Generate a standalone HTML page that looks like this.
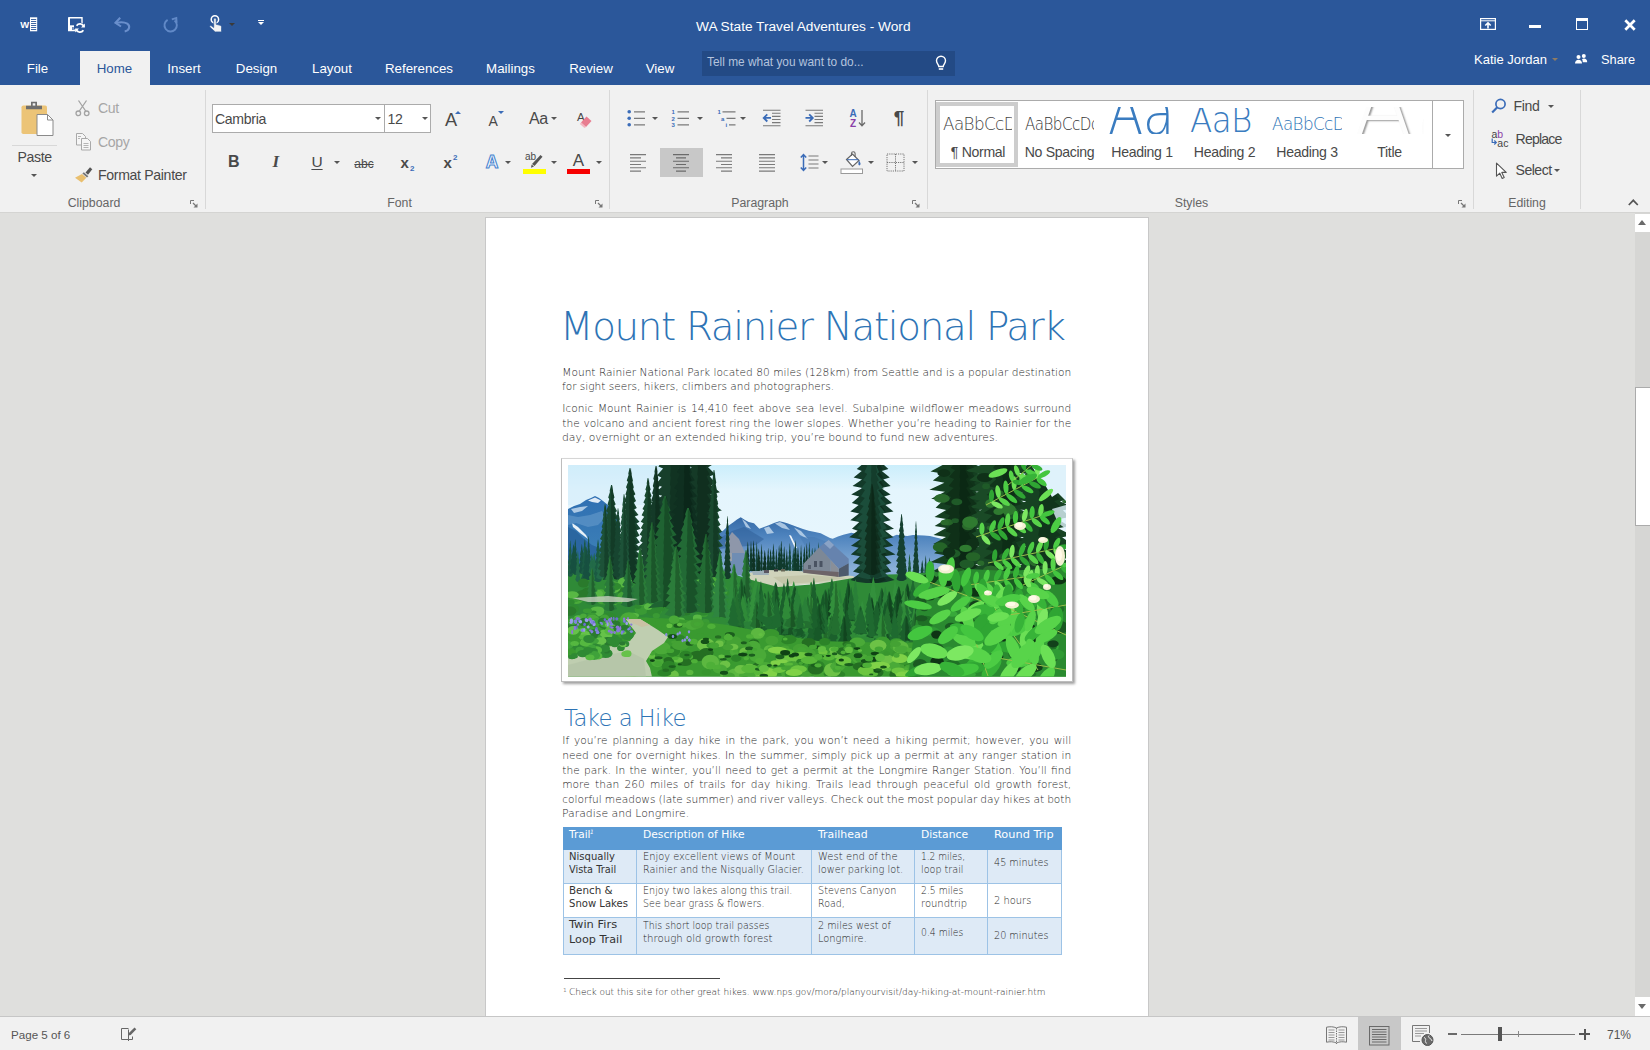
<!DOCTYPE html>
<html lang="en">
<head>
<meta charset="utf-8">
<title>WA State Travel Adventures - Word</title>
<style>
html,body{margin:0;padding:0;}
body{width:1650px;height:1050px;overflow:hidden;position:relative;background:#dfdfdd;font-family:"Liberation Sans",sans-serif;font-size:13px;color:#444;}
.a{position:absolute;white-space:nowrap;line-height:20px;}
.b{position:absolute;}
svg{position:absolute;overflow:visible;}
#titlebar{position:absolute;left:0;top:0;width:1650px;height:85px;background:#2b579a;}
#titlebar .a{color:#fff;}
.tab{font-size:13.300px;transform:translateX(-50%);}
#ribbon{position:absolute;left:0;top:85px;width:1650px;height:127px;background:#f1f1f1;border-bottom:1px solid #d4d4d2;}
#ribbon .a{color:#494949;font-size:13.5px;}
#ribbon .dis{color:#a6a6a6;}
#ribbon .gl{color:#666;font-size:12px;}
.vsep{position:absolute;top:5px;width:1px;height:119px;background:#d8d8d8;margin-left:-0.7px;}
.arr{position:absolute;width:0;height:0;border-left:3px solid transparent;border-right:3px solid transparent;border-top:3px solid #555;}
#page{position:absolute;left:485px;top:217px;width:662px;height:820px;background:#fff;border:1px solid #c8c8c8;}
#status{position:absolute;left:0;top:1016px;width:1650px;height:33px;background:#f1f1f1;border-top:1px solid #c6c6c6;}
#status .a{color:#555;font-size:12px;}
#vscroll{position:absolute;left:1635px;top:213px;width:15px;height:803px;background:#d6d6d4;}
.doc{font-family:"DejaVu Sans Light","DejaVu Sans","Liberation Sans",sans-serif;font-weight:200;}
</style>
</head>
<body>
<div id="titlebar">
  <!-- word icon -->
  <svg style="left:19px;top:15px" width="20" height="18" viewBox="0 0 20 18">
    <rect x="11" y="2.300" width="7.200" height="14" fill="#fff"/>
    <g stroke="#2b579a" stroke-width="0.900"><path d="M12 4.500h5.200M12 6.500h5.200M12 8.500h5.200M12 10.500h5.200M12 12.500h5.200M12 14.500h5.200"/></g>
    <text x="1.300" y="12.800" font-family="Liberation Sans, sans-serif" font-weight="bold" font-size="9.500" fill="#fff">W</text>
  </svg>
  <!-- save/sync icon -->
  <svg style="left:66px;top:15px" width="22" height="20" viewBox="0 0 22 20">
    <path d="M2.800 2.800H16V10" fill="none" stroke="#fff" stroke-width="1.400"/>
    <path d="M3 2.300V15.300H9.500" fill="none" stroke="#fff" stroke-width="2"/>
    <rect x="3" y="10.300" width="5" height="5.500" fill="#fff"/>
    <rect x="6.300" y="12" width="1.300" height="3" fill="#2b579a"/>
    <circle cx="14" cy="13" r="5.600" fill="#2b579a"/>
    <path d="M17.900 11.600a4.100 4.100 0 0 0-7.300-.9" fill="none" stroke="#fff" stroke-width="1.700"/>
    <path d="M10.100 14.400a4.100 4.100 0 0 0 7.300.9" fill="none" stroke="#fff" stroke-width="1.700"/>
    <path d="M18.900 8.600v3.900h-3.900z" fill="#fff"/><path d="M9.100 17.400v-3.900h3.900z" fill="#fff"/>
  </svg>
  <!-- undo -->
  <svg style="left:113px;top:16px" width="20" height="17" viewBox="0 0 20 17" fill="none" stroke="#6a8fcc" stroke-width="2.100" stroke-linejoin="miter">
    <path d="M7.200 1.800L2.500 6.800l5.500 3.700"/><path d="M3 6.800c4-.8 8.300-1 11.300.8 3.200 2.300 2.300 6.800-2.600 7.900" />
  </svg>
  <!-- redo -->
  <svg style="left:161px;top:15px" width="20" height="19" viewBox="0 0 20 19" fill="none" stroke="#6189c7" stroke-width="1.900">
    <path d="M6.600 4.900a6.200 6.200 0 1 0 7 .6"/><path d="M10.800 4.300l4.500-1.300.3 4.800" stroke-linejoin="miter"/>
  </svg>
  <!-- touch -->
  <svg style="left:206px;top:13px" width="18" height="21" viewBox="0 0 18 21">
    <circle cx="8.900" cy="6.400" r="3.700" fill="none" stroke="#fff" stroke-width="1.500"/>
    <path d="M7.700 6.300a1.250 1.250 0 0 1 2.500 0v5l3.900 1c1 .3 1.400 1 1.400 2v4.600H9.200L4 14.300c-.8-1 .2-2.200 1.300-1.500l2.400 1.700z" fill="#f4f4f4" stroke="#2b579a" stroke-width=".7"/>
  </svg>
  <div class="arr" style="left:228.500px;top:23px;border-top-color:#3a3a3a"></div>
  <!-- customize -->
  <div class="b" style="left:258px;top:19.500px;width:6px;height:1.300px;background:#fff"></div>
  <div class="arr" style="left:258px;top:22px;border-top-color:#fff;border-left-width:3px;border-right-width:3px;border-top-width:3.500px"></div>

  <div class="a" id="wtitle" style="left:696px;top:16.800px;font-size:13.700px">WA State Travel Adventures - Word</div>

  <!-- window controls -->
  <svg style="left:1480px;top:18px" width="16" height="12" viewBox="0 0 16 12" fill="none" stroke="#fff">
    <rect x="0.600" y="0.600" width="14.800" height="10.800" stroke-width="1.200"/>
    <path d="M0.600 2.800h14.800" stroke-width="1"/>
    <path d="M8 10.500V5.500M5.300 7.500L8 4.800l2.700 2.700" stroke-width="1.600"/>
  </svg>
  <div class="b" style="left:1529px;top:25.300px;width:12px;height:2.400px;background:#fff"></div>
  <div class="b" style="left:1576px;top:18px;width:10px;height:8px;border:1px solid #fff;border-top-width:3px"></div>
  <svg style="left:1624px;top:19px" width="12" height="12" viewBox="0 0 12 12" stroke="#fff" stroke-width="2.700"><path d="M1.300 1.300l9.400 9.400M10.700 1.300l-9.400 9.400"/></svg>

  <!-- tabs -->
  <div class="b" style="left:79.5px;top:51px;width:70.5px;height:34px;background:#f1f1f1"></div>
  <div class="a tab" style="left:37.5px;top:59px">File</div>
  <div class="a tab" style="left:114.5px;top:59px;color:#2b579a">Home</div>
  <div class="a tab" style="left:184px;top:59px">Insert</div>
  <div class="a tab" style="left:256.5px;top:59px">Design</div>
  <div class="a tab" style="left:332px;top:59px">Layout</div>
  <div class="a tab" style="left:419px;top:59px">References</div>
  <div class="a tab" style="left:510.5px;top:59px">Mailings</div>
  <div class="a tab" style="left:591px;top:59px">Review</div>
  <div class="a tab" style="left:660px;top:59px">View</div>

  <!-- tell me -->
  <div class="b" style="left:702px;top:51px;width:253px;height:24.500px;background:#234a85"></div>
  <div class="a" id="tellme" style="left:707px;top:52px;font-size:11.900px;color:#b4c3dd">Tell me what you want to do...</div>
  <svg style="left:934px;top:54px" width="14" height="18" viewBox="0 0 14 18" fill="none" stroke="#fff" stroke-width="1.400">
    <path d="M4.800 12.500c0-2-2.300-3-2.300-5.700a4.500 4.500 0 0 1 9 0c0 2.700-2.300 3.700-2.300 5.700z"/>
    <path d="M4.800 15h4.400" stroke-width="1.600"/>
  </svg>

  <!-- user -->
  <div class="a" id="user" style="left:1474px;top:49.800px;font-size:13px">Katie Jordan</div>
  <div class="arr" style="left:1552px;top:58px;border-top-color:#8f7c63"></div>
  <svg style="left:1574px;top:53px" width="14" height="12" viewBox="0 0 14 12" fill="#fff">
    <circle cx="4.500" cy="4" r="2"/><path d="M1 10.500c0-2.500 1.500-3.800 3.500-3.800s3.500 1.300 3.500 3.800z"/>
    <circle cx="9.800" cy="3" r="2"/><path d="M8 6.200c.6-.4 1.200-.6 1.900-.6 2 0 3.300 1.400 3.300 3.600H8.800c0-1.200-.3-2.200-.8-3z"/>
  </svg>
  <div class="a" id="share" style="left:1601px;top:49.800px;font-size:12.800px">Share</div>
</div>
<div id="ribbon">
<svg style="left:20.0px;top:15.0px" width="35" height="37" viewBox="0 0 35 37" >
<rect x="1.500" y="5.500" width="25.500" height="28.500" rx="1.800" fill="#ecc477"/>
<path d="M6 9.300V5.800h5V1.800h6v4h5v3.500z" fill="#6e6e6e"/>
<rect x="12.700" y="3.300" width="2.600" height="2.300" fill="#f1f1f1"/>
<path d="M17 14.500h10.500l5.500 5.500v15.500h-16z" fill="#fff" stroke="#8a8a8a" stroke-width="1"/>
<path d="M27.500 14.500v5.500h5.500" fill="none" stroke="#8a8a8a" stroke-width="1"/>
</svg>
<div class="b" style="left:12.0px;top:60.0px;width:45.0px;height:1.0px;background:#d8d8d8"></div>
<div class="a " id="paste" style="left:34.6px;top:62.1px;font-size:14.1px;transform:translateX(-50%);letter-spacing:-0.33px;">Paste</div>
<div class="arr" style="left:31.0px;top:88.5px;border-top-color:#555"></div>
<svg style="left:75.0px;top:15.0px" width="16" height="17" viewBox="0 0 16 17" ><g fill="none" stroke="#a3a3a3" stroke-width="1.300"><path d="M3.500 0.500l7.500 11M11.500 0.500L4 11.500"/><circle cx="3.300" cy="13.300" r="2.300"/><circle cx="11.700" cy="13.300" r="2.300"/></g></svg>
<div class="a dis" id="cut" style="left:98.0px;top:13.1px;font-size:14.1px;letter-spacing:-0.33px;">Cut</div>
<svg style="left:75.0px;top:47.0px" width="17" height="19" viewBox="0 0 17 19" ><g fill="#f6f6f6" stroke="#a9a9a9" stroke-width="1"><path d="M1.500 1.500h6l3 3v8.500h-9z"/><path d="M6.500 6.500h6l3 3v8.500h-9z"/></g><g stroke="#b5b5b5" stroke-width="1"><path d="M8.500 11.500h5M8.500 13.500h5M8.500 15.500h5"/><path d="M3 4.500h3M3 6.500h2"/></g></svg>
<div class="a dis" id="copy" style="left:98.0px;top:47.4px;font-size:14.1px;letter-spacing:-0.33px;">Copy</div>
<svg style="left:74.0px;top:81.0px" width="19" height="17" viewBox="0 0 19 17" ><path d="M11.500 6.500L16 1.200l2.300 2L14 8.700z" fill="#555"/><path d="M9.800 6.200l4.600 4-1.400 1.400-4.600-4z" fill="#777"/><path d="M8 8l4.300 3.800-4.600 4.700L1 11.800z" fill="#e9bf6f"/></svg>
<div class="a " id="fp" style="left:98.0px;top:79.8px;font-size:14.1px;letter-spacing:-0.33px;">Format Painter</div>
<div class="a gl" id="gclip" style="left:94.0px;top:107.7px;font-size:12.3px;transform:translateX(-50%);">Clipboard</div>
<svg style="left:190.0px;top:114.5px" width="8" height="8" viewBox="0 0 8 8" ><path d="M0.5 4V0.5H4" fill="none" stroke="#777" stroke-width="1"/><path d="M3 3l3.5 3.500" stroke="#777" stroke-width="1.200"/><path d="M7.500 3.500v4h-4z" fill="#777"/></svg>
<div class="vsep" style="left:206.0px"></div>
<div class="b" style="left:212.0px;top:19.0px;width:172.5px;height:28.5px;box-sizing:border-box;background:#fff;border:1px solid #ababab"></div>
<div class="b" style="left:383.5px;top:19.0px;width:47.5px;height:28.5px;box-sizing:border-box;background:#fff;border:1px solid #ababab"></div>
<div class="a " id="cambria" style="left:215.0px;top:23.8px;font-size:14.1px;letter-spacing:-0.33px;">Cambria</div>
<div class="arr" style="left:375.0px;top:31.5px;border-top-color:#555"></div>
<div class="a " id="fs12" style="left:387.5px;top:23.8px;font-size:14.1px;letter-spacing:-0.33px;">12</div>
<div class="arr" style="left:421.5px;top:31.5px;border-top-color:#555"></div>
<div class="a " id="growA" style="left:445.0px;top:24.7px;font-size:18.2px;">A</div>
<div class="b" style="left:455px;top:25.5px;width:0;height:0;border-left:3px solid transparent;border-right:3px solid transparent;border-bottom:3.500px solid #3b6cb8"></div>
<div class="a " id="shrinkA" style="left:488.5px;top:26.1px;font-size:14px;">A</div>
<div class="b" style="left:497.500px;top:25.5px;width:0;height:0;border-left:3px solid transparent;border-right:3px solid transparent;border-top:3.500px solid #3b6cb8"></div>
<div class="a " id="Aa" style="left:529.0px;top:23.5px;font-size:16px;letter-spacing:-0.5px;">Aa</div>
<div class="arr" style="left:551.0px;top:32.0px;border-top-color:#555"></div>
<div class="a " id="clrA" style="left:577.0px;top:22.0px;font-size:11.5px;">A</div>
<svg style="left:579.0px;top:30.0px" width="14" height="13" viewBox="0 0 14 13" ><path d="M7.500 1.500L12.500 6 7 12 2 7.500z" fill="#e87d90"/><path d="M2 7.500L7 12 5.500 13 0.800 9z" fill="#f3b5c0"/></svg>
<div class="a " id="bB" style="left:233.8px;top:67.2px;font-size:16px;transform:translateX(-50%);font-weight:bold;">B</div>
<div class="a " id="bI" style="left:275.8px;top:66.8px;font-size:17px;transform:translateX(-50%);font-style:italic;font-family:'Liberation Serif',serif;font-weight:bold;">I</div>
<div class="a " id="bU" style="left:317.0px;top:66.8px;font-size:15.5px;transform:translateX(-50%);text-decoration:underline;text-underline-offset:1.500px;">U</div>
<div class="arr" style="left:333.5px;top:75.5px;border-top-color:#555"></div>
<div class="a " id="babc" style="left:364.0px;top:68.8px;font-size:12px;transform:translateX(-50%);text-decoration:line-through;">abc</div>
<div class="a " id="xsub" style="left:400.5px;top:67.8px;font-size:15px;font-weight:bold;">x</div>
<div class="a " id="sub2" style="left:410.0px;top:73.7px;font-size:8px;color:#3b6cb8;font-weight:bold;">2</div>
<div class="a " id="xsup" style="left:443.5px;top:67.8px;font-size:15px;font-weight:bold;">x</div>
<div class="a " id="sup2" style="left:453.0px;top:62.7px;font-size:8px;color:#3b6cb8;font-weight:bold;">2</div>
<svg style="left:483px;top:68px" width="18" height="18" viewBox="0 0 18 18"><text x="9" y="15" text-anchor="middle" font-family="Liberation Sans, sans-serif" font-size="17.500" font-weight="bold" fill="#fff" stroke="#4a86d0" stroke-width="1.100">A</text></svg>
<div class="arr" style="left:505.0px;top:75.5px;border-top-color:#555"></div>
<div class="a " id="hlab" style="left:525.0px;top:62.0px;font-size:10px;">ab</div>
<svg style="left:526.5px;top:68.5px" width="16" height="16" viewBox="0 0 16 16" ><path d="M13.500 1l2 1.800L7.500 12 5 10z" fill="#555"/><path d="M4.600 10.600l2.400 2-3 1.200z" fill="#555"/></svg>
<div class="b" style="left:523.0px;top:84.0px;width:23.0px;height:5.0px;background:#ffff00"></div>
<div class="arr" style="left:550.5px;top:75.5px;border-top-color:#555"></div>
<div class="a " id="fcA" style="left:578.5px;top:66.1px;font-size:17px;transform:translateX(-50%);">A</div>
<div class="b" style="left:567.0px;top:84.0px;width:23.0px;height:5.0px;background:#f60000"></div>
<div class="arr" style="left:595.5px;top:75.5px;border-top-color:#555"></div>
<div class="a gl" id="gfont" style="left:399.5px;top:107.7px;font-size:12.3px;transform:translateX(-50%);">Font</div>
<svg style="left:595.0px;top:114.5px" width="8" height="8" viewBox="0 0 8 8" ><path d="M0.5 4V0.5H4" fill="none" stroke="#777" stroke-width="1"/><path d="M3 3l3.5 3.500" stroke="#777" stroke-width="1.200"/><path d="M7.500 3.500v4h-4z" fill="#777"/></svg>
<div class="vsep" style="left:610.0px"></div>
<svg style="left:627.0px;top:24.0px" width="19" height="18" viewBox="0 0 19 18" ><g fill="#3b6cb8"><circle cx="2.200" cy="2.800" r="1.800"/><circle cx="2.200" cy="9.300" r="1.800"/><circle cx="2.200" cy="15.800" r="1.800"/></g><g stroke="#7a7a7a" stroke-width="1.200"><path d="M7 2.800h11M7 9.300h11M7 15.800h11"/></g></svg>
<div class="arr" style="left:652.0px;top:32.0px;border-top-color:#555"></div>
<svg style="left:671.0px;top:23.0px" width="19" height="20" viewBox="0 0 19 20" ><g font-family="Liberation Sans, sans-serif" font-size="6" fill="#3b6cb8" font-weight="bold"><text x="0.500" y="6">1</text><text x="0.500" y="12.500">2</text><text x="0.500" y="19">3</text></g><g stroke="#7a7a7a" stroke-width="1.200"><path d="M6.500 3.800h11.500M6.500 10.300h11.500M6.500 16.800h11.500"/></g></svg>
<div class="arr" style="left:696.7px;top:32.0px;border-top-color:#555"></div>
<svg style="left:717.0px;top:23.0px" width="20" height="20" viewBox="0 0 20 20" ><g font-family="Liberation Sans, sans-serif" font-size="6" fill="#3b6cb8" font-weight="bold"><text x="0.500" y="6">1</text><text x="4" y="12.500">a</text><text x="8.500" y="19">i</text></g><g stroke="#7a7a7a" stroke-width="1.200"><path d="M5.500 3.800h13M9.500 10.300h9M12 16.800h6.500"/></g></svg>
<div class="arr" style="left:739.7px;top:32.0px;border-top-color:#555"></div>
<svg style="left:762.0px;top:24.0px" width="19" height="18" viewBox="0 0 19 18" ><g stroke="#7a7a7a" stroke-width="1.100"><path d="M1 1.200h17.500M10 4.300h8.500M10 7.400h8.500M10 10.500h8.500M10 13.600h8.500M1 16.700h17.500"/></g><path d="M9 8.900H2M5.300 5.300L1.700 8.900l3.600 3.600" fill="none" stroke="#3b6cb8" stroke-width="1.800"/></svg>
<svg style="left:805.0px;top:24.0px" width="19" height="18" viewBox="0 0 19 18" ><g stroke="#7a7a7a" stroke-width="1.100"><path d="M0.500 1.200h17.500M9.500 4.300h8.500M9.500 7.400h8.500M9.500 10.500h8.500M9.500 13.600h8.500M0.500 16.700h17.500"/></g><path d="M0.500 8.900h7M4.200 5.300l3.600 3.600-3.600 3.600" fill="none" stroke="#3b6cb8" stroke-width="1.800"/></svg>
<svg style="left:849.0px;top:24.0px" width="18" height="19" viewBox="0 0 18 19" ><g font-family="Liberation Sans, sans-serif" font-weight="bold" font-size="10"><text x="0.500" y="8" fill="#3b6cb8">A</text><text x="1" y="17.500" fill="#8a3fa8">Z</text></g><path d="M13 1v15.500M10 13.500l3 3.300 3-3.300" fill="none" stroke="#6a6a6a" stroke-width="1.300"/></svg>
<div class="a " id="pil" style="left:899.0px;top:22.9px;font-size:19px;transform:translateX(-50%);font-weight:bold;">¶</div>
<div class="b" style="left:659.5px;top:63.0px;width:43.5px;height:29.0px;background:#c8c8c8"></div>
<svg style="left:630.0px;top:69.2px" width="17" height="18" viewBox="0 0 17 18" ><path d="M0 0.6h16M0 3.9h11M0 7.2h16M0 10.5h11M0 13.8h16M0 17.1h11" stroke="#7a7a7a" stroke-width="1.100" fill="none"/></svg>
<svg style="left:672.5px;top:69.2px" width="17" height="18" viewBox="0 0 17 18" ><path d="M0 0.6h16M3 3.9h10M0 7.2h16M3 10.5h10M0 13.8h16M3 17.1h10" stroke="#6a6a6a" stroke-width="1.100" fill="none"/></svg>
<svg style="left:715.5px;top:69.2px" width="17" height="18" viewBox="0 0 17 18" ><path d="M0 0.6h16M5 3.9h11M0 7.2h16M5 10.5h11M0 13.8h16M5 17.1h11" stroke="#7a7a7a" stroke-width="1.100" fill="none"/></svg>
<svg style="left:758.5px;top:69.2px" width="17" height="18" viewBox="0 0 17 18" ><path d="M0 0.6h16M0 3.9h16M0 7.2h16M0 10.5h16M0 13.8h16M0 17.1h16" stroke="#7a7a7a" stroke-width="1.100" fill="none"/></svg>
<svg style="left:800.0px;top:68.0px" width="19" height="19" viewBox="0 0 19 19" ><path d="M3.500 1.500v16M0.800 4.500L3.500 1.500l2.700 3M0.800 14.500l2.700 3 2.700-3" fill="none" stroke="#3b6cb8" stroke-width="1.500"/><g stroke="#7a7a7a" stroke-width="1.200"><path d="M8.500 3h10M8.500 7h10M8.500 11h10M8.500 15h10"/></g></svg>
<div class="arr" style="left:822.3px;top:75.5px;border-top-color:#555"></div>
<svg style="left:840.0px;top:66.0px" width="24" height="23" viewBox="0 0 24 23" ><path d="M6.500 8.500l6-5.500 6.500 6.500-6.500 6z" fill="#fff" stroke="#666" stroke-width="1.200"/><path d="M11.500 5V2.500a1.800 1.800 0 0 1 3.600 0V6" fill="none" stroke="#666" stroke-width="1.100"/><path d="M19 9.500c1.800 2.500 2 4 .8 4.800-1.300.5-2-1-.8-4.800z" fill="#3b6cb8"/><path d="M7 8.700h11.500" stroke="#3b6cb8" stroke-width="1"/><rect x="1" y="18" width="21.500" height="4.500" fill="#fff" stroke="#9a9a9a" stroke-width="1"/></svg>
<div class="arr" style="left:868.0px;top:75.5px;border-top-color:#555"></div>
<svg style="left:886.0px;top:67.5px" width="19" height="19" viewBox="0 0 19 19" ><g stroke="#777" stroke-width="1" stroke-dasharray="1.200 1" fill="none"><rect x="1" y="1" width="17" height="17"/><path d="M9.500 1v17M1 9.500h17"/></g></svg>
<div class="arr" style="left:912.3px;top:75.5px;border-top-color:#555"></div>
<div class="a gl" id="gpara" style="left:760.0px;top:107.7px;font-size:12.3px;transform:translateX(-50%);">Paragraph</div>
<svg style="left:912.0px;top:114.5px" width="8" height="8" viewBox="0 0 8 8" ><path d="M0.5 4V0.5H4" fill="none" stroke="#777" stroke-width="1"/><path d="M3 3l3.5 3.500" stroke="#777" stroke-width="1.200"/><path d="M7.500 3.500v4h-4z" fill="#777"/></svg>
<div class="vsep" style="left:927.5px"></div>
<div class="b" style="left:935.0px;top:15.0px;width:528.5px;height:68.5px;box-sizing:border-box;background:#fff;border:1px solid #ababab"></div>
<div class="b" style="left:1432.0px;top:15.5px;width:1.0px;height:67.5px;background:#ababab"></div>
<div class="b" style="left:936.0px;top:17.0px;width:82.0px;height:64.5px;box-sizing:border-box;border:4px solid #cdcdcd"></div>
<div class="arr" style="left:1444.5px;top:49.0px;border-top-color:#555"></div>
<div class="a " id="st0" style="left:978.0px;top:57.4px;font-size:14.1px;transform:translateX(-50%);letter-spacing:-0.33px;">¶ Normal</div>
<div class="a " id="st1" style="left:1059.5px;top:57.4px;font-size:14.1px;transform:translateX(-50%);letter-spacing:-0.33px;">No Spacing</div>
<div class="a " id="st2" style="left:1142.0px;top:57.4px;font-size:14.1px;transform:translateX(-50%);letter-spacing:-0.33px;">Heading 1</div>
<div class="a " id="st3" style="left:1224.5px;top:57.4px;font-size:14.1px;transform:translateX(-50%);letter-spacing:-0.33px;">Heading 2</div>
<div class="a " id="st4" style="left:1307.0px;top:57.4px;font-size:14.1px;transform:translateX(-50%);letter-spacing:-0.33px;">Heading 3</div>
<div class="a " id="st5" style="left:1389.5px;top:57.4px;font-size:14.1px;transform:translateX(-50%);letter-spacing:-0.33px;">Title</div>
<div class="b" style="left:943.0px;top:19.0px;width:68.6px;height:32.0px;overflow:hidden"><div class="a" id="pv0" style="left:0px;top:10.1px;line-height:20px;font-size:16.8px;color:#444;transform-origin:0 50%;transform:scaleX(1);font-family:'DejaVu Sans Light','DejaVu Sans',sans-serif;font-weight:200;letter-spacing:-0.6px;">AaBbCcDd</div></div>
<div class="b" style="left:1025.0px;top:19.0px;width:69.0px;height:32.0px;overflow:hidden"><div class="a" id="pv1" style="left:0px;top:10.1px;line-height:20px;font-size:16.8px;color:#333;transform-origin:0 50%;transform:scaleX(0.9);font-family:'DejaVu Sans Light','DejaVu Sans',sans-serif;font-weight:200;letter-spacing:-0.6px;">AaBbCcDd</div></div>
<div class="b" style="left:1107.0px;top:22.0px;width:67.0px;height:26.5px;overflow:hidden"><div class="a" id="pv2" style="left:1px;top:-23.8px;line-height:60px;font-size:60px;color:#3a7cc0;transform-origin:0 50%;transform:scaleX(0.86);font-family:'DejaVu Sans Light','DejaVu Sans',sans-serif;font-weight:200;letter-spacing:-0.6px;">Aa</div></div>
<div class="b" style="left:1190.0px;top:22.5px;width:66.0px;height:26.0px;overflow:hidden"><div class="a" id="pv3" style="left:0px;top:-9.1px;line-height:44px;font-size:35px;color:#3a7cc0;transform-origin:0 50%;transform:scaleX(0.93);font-family:'DejaVu Sans Light','DejaVu Sans',sans-serif;font-weight:200;letter-spacing:-0.6px;">AaB</div></div>
<div class="b" style="left:1272.0px;top:19.0px;width:70.0px;height:32.0px;overflow:hidden"><div class="a" id="pv4" style="left:0px;top:9.7px;line-height:20px;font-size:16.8px;color:#2e74b5;transform-origin:0 50%;transform:scaleX(1);font-family:'DejaVu Sans Light','DejaVu Sans',sans-serif;font-weight:200;letter-spacing:-0.6px;">AaBbCcDd</div></div>
<div class="b" style="left:1355.0px;top:22.0px;width:69.0px;height:27.0px;overflow:hidden"><div class="a" id="pv5" style="left:-4px;top:-54.0px;line-height:110px;font-size:104px;color:#fdfdfd;transform-origin:0 50%;transform:scaleX(0.9);font-family:'DejaVu Sans Light','DejaVu Sans',sans-serif;font-weight:200;letter-spacing:-0.6px;text-shadow:2px 1px 2px #9a9a9a;">Aa</div></div>
<div class="a gl" id="gsty" style="left:1191.5px;top:107.7px;font-size:12.3px;transform:translateX(-50%);">Styles</div>
<svg style="left:1457.5px;top:114.5px" width="8" height="8" viewBox="0 0 8 8" ><path d="M0.5 4V0.5H4" fill="none" stroke="#777" stroke-width="1"/><path d="M3 3l3.5 3.500" stroke="#777" stroke-width="1.200"/><path d="M7.500 3.500v4h-4z" fill="#777"/></svg>
<div class="vsep" style="left:1473.5px"></div>
<svg style="left:1491.0px;top:13.0px" width="16" height="16" viewBox="0 0 16 16" ><circle cx="9.500" cy="6" r="4.600" fill="none" stroke="#3b6cb8" stroke-width="1.700"/><path d="M6.300 9.300L1.200 14.500" stroke="#3b6cb8" stroke-width="2.200"/></svg>
<div class="a " id="find" style="left:1513.5px;top:11.3px;font-size:14.1px;letter-spacing:-0.33px;">Find</div>
<div class="arr" style="left:1547.6px;top:19.5px;border-top-color:#555"></div>
<svg style="left:1491.0px;top:44.0px" width="19" height="20" viewBox="0 0 19 20" ><g font-family="Liberation Sans, sans-serif" font-size="10.500"><text x="0.500" y="8.500" fill="#444">a</text><text x="6.300" y="8.500" fill="#8a3fa8">b</text><text x="6.300" y="18" fill="#444">ac</text></g><path d="M1.200 9.500v4h3.800M3.300 11.500l2 2-2 2" fill="none" stroke="#3b6cb8" stroke-width="1.200"/></svg>
<div class="a " id="repl" style="left:1515.5px;top:43.6px;font-size:14.1px;letter-spacing:-0.33px;letter-spacing:-0.8px;">Replace</div>
<svg style="left:1495.0px;top:77.0px" width="13" height="18" viewBox="0 0 13 18" ><path d="M1.500 1.200v13l3.300-3 2.400 5.300 2-.9-2.400-5.200h4.400z" fill="#fff" stroke="#555" stroke-width="1.100" stroke-linejoin="round"/></svg>
<div class="a " id="sel" style="left:1515.5px;top:75.4px;font-size:14.1px;letter-spacing:-0.33px;letter-spacing:-0.5px;">Select</div>
<div class="arr" style="left:1554.0px;top:84.0px;border-top-color:#555"></div>
<div class="a gl" id="gedit" style="left:1527.0px;top:107.7px;font-size:12.3px;transform:translateX(-50%);">Editing</div>
<div class="vsep" style="left:1581.0px"></div>
<svg style="left:1628.0px;top:114.0px" width="11" height="7" viewBox="0 0 11 7" ><path d="M0.800 6L5.300 1.300 9.800 6" fill="none" stroke="#555" stroke-width="1.700"/></svg>
</div>
<div id="page">
<div class="a dl" id="d1" style="left:73.6px;top:78.2px;font-size:39.4px;line-height:60px;color:#2e74b5;font-family:'DejaVu Sans Light','DejaVu Sans',sans-serif;font-weight:200;transform-origin:0 50%;transform:scaleX(0.9834);letter-spacing:-1.3px;">Mount Rainier National Park</div>
<div class="a dl" id="d2" style="left:76.3px;top:143.6px;font-size:10.6px;line-height:20px;color:#262626;font-family:'DejaVu Sans Light','DejaVu Sans',sans-serif;font-weight:200;word-spacing:0.127px;">Mount Rainier National Park located 80 miles (128km) from Seattle and is a popular destination</div>
<div class="a dl" id="d3" style="left:76.3px;top:158.0px;font-size:10.6px;line-height:20px;color:#262626;font-family:'DejaVu Sans Light','DejaVu Sans',sans-serif;font-weight:200;transform-origin:0 50%;transform:scaleX(0.9946);">for sight seers, hikers, climbers and photographers.</div>
<div class="a dl" id="d4" style="left:76.3px;top:179.6px;font-size:10.6px;line-height:20px;color:#262626;font-family:'DejaVu Sans Light','DejaVu Sans',sans-serif;font-weight:200;word-spacing:1.394px;">Iconic Mount Rainier is 14,410 feet above sea level. Subalpine wildflower meadows surround</div>
<div class="a dl" id="d5" style="left:76.3px;top:195.1px;font-size:10.6px;line-height:20px;color:#262626;font-family:'DejaVu Sans Light','DejaVu Sans',sans-serif;font-weight:200;word-spacing:0.341px;">the volcano and ancient forest ring the lower slopes. Whether you’re heading to Rainier for the</div>
<div class="a dl" id="d6" style="left:76.3px;top:208.7px;font-size:10.6px;line-height:20px;color:#262626;font-family:'DejaVu Sans Light','DejaVu Sans',sans-serif;font-weight:200;transform-origin:0 50%;transform:scaleX(1.0204);">day, overnight or an extended hiking trip, you’re bound to fund new adventures.</div>
<div class="b" style="left:74.5px;top:239.5px;width:512px;height:224.5px;background:#fff;border:1px solid #bdbdbd;border-top-color:#d6d6d6;box-sizing:border-box;box-shadow:1.5px 1.5px 2.5px rgba(0,0,0,.38)"></div>
<svg style="left:82px;top:247px;overflow:hidden" width="498" height="211.5" viewBox="0 0 498 211.5">
<defs><linearGradient id="sky" x1="0" y1="0" x2="0" y2="1"><stop offset="0" stop-color="#cbeefb"/><stop offset="0.12" stop-color="#e4f5fd"/><stop offset="1" stop-color="#eef8fd"/></linearGradient><linearGradient id="mt" x1="0" y1="0" x2="0" y2="1"><stop offset="0" stop-color="#2f6fb2"/><stop offset="1" stop-color="#3f83b8"/></linearGradient><linearGradient id="mt2" gradientUnits="userSpaceOnUse" x1="0" y1="52" x2="0" y2="104"><stop offset="0" stop-color="#3569a6"/><stop offset="0.35" stop-color="#4c82bd"/><stop offset="1" stop-color="#8ab0d8"/></linearGradient><clipPath id="pc"><rect x="0" y="0" width="498" height="211.5"/></clipPath></defs>
<g clip-path="url(#pc)">
<rect x="0" y="0" width="498" height="211.5" fill="url(#sky)"/>
<rect x="0" y="0" width="90" height="40" fill="#d3ecfa" opacity=".6"/>
<polygon points="0.0,44.0 6.0,41.0 12.0,39.0 18.0,35.0 23.0,33.0 27.0,31.0 31.0,33.0 35.0,36.0 40.0,40.0 46.0,48.0 52.0,60.0 52.0,100.0 0.0,100.0" fill="url(#mt)"/>
<polygon points="20.0,35.5 27.0,32.5 33.0,35.5 30.0,38.0 24.0,37.0" fill="#dfeaf6"/>
<polygon points="3.0,44.0 12.0,42.0 20.0,41.0 14.0,46.0 6.0,48.0" fill="#b9d3ea" opacity="0.9"/>
<polygon points="4.0,58.0 10.0,62.0 18.0,70.0 20.0,74.0 12.0,68.0 5.0,62.0" fill="#eaf2f8"/>
<polygon points="0.0,50.0 10.0,52.0 22.0,50.0 34.0,46.0 38.0,52.0 30.0,60.0 20.0,62.0 8.0,58.0 0.0,60.0" fill="#5f96c8" opacity="0.7"/>
<polygon points="0.0,62.0 8.0,66.0 16.0,74.0 24.0,80.0 34.0,84.0 44.0,86.0 44.0,100.0 0.0,100.0" fill="#2a66a0"/>
<polygon points="150.0,68.0 155.0,65.7 160.0,61.0 164.7,57.7 169.0,54.5 172.7,52.3 177.0,55.0 180.7,57.0 186.0,58.3 191.3,63.7 196.0,62.0 200.7,60.3 206.0,58.0 211.3,56.3 215.0,57.0 219.3,58.3 224.0,60.0 228.7,61.7 235.0,64.0 240.7,65.7 247.0,67.0 252.7,68.3 258.0,71.0 262.0,73.0 264.7,73.7 270.0,71.5 275.3,69.7 283.3,67.7 290.0,69.0 300.0,71.0 310.0,73.0 320.7,73.0 328.7,69.7 334.0,70.5 339.3,71.0 345.0,70.0 350.0,70.3 356.0,70.5 362.0,71.0 370.0,73.0 378.0,75.0 378.0,118.0 150.0,118.0" fill="url(#mt2)"/>
<polygon points="174.0,54.0 178.0,57.0 183.0,64.0 178.0,62.0" fill="#c4d9ee" opacity="0.8"/>
<polygon points="207.0,58.5 212.0,57.0 217.0,59.5 222.0,65.0 214.0,63.0" fill="#c4d9ee" opacity="0.8"/>
<polygon points="226.0,62.5 233.0,66.0 240.0,74.0 232.0,70.0" fill="#c4d9ee" opacity="0.8"/>
<polygon points="196.0,63.0 201.0,61.5 206.0,68.0 199.0,69.0" fill="#c4d9ee" opacity="0.8"/>
<polygon points="221.0,70.0 223.0,70.5 229.0,83.0 227.0,83.0" fill="#f2f7fb"/>
<polygon points="150.0,74.0 164.0,66.0 176.0,62.0 186.0,68.0 196.0,74.0 188.0,80.0 170.0,82.0 150.0,84.0" fill="#2f5f98" opacity="0.55"/>
<polygon points="232.0,72.0 246.0,72.0 262.0,78.0 262.0,90.0 240.0,86.0" fill="#3f73ad" opacity="0.35"/>
<polygon points="179.8,76.5 179.9,76.9 180.3,80.8 180.3,82.1 180.7,86.0 180.6,87.2 181.3,91.2 180.7,92.4 181.6,96.4 181.1,97.6 181.6,101.6 181.0,102.8 181.8,106.8 180.4,106.0 179.2,106.0 177.8,106.8 178.5,102.8 177.8,101.6 178.4,97.6 178.2,96.4 178.9,92.4 178.4,91.2 179.1,87.2 178.9,86.0 179.3,82.1 179.3,80.8 179.7,76.9" fill="#103a2c"/>
<polygon points="183.0,76.0 183.1,76.4 183.4,80.4 183.4,81.7 183.9,85.7 183.7,86.9 184.4,90.9 184.0,92.2 184.7,96.2 184.1,97.5 185.1,101.5 184.2,102.7 184.8,106.8 183.6,106.0 182.5,106.0 181.0,106.8 181.7,102.7 181.2,101.5 182.0,97.5 181.3,96.2 182.1,92.2 181.8,90.9 182.3,86.9 182.1,85.7 182.5,81.7 182.6,80.4 182.9,76.4" fill="#103a2c"/>
<polygon points="185.6,75.4 185.7,75.8 186.1,79.8 186.0,81.2 186.6,85.2 186.3,86.5 186.8,90.6 186.5,91.9 187.5,96.0 186.8,97.3 187.3,101.4 186.9,102.7 187.4,106.8 186.2,106.0 185.0,106.0 183.8,106.8 184.3,102.7 183.5,101.4 184.3,97.3 183.6,96.0 184.7,91.9 184.2,90.6 184.9,86.5 184.6,85.2 185.1,81.2 185.1,79.8 185.5,75.8" fill="#0f3324"/>
<polygon points="188.7,76.3 188.8,76.7 189.1,80.7 189.1,81.9 189.5,85.9 189.2,87.1 189.8,91.1 189.6,92.3 190.2,96.3 189.6,97.5 190.3,101.5 189.7,102.8 190.3,106.8 189.2,106.0 188.2,106.0 187.0,106.8 187.6,102.8 187.2,101.5 187.6,97.5 187.4,96.3 187.9,92.3 187.5,91.1 188.2,87.1 187.9,85.9 188.3,81.9 188.4,80.7 188.7,76.7" fill="#15463a"/>
<polygon points="190.8,83.6 190.9,84.0 191.4,88.0 191.3,89.3 192.1,93.4 191.7,94.7 192.5,98.7 192.3,100.0 192.7,104.1 192.3,105.4 191.4,106.0 190.1,106.0 189.2,105.4 188.6,104.1 189.3,100.0 189.0,98.7 189.6,94.7 189.4,93.4 190.2,89.3 190.0,88.0 190.7,84.0" fill="#0f3324"/>
<polygon points="193.5,78.6 193.6,79.0 193.9,83.0 193.9,84.3 194.4,88.3 194.1,89.6 194.5,93.6 194.3,94.8 194.8,98.8 194.3,100.1 194.9,104.1 194.6,105.4 193.9,106.0 193.1,106.0 192.6,105.4 192.1,104.1 192.5,100.1 192.0,98.8 192.7,94.8 192.6,93.6 192.9,89.6 192.7,88.3 193.2,84.3 193.2,83.0 193.5,79.0" fill="#103a2c"/>
<polygon points="196.8,84.8 196.9,85.2 197.4,89.1 197.4,90.2 198.2,94.1 197.7,95.3 198.6,99.2 198.2,100.3 198.8,104.2 198.1,105.4 197.5,106.0 196.2,106.0 195.5,105.4 194.5,104.2 195.4,100.3 194.8,99.2 195.9,95.3 195.5,94.1 196.2,90.2 196.1,89.1 196.7,85.2" fill="#0f3324"/>
<polygon points="200.2,82.9 200.3,83.3 200.8,87.4 200.6,88.8 201.2,92.9 201.1,94.3 201.8,98.5 201.2,99.9 202.1,104.0 201.5,105.4 200.7,106.0 199.7,106.0 199.1,105.4 198.4,104.0 199.2,99.9 198.7,98.5 199.3,94.3 199.1,92.9 199.7,88.8 199.7,87.4 200.1,83.3" fill="#103a2c"/>
<polygon points="202.6,84.1 202.7,84.5 203.2,88.5 203.1,89.7 203.8,93.7 203.5,94.9 204.2,98.9 203.7,100.1 204.5,104.1 203.7,105.4 203.2,106.0 202.0,106.0 201.4,105.4 200.4,104.1 201.2,100.1 200.9,98.9 201.8,94.9 201.4,93.7 202.1,89.7 201.9,88.5 202.5,84.5" fill="#103a2c"/>
<polygon points="205.4,78.5 205.5,78.9 205.8,82.9 205.9,84.2 206.3,88.2 206.2,89.5 206.8,93.5 206.4,94.8 207.3,98.8 206.5,100.1 207.3,104.1 206.6,105.4 205.9,106.0 204.8,106.0 204.3,105.4 203.3,104.1 204.1,100.1 203.6,98.8 204.5,94.8 204.1,93.5 204.7,89.5 204.3,88.2 205.0,84.2 204.9,82.9 205.3,78.9" fill="#103a2c"/>
<polygon points="208.4,83.8 208.5,84.2 208.8,88.2 208.8,89.5 209.3,93.5 209.1,94.8 209.7,98.8 209.3,100.1 210.0,104.1 209.4,105.4 208.8,106.0 207.9,106.0 207.4,105.4 207.0,104.1 207.4,100.1 207.1,98.8 207.7,94.8 207.5,93.5 207.9,89.5 207.9,88.2 208.3,84.2" fill="#103a2c"/>
<polygon points="211.1,80.1 211.2,80.5 211.6,84.6 211.6,86.0 212.2,90.1 211.9,91.5 212.8,95.7 212.2,97.1 213.2,101.2 212.4,102.6 212.8,106.8 211.7,106.0 210.6,106.0 209.3,106.8 209.8,102.6 209.0,101.2 210.0,97.1 209.5,95.7 210.4,91.5 210.1,90.1 210.7,86.0 210.6,84.6 211.0,80.5" fill="#103a2c"/>
<polygon points="213.3,75.7 213.4,76.1 213.8,80.1 213.7,81.4 214.2,85.5 214.0,86.7 214.8,90.8 214.4,92.1 215.1,96.1 214.6,97.4 215.4,101.4 214.5,102.7 215.0,106.8 213.9,106.0 212.7,106.0 211.3,106.8 211.9,102.7 211.4,101.4 212.0,97.4 211.6,96.1 212.4,92.1 211.9,90.8 212.6,86.7 212.2,85.5 212.8,81.4 212.8,80.1 213.2,76.1" fill="#103a2c"/>
<polygon points="216.2,81.2 216.3,81.6 216.7,85.6 216.7,86.9 217.1,90.9 216.9,92.2 217.7,96.2 217.3,97.5 218.1,101.5 217.4,102.7 218.2,106.8 216.7,106.0 215.7,106.0 214.4,106.8 215.0,102.7 214.3,101.5 215.3,97.5 214.6,96.2 215.5,92.2 215.1,90.9 215.7,86.9 215.7,85.6 216.1,81.6" fill="#103a2c"/>
<polygon points="218.8,84.0 218.9,84.3 219.3,88.3 219.2,89.6 219.8,93.6 219.5,94.9 220.1,98.9 219.9,100.1 220.3,104.1 219.9,105.4 219.3,106.0 218.3,106.0 217.7,105.4 217.3,104.1 217.8,100.1 217.5,98.9 218.1,94.9 217.8,93.6 218.3,89.6 218.4,88.3 218.8,84.3" fill="#103a2c"/>
<polygon points="221.8,78.1 221.9,78.4 222.3,82.5 222.3,83.8 222.8,87.9 222.6,89.2 223.3,93.3 222.8,94.6 223.8,98.7 222.9,100.0 223.7,104.1 223.2,105.4 222.4,106.0 221.2,106.0 220.4,105.4 219.8,104.1 220.6,100.0 219.7,98.7 220.7,94.6 220.3,93.3 221.1,89.2 220.8,87.9 221.3,83.8 221.3,82.5 221.7,78.4" fill="#15463a"/>
<polygon points="225.3,82.3 225.3,82.7 225.7,86.6 225.7,87.7 226.2,91.6 225.9,92.8 226.5,96.7 226.3,97.8 226.7,101.7 226.3,102.9 227.0,106.8 225.7,106.0 224.8,106.0 223.8,106.8 224.2,102.9 223.8,101.7 224.4,97.8 223.9,96.7 224.6,92.8 224.5,91.6 224.9,87.7 224.9,86.6 225.2,82.7" fill="#15463a"/>
<polygon points="227.4,75.3 227.5,75.7 227.9,79.8 227.9,81.1 228.3,85.2 228.3,86.5 228.7,90.6 228.5,91.9 229.3,96.0 228.6,97.3 229.7,101.4 228.8,102.7 229.8,106.8 228.0,106.0 226.8,106.0 225.3,106.8 226.2,102.7 225.1,101.4 226.1,97.3 225.6,96.0 226.2,91.9 225.9,90.6 226.5,86.5 226.3,85.2 226.9,81.1 226.9,79.8 227.3,75.7" fill="#103a2c"/>
<polygon points="230.0,82.2 230.1,82.6 230.5,86.5 230.5,87.7 231.1,91.6 230.7,92.7 231.6,96.6 231.0,97.8 232.0,101.7 231.4,102.8 232.2,106.8 230.6,106.0 229.4,106.0 228.0,106.8 228.6,102.8 227.8,101.7 229.0,97.8 228.6,96.6 229.2,92.7 228.8,91.6 229.5,87.7 229.4,86.5 229.9,82.6" fill="#103a2c"/>
<polygon points="233.1,79.5 233.1,79.9 233.4,83.8 233.4,85.0 233.8,88.9 233.7,90.1 234.1,94.0 233.9,95.2 234.4,99.1 233.9,100.3 234.5,104.2 233.9,105.4 233.5,106.0 232.6,106.0 232.1,105.4 231.6,104.2 232.2,100.3 231.6,99.1 232.2,95.2 231.9,94.0 232.5,90.1 232.3,88.9 232.7,85.0 232.7,83.8 233.0,79.9" fill="#103a2c"/>
<polygon points="236.3,81.2 236.4,81.5 236.9,85.6 236.9,86.8 237.4,90.9 237.2,92.1 237.9,96.2 237.5,97.4 238.4,101.5 237.5,102.7 238.1,106.8 236.9,106.0 235.7,106.0 234.4,106.8 235.3,102.7 234.4,101.5 235.3,97.4 234.9,96.2 235.6,92.1 235.2,90.9 235.8,86.8 235.8,85.6 236.2,81.5" fill="#103a2c"/>
<polygon points="238.8,77.9 238.8,78.3 239.1,82.4 239.2,83.7 239.5,87.8 239.3,89.1 240.0,93.2 239.5,94.5 240.1,98.6 239.7,100.0 240.1,104.0 239.7,105.4 239.2,106.0 238.3,106.0 237.8,105.4 237.4,104.0 237.9,100.0 237.3,98.6 238.0,94.5 237.8,93.2 238.2,89.1 238.0,87.8 238.4,83.7 238.4,82.4 238.7,78.3" fill="#0f3324"/>
<polygon points="241.4,76.4 241.4,76.8 241.8,80.8 241.7,82.0 242.1,86.0 242.0,87.2 242.5,91.2 242.3,92.4 243.0,96.4 242.5,97.6 243.1,101.6 242.5,102.8 243.1,106.8 241.9,106.0 240.9,106.0 239.4,106.8 240.3,102.8 239.8,101.6 240.4,97.6 239.7,96.4 240.6,92.4 240.3,91.2 240.8,87.2 240.6,86.0 241.0,82.0 241.0,80.8 241.3,76.8" fill="#15463a"/>
<polygon points="244.2,82.7 244.3,83.1 244.8,87.3 244.8,88.7 245.3,92.8 245.2,94.2 246.1,98.4 245.6,99.8 246.1,104.0 245.5,105.4 244.8,106.0 243.6,106.0 242.9,105.4 241.9,104.0 242.8,99.8 242.3,98.4 243.3,94.2 242.9,92.8 243.7,88.7 243.6,87.3 244.1,83.1" fill="#15463a"/>
<polygon points="247.0,82.4 247.1,82.8 247.6,86.7 247.5,87.8 248.2,91.7 247.9,92.8 248.7,96.7 248.3,97.8 249.1,101.7 248.3,102.9 249.1,106.8 247.6,106.0 246.3,106.0 244.8,106.8 245.4,102.9 244.7,101.7 245.8,97.8 245.2,96.7 246.1,92.8 245.8,91.7 246.3,87.8 246.4,86.7 246.9,82.8" fill="#15463a"/>
<polygon points="250.4,77.0 250.4,77.4 250.7,81.3 250.7,82.5 251.0,86.4 250.9,87.6 251.5,91.5 251.0,92.7 251.7,96.6 251.3,97.7 252.0,101.7 251.3,102.8 251.9,106.8 250.8,106.0 249.9,106.0 248.8,106.8 249.4,102.8 248.8,101.7 249.5,97.7 249.1,96.6 249.6,92.7 249.3,91.5 249.9,87.6 249.7,86.4 250.1,82.5 250.0,81.3 250.3,77.4" fill="#15463a"/>
<polygon points="330.9,91.9 331.0,92.3 331.3,96.2 331.3,97.4 331.9,101.3 331.6,102.5 332.2,106.5 331.8,107.7 332.7,111.6 332.0,112.8 332.5,116.8 331.4,116.0 330.5,116.0 329.5,116.8 330.0,112.8 329.4,111.6 329.9,107.7 329.7,106.5 330.3,102.5 329.9,101.3 330.5,97.4 330.5,96.2 330.9,92.3" fill="#1c5a3c"/>
<polygon points="334.3,94.0 334.3,94.4 334.7,98.4 334.8,99.6 335.4,103.6 335.1,104.9 335.6,108.9 335.3,110.1 335.9,114.1 335.4,115.4 334.8,116.0 333.8,116.0 333.3,115.4 332.8,114.1 333.2,110.1 332.7,108.9 333.5,104.9 333.3,103.6 333.8,99.6 333.8,98.4 334.2,94.4" fill="#15463a"/>
<polygon points="337.4,95.8 337.5,96.2 338.0,100.3 338.1,101.7 338.9,105.8 338.4,107.2 339.5,111.3 338.6,112.6 339.8,116.8 338.0,116.0 336.7,116.0 335.3,116.8 335.9,112.6 335.1,111.3 336.2,107.2 336.0,105.8 336.6,101.7 336.6,100.3 337.3,96.2" fill="#15463a"/>
<polygon points="341.5,89.2 341.6,89.6 342.1,93.5 342.0,94.7 342.7,98.7 342.5,99.9 343.2,103.9 342.6,105.1 343.6,109.0 343.0,110.2 343.5,114.2 343.0,115.4 342.1,116.0 340.8,116.0 339.9,115.4 339.4,114.2 340.1,110.2 339.4,109.0 340.2,105.1 339.9,103.9 340.7,99.9 340.4,98.7 340.9,94.7 340.9,93.5 341.3,89.6" fill="#1c5a3c"/>
<polygon points="346.3,92.2 346.4,92.6 346.8,96.5 346.9,97.7 347.4,101.6 347.3,102.7 347.8,106.6 347.4,107.8 348.3,111.7 347.6,112.8 348.5,116.8 346.9,116.0 345.7,116.0 344.4,116.8 344.9,112.8 344.1,111.7 345.1,107.8 344.5,106.6 345.6,102.7 345.2,101.6 345.7,97.7 345.8,96.5 346.2,92.6" fill="#1c5a3c"/>
<polygon points="349.4,90.6 349.5,91.0 350.0,95.1 350.0,96.4 350.6,100.5 350.6,101.8 351.3,105.9 350.6,107.3 352.0,111.3 350.7,112.7 352.0,116.8 350.1,116.0 348.7,116.0 347.1,116.8 347.9,112.7 347.2,111.3 347.9,107.3 347.4,105.9 348.3,101.8 347.9,100.5 348.7,96.4 348.7,95.1 349.3,91.0" fill="#15463a"/>
<polygon points="354.2,95.1 354.3,95.4 355.1,99.7 355.0,101.1 355.8,105.4 355.3,106.8 356.8,111.1 355.6,112.5 356.8,116.8 354.9,116.0 353.5,116.0 351.5,116.8 352.7,112.5 352.0,111.1 352.9,106.8 352.6,105.4 353.5,101.1 353.4,99.7 354.1,95.4" fill="#15463a"/>
<polygon points="357.7,90.2 357.7,90.6 358.2,94.7 358.2,96.1 358.6,100.2 358.6,101.6 359.2,105.7 358.8,107.1 359.8,111.2 359.0,112.6 359.7,116.8 358.2,116.0 357.1,116.0 355.8,116.8 356.4,112.6 355.5,111.2 356.5,107.1 356.3,105.7 356.8,101.6 356.6,100.2 357.2,96.1 357.2,94.7 357.6,90.6" fill="#15463a"/>
<polygon points="361.5,92.4 361.6,92.8 362.1,96.6 362.1,97.8 362.7,101.7 362.5,102.8 363.2,106.7 362.9,107.8 363.8,111.7 363.1,112.9 363.5,116.8 362.2,116.0 360.8,116.0 359.2,116.8 360.1,112.9 359.3,111.7 360.0,107.8 359.4,106.7 360.4,102.8 360.2,101.7 360.8,97.8 360.9,96.6 361.4,92.8" fill="#15463a"/>
<polygon points="365.0,95.8 365.1,96.2 365.5,100.3 365.5,101.7 366.3,105.8 365.8,107.2 366.6,111.3 366.0,112.6 366.8,116.8 365.5,116.0 364.5,116.0 363.4,116.8 364.0,112.6 363.3,111.3 364.1,107.2 363.8,105.8 364.4,101.7 364.5,100.3 364.9,96.2" fill="#1c5a3c"/>
<polygon points="180.0,108.0 200.0,105.0 230.0,106.0 252.0,108.0 285.0,111.0 292.0,115.0 260.0,118.0 230.0,120.0 205.0,123.0 190.0,120.0 181.0,114.0" fill="#cfd3bb"/>
<polygon points="205.0,112.0 240.0,110.0 280.0,113.0 250.0,117.0 215.0,119.0" fill="#c4c6aa"/>
<polygon points="184.0,106.0 200.0,106.0 201.0,110.0 185.0,110.0" fill="#9fb0b8"/>
<rect x="196" y="105" width="5" height="3" fill="#5a5560"/><rect x="206" y="104" width="4" height="2.500" fill="#444"/><rect x="213" y="104" width="4" height="2.500" fill="#665"/>
<polygon points="157.0,78.0 164.0,67.0 171.0,74.0 177.0,88.0 160.0,88.0" fill="#8e97aa"/>
<polygon points="157.0,88.0 178.0,88.0 178.0,110.0 157.0,110.0" fill="#6f8db3"/>
<polygon points="157.0,88.0 164.0,88.0 164.0,96.0 157.0,96.0" fill="#9aa0a8"/>
<polygon points="235.3,99.0 243.0,91.0 251.3,82.3 257.0,88.0 262.7,95.0 262.7,109.7 235.3,107.7" fill="#7d8896"/>
<polygon points="251.3,82.3 256.0,78.5 260.7,75.0 270.0,84.0 280.7,93.7 280.7,98.3 270.7,103.7 262.7,95.0" fill="#6683ae"/>
<polygon points="256.0,78.5 260.7,75.0 266.0,80.0 262.0,84.0" fill="#8aa3c6"/>
<polygon points="270.7,103.7 280.7,98.3 280.7,110.5 270.7,112.0" fill="#4e5a6c"/>
<polygon points="262.7,95.0 270.7,103.7 270.7,112.0 262.7,109.7" fill="#8a8f98"/>
<polygon points="235.3,104.5 270.7,107.0 270.7,112.0 235.3,107.7" fill="#6d6468"/>
<rect x="246" y="96" width="3" height="6" fill="#4a5362"/><rect x="251.500" y="96" width="3" height="6" fill="#4a5362"/><rect x="240" y="100" width="3" height="4" fill="#56606e"/>
<polygon points="0.0,100.0 40.0,96.0 80.0,100.0 150.0,104.0 180.0,114.0 210.0,122.0 250.0,119.0 285.0,113.0 300.0,110.0 340.0,109.0 380.0,106.0 498.0,100.0 498.0,212.0 0.0,212.0" fill="#2f8a37"/>
<polygon points="2.2,75.4 2.4,75.7 2.9,80.1 2.8,81.5 3.5,86.0 3.3,87.4 4.0,91.9 3.6,93.3 4.6,97.8 3.8,99.2 5.0,103.7 3.7,105.1 5.0,109.6 3.9,111.0 3.1,111.7 1.4,111.7 0.3,111.0 -0.7,109.6 0.4,105.1 -0.6,103.7 0.5,99.2 -0.2,97.8 0.9,93.3 0.6,91.9 1.3,87.4 1.0,86.0 1.7,81.5 1.6,80.1 2.1,75.7" fill="#1b5a43"/>
<polygon points="5.6,79.3 5.7,79.6 6.7,84.2 6.6,85.8 7.4,90.4 7.2,92.0 8.3,96.6 7.9,98.2 9.2,102.8 7.6,104.4 9.0,109.0 6.7,108.2 4.5,108.2 1.6,109.0 3.3,104.4 1.5,102.8 3.2,98.2 2.4,96.6 4.0,92.0 3.7,90.4 4.6,85.8 4.6,84.2 5.4,79.6" fill="#175040"/>
<polygon points="7.3,74.2 7.4,74.5 7.9,78.9 7.8,80.3 8.5,84.7 8.1,86.0 9.2,90.4 8.4,91.8 9.7,96.2 8.9,97.5 10.2,101.9 9.1,103.3 10.0,107.7 9.1,109.0 8.1,109.7 6.5,109.7 5.6,109.0 4.7,107.7 5.5,103.3 4.4,101.9 5.7,97.5 5.3,96.2 6.1,91.8 5.6,90.4 6.3,86.0 5.9,84.7 6.7,80.3 6.6,78.9 7.2,74.5" fill="#175040"/>
<polygon points="9.9,85.5 10.0,85.8 10.5,90.4 10.5,91.9 11.3,96.5 11.0,98.0 11.8,102.6 11.3,104.1 12.1,108.7 11.5,110.2 12.6,114.8 11.4,116.3 10.7,117.0 9.1,117.0 8.4,116.3 7.3,114.8 8.5,110.2 7.6,108.7 8.5,104.1 8.1,102.6 8.9,98.0 8.4,96.5 9.2,91.9 9.2,90.4 9.8,85.8" fill="#226a48"/>
<polygon points="13.8,79.0 14.0,79.3 14.5,83.7 14.7,85.0 15.5,89.4 15.2,90.8 16.1,95.2 15.6,96.5 17.1,100.9 15.6,102.2 17.3,106.6 15.5,108.0 14.7,108.7 12.9,108.7 11.9,108.0 10.9,106.6 12.0,102.2 10.6,100.9 12.4,96.5 11.5,95.2 12.6,90.8 12.1,89.4 13.1,85.0 13.0,83.7 13.7,79.3" fill="#175040"/>
<polygon points="16.8,74.3 17.0,74.6 17.6,79.0 17.5,80.4 18.4,84.8 18.1,86.2 19.2,90.6 18.5,92.0 19.7,96.4 19.0,97.8 20.3,102.2 19.4,103.6 20.4,108.0 19.0,109.4 20.8,113.8 19.0,115.2 18.0,115.9 15.7,115.9 14.5,115.2 12.9,113.8 14.6,109.4 12.6,108.0 14.6,103.6 13.4,102.2 14.9,97.8 14.1,96.4 15.1,92.0 14.4,90.6 15.7,86.2 15.2,84.8 16.1,80.4 16.0,79.0 16.7,74.6" fill="#1b5a43"/>
<polygon points="18.3,81.7 18.4,82.0 19.1,86.4 19.1,87.7 20.1,92.0 19.5,93.3 20.8,97.7 20.0,98.9 21.2,103.3 20.7,104.6 22.1,108.9 20.6,110.2 21.7,114.6 20.5,115.9 19.4,116.6 17.2,116.6 15.8,115.9 14.3,114.6 16.0,110.2 14.9,108.9 15.9,104.6 15.1,103.3 16.8,98.9 16.0,97.7 16.9,93.3 16.8,92.0 17.6,87.7 17.4,86.4 18.1,82.0" fill="#175040"/>
<polygon points="20.6,71.1 20.8,71.4 21.2,75.7 21.1,77.0 21.6,81.4 21.4,82.6 22.1,87.0 21.7,88.3 22.8,92.6 22.2,93.9 23.3,98.3 22.2,99.6 23.4,103.9 22.5,105.2 23.1,109.6 22.5,110.8 21.4,111.5 19.8,111.5 18.7,110.8 18.3,109.6 18.9,105.2 17.9,103.9 19.0,99.6 18.0,98.3 19.4,93.9 18.7,92.6 19.4,88.3 19.1,87.0 19.9,82.6 19.6,81.4 20.1,77.0 20.1,75.7 20.5,71.4" fill="#175040"/>
<polygon points="23.7,89.2 23.9,89.5 25.0,94.2 24.9,95.8 26.1,100.5 25.8,102.1 27.6,106.8 25.8,108.3 24.7,109.0 22.7,109.0 21.7,108.3 20.6,106.8 21.6,102.1 20.9,100.5 22.5,95.8 22.6,94.2 23.6,89.5" fill="#226a48"/>
<polygon points="26.2,87.9 26.4,88.2 27.1,92.7 27.2,94.1 28.2,98.6 27.7,100.0 28.9,104.5 28.0,105.9 29.9,110.4 28.0,111.8 29.2,116.3 27.2,115.5 25.3,115.5 22.6,116.3 24.0,111.8 22.6,110.4 24.4,105.9 23.9,104.5 25.0,100.0 24.2,98.6 25.4,94.1 25.2,92.7 26.1,88.2" fill="#226a48"/>
<polygon points="30.0,74.4 30.2,74.7 30.9,79.2 30.8,80.6 31.7,85.2 31.2,86.6 32.2,91.1 31.5,92.5 32.8,97.1 31.9,98.5 33.2,103.0 32.6,104.4 33.5,109.0 32.7,110.4 33.7,114.9 32.7,116.3 31.1,117.0 28.9,117.0 27.4,116.3 25.8,114.9 27.3,110.4 25.8,109.0 27.8,104.4 26.7,103.0 28.2,98.5 26.9,97.1 28.6,92.5 27.5,91.1 28.9,86.6 28.3,85.2 29.2,80.6 29.2,79.2 29.9,74.7" fill="#1b5a43"/>
<polygon points="31.9,84.9 32.0,85.2 32.7,89.5 32.8,90.8 33.9,95.2 33.2,96.5 34.4,100.9 34.1,102.2 35.7,106.6 34.4,107.9 35.6,112.3 34.4,113.6 32.9,114.3 30.8,114.3 29.6,113.6 28.0,112.3 29.8,107.9 28.1,106.6 29.8,102.2 29.3,100.9 30.6,96.5 29.9,95.2 31.1,90.8 30.9,89.5 31.7,85.2" fill="#226a48"/>
<polygon points="36.2,83.9 36.3,84.2 37.1,88.7 37.0,90.0 37.9,94.4 37.5,95.8 38.6,100.2 37.8,101.6 39.4,106.0 38.3,107.4 39.0,111.8 37.1,110.9 35.3,110.9 32.8,111.8 34.3,107.4 33.2,106.0 34.4,101.6 34.0,100.2 35.0,95.8 34.3,94.4 35.3,90.0 35.4,88.7 36.0,84.2" fill="#175040"/>
<polygon points="39.0,74.4 39.2,74.7 39.8,79.2 39.7,80.6 40.5,85.1 40.0,86.6 40.9,91.1 40.5,92.5 41.7,97.0 40.7,98.4 42.1,102.9 40.9,104.3 41.8,108.9 39.9,108.0 38.2,108.0 36.2,108.9 37.3,104.3 36.0,102.9 37.1,98.4 36.7,97.0 37.7,92.5 37.2,91.1 37.9,86.6 37.7,85.1 38.3,80.6 38.3,79.2 38.9,74.7" fill="#1b5a43"/>
<polygon points="43.5,20.0 44.0,20.1 45.0,25.5 45.1,27.0 46.5,32.4 45.5,33.9 47.7,39.2 46.3,40.8 49.0,46.1 47.3,47.7 50.4,53.0 47.5,54.6 50.7,59.9 48.3,61.5 51.7,66.8 49.4,68.4 52.3,73.7 48.9,75.3 52.4,80.6 49.9,82.2 52.4,87.5 50.1,89.0 53.8,94.4 48.8,95.9 53.0,101.2 49.1,102.8 53.1,108.1 49.3,109.7 52.5,115.0 46.4,114.0 40.6,114.0 34.7,115.0 36.9,109.7 33.2,108.1 38.2,102.8 34.7,101.2 36.7,95.9 32.6,94.4 37.1,89.0 33.7,87.5 37.0,82.2 34.6,80.6 37.8,75.3 35.0,73.7 38.6,68.4 36.0,66.8 39.0,61.5 36.8,59.9 39.4,54.6 37.7,53.0 39.7,47.7 37.9,46.1 40.5,40.8 39.6,39.2 41.2,33.9 40.2,32.4 41.9,27.0 41.7,25.5 43.1,20.1" fill="#1a4a33"/>
<polygon points="43.5,23.0 44.5,20.1 45.1,25.5 45.1,27.0 45.9,32.4 45.4,33.9 46.6,39.2 45.8,40.8 47.3,46.1 46.4,47.7 48.0,53.0 46.4,54.6 48.2,59.9 46.9,61.5 48.8,66.8 47.5,68.4 49.1,73.7 47.3,75.3 49.2,80.6 47.8,82.2 49.2,87.5 47.9,89.0 49.9,94.4 47.2,95.9 49.5,101.2 47.3,102.8 49.5,108.1 47.5,109.7 49.2,115.0 45.4,114.0 43.0,114.0 42.4,115.0 42.7,109.7 42.3,108.1 42.9,102.8 42.4,101.2 42.7,95.9 42.2,94.4 42.7,89.0 42.3,87.5 42.7,82.2 42.4,80.6 42.8,75.3 42.5,73.7 42.9,68.4 42.6,66.8 43.0,61.5 42.7,59.9 43.0,54.6 42.8,53.0 43.0,47.7 42.8,46.1 43.1,40.8 43.0,39.2 43.2,33.9 43.1,32.4 43.3,27.0 43.3,25.5 43.5,20.1" fill="#04140c" opacity="0.28"/>
<polygon points="37.0,39.0 37.3,39.2 38.2,43.9 38.0,45.2 38.9,49.9 38.4,51.2 39.8,55.9 38.9,57.2 40.6,61.9 39.5,63.2 41.4,67.9 39.6,69.2 41.8,73.9 40.1,75.2 42.4,79.9 40.5,81.2 43.1,85.9 41.1,87.2 43.3,91.9 41.3,93.2 44.4,97.9 41.0,99.2 43.5,103.9 40.6,105.2 43.7,109.9 40.8,111.2 39.0,112.0 35.0,112.0 32.4,111.2 31.1,109.9 32.8,105.2 29.9,103.9 32.5,99.2 30.1,97.9 33.0,93.2 30.7,91.9 33.3,87.2 30.8,85.9 33.2,81.2 32.0,79.9 34.0,75.2 32.0,73.9 34.5,69.2 32.8,67.9 34.6,63.2 33.6,61.9 35.3,57.2 34.4,55.9 35.4,51.2 35.0,49.9 36.1,45.2 35.9,43.9 36.7,39.2" fill="#1d5238"/>
<polygon points="37.0,42.0 37.7,39.2 38.2,43.9 38.0,45.2 38.6,49.9 38.3,51.2 39.1,55.9 38.6,57.2 39.5,61.9 38.9,63.2 39.9,67.9 38.9,69.2 40.2,73.9 39.2,75.2 40.5,79.9 39.5,81.2 40.9,85.9 39.8,87.2 41.0,91.9 39.9,93.2 41.6,97.9 39.7,99.2 41.1,103.9 39.5,105.2 41.2,109.9 39.6,111.2 38.3,112.0 36.7,112.0 36.5,111.2 36.3,109.9 36.5,105.2 36.1,103.9 36.5,99.2 36.2,97.9 36.5,93.2 36.2,91.9 36.6,87.2 36.3,85.9 36.5,81.2 36.4,79.9 36.6,75.2 36.4,73.9 36.7,69.2 36.5,67.9 36.7,63.2 36.6,61.9 36.8,57.2 36.7,55.9 36.8,51.2 36.8,49.9 36.9,45.2 36.9,43.9 37.0,39.2" fill="#04140c" opacity="0.28"/>
<polygon points="50.0,43.0 50.2,43.2 51.0,48.0 50.8,49.4 51.8,54.2 51.3,55.6 52.7,60.4 51.6,61.8 53.2,66.5 51.8,68.0 53.2,72.7 52.5,74.2 54.1,78.9 52.6,80.3 54.5,85.1 52.9,86.5 55.3,91.3 53.1,92.7 55.2,97.4 53.2,98.9 55.8,103.6 53.5,105.1 56.3,109.8 53.4,111.2 51.6,112.0 48.4,112.0 46.3,111.2 44.7,109.8 46.4,105.1 43.9,103.6 46.1,98.9 44.5,97.4 46.3,92.7 44.2,91.3 46.6,86.5 45.4,85.1 47.2,80.3 46.3,78.9 47.4,74.2 46.5,72.7 47.7,68.0 47.0,66.5 48.2,61.8 47.6,60.4 48.8,55.6 48.3,54.2 49.2,49.4 49.1,48.0 49.8,43.2" fill="#174530"/>
<polygon points="62.0,3.0 62.4,3.1 63.6,8.5 63.6,10.1 64.9,15.4 64.4,17.0 65.8,22.3 65.1,23.9 67.4,29.2 65.7,30.8 68.0,36.1 65.9,37.7 68.8,43.0 66.2,44.6 70.5,49.9 66.8,51.5 71.5,56.8 68.5,58.4 72.7,63.7 68.7,65.3 71.5,70.7 68.2,72.2 71.9,77.6 68.2,79.2 73.8,84.5 68.2,86.1 73.8,91.4 68.1,93.0 73.3,98.3 68.3,99.9 73.8,105.2 69.2,106.8 71.8,112.1 69.6,113.7 71.8,119.0 65.2,118.0 58.9,118.0 51.3,119.0 55.3,113.7 51.9,112.1 55.4,106.8 51.4,105.2 55.3,99.9 52.0,98.3 55.8,93.0 50.8,91.4 55.5,86.1 52.1,84.5 56.0,79.2 51.6,77.6 54.8,72.2 52.6,70.7 56.0,65.3 53.5,63.7 56.5,58.4 54.0,56.8 57.4,51.5 55.0,49.9 57.9,44.6 54.7,43.0 57.8,37.7 56.2,36.1 58.3,30.8 57.5,29.2 59.1,23.9 58.0,22.3 60.0,17.0 58.8,15.4 60.6,10.1 60.3,8.5 61.6,3.1" fill="#17432e"/>
<polygon points="62.0,6.0 63.1,3.1 63.7,8.5 63.7,10.1 64.4,15.4 64.1,17.0 65.0,22.3 64.6,23.9 65.8,29.2 64.9,30.8 66.2,36.1 65.0,37.7 66.6,43.0 65.1,44.6 67.5,49.9 65.5,51.5 68.1,56.8 66.4,58.4 68.7,63.7 66.5,65.3 68.1,70.7 66.2,72.2 68.3,77.6 66.2,79.2 69.3,84.5 66.2,86.1 69.3,91.4 66.2,93.0 69.0,98.3 66.3,99.9 69.3,105.2 66.8,106.8 68.2,112.1 67.0,113.7 68.2,119.0 64.1,118.0 61.5,118.0 60.7,119.0 61.2,113.7 60.8,112.1 61.2,106.8 60.7,105.2 61.2,99.9 60.8,98.3 61.3,93.0 60.7,91.4 61.2,86.1 60.8,84.5 61.3,79.2 60.8,77.6 61.1,72.2 60.9,70.7 61.3,65.3 61.0,63.7 61.3,58.4 61.0,56.8 61.4,51.5 61.2,49.9 61.5,44.6 61.1,43.0 61.5,37.7 61.3,36.1 61.6,30.8 61.5,29.2 61.6,23.9 61.5,22.3 61.8,17.0 61.6,15.4 61.8,10.1 61.8,8.5 61.9,3.1" fill="#04140c" opacity="0.28"/>
<polygon points="56.0,29.0 56.3,29.2 57.0,34.0 56.7,35.4 57.7,40.1 57.1,41.5 58.2,46.3 57.8,47.7 58.9,52.4 57.9,53.8 59.7,58.5 57.9,60.0 59.8,64.7 58.9,66.1 60.5,70.8 58.6,72.2 60.8,77.0 58.9,78.4 61.2,83.1 59.4,84.5 61.4,89.3 59.8,90.7 61.8,95.4 59.3,96.8 62.6,101.5 60.0,103.0 62.3,107.7 59.5,109.1 62.5,113.8 59.8,115.2 57.8,116.0 54.2,116.0 52.6,115.2 50.5,113.8 52.3,109.1 50.2,107.7 52.0,103.0 49.6,101.5 52.2,96.8 49.8,95.4 52.6,90.7 49.8,89.3 52.5,84.5 51.1,83.1 52.9,78.4 51.4,77.0 53.0,72.2 51.4,70.8 53.7,66.1 52.2,64.7 53.7,60.0 52.5,58.5 53.8,53.8 53.1,52.4 54.6,47.7 53.8,46.3 54.8,41.5 54.4,40.1 55.1,35.4 55.1,34.0 55.7,29.2" fill="#1d5238"/>
<polygon points="56.0,32.0 56.6,29.2 57.0,34.0 56.9,35.4 57.4,40.1 57.1,41.5 57.7,46.3 57.5,47.7 58.1,52.4 57.5,53.8 58.5,58.5 57.5,60.0 58.6,64.7 58.1,66.1 58.9,70.8 57.9,72.2 59.1,77.0 58.1,78.4 59.3,83.1 58.3,84.5 59.5,89.3 58.6,90.7 59.7,95.4 58.3,96.8 60.1,101.5 58.7,103.0 59.9,107.7 58.4,109.1 60.0,113.8 58.6,115.2 57.2,116.0 55.7,116.0 55.6,115.2 55.3,113.8 55.6,109.1 55.3,107.7 55.5,103.0 55.2,101.5 55.5,96.8 55.3,95.4 55.6,90.7 55.3,89.3 55.6,84.5 55.4,83.1 55.6,78.4 55.4,77.0 55.6,72.2 55.5,70.8 55.7,66.1 55.5,64.7 55.7,60.0 55.6,58.5 55.7,53.8 55.7,52.4 55.8,47.7 55.7,46.3 55.9,41.5 55.8,40.1 55.9,35.4 55.9,34.0 56.0,29.2" fill="#04140c" opacity="0.28"/>
<polygon points="80.0,13.0 80.4,13.2 81.3,18.2 81.2,19.6 82.7,24.6 81.8,26.0 83.6,31.0 82.4,32.5 84.1,37.4 83.0,38.9 84.7,43.9 84.0,45.3 86.6,50.3 84.1,51.7 87.2,56.7 84.8,58.2 87.4,63.1 85.0,64.6 89.1,69.6 85.3,71.0 88.1,76.0 85.6,77.4 89.1,82.4 85.9,83.9 90.2,88.8 85.8,90.3 88.3,95.3 86.2,96.7 88.1,101.7 85.5,103.1 90.3,108.1 85.2,109.6 88.1,114.5 86.2,116.0 88.5,121.0 82.7,120.0 77.3,120.0 70.2,121.0 74.6,116.0 71.6,114.5 73.6,109.6 71.6,108.1 73.4,103.1 71.6,101.7 74.5,96.7 71.0,95.3 75.0,90.3 70.6,88.8 73.5,83.9 69.8,82.4 74.7,77.4 72.1,76.0 74.0,71.0 71.5,69.6 74.8,64.6 72.8,63.1 75.6,58.2 72.7,56.7 76.2,51.7 73.6,50.3 76.2,45.3 74.5,43.9 77.1,38.9 75.4,37.4 77.7,32.5 76.4,31.0 78.3,26.0 77.4,24.6 78.9,19.6 78.7,18.2 79.5,13.2" fill="#1b4a30"/>
<polygon points="80.0,16.0 81.0,13.2 81.4,18.2 81.4,19.6 82.2,24.6 81.7,26.0 82.7,31.0 82.0,32.5 83.0,37.4 82.4,38.9 83.3,43.9 82.9,45.3 84.4,50.3 83.0,51.7 84.7,56.7 83.3,58.2 84.8,63.1 83.5,64.6 85.7,69.6 83.6,71.0 85.2,76.0 83.8,77.4 85.7,82.4 84.0,83.9 86.3,88.8 83.9,90.3 85.3,95.3 84.1,96.7 85.2,101.7 83.7,103.1 86.4,108.1 83.6,109.6 85.2,114.5 84.1,116.0 85.4,121.0 81.8,120.0 79.5,120.0 78.8,121.0 79.4,116.0 79.0,114.5 79.2,109.6 79.0,108.1 79.2,103.1 79.0,101.7 79.3,96.7 78.9,95.3 79.4,90.3 78.9,88.8 79.2,83.9 78.8,82.4 79.4,77.4 79.0,76.0 79.3,71.0 79.0,69.6 79.4,64.6 79.1,63.1 79.5,58.2 79.1,56.7 79.5,51.7 79.2,50.3 79.5,45.3 79.3,43.9 79.7,38.9 79.5,37.4 79.7,32.5 79.6,31.0 79.8,26.0 79.7,24.6 79.9,19.6 79.8,18.2 79.9,13.2" fill="#04140c" opacity="0.28"/>
<polygon points="104.0,-51.0 104.8,-51.1 107.6,-44.1 107.1,-42.0 110.1,-35.0 107.5,-32.9 112.9,-25.9 110.1,-23.8 114.3,-16.8 111.3,-14.7 116.5,-7.7 110.6,-5.6 116.2,1.4 112.3,3.5 120.0,10.5 112.5,12.6 121.6,19.6 114.7,21.7 123.9,28.7 114.3,30.8 123.2,37.8 114.4,39.9 127.5,46.9 116.7,49.0 128.4,56.0 118.0,58.1 128.7,65.1 116.4,67.2 128.7,74.2 118.2,76.3 125.2,83.3 116.8,85.4 128.7,92.4 115.7,94.5 128.6,101.5 118.2,103.6 128.2,110.6 115.4,112.7 124.3,119.7 115.9,121.8 127.9,128.8 118.4,130.9 110.6,132.0 97.4,132.0 92.7,130.9 83.1,128.8 91.0,121.8 82.3,119.7 91.6,112.7 79.5,110.6 91.1,103.6 79.7,101.5 88.8,94.5 79.7,92.4 90.5,85.4 84.2,83.3 92.2,76.3 80.9,74.2 90.3,67.2 81.8,65.1 91.2,58.1 78.8,56.0 90.1,49.0 81.1,46.9 89.9,39.9 83.4,37.8 94.3,30.8 85.9,28.7 94.0,21.7 87.6,19.6 93.4,12.6 88.9,10.5 95.1,3.5 90.4,1.4 95.7,-5.6 92.7,-7.7 98.3,-14.7 95.2,-16.8 99.1,-23.8 96.5,-25.9 99.9,-32.9 98.0,-35.0 101.5,-42.0 100.5,-44.1 102.9,-51.1" fill="#173f2b"/>
<polygon points="104.0,-48.0 106.2,-51.1 107.8,-44.1 107.5,-42.0 109.1,-35.0 107.7,-32.9 110.7,-25.9 109.1,-23.8 111.4,-16.8 109.8,-14.7 112.6,-7.7 109.4,-5.6 112.4,1.4 110.3,3.5 114.6,10.5 110.5,12.6 115.4,19.6 111.7,21.7 116.7,28.7 111.4,30.8 116.3,37.8 111.5,39.9 118.7,46.9 112.8,49.0 119.2,56.0 113.5,58.1 119.3,65.1 112.6,67.2 119.4,74.2 113.5,76.3 117.4,83.3 112.8,85.4 119.3,92.4 112.2,94.5 119.3,101.5 113.6,103.6 119.1,110.6 112.0,112.7 116.9,119.7 112.3,121.8 118.9,128.8 113.7,130.9 108.4,132.0 102.9,132.0 102.6,130.9 101.5,128.8 102.4,121.8 101.4,119.7 102.5,112.7 101.1,110.6 102.5,103.6 101.1,101.5 102.2,94.5 101.1,92.4 102.4,85.4 101.6,83.3 102.6,76.3 101.2,74.2 102.4,67.2 101.3,65.1 102.5,58.1 101.0,56.0 102.3,49.0 101.3,46.9 102.3,39.9 101.5,37.8 102.8,30.8 101.8,28.7 102.8,21.7 102.0,19.6 102.7,12.6 102.2,10.5 102.9,3.5 102.4,1.4 103.0,-5.6 102.6,-7.7 103.3,-14.7 102.9,-16.8 103.4,-23.8 103.1,-25.9 103.5,-32.9 103.3,-35.0 103.7,-42.0 103.6,-44.1 103.9,-51.1" fill="#04140c" opacity="0.28"/>
<polygon points="131.0,-61.0 131.8,-61.1 133.9,-54.1 133.3,-52.1 136.4,-45.1 134.4,-43.0 137.9,-36.0 135.2,-34.0 140.3,-27.0 136.7,-24.9 141.1,-17.9 137.4,-15.9 143.8,-8.9 138.8,-6.8 143.6,0.2 140.1,2.2 147.2,9.2 141.7,11.3 147.5,18.3 143.2,20.3 151.9,27.3 142.4,29.4 149.9,36.4 143.5,38.4 153.9,45.4 141.7,47.4 150.1,54.4 144.9,56.5 150.2,63.5 142.0,65.5 154.9,72.5 145.4,74.6 152.0,81.6 141.7,83.6 152.9,90.6 141.7,92.7 152.0,99.7 145.0,101.7 155.1,108.7 145.5,110.8 151.7,117.8 141.9,119.8 150.1,126.8 142.7,128.9 137.3,130.0 124.7,130.0 119.6,128.9 107.7,126.8 120.1,119.8 110.8,117.8 117.2,110.8 107.0,108.7 118.2,101.7 108.6,99.7 119.0,92.7 110.7,90.6 116.8,83.6 109.0,81.6 120.1,74.6 109.7,72.5 118.6,65.5 111.7,63.5 117.1,56.5 110.8,54.4 119.7,47.4 107.2,45.4 120.0,38.4 110.6,36.4 121.1,29.4 114.5,27.3 120.6,20.3 113.4,18.3 122.3,11.3 116.8,9.2 123.7,2.2 118.1,0.2 122.9,-6.8 118.9,-8.9 123.4,-15.9 120.9,-17.9 125.1,-24.9 120.9,-27.0 126.3,-34.0 123.1,-36.0 126.7,-43.0 125.2,-45.1 128.3,-52.1 127.9,-54.1 130.1,-61.1" fill="#153a27"/>
<polygon points="131.0,-58.0 133.1,-61.1 134.3,-54.1 134.0,-52.1 135.6,-45.1 134.5,-43.0 136.5,-36.0 135.0,-34.0 137.8,-27.0 135.8,-24.9 138.2,-17.9 136.2,-15.9 139.7,-8.9 137.0,-6.8 139.6,0.2 137.7,2.2 141.6,9.2 138.6,11.3 141.8,18.3 139.4,20.3 144.2,27.3 138.9,29.4 143.1,36.4 139.5,38.4 145.2,45.4 138.5,47.4 143.2,54.4 140.3,56.5 143.2,63.5 138.8,65.5 145.8,72.5 140.6,74.6 144.2,81.6 138.5,83.6 144.7,90.6 138.6,92.7 144.2,99.7 140.4,101.7 145.9,108.7 140.7,110.8 144.1,117.8 138.7,119.8 143.2,126.8 139.1,128.9 135.2,130.0 129.9,130.0 129.6,128.9 128.2,126.8 129.7,119.8 128.6,117.8 129.3,110.8 128.1,108.7 129.5,101.7 128.3,99.7 129.6,92.7 128.6,90.6 129.3,83.6 128.4,81.6 129.7,74.6 128.4,72.5 129.5,65.5 128.7,63.5 129.3,56.5 128.6,54.4 129.6,47.4 128.1,45.4 129.7,38.4 128.6,36.4 129.8,29.4 129.0,27.3 129.8,20.3 128.9,18.3 130.0,11.3 129.3,9.2 130.1,2.2 129.4,0.2 130.0,-6.8 129.5,-8.9 130.1,-15.9 129.8,-17.9 130.3,-24.9 129.8,-27.0 130.4,-34.0 130.1,-36.0 130.5,-43.0 130.3,-45.1 130.7,-52.1 130.6,-54.1 130.9,-61.1" fill="#04140c" opacity="0.28"/>
<polygon points="117.0,-31.0 117.6,-31.0 119.0,-24.8 118.7,-23.0 120.7,-16.8 119.6,-15.0 122.0,-8.8 121.1,-7.0 123.0,-0.8 121.9,1.0 123.8,7.2 122.6,9.0 126.8,15.2 122.2,17.0 128.0,23.2 123.7,25.0 129.3,31.2 124.0,33.0 128.7,39.2 125.0,41.0 129.0,47.2 126.6,49.0 131.4,55.2 125.2,57.0 131.9,63.2 127.2,65.0 131.8,71.2 126.6,73.0 133.9,79.2 125.3,81.0 133.9,87.2 127.4,89.0 131.6,95.2 127.4,97.0 134.2,103.2 125.5,105.0 131.6,111.2 127.8,113.0 131.6,119.2 127.9,121.0 131.8,127.2 121.5,126.0 112.5,126.0 100.5,127.2 108.7,121.0 100.8,119.2 108.5,113.0 103.1,111.2 108.7,105.0 102.1,103.2 106.7,97.0 101.7,95.2 107.9,89.0 103.3,87.2 106.4,81.0 102.3,79.2 106.5,73.0 100.4,71.2 106.5,65.0 102.7,63.2 106.9,57.0 102.1,55.2 107.8,49.0 103.4,47.2 109.8,41.0 105.0,39.2 110.4,33.0 107.0,31.2 109.7,25.0 106.1,23.2 110.6,17.0 109.1,15.2 112.1,9.0 108.9,7.2 112.2,1.0 110.5,-0.8 113.1,-7.0 112.3,-8.8 114.2,-15.0 113.0,-16.8 115.2,-23.0 115.0,-24.8 116.4,-31.0" fill="#0f2f20"/>
<polygon points="117.0,-28.0 118.5,-31.0 119.3,-24.8 119.1,-23.0 120.2,-16.8 119.7,-15.0 121.0,-8.8 120.4,-7.0 121.5,-0.8 120.9,1.0 121.9,7.2 121.3,9.0 123.6,15.2 121.1,17.0 124.2,23.2 121.9,25.0 124.9,31.2 122.0,33.0 124.6,39.2 122.6,41.0 124.8,47.2 123.5,49.0 126.1,55.2 122.7,57.0 126.4,63.2 123.8,65.0 126.3,71.2 123.5,73.0 127.5,79.2 122.8,81.0 127.5,87.2 123.9,89.0 126.2,95.2 123.9,97.0 127.7,103.2 122.8,105.0 126.2,111.2 124.1,113.0 126.2,119.2 124.2,121.0 126.3,127.2 120.0,126.0 116.2,126.0 115.0,127.2 116.0,121.0 115.1,119.2 116.0,113.0 115.3,111.2 116.0,105.0 115.2,103.2 115.8,97.0 115.2,95.2 115.9,89.0 115.4,87.2 115.7,81.0 115.2,79.2 115.7,73.0 115.0,71.2 115.7,65.0 115.3,63.2 115.8,57.0 115.2,55.2 115.9,49.0 115.4,47.2 116.1,41.0 115.6,39.2 116.2,33.0 115.8,31.2 116.1,25.0 115.7,23.2 116.2,17.0 116.1,15.2 116.4,9.0 116.0,7.2 116.4,1.0 116.2,-0.8 116.5,-7.0 116.4,-8.8 116.7,-15.0 116.5,-16.8 116.8,-23.0 116.8,-24.8 116.9,-31.0" fill="#04140c" opacity="0.28"/>
<polygon points="88.0,1.0 88.5,1.1 89.4,6.6 89.3,8.3 90.3,13.8 90.0,15.5 91.7,21.0 90.6,22.7 91.9,28.2 90.9,29.8 92.7,35.3 91.2,37.0 94.0,42.5 92.4,44.2 94.5,49.7 92.9,51.4 95.1,56.9 92.3,58.5 95.1,64.0 93.3,65.7 96.3,71.2 93.1,72.9 96.5,78.4 93.6,80.1 97.3,85.6 93.7,87.2 97.7,92.8 93.2,94.4 97.7,99.9 93.4,101.6 98.1,107.1 93.8,108.8 97.3,114.3 94.5,115.9 96.6,121.5 94.4,123.1 90.7,124.0 85.3,124.0 81.7,123.1 77.7,121.5 82.3,115.9 78.7,114.3 83.0,108.8 79.8,107.1 82.0,101.6 79.2,99.9 82.8,94.4 79.6,92.8 82.2,87.2 79.9,85.6 82.0,80.1 79.1,78.4 81.8,72.9 78.5,71.2 83.4,65.7 80.0,64.0 83.6,58.5 80.1,56.9 83.9,51.4 81.0,49.7 83.8,44.2 81.7,42.5 84.7,37.0 83.2,35.3 85.2,29.8 84.1,28.2 85.7,22.7 84.8,21.0 86.2,15.5 85.3,13.8 86.7,8.3 86.5,6.6 87.6,1.1" fill="#143a28"/>
<polygon points="88.0,4.0 89.0,1.1 89.5,6.6 89.4,8.3 90.0,13.8 89.8,15.5 90.7,21.0 90.2,22.7 90.8,28.2 90.3,29.8 91.3,35.3 90.5,37.0 92.0,42.5 91.1,44.2 92.3,49.7 91.4,51.4 92.6,56.9 91.1,58.5 92.6,64.0 91.6,65.7 93.3,71.2 91.6,72.9 93.4,78.4 91.8,80.1 93.8,85.6 91.9,87.2 94.1,92.8 91.6,94.4 94.1,99.9 91.7,101.6 94.3,107.1 91.9,108.8 93.8,114.3 92.3,115.9 93.5,121.5 92.2,123.1 89.8,124.0 87.5,124.0 87.2,123.1 86.8,121.5 87.3,115.9 86.9,114.3 87.4,108.8 87.0,107.1 87.3,101.6 86.9,99.9 87.4,94.4 87.0,92.8 87.3,87.2 87.0,85.6 87.3,80.1 86.9,78.4 87.3,72.9 86.9,71.2 87.4,65.7 87.0,64.0 87.5,58.5 87.1,56.9 87.5,51.4 87.2,49.7 87.5,44.2 87.2,42.5 87.6,37.0 87.4,35.3 87.7,29.8 87.5,28.2 87.7,22.7 87.6,21.0 87.8,15.5 87.7,13.8 87.8,8.3 87.8,6.6 87.9,1.1" fill="#04140c" opacity="0.28"/>
<polygon points="146.0,5.0 146.3,5.1 147.1,10.6 147.2,12.2 148.3,17.6 147.7,19.2 148.8,24.6 148.1,26.2 149.5,31.7 148.7,33.2 150.2,38.7 149.4,40.3 151.8,45.7 149.5,47.3 151.5,52.7 149.5,54.3 152.6,59.8 150.3,61.4 154.1,66.8 151.0,68.4 153.6,73.8 150.4,75.4 155.0,80.9 150.6,82.5 154.2,87.9 150.5,89.5 154.0,94.9 151.3,96.5 153.3,102.0 151.1,103.5 153.5,109.0 150.7,110.6 154.5,116.0 150.6,117.6 153.3,123.0 148.4,122.0 143.6,122.0 137.0,123.0 141.3,117.6 136.9,116.0 141.6,110.6 138.8,109.0 140.8,103.5 137.7,102.0 141.1,96.5 138.3,94.9 141.5,89.5 138.7,87.9 141.3,82.5 137.2,80.9 140.8,75.4 138.6,73.8 141.6,68.4 138.9,66.8 142.0,61.4 139.5,59.8 142.4,54.3 139.6,52.7 142.1,47.3 140.5,45.7 142.8,40.3 141.6,38.7 143.3,33.2 142.5,31.7 144.0,26.2 142.7,24.6 144.4,19.2 144.0,17.6 144.9,12.2 144.9,10.6 145.6,5.1" fill="#1a4a30"/>
<polygon points="146.0,8.0 146.8,5.1 147.3,10.6 147.3,12.2 147.9,17.6 147.6,19.2 148.2,24.6 147.8,26.2 148.6,31.7 148.1,33.2 149.0,38.7 148.5,40.3 149.8,45.7 148.6,47.3 149.7,52.7 148.6,54.3 150.2,59.8 149.0,61.4 151.1,66.8 149.4,68.4 150.8,73.8 149.1,75.4 151.6,80.9 149.2,82.5 151.2,87.9 149.1,89.5 151.1,94.9 149.6,96.5 150.7,102.0 149.5,103.5 150.8,109.0 149.2,110.6 151.3,116.0 149.2,117.6 150.6,123.0 147.6,122.0 145.6,122.0 144.9,123.0 145.4,117.6 144.9,116.0 145.5,110.6 145.1,109.0 145.4,103.5 145.0,102.0 145.4,96.5 145.1,94.9 145.5,89.5 145.1,87.9 145.4,82.5 144.9,80.9 145.4,75.4 145.1,73.8 145.5,68.4 145.1,66.8 145.5,61.4 145.2,59.8 145.6,54.3 145.2,52.7 145.5,47.3 145.3,45.7 145.6,40.3 145.5,38.7 145.7,33.2 145.6,31.7 145.8,26.2 145.6,24.6 145.8,19.2 145.8,17.6 145.9,12.2 145.9,10.6 146.0,5.1" fill="#04140c" opacity="0.28"/>
<polygon points="159.5,51.0 159.7,51.2 160.1,56.0 160.0,57.5 160.6,62.2 160.4,63.7 161.0,68.4 160.6,69.8 161.6,74.6 160.9,76.0 161.9,80.8 161.3,82.2 162.0,87.0 161.4,88.4 162.4,93.2 161.5,94.7 163.1,99.4 161.6,100.8 163.2,105.6 161.6,107.1 163.0,111.8 161.8,113.2 160.5,114.0 158.5,114.0 157.2,113.2 155.9,111.8 157.3,107.1 156.3,105.6 157.4,100.8 155.7,99.4 157.2,94.7 156.5,93.2 157.5,88.4 157.0,87.0 157.9,82.2 157.2,80.8 158.3,76.0 157.7,74.6 158.3,69.8 157.7,68.4 158.6,63.7 158.3,62.2 159.0,57.5 158.9,56.0 159.4,51.2" fill="#143d2a"/>
<polygon points="178.0,85.0 178.4,85.2 179.5,90.4 179.4,91.9 180.6,97.1 180.1,98.6 182.3,103.8 180.5,105.4 182.4,110.6 181.4,112.1 183.7,117.3 181.7,118.9 184.3,124.0 182.2,125.6 185.4,130.8 182.8,132.3 186.9,137.5 183.1,139.1 186.7,144.3 183.2,145.8 186.6,151.0 180.4,150.0 175.6,150.0 169.2,151.0 173.3,145.8 169.3,144.3 173.3,139.1 169.6,137.5 172.7,132.3 171.0,130.8 174.1,125.6 171.9,124.0 174.0,118.9 172.8,117.3 175.0,112.1 173.5,110.6 175.1,105.4 174.3,103.8 176.0,98.6 175.0,97.1 176.5,91.9 176.6,90.4 177.6,85.2" fill="#2a7a3a"/>
<polygon points="178.0,88.0 178.8,85.2 179.5,90.4 179.4,91.9 180.1,97.1 179.8,98.6 181.0,103.8 180.0,105.4 181.0,110.6 180.5,112.1 181.8,117.3 180.7,118.9 182.1,124.0 181.0,125.6 182.7,130.8 181.3,132.3 183.5,137.5 181.4,139.1 183.4,144.3 181.5,145.8 183.4,151.0 179.6,150.0 177.6,150.0 176.9,151.0 177.4,145.8 177.0,144.3 177.4,139.1 177.0,137.5 177.4,132.3 177.2,130.8 177.5,125.6 177.3,124.0 177.5,118.9 177.4,117.3 177.6,112.1 177.5,110.6 177.7,105.4 177.6,103.8 177.8,98.6 177.6,97.1 177.8,91.9 177.8,90.4 178.0,85.2" fill="#04140c" opacity="0.28"/>
<polygon points="166.0,99.0 166.4,99.1 167.6,104.6 167.6,106.2 169.7,111.6 168.6,113.2 171.1,118.7 169.4,120.3 171.9,125.8 170.3,127.4 173.2,132.8 171.1,134.4 175.0,139.9 171.6,141.5 174.8,146.9 171.6,148.5 174.3,154.0 172.0,155.6 176.0,161.1 168.7,160.0 163.3,160.0 156.0,161.1 160.9,155.6 156.6,154.0 159.7,148.5 157.5,146.9 160.5,141.5 157.2,139.9 161.0,134.4 159.1,132.8 162.2,127.4 160.1,125.8 162.8,120.3 161.0,118.7 163.5,113.2 162.7,111.6 164.5,106.2 164.1,104.6 165.6,99.1" fill="#2f8a3c"/>
<polygon points="166.0,102.0 167.0,99.1 167.6,104.6 167.6,106.2 168.8,111.6 168.1,113.2 169.5,118.7 168.6,120.3 170.0,125.8 169.1,127.4 170.7,132.8 169.5,134.4 171.7,139.9 169.8,141.5 171.6,146.9 169.8,148.5 171.3,154.0 170.0,155.6 172.2,161.1 167.8,160.0 165.6,160.0 164.8,161.1 165.4,155.6 164.9,154.0 165.2,148.5 165.0,146.9 165.3,141.5 164.9,139.9 165.4,134.4 165.2,132.8 165.5,127.4 165.3,125.8 165.6,120.3 165.4,118.7 165.7,113.2 165.6,111.6 165.8,106.2 165.8,104.6 166.0,99.1" fill="#04140c" opacity="0.28"/>
<polygon points="304.0,-71.0 304.9,-71.0 307.2,-64.5 306.7,-62.5 308.9,-55.9 307.1,-54.0 311.4,-47.4 308.3,-45.4 312.0,-38.8 309.1,-36.9 314.8,-30.3 310.1,-28.3 314.8,-21.7 310.8,-19.8 317.7,-13.2 311.8,-11.2 318.3,-4.6 313.0,-2.7 320.4,3.9 313.8,5.9 321.8,12.4 315.3,14.4 322.6,21.0 313.0,22.9 322.6,29.5 316.3,31.5 324.2,38.1 317.4,40.0 325.5,46.6 314.3,48.6 322.7,55.2 315.1,57.1 326.0,63.7 317.1,65.7 325.5,72.3 317.5,74.2 325.3,80.8 315.7,82.8 327.6,89.4 316.7,91.3 323.3,97.9 317.9,99.9 323.3,106.4 315.0,108.4 326.6,115.0 318.3,117.0 310.1,118.0 297.9,118.0 289.9,117.0 282.4,115.0 291.8,108.4 285.0,106.4 292.8,99.9 284.9,97.9 292.0,91.3 282.8,89.4 290.7,82.8 283.0,80.8 292.4,74.2 281.2,72.3 289.7,65.7 284.0,63.7 291.3,57.1 282.3,55.2 291.1,48.6 282.3,46.6 290.6,40.0 283.8,38.1 291.2,31.5 283.2,29.5 294.4,22.9 284.5,21.0 294.0,14.4 285.6,12.4 293.7,5.9 288.7,3.9 296.9,-2.7 290.3,-4.6 297.5,-11.2 291.2,-13.2 296.8,-19.8 293.9,-21.7 298.2,-28.3 294.6,-30.3 298.5,-36.9 295.4,-38.8 299.7,-45.4 297.3,-47.4 301.1,-54.0 299.0,-55.9 301.3,-62.5 301.2,-64.5 303.3,-71.0" fill="#133a29"/>
<polygon points="304.0,-68.0 306.2,-71.0 307.4,-64.5 307.1,-62.5 308.3,-55.9 307.3,-54.0 309.7,-47.4 308.0,-45.4 310.0,-38.8 308.4,-36.9 311.6,-30.3 309.0,-28.3 311.6,-21.7 309.4,-19.8 313.2,-13.2 309.9,-11.2 313.5,-4.6 310.6,-2.7 314.7,3.9 311.1,5.9 315.4,12.4 311.9,14.4 315.9,21.0 310.6,22.9 315.9,29.5 312.4,31.5 316.8,38.1 313.0,40.0 317.5,46.6 311.3,48.6 315.9,55.2 311.8,57.1 317.7,63.7 312.8,65.7 317.4,72.3 313.1,74.2 317.3,80.8 312.1,82.8 318.6,89.4 312.6,91.3 316.2,97.9 313.3,99.9 316.3,106.4 311.7,108.4 318.1,115.0 313.5,117.0 308.1,118.0 303.0,118.0 302.3,117.0 301.4,115.0 302.5,108.4 301.7,106.4 302.7,99.9 301.7,97.9 302.6,91.3 301.5,89.4 302.4,82.8 301.5,80.8 302.6,74.2 301.3,72.3 302.3,65.7 301.6,63.7 302.5,57.1 301.4,55.2 302.5,48.6 301.4,46.6 302.4,40.0 301.6,38.1 302.5,31.5 301.5,29.5 302.8,22.9 301.7,21.0 302.8,14.4 301.8,12.4 302.8,5.9 302.2,3.9 303.1,-2.7 302.4,-4.6 303.2,-11.2 302.5,-13.2 303.1,-19.8 302.8,-21.7 303.3,-28.3 302.9,-30.3 303.3,-36.9 303.0,-38.8 303.5,-45.4 303.2,-47.4 303.7,-54.0 303.4,-55.9 303.7,-62.5 303.7,-64.5 303.9,-71.0" fill="#04140c" opacity="0.28"/>
<polygon points="304.0,-31.0 304.7,-31.0 306.2,-24.8 306.1,-23.0 308.4,-16.8 307.1,-15.0 309.4,-8.8 307.5,-7.0 311.7,-0.8 308.5,1.0 311.3,7.2 308.9,9.0 314.3,15.2 310.6,17.0 315.8,23.2 310.1,25.0 315.4,31.2 312.3,33.0 318.1,39.2 311.7,41.0 316.9,47.2 313.9,49.0 318.3,55.2 314.6,57.0 318.9,63.2 314.8,65.0 320.6,71.2 314.3,73.0 318.6,79.2 314.9,81.0 318.8,87.2 313.0,89.0 318.5,95.2 314.6,97.0 320.6,103.2 314.5,105.0 320.2,111.2 312.4,113.0 308.5,114.0 299.5,114.0 294.1,113.0 289.2,111.2 295.2,105.0 288.8,103.2 295.3,97.0 290.2,95.2 293.5,89.0 288.0,87.2 293.7,81.0 289.8,79.2 294.0,73.0 290.0,71.2 294.1,65.0 288.5,63.2 294.6,57.0 287.2,55.2 294.6,49.0 290.9,47.2 295.6,41.0 291.7,39.2 296.8,33.0 293.0,31.2 297.0,25.0 293.1,23.2 298.3,17.0 295.0,15.2 299.2,9.0 296.3,7.2 299.2,1.0 297.0,-0.8 299.6,-7.0 298.6,-8.8 301.1,-15.0 300.4,-16.8 301.8,-23.0 301.6,-24.8 303.4,-31.0" fill="#1b4d3a"/>
<polygon points="304.0,-28.0 305.6,-31.0 306.4,-24.8 306.4,-23.0 307.6,-16.8 306.9,-15.0 308.1,-8.8 307.1,-7.0 309.4,-0.8 307.7,1.0 309.2,7.2 307.9,9.0 310.9,15.2 308.8,17.0 311.7,23.2 308.6,25.0 311.5,31.2 309.8,33.0 312.9,39.2 309.4,41.0 312.3,47.2 310.6,49.0 313.1,55.2 311.1,57.0 313.4,63.2 311.1,65.0 314.3,71.2 310.9,73.0 313.2,79.2 311.2,81.0 313.3,87.2 310.2,89.0 313.2,95.2 311.0,97.0 314.3,103.2 311.0,105.0 314.1,111.2 309.8,113.0 307.0,114.0 303.2,114.0 302.8,113.0 302.2,111.2 302.9,105.0 302.2,103.2 303.0,97.0 302.3,95.2 302.7,89.0 302.1,87.2 302.8,81.0 302.3,79.2 302.8,73.0 302.3,71.2 302.8,65.0 302.1,63.2 302.9,57.0 302.0,55.2 302.9,49.0 302.4,47.2 303.0,41.0 302.5,39.2 303.1,33.0 302.7,31.2 303.2,25.0 302.7,23.2 303.3,17.0 302.9,15.2 303.4,9.0 303.1,7.2 303.4,1.0 303.2,-0.8 303.5,-7.0 303.3,-8.8 303.6,-15.0 303.6,-16.8 303.7,-23.0 303.7,-24.8 303.9,-31.0" fill="#04140c" opacity="0.28"/>
<polygon points="304.0,19.0 304.3,19.0 305.4,25.3 305.6,27.2 306.7,33.5 306.1,35.4 307.8,41.7 307.1,43.5 308.7,49.8 307.5,51.7 310.6,58.0 308.0,59.9 310.8,66.2 309.3,68.1 312.8,74.4 308.9,76.3 312.3,82.6 309.1,84.5 311.3,90.7 309.5,92.6 312.6,98.9 309.3,100.8 312.7,107.1 308.6,109.0 306.4,110.0 301.6,110.0 299.4,109.0 295.0,107.1 298.6,100.8 296.5,98.9 298.6,92.6 296.2,90.7 298.7,84.5 296.6,82.6 298.6,76.3 296.5,74.4 299.1,68.1 296.7,66.2 299.7,59.9 298.2,58.0 300.5,51.7 298.4,49.8 301.2,43.5 300.0,41.7 302.1,35.4 300.9,33.5 302.6,27.2 302.5,25.3 303.6,19.0" fill="#10301f"/>
<polygon points="304.0,22.0 304.8,19.0 305.4,25.3 305.5,27.2 306.1,33.5 305.8,35.4 306.7,41.7 306.4,43.5 307.2,49.8 306.6,51.7 308.3,58.0 306.8,59.9 308.4,66.2 307.6,68.1 309.5,74.4 307.3,76.3 309.2,82.6 307.5,84.5 308.7,90.7 307.7,92.6 309.4,98.9 307.5,100.8 309.5,107.1 307.2,109.0 305.6,110.0 303.6,110.0 303.5,109.0 302.9,107.1 303.3,100.8 303.1,98.9 303.4,92.6 303.1,90.7 303.4,84.5 303.1,82.6 303.4,76.3 303.1,74.4 303.4,68.1 303.1,66.2 303.5,59.9 303.3,58.0 303.6,51.7 303.3,49.8 303.7,43.5 303.5,41.7 303.8,35.4 303.6,33.5 303.8,27.2 303.8,25.3 304.0,19.0" fill="#04140c" opacity="0.28"/>
<polygon points="333.5,49.0 333.8,49.2 334.5,53.9 334.4,55.2 335.3,59.9 334.9,61.2 335.8,65.9 335.4,67.2 336.8,71.9 335.5,73.2 336.7,77.9 336.1,79.2 337.6,83.9 336.4,85.2 337.9,89.9 336.6,91.2 338.4,95.9 336.8,97.2 338.5,101.9 336.7,103.2 338.5,107.9 336.9,109.2 338.8,113.9 336.7,115.2 335.1,116.0 331.9,116.0 329.6,115.2 328.5,113.9 330.3,109.2 328.2,107.9 330.3,103.2 328.1,101.9 330.0,97.2 328.0,95.9 330.7,91.2 328.6,89.9 330.4,85.2 329.5,83.9 330.8,79.2 330.3,77.9 331.6,73.2 330.7,71.9 331.9,67.2 330.9,65.9 332.3,61.2 331.8,59.9 332.7,55.2 332.7,53.9 333.2,49.2" fill="#154030"/>
<polygon points="348.0,56.0 348.1,56.2 348.5,60.9 348.5,62.2 349.0,66.9 348.8,68.2 349.3,72.9 348.9,74.2 349.9,78.9 349.2,80.2 350.1,84.9 349.4,86.2 350.2,90.9 349.8,92.2 350.9,96.9 349.7,98.2 351.0,102.9 349.9,104.2 350.8,108.9 349.9,110.2 350.6,114.9 348.8,114.0 347.2,114.0 345.3,114.9 346.2,110.2 345.4,108.9 346.2,104.2 344.8,102.9 346.1,98.2 345.2,96.9 346.5,92.2 345.4,90.9 346.6,86.2 346.2,84.9 346.9,80.2 346.2,78.9 347.2,74.2 346.5,72.9 347.2,68.2 347.0,66.9 347.6,62.2 347.4,60.9 347.9,56.2" fill="#154030"/>
<polygon points="393.0,-91.0 394.1,-91.1 397.0,-84.1 396.5,-82.1 400.1,-75.1 397.4,-73.0 403.2,-66.0 398.9,-63.9 406.3,-56.9 400.6,-54.9 407.7,-47.8 401.3,-45.8 409.2,-38.8 404.7,-36.7 411.2,-29.7 404.1,-27.7 412.3,-20.6 406.2,-18.6 414.4,-11.6 409.6,-9.5 419.9,-2.5 407.3,-0.5 420.7,6.6 409.6,8.6 419.5,15.6 412.6,17.7 422.7,24.7 407.4,26.7 420.0,33.7 411.8,35.8 423.6,42.8 410.9,44.9 422.7,51.9 407.4,53.9 423.7,60.9 408.4,63.0 419.5,70.0 410.8,72.1 422.1,79.1 407.9,81.1 418.5,88.2 409.1,90.2 423.1,97.2 407.3,99.3 421.7,106.3 410.9,108.3 418.8,115.3 401.4,114.0 384.6,114.0 363.7,115.3 374.3,108.3 364.3,106.3 378.5,99.3 362.1,97.2 376.6,90.2 366.1,88.2 375.5,81.1 365.2,79.1 378.0,72.1 365.5,70.0 378.1,63.0 366.6,60.9 378.1,53.9 366.5,51.9 378.1,44.9 367.6,42.8 374.8,35.8 363.2,33.7 376.9,26.7 361.4,24.7 376.4,17.7 364.8,15.6 374.3,8.6 362.5,6.6 375.5,-0.5 364.6,-2.5 376.7,-9.5 370.4,-11.6 379.2,-18.6 372.0,-20.6 379.9,-27.7 375.8,-29.7 381.9,-36.7 377.5,-38.8 384.5,-45.8 377.8,-47.8 384.1,-54.9 380.4,-56.9 386.0,-63.9 383.9,-66.0 387.6,-73.0 384.9,-75.1 389.6,-82.1 389.0,-84.1 391.9,-91.1" fill="#153f21"/>
<polygon points="393.0,-88.0 395.9,-91.1 397.4,-84.1 397.2,-82.1 399.1,-75.1 397.7,-73.0 400.8,-66.0 398.5,-63.9 402.6,-56.9 399.4,-54.9 403.3,-47.8 399.8,-45.8 404.1,-38.8 401.7,-36.7 405.2,-29.7 401.3,-27.7 405.9,-20.6 402.5,-18.6 407.0,-11.6 404.4,-9.5 410.0,-2.5 403.1,-0.5 410.5,6.6 404.4,8.6 409.8,15.6 406.0,17.7 411.6,24.7 403.1,26.7 410.1,33.7 405.6,35.8 412.1,42.8 405.1,44.9 411.6,51.9 403.2,53.9 412.1,60.9 403.7,63.0 409.8,70.0 405.0,72.1 411.2,79.1 403.5,81.1 409.3,88.2 404.1,90.2 411.8,97.2 403.1,99.3 411.0,106.3 405.1,108.3 409.4,115.3 398.6,114.0 391.6,114.0 389.5,115.3 390.8,108.3 389.6,106.3 391.3,99.3 389.3,97.2 391.0,90.2 389.8,88.2 390.9,81.1 389.7,79.1 391.2,72.1 389.7,70.0 391.2,63.0 389.8,60.9 391.2,53.9 389.8,51.9 391.2,44.9 390.0,42.8 390.8,35.8 389.4,33.7 391.1,26.7 389.2,24.7 391.0,17.7 389.6,15.6 390.8,8.6 389.3,6.6 390.9,-0.5 389.6,-2.5 391.0,-9.5 390.3,-11.6 391.3,-18.6 390.5,-20.6 391.4,-27.7 390.9,-29.7 391.7,-36.7 391.1,-38.8 392.0,-45.8 391.2,-47.8 391.9,-54.9 391.5,-56.9 392.2,-63.9 391.9,-66.0 392.3,-73.0 392.0,-75.1 392.6,-82.1 392.5,-84.1 392.9,-91.1" fill="#04140c" opacity="0.28"/>
<polygon points="432.0,-101.0 433.6,-101.1 437.6,-94.1 436.7,-92.0 440.0,-85.0 439.0,-82.9 444.9,-75.9 440.0,-73.8 447.3,-66.8 441.7,-64.7 449.2,-57.7 441.8,-55.6 450.5,-48.6 444.7,-46.5 453.8,-39.5 447.9,-37.4 456.8,-30.4 445.3,-28.3 462.6,-21.2 448.1,-19.2 458.6,-12.1 449.4,-10.1 464.6,-3.0 451.5,-1.0 464.6,6.1 449.8,8.2 464.2,15.2 452.8,17.3 468.2,24.3 451.9,26.4 467.1,33.4 453.1,35.5 464.1,42.5 452.1,44.6 469.9,51.6 455.2,53.7 464.7,60.7 452.0,62.8 467.5,69.8 452.3,71.9 463.3,78.9 455.3,81.0 469.9,88.0 450.9,90.1 463.6,97.1 450.9,99.2 469.7,106.2 454.6,108.3 467.4,115.3 442.2,114.0 421.8,114.0 393.2,115.3 410.9,108.3 400.5,106.2 414.9,99.2 395.0,97.1 411.9,90.1 397.7,88.0 411.0,81.0 396.4,78.9 409.0,71.9 399.5,69.8 411.5,62.8 396.9,60.7 409.9,53.7 400.4,51.6 414.3,44.6 400.4,42.5 412.0,35.5 397.9,33.4 410.7,26.4 400.7,24.3 412.8,17.3 401.2,15.2 410.5,8.2 396.5,6.1 415.5,-1.0 401.5,-3.0 415.0,-10.1 400.0,-12.1 417.8,-19.2 402.1,-21.2 419.0,-28.3 408.0,-30.4 416.6,-37.4 409.0,-39.5 418.6,-46.5 409.9,-48.6 421.6,-55.6 415.2,-57.7 422.6,-64.7 418.0,-66.8 425.0,-73.8 419.2,-75.9 426.4,-82.9 423.4,-85.0 427.4,-92.0 427.0,-94.1 430.7,-101.1" fill="#1a4a26"/>
<polygon points="432.0,-98.0 435.6,-101.1 437.8,-94.1 437.3,-92.0 439.1,-85.0 438.6,-82.9 441.8,-75.9 439.1,-73.8 443.1,-66.8 440.0,-64.7 444.2,-57.7 440.1,-55.6 444.9,-48.6 441.7,-46.5 446.7,-39.5 443.5,-37.4 448.4,-30.4 442.0,-28.3 451.6,-21.2 443.6,-19.2 449.3,-12.1 444.3,-10.1 452.7,-3.0 445.5,-1.0 452.7,6.1 444.5,8.2 452.4,15.2 446.1,17.3 454.6,24.3 445.6,26.4 454.0,33.4 446.3,35.5 452.4,42.5 445.8,44.6 455.6,51.6 447.5,53.7 452.7,60.7 445.7,62.8 454.2,69.8 445.9,71.9 451.9,78.9 447.5,81.0 455.6,88.0 445.1,90.1 452.1,97.1 445.1,99.2 455.4,106.2 447.2,108.3 454.2,115.3 438.8,114.0 430.3,114.0 427.3,115.3 429.5,108.3 428.2,106.2 430.0,99.2 427.6,97.1 429.6,90.1 427.9,88.0 429.5,81.0 427.7,78.9 429.2,71.9 428.1,69.8 429.5,62.8 427.8,60.7 429.4,53.7 428.2,51.6 429.9,44.6 428.2,42.5 429.6,35.5 427.9,33.4 429.4,26.4 428.2,24.3 429.7,17.3 428.3,15.2 429.4,8.2 427.7,6.1 430.0,-1.0 428.3,-3.0 430.0,-10.1 428.2,-12.1 430.3,-19.2 428.4,-21.2 430.4,-28.3 429.1,-30.4 430.2,-37.4 429.2,-39.5 430.4,-46.5 429.4,-48.6 430.8,-55.6 430.0,-57.7 430.9,-64.7 430.3,-66.8 431.2,-73.8 430.5,-75.9 431.3,-82.9 431.0,-85.0 431.4,-92.0 431.4,-94.1 431.8,-101.1" fill="#04140c" opacity="0.28"/>
<polygon points="474.0,-81.0 475.4,-81.1 478.1,-74.1 477.9,-72.1 482.3,-65.1 480.0,-63.1 484.9,-56.1 481.0,-54.1 488.0,-47.1 481.8,-45.0 491.4,-38.0 483.4,-36.0 494.4,-29.0 486.3,-27.0 497.6,-20.0 489.1,-18.0 495.3,-11.0 487.0,-8.9 502.5,-2.0 491.1,0.1 501.7,7.1 490.6,9.1 500.7,16.1 490.2,18.1 505.2,25.1 490.9,27.2 502.1,34.1 491.8,36.2 507.1,43.2 494.9,45.2 502.1,52.2 489.8,54.2 501.3,61.2 490.1,63.2 503.9,70.2 494.1,72.3 504.0,79.3 491.3,81.3 503.5,88.3 489.6,90.3 501.3,97.3 492.8,99.3 505.3,106.3 492.9,108.4 505.3,115.3 483.0,114.0 465.0,114.0 447.0,115.3 455.3,108.4 443.5,106.3 454.0,99.3 442.6,97.3 454.3,90.3 446.4,88.3 458.2,81.3 440.7,79.3 455.9,72.3 441.9,70.2 454.1,63.2 441.0,61.2 456.0,54.2 444.4,52.2 458.7,45.2 441.8,43.2 458.3,36.2 444.1,34.1 454.7,27.2 445.6,25.1 453.7,18.1 446.6,16.1 458.9,9.1 448.0,7.1 459.1,0.1 450.6,-2.0 459.8,-8.9 449.8,-11.0 461.8,-18.0 451.5,-20.0 460.8,-27.0 454.3,-29.0 463.1,-36.0 458.9,-38.0 466.4,-45.0 458.9,-47.1 467.7,-54.1 462.4,-56.1 467.8,-63.1 466.9,-65.1 469.9,-72.1 469.1,-74.1 472.9,-81.1" fill="#164222"/>
<polygon points="474.0,-78.0 477.2,-81.1 478.7,-74.1 478.6,-72.1 480.9,-65.1 479.7,-63.1 482.4,-56.1 480.2,-54.1 484.1,-47.1 480.7,-45.0 486.0,-38.0 481.6,-36.0 487.6,-29.0 483.1,-27.0 489.4,-20.0 484.7,-18.0 488.1,-11.0 483.6,-8.9 492.1,-2.0 485.8,0.1 491.6,7.1 485.5,9.1 491.1,16.1 485.3,18.1 493.5,25.1 485.7,27.2 491.8,34.1 486.2,36.2 494.6,43.2 487.9,45.2 491.9,52.2 485.1,54.2 491.4,61.2 485.2,63.2 492.9,70.2 487.4,72.3 492.9,79.3 485.9,81.3 492.6,88.3 485.0,90.3 491.4,97.3 486.8,99.3 493.6,106.3 486.8,108.4 493.6,115.3 480.0,114.0 472.5,114.0 470.8,115.3 471.8,108.4 470.3,106.3 471.6,99.3 470.2,97.3 471.6,90.3 470.7,88.3 472.1,81.3 470.0,79.3 471.8,72.3 470.1,70.2 471.6,63.2 470.0,61.2 471.8,54.2 470.5,52.2 472.2,45.2 470.1,43.2 472.1,36.2 470.4,34.1 471.7,27.2 470.6,25.1 471.6,18.1 470.7,16.1 472.2,9.1 470.9,7.1 472.2,0.1 471.2,-2.0 472.3,-8.9 471.1,-11.0 472.5,-18.0 471.3,-20.0 472.4,-27.0 471.6,-29.0 472.7,-36.0 472.2,-38.0 473.1,-45.0 472.2,-47.1 473.2,-54.1 472.6,-56.1 473.3,-63.1 473.1,-65.1 473.5,-72.1 473.4,-74.1 473.9,-81.1" fill="#04140c" opacity="0.28"/>
<polygon points="393.0,-31.0 393.8,-31.1 396.2,-24.1 395.7,-22.1 398.0,-15.1 396.7,-13.1 400.4,-6.1 397.1,-4.0 401.2,3.0 398.4,5.0 404.8,12.0 399.6,14.0 405.1,21.0 400.0,23.1 408.0,30.1 401.1,32.1 409.0,39.1 403.1,41.1 409.0,48.1 403.1,50.2 411.4,57.2 403.0,59.2 408.3,66.2 403.8,68.2 410.9,75.2 402.8,77.3 408.6,84.3 404.0,86.3 408.6,93.3 402.4,95.3 408.8,102.3 402.3,104.4 408.1,111.3 397.8,110.0 388.2,110.0 378.3,111.3 384.7,104.4 374.9,102.3 384.1,95.3 377.4,93.3 382.3,86.3 376.3,84.3 383.3,77.3 378.6,75.2 382.9,68.2 377.6,66.2 383.3,59.2 377.3,57.2 382.0,50.2 376.4,48.1 383.8,41.1 376.1,39.1 383.5,32.1 377.1,30.1 385.8,23.1 380.7,21.0 386.3,14.0 381.0,12.0 387.2,5.0 382.7,3.0 388.2,-4.0 386.1,-6.1 389.0,-13.1 387.5,-15.1 390.2,-22.1 390.2,-24.1 392.3,-31.1" fill="#0f3018"/>
<polygon points="393.0,-28.0 394.7,-31.1 396.0,-24.1 395.8,-22.1 397.0,-15.1 396.3,-13.1 398.4,-6.1 396.5,-4.0 398.8,3.0 397.2,5.0 400.7,12.0 397.9,14.0 400.9,21.0 398.1,23.1 402.5,30.1 398.7,32.1 403.1,39.1 399.8,41.1 403.1,48.1 399.8,50.2 404.4,57.2 399.8,59.2 402.7,66.2 400.2,68.2 404.1,75.2 399.7,77.3 402.9,84.3 400.3,86.3 402.9,93.3 399.5,95.3 402.9,102.3 399.4,104.4 402.6,111.3 396.2,110.0 392.2,110.0 391.2,111.3 392.0,104.4 390.8,102.3 391.9,95.3 391.1,93.3 391.7,86.3 391.0,84.3 391.8,77.3 391.3,75.2 391.8,68.2 391.2,66.2 391.8,59.2 391.1,57.2 391.7,50.2 391.0,48.1 391.9,41.1 391.0,39.1 391.9,32.1 391.1,30.1 392.1,23.1 391.5,21.0 392.2,14.0 391.6,12.0 392.3,5.0 391.8,3.0 392.4,-4.0 392.2,-6.1 392.5,-13.1 392.3,-15.1 392.7,-22.1 392.7,-24.1 392.9,-31.1" fill="#04140c" opacity="0.28"/>
<polygon points="436.0,-31.0 436.6,-31.1 439.4,-24.1 438.4,-22.1 441.9,-15.1 440.5,-13.1 443.3,-6.1 441.9,-4.0 445.7,3.0 443.3,5.0 449.5,12.0 444.6,14.0 452.0,21.0 446.2,23.1 453.7,30.1 447.2,32.1 454.2,39.1 446.3,41.1 453.2,48.1 445.9,50.2 454.0,57.2 447.4,59.2 454.1,66.2 446.3,68.2 454.4,75.2 447.7,77.3 452.3,84.3 446.6,86.3 452.5,93.3 446.0,95.3 452.6,102.3 448.1,104.4 452.6,111.3 441.4,110.0 430.6,110.0 416.3,111.3 424.0,104.4 418.3,102.3 425.6,95.3 415.4,93.3 426.7,86.3 417.7,84.3 425.6,77.3 418.3,75.2 423.6,68.2 419.5,66.2 425.8,59.2 416.9,57.2 424.6,50.2 415.6,48.1 426.6,41.1 419.4,39.1 425.5,32.1 418.6,30.1 427.4,23.1 420.8,21.0 428.6,14.0 423.3,12.0 429.1,5.0 425.1,3.0 429.9,-4.0 428.3,-6.1 432.4,-13.1 430.7,-15.1 433.2,-22.1 432.9,-24.1 435.3,-31.1" fill="#11361b"/>
<polygon points="436.0,-28.0 437.8,-31.1 439.3,-24.1 438.7,-22.1 440.7,-15.1 439.9,-13.1 441.4,-6.1 440.7,-4.0 442.8,3.0 441.5,5.0 444.9,12.0 442.2,14.0 446.2,21.0 443.0,23.1 447.2,30.1 443.6,32.1 447.4,39.1 443.1,41.1 446.9,48.1 442.9,50.2 447.4,57.2 443.7,59.2 447.4,66.2 443.1,68.2 447.6,75.2 443.9,77.3 446.4,84.3 443.3,86.3 446.5,93.3 442.9,95.3 446.6,102.3 444.1,104.4 446.6,111.3 439.6,110.0 435.1,110.0 433.6,111.3 434.6,104.4 433.9,102.3 434.8,95.3 433.5,93.3 434.9,86.3 433.8,84.3 434.7,77.3 433.9,75.2 434.5,68.2 434.0,66.2 434.8,59.2 433.7,57.2 434.6,50.2 433.6,48.1 434.9,41.1 434.0,39.1 434.7,32.1 433.9,30.1 435.0,23.1 434.2,21.0 435.1,14.0 434.5,12.0 435.2,5.0 434.7,3.0 435.3,-4.0 435.1,-6.1 435.6,-13.1 435.4,-15.1 435.7,-22.1 435.6,-24.1 435.9,-31.1" fill="#04140c" opacity="0.28"/>
<ellipse cx="474.6" cy="49.2" rx="5.7" ry="4.0" fill="#256428"/>
<ellipse cx="391.3" cy="106.1" rx="5.9" ry="3.4" fill="#256428"/>
<ellipse cx="404.5" cy="78.6" rx="6.8" ry="5.2" fill="#0f3018"/>
<ellipse cx="454.1" cy="62.0" rx="6.5" ry="4.5" fill="#0f3018"/>
<ellipse cx="437.9" cy="102.0" rx="3.7" ry="1.8" fill="#2f7a30"/>
<ellipse cx="384.6" cy="88.5" rx="7.9" ry="4.3" fill="#1f5a28"/>
<ellipse cx="422.5" cy="105.9" rx="7.7" ry="5.4" fill="#2a6a2c"/>
<ellipse cx="379.6" cy="57.2" rx="5.8" ry="3.2" fill="#256428"/>
<ellipse cx="418.1" cy="21.2" rx="3.9" ry="2.9" fill="#1f5a28"/>
<ellipse cx="438.6" cy="41.8" rx="6.5" ry="4.2" fill="#2f7a30"/>
<ellipse cx="398.9" cy="99.1" rx="7.5" ry="4.7" fill="#1f5a28"/>
<ellipse cx="412.8" cy="98.2" rx="3.5" ry="2.6" fill="#2a6a2c"/>
<ellipse cx="473.7" cy="99.2" rx="6.4" ry="3.9" fill="#1f5a28"/>
<ellipse cx="443.1" cy="47.8" rx="7.6" ry="6.2" fill="#1f5a28"/>
<ellipse cx="375.9" cy="8.1" rx="6.5" ry="3.8" fill="#0f3018"/>
<ellipse cx="397.6" cy="83.4" rx="6.2" ry="3.7" fill="#2f7a30"/>
<ellipse cx="399.3" cy="64.1" rx="3.8" ry="3.0" fill="#0f3018"/>
<ellipse cx="492.2" cy="19.9" rx="4.5" ry="2.3" fill="#2a6a2c"/>
<ellipse cx="433.2" cy="96.9" rx="3.8" ry="2.8" fill="#256428"/>
<ellipse cx="492.6" cy="27.6" rx="3.3" ry="2.5" fill="#0f3018"/>
<ellipse cx="377.8" cy="84.9" rx="5.2" ry="3.3" fill="#1f5a28"/>
<ellipse cx="497.3" cy="36.4" rx="3.1" ry="1.7" fill="#2a6a2c"/>
<ellipse cx="388.8" cy="36.9" rx="5.5" ry="3.4" fill="#1f5a28"/>
<ellipse cx="430.5" cy="46.5" rx="5.1" ry="3.6" fill="#2f7a30"/>
<ellipse cx="483.1" cy="105.9" rx="3.2" ry="1.8" fill="#2a6a2c"/>
<ellipse cx="376.8" cy="57.5" rx="4.2" ry="2.7" fill="#2a6a2c"/>
<ellipse cx="463.8" cy="10.9" rx="7.5" ry="3.8" fill="#2a6a2c"/>
<ellipse cx="387.2" cy="55.7" rx="3.7" ry="2.4" fill="#1f5a28"/>
<ellipse cx="400.2" cy="61.1" rx="6.2" ry="4.2" fill="#2a6a2c"/>
<ellipse cx="438.8" cy="91.6" rx="7.8" ry="4.0" fill="#1f5a28"/>
<ellipse cx="479.5" cy="105.2" rx="4.1" ry="2.1" fill="#1f5a28"/>
<ellipse cx="373.9" cy="33.4" rx="7.8" ry="4.4" fill="#2a6a2c"/>
<ellipse cx="423.4" cy="62.8" rx="4.8" ry="2.4" fill="#2a6a2c"/>
<ellipse cx="454.3" cy="61.5" rx="5.7" ry="4.2" fill="#0f3018"/>
<ellipse cx="422.3" cy="38.5" rx="5.1" ry="4.2" fill="#2f7a30"/>
<ellipse cx="467.9" cy="95.9" rx="7.0" ry="5.6" fill="#2a6a2c"/>
<ellipse cx="402.1" cy="57.1" rx="7.9" ry="5.8" fill="#2f7a30"/>
<ellipse cx="496.9" cy="90.2" rx="6.3" ry="3.3" fill="#256428"/>
<ellipse cx="470.8" cy="98.7" rx="3.2" ry="2.4" fill="#0f3018"/>
<ellipse cx="458.3" cy="51.1" rx="6.3" ry="4.1" fill="#256428"/>
<ellipse cx="372.1" cy="82.1" rx="7.3" ry="4.9" fill="#256428"/>
<ellipse cx="440.8" cy="44.7" rx="7.1" ry="5.5" fill="#2f7a30"/>
<ellipse cx="416.8" cy="12.5" rx="7.9" ry="4.6" fill="#0f3018"/>
<ellipse cx="381.1" cy="87.3" rx="6.3" ry="5.1" fill="#0f3018"/>
<ellipse cx="405.0" cy="91.8" rx="7.3" ry="4.5" fill="#256428"/>
<ellipse cx="432.1" cy="28.6" rx="3.7" ry="3.0" fill="#256428"/>
<polygon points="462.0,-2.0 498.0,-2.0 498.0,36.0 490.0,28.0 484.0,32.0 476.0,18.0 468.0,8.0" fill="#dff2fb"/>
<polygon points="484.0,44.0 498.0,40.0 498.0,64.0 490.0,58.0" fill="#dff2fb" opacity="0.8"/>
<polygon points="243.3,116.7 243.5,116.9 244.9,122.1 244.6,123.8 246.2,129.0 245.3,130.7 247.5,135.9 246.5,137.6 248.9,142.8 246.8,144.5 248.4,149.7 244.9,148.8 241.7,148.8 237.7,149.7 239.9,144.5 238.0,142.8 240.4,137.6 239.0,135.9 240.9,130.7 240.0,129.0 242.0,123.8 241.9,122.1 243.0,116.9" fill="#2a8038"/>
<polygon points="227.5,123.5 227.8,123.7 229.1,128.8 229.3,130.4 230.9,135.5 230.5,137.0 232.7,142.1 231.4,143.7 233.5,148.8 231.7,150.4 233.2,155.5 229.3,154.5 225.6,154.5 220.6,155.5 223.3,150.4 220.7,148.8 223.4,143.7 222.7,142.1 224.7,137.0 224.0,135.5 225.8,130.4 225.6,128.8 227.2,123.7" fill="#2a8038"/>
<polygon points="227.5,126.5 228.1,123.7 228.9,128.8 228.9,130.4 229.8,135.5 229.7,137.0 230.8,142.1 230.1,143.7 231.3,148.8 230.3,150.4 231.1,155.5 228.7,154.5 227.1,154.5 226.6,155.5 227.0,150.4 226.7,148.8 227.0,143.7 226.9,142.1 227.1,137.0 227.0,135.5 227.3,130.4 227.2,128.8 227.4,123.7" fill="#04140c" opacity="0.28"/>
<polygon points="301.8,135.0 302.0,135.2 303.3,140.5 303.2,142.3 304.8,147.6 304.0,149.3 306.1,154.6 304.6,156.3 308.0,161.6 305.4,163.4 307.2,168.6 303.4,167.7 300.1,167.7 295.9,168.6 298.5,163.4 296.6,161.6 298.6,156.3 297.4,154.6 299.5,149.3 298.8,147.6 300.2,142.3 300.4,140.5 301.5,135.2" fill="#175828"/>
<polygon points="180.2,132.2 180.5,132.4 181.6,137.6 181.5,139.3 183.3,144.6 182.8,146.3 184.6,151.5 183.2,153.3 185.5,158.5 183.9,160.2 185.9,165.5 184.1,167.2 182.0,168.0 178.5,168.0 176.3,167.2 173.6,165.5 176.2,160.2 175.2,158.5 176.7,153.3 176.2,151.5 178.2,146.3 177.0,144.6 178.8,139.3 178.6,137.6 180.0,132.4" fill="#33903c"/>
<polygon points="263.9,113.5 264.2,113.7 265.3,118.8 265.1,120.4 266.5,125.5 265.8,127.0 267.7,132.1 266.3,133.7 268.3,138.8 267.2,140.3 270.4,145.4 268.0,147.0 269.7,152.1 267.7,153.7 269.9,158.7 265.7,157.8 262.1,157.8 257.7,158.7 260.4,153.7 258.0,152.1 259.8,147.0 258.8,145.4 260.4,140.3 258.6,138.8 261.6,133.7 260.2,132.1 261.6,127.0 261.1,125.5 262.4,120.4 262.4,118.8 263.6,113.7" fill="#1f6a30"/>
<polygon points="176.0,119.5 176.3,119.7 177.5,124.8 177.5,126.4 179.1,131.5 178.1,133.1 180.7,138.3 179.4,139.8 181.5,145.0 179.7,146.6 182.2,151.7 180.6,153.3 183.5,158.4 180.4,160.0 182.9,165.1 178.0,164.1 174.0,164.1 168.3,165.1 171.8,160.0 168.7,158.4 172.0,153.3 169.7,151.7 172.1,146.6 170.8,145.0 173.0,139.8 172.0,138.3 173.6,133.1 173.0,131.5 174.5,126.4 174.6,124.8 175.7,119.7" fill="#1b602c"/>
<polygon points="176.0,122.5 176.7,119.7 177.4,124.8 177.3,126.4 178.2,131.5 177.7,133.1 179.1,138.3 178.4,139.8 179.6,145.0 178.6,146.6 180.0,151.7 179.1,153.3 180.7,158.4 179.0,160.0 180.3,165.1 177.4,164.1 175.7,164.1 175.1,165.1 175.5,160.0 175.1,158.4 175.5,153.3 175.2,151.7 175.5,146.6 175.4,145.0 175.6,139.8 175.5,138.3 175.7,133.1 175.6,131.5 175.8,126.4 175.8,124.8 176.0,119.7" fill="#04140c" opacity="0.28"/>
<polygon points="353.8,112.6 354.0,112.8 355.3,117.8 355.2,119.3 356.6,124.3 356.0,125.8 358.5,130.9 357.2,132.3 359.7,137.4 357.7,138.9 359.5,143.9 358.1,145.4 360.5,150.4 355.7,149.4 351.9,149.4 346.9,150.4 349.3,145.4 347.9,143.9 349.9,138.9 347.7,137.4 350.7,132.3 349.1,130.9 351.2,125.8 350.5,124.3 352.1,119.3 352.1,117.8 353.5,112.8" fill="#1f6a30"/>
<polygon points="353.8,115.6 354.4,112.8 355.1,117.8 355.0,119.3 355.8,124.3 355.5,125.8 356.9,130.9 356.2,132.3 357.6,137.4 356.4,138.9 357.4,143.9 356.6,145.4 358.0,150.4 355.0,149.4 353.5,149.4 353.0,150.4 353.2,145.4 353.1,143.9 353.3,138.9 353.1,137.4 353.4,132.3 353.2,130.9 353.5,125.8 353.4,124.3 353.6,119.3 353.6,117.8 353.7,112.8" fill="#04140c" opacity="0.28"/>
<polygon points="260.1,122.9 260.4,123.1 261.6,128.2 261.7,129.8 263.1,134.9 262.7,136.5 264.3,141.6 262.9,143.2 265.3,148.3 264.0,149.9 267.2,155.1 264.8,156.6 267.4,161.8 265.2,163.4 266.8,168.5 262.3,167.5 257.9,167.5 252.1,168.5 255.7,163.4 252.3,161.8 255.0,156.6 253.6,155.1 256.0,149.9 254.5,148.3 257.1,143.2 255.2,141.6 258.0,136.5 256.9,134.9 258.6,129.8 258.6,128.2 259.8,123.1" fill="#2a8038"/>
<polygon points="260.1,125.9 260.9,123.1 261.5,128.2 261.6,129.8 262.3,134.9 262.1,136.5 263.0,141.6 262.2,143.2 263.5,148.3 262.8,149.9 264.6,155.1 263.3,156.6 264.7,161.8 263.5,163.4 264.4,168.5 261.6,167.5 259.8,167.5 259.2,168.5 259.6,163.4 259.2,161.8 259.5,156.6 259.3,155.1 259.6,149.9 259.4,148.3 259.8,143.2 259.5,141.6 259.9,136.5 259.7,134.9 259.9,129.8 259.9,128.2 260.1,123.1" fill="#04140c" opacity="0.28"/>
<polygon points="363.5,138.9 363.8,139.1 364.9,144.1 364.8,145.5 365.9,150.5 365.2,151.9 367.0,156.9 365.8,158.3 368.0,163.3 366.5,164.8 368.2,169.7 367.5,171.2 369.0,176.1 367.3,177.6 369.3,182.6 366.9,184.0 365.3,184.8 361.8,184.8 359.4,184.0 357.8,182.6 359.6,177.6 357.8,176.1 359.6,171.2 358.7,169.7 360.3,164.8 358.6,163.3 361.2,158.3 360.3,156.9 361.7,151.9 361.2,150.5 362.5,145.5 362.2,144.1 363.3,139.1" fill="#175828"/>
<polygon points="338.9,131.3 339.2,131.5 340.4,136.5 340.7,138.0 341.9,143.1 341.5,144.6 343.8,149.7 342.6,151.2 344.7,156.3 342.6,157.8 345.1,162.8 342.7,164.4 345.7,169.4 340.9,168.5 337.0,168.5 332.8,169.4 334.2,164.4 332.2,162.8 335.2,157.8 332.3,156.3 335.3,151.2 334.4,149.7 336.5,144.6 335.5,143.1 337.4,138.0 337.3,136.5 338.7,131.5" fill="#1f6a30"/>
<polygon points="338.9,134.3 339.6,131.5 340.3,136.5 340.4,138.0 341.1,143.1 340.9,144.6 342.2,149.7 341.5,151.2 342.6,156.3 341.5,157.8 342.9,162.8 341.5,164.4 343.2,169.4 340.3,168.5 338.6,168.5 338.2,169.4 338.4,164.4 338.1,162.8 338.5,157.8 338.1,156.3 338.5,151.2 338.4,149.7 338.6,144.6 338.5,143.1 338.8,138.0 338.7,136.5 338.9,131.5" fill="#04140c" opacity="0.28"/>
<polygon points="280.2,114.3 280.5,114.5 281.3,119.6 281.2,121.1 282.6,126.2 282.1,127.7 283.2,132.8 282.4,134.4 284.1,139.4 283.4,141.0 285.3,146.1 283.2,147.6 284.5,152.7 281.6,151.7 278.9,151.7 275.4,152.7 277.7,147.6 275.9,146.1 277.6,141.0 275.9,139.4 277.6,134.4 277.3,132.8 278.5,127.7 277.7,126.2 279.2,121.1 279.0,119.6 280.0,114.5" fill="#1b602c"/>
<polygon points="287.5,114.4 287.7,114.6 288.5,119.7 288.5,121.2 289.5,126.3 289.1,127.9 290.6,133.0 289.8,134.6 291.1,139.6 290.4,141.2 291.9,146.3 290.4,147.9 292.0,153.0 290.9,154.5 288.9,155.3 286.1,155.3 284.3,154.5 282.4,153.0 284.2,147.9 282.7,146.3 285.1,141.2 283.0,139.6 285.4,134.6 284.1,133.0 285.9,127.9 285.0,126.3 286.4,121.2 286.3,119.7 287.3,114.6" fill="#2a8038"/>
<polygon points="207.6,117.2 207.9,117.4 209.7,122.5 209.3,124.1 211.3,129.3 210.3,130.9 212.7,136.1 211.8,137.7 215.7,142.9 212.0,144.5 215.8,149.7 211.8,151.3 209.8,152.1 205.4,152.1 203.5,151.3 200.7,149.7 203.1,144.5 201.0,142.9 203.8,137.7 201.6,136.1 204.7,130.9 203.6,129.3 206.0,124.1 205.7,122.5 207.3,117.4" fill="#1f6a30"/>
<polygon points="207.6,120.2 208.4,117.4 209.3,122.5 209.2,124.1 210.2,129.3 209.7,130.9 211.0,136.1 210.5,137.7 212.6,142.9 210.6,144.5 212.7,149.7 210.5,151.3 209.1,152.1 207.2,152.1 207.1,151.3 206.8,149.7 207.1,144.5 206.8,142.9 207.2,137.7 206.9,136.1 207.3,130.9 207.1,129.3 207.4,124.1 207.4,122.5 207.6,117.4" fill="#04140c" opacity="0.28"/>
<polygon points="325.2,134.3 325.4,134.5 326.5,139.5 326.4,141.0 327.9,146.1 327.0,147.6 329.2,152.6 328.1,154.1 330.1,159.1 328.5,160.6 331.6,165.6 328.9,167.2 331.6,172.2 329.2,173.7 332.1,178.7 327.0,177.7 323.3,177.7 319.1,178.7 321.6,173.7 319.1,172.2 320.8,167.2 318.7,165.6 322.2,160.6 320.2,159.1 322.7,154.1 321.1,152.6 322.9,147.6 322.4,146.1 324.0,141.0 323.7,139.5 324.9,134.5" fill="#33903c"/>
<polygon points="325.2,137.3 325.8,134.5 326.4,139.5 326.3,141.0 327.2,146.1 326.7,147.6 327.9,152.6 327.3,154.1 328.4,159.1 327.5,160.6 329.2,165.6 327.7,167.2 329.2,172.2 327.9,173.7 329.4,178.7 326.4,177.7 324.9,177.7 324.4,178.7 324.7,173.7 324.4,172.2 324.6,167.2 324.4,165.6 324.8,160.6 324.6,159.1 324.9,154.1 324.7,152.6 324.9,147.6 324.8,146.1 325.0,141.0 325.0,139.5 325.1,134.5" fill="#04140c" opacity="0.28"/>
<polygon points="214.1,129.8 214.4,130.0 215.4,135.0 215.3,136.5 217.0,141.5 216.3,143.0 217.9,148.0 216.8,149.5 218.7,154.5 217.4,156.0 220.4,161.0 218.6,162.5 219.8,167.5 218.5,169.0 221.3,174.0 216.0,173.1 212.2,173.1 208.0,174.0 210.4,169.0 207.3,167.5 210.4,162.5 208.1,161.0 210.4,156.0 209.3,154.5 211.5,149.5 210.4,148.0 211.9,143.0 211.3,141.5 212.6,136.5 212.7,135.0 213.8,130.0" fill="#33903c"/>
<polygon points="214.1,132.8 214.8,130.0 215.3,135.0 215.3,136.5 216.2,141.5 215.8,143.0 216.7,148.0 216.1,149.5 217.1,154.5 216.4,156.0 218.1,161.0 217.1,162.5 217.8,167.5 217.0,169.0 218.6,174.0 215.4,173.1 213.8,173.1 213.4,174.0 213.7,169.0 213.3,167.5 213.7,162.5 213.4,161.0 213.6,156.0 213.5,154.5 213.8,149.5 213.6,148.0 213.8,143.0 213.8,141.5 213.9,136.5 213.9,135.0 214.1,130.0" fill="#04140c" opacity="0.28"/>
<polygon points="242.9,117.3 243.2,117.5 244.4,122.6 244.1,124.2 245.6,129.4 244.8,131.0 246.5,136.2 245.5,137.8 248.0,142.9 246.1,144.6 249.1,149.7 246.6,151.3 249.1,156.5 247.0,158.1 248.9,163.3 244.8,162.3 241.1,162.3 237.0,163.3 239.0,158.1 237.0,156.5 238.6,151.3 236.6,149.7 240.0,144.6 237.7,142.9 240.2,137.8 239.4,136.2 240.6,131.0 239.9,129.4 241.6,124.2 241.4,122.6 242.6,117.5" fill="#33903c"/>
<polygon points="242.9,120.3 243.6,117.5 244.2,122.6 244.0,124.2 244.9,129.4 244.4,131.0 245.4,136.2 244.8,137.8 246.2,142.9 245.1,144.6 246.8,149.7 245.4,151.3 246.8,156.5 245.7,158.1 246.7,163.3 244.1,162.3 242.6,162.3 242.2,163.3 242.4,158.1 242.2,156.5 242.4,151.3 242.2,149.7 242.6,144.6 242.3,142.9 242.6,137.8 242.5,136.2 242.6,131.0 242.5,129.4 242.8,124.2 242.7,122.6 242.9,117.5" fill="#04140c" opacity="0.28"/>
<polygon points="230.6,130.9 231.0,131.1 232.6,136.2 232.1,137.8 234.1,142.9 233.1,144.5 235.8,149.6 234.6,151.2 236.3,156.4 234.4,158.0 238.3,163.1 235.9,164.7 238.6,169.8 235.6,171.4 232.8,172.2 228.5,172.2 226.2,171.4 223.4,169.8 226.1,164.7 223.8,163.1 226.9,158.0 224.7,156.4 227.4,151.2 225.3,149.6 228.0,144.5 227.1,142.9 228.8,137.8 229.0,136.2 230.4,131.1" fill="#1f6a30"/>
<polygon points="230.6,133.9 231.4,131.1 232.3,136.2 232.0,137.8 233.1,142.9 232.6,144.5 234.1,149.6 233.4,151.2 234.3,156.4 233.3,158.0 235.4,163.1 234.1,164.7 235.6,169.8 234.0,171.4 232.1,172.2 230.3,172.2 230.1,171.4 229.8,169.8 230.1,164.7 229.8,163.1 230.2,158.0 229.9,156.4 230.3,151.2 230.0,149.6 230.3,144.5 230.2,142.9 230.4,137.8 230.4,136.2 230.6,131.1" fill="#04140c" opacity="0.28"/>
<polygon points="328.9,119.2 329.2,119.4 330.2,124.5 330.1,126.2 331.5,131.4 331.0,133.1 333.1,138.3 332.0,140.0 334.4,145.2 332.1,146.8 334.3,152.0 332.6,153.7 335.2,158.9 330.6,157.9 327.3,157.9 323.5,158.9 325.0,153.7 323.8,152.0 325.2,146.8 323.9,145.2 326.0,140.0 324.7,138.3 326.7,133.1 326.1,131.4 327.8,126.2 327.5,124.5 328.7,119.4" fill="#33903c"/>
<polygon points="371.9,116.2 372.1,116.4 373.9,121.6 373.8,123.2 375.7,128.3 374.5,129.9 377.4,135.0 376.2,136.6 378.2,141.7 376.5,143.3 380.0,148.4 377.1,150.0 374.0,150.8 369.7,150.8 367.1,150.0 364.1,148.4 366.9,143.3 364.1,141.7 367.8,136.6 366.1,135.0 368.6,129.9 367.7,128.3 369.9,123.2 370.0,121.6 371.5,116.4" fill="#2a8038"/>
<polygon points="371.9,119.2 372.6,116.4 373.5,121.6 373.5,123.2 374.6,128.3 373.9,129.9 375.5,135.0 374.8,136.6 375.9,141.7 375.0,143.3 376.9,148.4 375.3,150.0 373.3,150.8 371.5,150.8 371.3,150.0 370.9,148.4 371.3,143.3 370.9,141.7 371.4,136.6 371.2,135.0 371.5,129.9 371.4,128.3 371.6,123.2 371.6,121.6 371.8,116.4" fill="#04140c" opacity="0.28"/>
<polygon points="249.2,131.1 249.5,131.3 251.1,136.6 251.0,138.3 252.6,143.6 252.3,145.3 254.7,150.6 253.0,152.4 255.2,157.6 253.4,159.4 256.4,164.7 253.2,166.4 251.3,167.2 247.2,167.2 245.1,166.4 241.4,164.7 244.6,159.4 242.0,157.6 245.7,152.4 243.9,150.6 246.2,145.3 245.2,143.6 247.5,138.3 247.6,136.6 248.9,131.3" fill="#1f6a30"/>
<polygon points="249.2,134.1 249.9,131.3 250.8,136.6 250.7,138.3 251.6,143.6 251.5,145.3 252.8,150.6 251.8,152.4 253.1,157.6 252.1,159.4 253.7,164.7 252.0,166.4 250.6,167.2 248.9,167.2 248.7,166.4 248.3,164.7 248.6,159.4 248.3,157.6 248.8,152.4 248.6,150.6 248.8,145.3 248.7,143.6 249.0,138.3 249.0,136.6 249.2,131.3" fill="#04140c" opacity="0.28"/>
<polygon points="249.8,137.3 250.1,137.5 251.1,142.7 250.9,144.4 252.5,149.6 251.8,151.3 253.6,156.5 252.6,158.2 254.0,163.4 253.1,165.1 255.5,170.3 252.8,172.0 254.8,177.2 253.4,178.9 251.4,179.7 248.3,179.7 246.8,178.9 245.0,177.2 246.7,172.0 244.2,170.3 246.7,165.1 245.3,163.4 247.0,158.2 246.2,156.5 247.9,151.3 247.4,149.6 248.5,144.4 248.5,142.7 249.6,137.5" fill="#33903c"/>
<polygon points="191.9,118.9 192.2,119.1 194.2,124.4 194.2,126.3 196.6,131.6 195.6,133.4 198.0,138.7 196.4,140.6 200.0,145.9 196.3,147.7 194.1,148.5 189.6,148.5 186.9,147.7 183.4,145.9 186.6,140.6 185.7,138.7 188.7,133.4 187.8,131.6 189.8,126.3 189.5,124.4 191.6,119.1" fill="#33903c"/>
<polygon points="191.9,121.9 192.7,119.1 193.7,124.4 193.7,126.3 195.0,131.6 194.5,133.4 195.9,138.7 194.9,140.6 196.9,145.9 194.9,147.7 193.3,148.5 191.5,148.5 191.3,147.7 190.8,145.9 191.2,140.6 191.1,138.7 191.5,133.4 191.4,131.6 191.6,126.3 191.6,124.4 191.8,119.1" fill="#04140c" opacity="0.28"/>
<polygon points="180.5,134.5 180.7,134.7 181.6,139.8 181.7,141.5 182.6,146.6 182.2,148.2 183.9,153.4 182.9,155.0 184.7,160.1 182.7,161.8 184.8,166.9 183.3,168.5 181.7,169.3 179.3,169.3 177.8,168.5 176.3,166.9 177.8,161.8 176.6,160.1 178.4,155.0 177.1,153.4 178.9,148.2 178.4,146.6 179.5,141.5 179.3,139.8 180.3,134.7" fill="#2a8038"/>
<polygon points="339.3,118.5 339.6,118.7 341.2,123.9 341.3,125.7 343.7,130.9 341.9,132.6 345.6,137.8 343.3,139.5 346.4,144.8 343.7,146.5 346.6,151.7 344.1,153.4 341.5,154.2 337.1,154.2 334.2,153.4 331.9,151.7 334.9,146.5 332.8,144.8 334.9,139.5 334.0,137.8 336.6,132.6 335.1,130.9 337.5,125.7 337.4,123.9 339.0,118.7" fill="#175828"/>
<polygon points="339.3,121.5 340.1,118.7 341.0,123.9 341.0,125.7 342.3,130.9 341.3,132.6 343.3,137.8 342.1,139.5 343.8,144.8 342.3,146.5 343.9,151.7 342.6,153.4 340.8,154.2 338.9,154.2 338.7,153.4 338.4,151.7 338.8,146.5 338.5,144.8 338.8,139.5 338.7,137.8 339.0,132.6 338.8,130.9 339.1,125.7 339.1,123.9 339.3,118.7" fill="#04140c" opacity="0.28"/>
<polygon points="225.8,116.4 226.0,116.6 227.2,121.8 227.0,123.5 228.3,128.7 228.1,130.4 229.7,135.6 228.6,137.3 231.1,142.5 228.9,144.1 231.8,149.3 229.4,151.0 231.5,156.2 229.2,157.9 227.5,158.7 224.0,158.7 221.6,157.9 220.1,156.2 222.2,151.0 219.7,149.3 222.5,144.1 220.9,142.5 222.6,137.3 221.7,135.6 223.9,130.4 222.8,128.7 224.3,123.5 224.3,121.8 225.5,116.6" fill="#33903c"/>
<polygon points="313.6,122.8 313.9,123.0 315.8,128.3 315.8,130.1 317.5,135.4 316.3,137.3 319.5,142.6 317.9,144.4 320.5,149.7 318.2,151.5 315.6,152.3 311.7,152.3 310.0,151.5 307.2,149.7 309.2,144.4 307.3,142.6 310.9,137.3 309.8,135.4 311.7,130.1 311.8,128.3 313.3,123.0" fill="#1f6a30"/>
<polygon points="313.6,125.8 314.3,123.0 315.3,128.3 315.3,130.1 316.3,135.4 315.6,137.3 317.4,142.6 316.5,144.4 318.0,149.7 316.6,151.5 314.9,152.3 313.3,152.3 313.2,151.5 312.9,149.7 313.1,144.4 312.9,142.6 313.3,137.3 313.2,135.4 313.4,130.1 313.4,128.3 313.6,123.0" fill="#04140c" opacity="0.28"/>
<polygon points="224.8,133.8 225.1,134.0 226.4,139.2 226.3,140.8 227.8,146.0 227.0,147.6 229.9,152.8 228.2,154.4 231.5,159.5 229.0,161.2 232.2,166.3 229.7,168.0 231.5,173.1 226.9,172.2 222.8,172.2 218.5,173.1 221.0,168.0 218.0,166.3 220.4,161.2 218.1,159.5 221.2,154.4 220.6,152.8 222.5,147.6 221.5,146.0 223.1,140.8 223.2,139.2 224.5,134.0" fill="#33903c"/>
<polygon points="224.8,136.8 225.5,134.0 226.2,139.2 226.2,140.8 227.0,146.0 226.6,147.6 228.2,152.8 227.2,154.4 229.0,159.5 227.6,161.2 229.4,166.3 228.1,168.0 229.0,173.1 226.2,172.2 224.5,172.2 224.1,173.1 224.4,168.0 224.0,166.3 224.3,161.2 224.0,159.5 224.4,154.4 224.3,152.8 224.6,147.6 224.4,146.0 224.6,140.8 224.6,139.2 224.8,134.0" fill="#04140c" opacity="0.28"/>
<polygon points="354.3,113.7 354.6,113.9 356.1,119.1 356.1,120.7 357.2,125.8 356.9,127.4 359.2,132.6 357.5,134.2 360.2,139.3 357.9,140.9 360.6,146.0 358.4,147.6 361.6,152.8 358.6,154.4 362.3,159.5 356.5,158.5 352.1,158.5 346.6,159.5 350.0,154.4 347.3,152.8 349.3,147.6 347.1,146.0 349.9,140.9 348.2,139.3 350.8,134.2 349.5,132.6 351.8,127.4 350.9,125.8 352.7,120.7 352.6,119.1 354.0,113.9" fill="#33903c"/>
<polygon points="354.3,116.7 355.1,113.9 355.9,119.1 355.9,120.7 356.5,125.8 356.3,127.4 357.6,132.6 356.6,134.2 358.1,139.3 356.9,140.9 358.4,146.0 357.1,147.6 358.9,152.8 357.3,154.4 359.3,159.5 355.8,158.5 354.0,158.5 353.4,159.5 353.8,154.4 353.5,152.8 353.7,147.6 353.5,146.0 353.8,140.9 353.6,139.3 353.9,134.2 353.8,132.6 354.0,127.4 353.9,125.8 354.1,120.7 354.1,119.1 354.3,113.9" fill="#04140c" opacity="0.28"/>
<polygon points="173.2,113.6 173.5,113.8 174.9,118.8 174.8,120.3 176.2,125.4 175.7,126.8 177.3,131.9 175.9,133.4 177.9,138.4 176.8,139.9 179.2,144.9 176.9,146.4 180.9,151.4 178.2,152.9 179.5,157.9 177.5,159.4 175.3,160.2 171.2,160.2 168.9,159.4 166.0,157.9 168.3,152.9 166.5,151.4 169.0,146.4 166.8,144.9 169.3,139.9 167.6,138.4 170.7,133.4 169.2,131.9 171.0,126.8 170.3,125.4 172.0,120.3 171.6,118.8 172.9,113.8" fill="#1f6a30"/>
<polygon points="173.2,116.6 173.9,113.8 174.7,118.8 174.6,120.3 175.4,125.4 175.1,126.8 176.0,131.9 175.3,133.4 176.3,138.4 175.7,139.9 177.1,144.9 175.8,146.4 178.0,151.4 176.5,152.9 177.2,157.9 176.1,159.4 174.6,160.2 172.9,160.2 172.7,159.4 172.4,157.9 172.6,152.9 172.4,151.4 172.7,146.4 172.5,144.9 172.8,139.9 172.6,138.4 172.9,133.4 172.7,131.9 173.0,126.8 172.9,125.4 173.1,120.3 173.0,118.8 173.2,113.8" fill="#04140c" opacity="0.28"/>
<polygon points="335.2,126.0 335.5,126.2 336.8,131.4 336.5,133.0 338.2,138.2 337.4,139.8 339.4,145.0 337.8,146.6 340.4,151.8 338.7,153.4 342.3,158.5 339.4,160.2 342.1,165.3 339.2,167.0 337.1,167.8 333.3,167.8 330.8,167.0 329.1,165.3 330.7,160.2 328.2,158.5 331.1,153.4 329.8,151.8 331.9,146.6 331.3,145.0 332.8,139.8 332.1,138.2 333.6,133.0 333.9,131.4 334.9,126.2" fill="#1b602c"/>
<polygon points="335.2,129.0 335.9,126.2 336.6,131.4 336.5,133.0 337.4,138.2 336.9,139.8 338.0,145.0 337.2,146.6 338.6,151.8 337.7,153.4 339.6,158.5 338.1,160.2 339.5,165.3 337.9,167.0 336.5,167.8 334.9,167.8 334.7,167.0 334.5,165.3 334.7,160.2 334.4,158.5 334.7,153.4 334.6,151.8 334.8,146.6 334.8,145.0 334.9,139.8 334.9,138.2 335.0,133.0 335.1,131.4 335.2,126.2" fill="#04140c" opacity="0.28"/>
<polygon points="375.4,132.5 375.6,132.7 376.6,138.0 376.5,139.8 377.8,145.0 377.3,146.8 378.8,152.1 377.9,153.8 379.4,159.1 377.9,160.9 376.7,161.7 374.1,161.7 373.0,160.9 370.8,159.1 372.3,153.8 372.0,152.1 373.5,146.8 372.7,145.0 374.3,139.8 374.2,138.0 375.2,132.7" fill="#1f6a30"/>
<polygon points="176.8,128.3 177.0,128.5 178.0,133.6 178.0,135.2 179.5,140.3 178.6,141.8 181.0,146.9 179.6,148.5 181.4,153.6 180.2,155.1 182.3,160.2 179.7,161.8 178.3,162.6 175.3,162.6 173.5,161.8 171.3,160.2 173.2,155.1 172.3,153.6 174.3,148.5 172.8,146.9 175.0,141.8 173.9,140.3 175.4,135.2 175.6,133.6 176.6,128.5" fill="#2a8038"/>
<polygon points="331.6,135.9 331.9,136.1 332.9,141.1 333.0,142.6 334.0,147.6 333.5,149.1 335.7,154.1 334.2,155.6 336.5,160.7 335.1,162.1 337.8,167.2 335.4,168.7 338.3,173.7 335.2,175.2 338.3,180.2 333.4,179.2 329.9,179.2 326.1,180.2 328.0,175.2 326.2,173.7 328.1,168.7 325.6,167.2 328.5,162.1 326.6,160.7 329.3,155.6 328.2,154.1 329.4,149.1 329.0,147.6 330.2,142.6 330.3,141.1 331.3,136.1" fill="#1f6a30"/>
<polygon points="226.1,121.9 226.5,122.1 228.3,127.3 227.9,129.0 230.1,134.2 229.3,135.8 231.1,141.0 230.3,142.6 232.6,147.8 230.2,149.5 233.3,154.6 231.3,156.3 228.3,157.1 223.9,157.1 221.8,156.3 218.2,154.6 221.4,149.5 219.6,147.8 221.6,142.6 221.1,141.0 223.3,135.8 222.1,134.2 224.3,129.0 224.3,127.3 225.8,122.1" fill="#1f6a30"/>
<polygon points="226.1,124.9 226.9,122.1 227.9,127.3 227.7,129.0 228.9,134.2 228.4,135.8 229.5,141.0 229.0,142.6 230.3,147.8 229.0,149.5 230.6,154.6 229.5,156.3 227.6,157.1 225.8,157.1 225.6,156.3 225.2,154.6 225.6,149.5 225.3,147.8 225.6,142.6 225.5,141.0 225.8,135.8 225.6,134.2 225.9,129.0 225.9,127.3 226.1,122.1" fill="#04140c" opacity="0.28"/>
<polygon points="186.5,119.5 186.8,119.7 188.1,124.7 188.2,126.1 189.9,131.1 189.1,132.5 190.9,137.5 189.4,139.0 191.8,144.0 190.3,145.4 192.7,150.4 190.6,151.8 192.4,156.8 188.4,155.8 184.6,155.8 179.4,156.8 181.9,151.8 180.2,150.4 182.8,145.4 181.3,144.0 183.4,139.0 182.1,137.5 183.8,132.5 183.4,131.1 184.9,126.1 184.8,124.7 186.3,119.7" fill="#33903c"/>
<polygon points="186.5,122.5 187.2,119.7 187.9,124.7 187.9,126.1 188.9,131.1 188.5,132.5 189.4,137.5 188.6,139.0 189.9,144.0 189.1,145.4 190.4,150.4 189.3,151.8 190.3,156.8 187.8,155.8 186.2,155.8 185.7,156.8 186.0,151.8 185.8,150.4 186.1,145.4 185.9,144.0 186.1,139.0 186.0,137.5 186.2,132.5 186.1,131.1 186.3,126.1 186.3,124.7 186.5,119.7" fill="#04140c" opacity="0.28"/>
<polygon points="219.6,113.5 219.8,113.7 220.7,118.7 220.5,120.1 221.7,125.1 221.2,126.5 222.1,131.5 221.4,132.9 223.1,137.9 222.3,139.4 223.6,144.3 222.4,145.8 223.9,150.7 222.6,152.2 220.9,153.0 218.3,153.0 217.2,152.2 215.1,150.7 216.8,145.8 215.6,144.3 217.3,139.4 216.2,137.9 217.5,132.9 216.8,131.5 218.0,126.5 217.8,125.1 218.6,120.1 218.7,118.7 219.4,113.7" fill="#175828"/>
<polygon points="307.7,134.4 307.9,134.6 308.8,139.6 308.7,141.1 310.1,146.0 309.5,147.5 310.6,152.5 310.1,154.0 311.2,158.9 310.3,160.4 312.0,165.4 310.0,166.8 308.9,167.6 306.5,167.6 305.4,166.8 303.8,165.4 305.1,160.4 303.8,158.9 305.4,154.0 304.8,152.5 306.0,147.5 305.3,146.0 306.6,141.1 306.6,139.6 307.5,134.6" fill="#33903c"/>
<polygon points="245.9,112.7 246.1,112.9 246.8,117.9 246.8,119.4 248.1,124.4 247.5,125.9 248.7,130.9 248.1,132.4 250.1,137.4 248.7,138.9 250.3,143.9 248.9,145.4 250.4,150.4 247.1,149.5 244.6,149.5 241.6,150.4 243.2,145.4 242.1,143.9 243.2,138.9 242.4,137.4 243.9,132.4 243.0,130.9 244.1,125.9 243.8,124.4 244.8,119.4 244.9,117.9 245.7,112.9" fill="#1b602c"/>
<polygon points="280.5,117.6 280.7,117.8 282.1,122.9 282.0,124.5 283.3,129.6 282.7,131.2 284.4,136.3 284.0,137.9 285.5,143.0 284.0,144.7 287.4,149.8 284.2,151.4 287.4,156.5 282.3,155.5 278.6,155.5 275.0,156.5 276.5,151.4 274.1,149.8 276.3,144.7 275.0,143.0 277.1,137.9 275.7,136.3 278.0,131.2 277.1,129.6 279.2,124.5 278.8,122.9 280.2,117.8" fill="#175828"/>
<polygon points="280.5,120.6 281.1,117.8 281.9,122.9 281.8,124.5 282.5,129.6 282.2,131.2 283.1,136.3 282.9,137.9 283.8,143.0 282.9,144.7 284.8,149.8 283.0,151.4 284.8,156.5 281.7,155.5 280.2,155.5 279.8,156.5 280.0,151.4 279.7,149.8 280.0,144.7 279.8,143.0 280.1,137.9 279.9,136.3 280.2,131.2 280.1,129.6 280.3,124.5 280.3,122.9 280.4,117.8" fill="#04140c" opacity="0.28"/>
<polygon points="215.1,124.4 215.5,124.6 216.8,129.7 216.9,131.3 218.5,136.5 217.7,138.1 219.9,143.2 218.6,144.9 222.2,150.0 219.3,151.6 223.2,156.8 219.8,158.4 222.4,163.5 217.3,162.6 212.9,162.6 207.5,163.5 210.6,158.4 208.2,156.8 210.2,151.6 208.4,150.0 211.3,144.9 210.5,143.2 212.7,138.1 211.2,136.5 213.4,131.3 213.1,129.7 214.8,124.6" fill="#33903c"/>
<polygon points="215.1,127.4 215.9,124.6 216.6,129.7 216.7,131.3 217.6,136.5 217.1,138.1 218.3,143.2 217.6,144.9 219.6,150.0 218.0,151.6 220.1,156.8 218.3,158.4 219.7,163.5 216.6,162.6 214.8,162.6 214.2,163.5 214.6,158.4 214.3,156.8 214.5,151.6 214.3,150.0 214.7,144.9 214.6,143.2 214.8,138.1 214.7,136.5 214.9,131.3 214.9,129.7 215.1,124.6" fill="#04140c" opacity="0.28"/>
<polygon points="221.1,126.7 221.4,126.9 222.6,132.0 222.5,133.5 224.2,138.6 223.5,140.1 225.0,145.2 223.9,146.7 226.7,151.7 224.7,153.3 227.4,158.3 225.0,159.9 222.8,160.7 219.5,160.7 218.0,159.9 215.1,158.3 217.2,153.3 215.2,151.7 217.9,146.7 216.9,145.2 219.1,140.1 218.5,138.6 219.6,133.5 219.8,132.0 220.9,126.9" fill="#2a8038"/>
<polygon points="327.0,115.9 327.2,116.1 328.2,121.3 328.2,122.9 329.5,128.0 328.6,129.7 330.2,134.8 329.2,136.4 331.0,141.6 329.9,143.2 331.2,148.4 328.3,147.4 325.7,147.4 322.9,148.4 324.4,143.2 322.6,141.6 324.2,136.4 323.1,134.8 325.3,129.7 324.5,128.0 325.7,122.9 325.8,121.3 326.8,116.1" fill="#33903c"/>
<polygon points="277.6,130.0 278.0,130.2 279.7,135.2 279.5,136.7 281.8,141.7 280.5,143.2 283.7,148.2 281.9,149.7 284.5,154.7 282.3,156.2 284.2,161.2 279.6,160.3 275.7,160.3 270.5,161.2 273.3,156.2 270.1,154.7 274.3,149.7 272.4,148.2 275.1,143.2 273.6,141.7 275.8,136.7 275.9,135.2 277.4,130.2" fill="#1b602c"/>
<polygon points="277.6,133.0 278.3,130.2 279.3,135.2 279.2,136.7 280.5,141.7 279.8,143.2 281.5,148.2 280.5,149.7 281.9,154.7 280.7,156.2 281.8,161.2 278.9,160.3 277.3,160.3 276.8,161.2 277.1,156.2 276.7,154.7 277.2,149.7 277.0,148.2 277.3,143.2 277.2,141.7 277.4,136.7 277.4,135.2 277.6,130.2" fill="#04140c" opacity="0.28"/>
<polygon points="317.3,121.6 317.5,121.8 318.6,127.0 318.5,128.6 319.9,133.7 319.4,135.3 320.9,140.4 320.1,142.0 322.3,147.1 320.3,148.7 322.2,153.8 320.8,155.4 322.3,160.5 318.9,159.5 315.7,159.5 311.8,160.5 314.0,155.4 312.0,153.8 314.1,148.7 312.1,147.1 314.8,142.0 313.5,140.4 315.2,135.3 314.6,133.7 316.2,128.6 316.1,127.0 317.0,121.8" fill="#2a8038"/>
<polygon points="218.4,127.6 218.7,127.8 219.6,132.8 219.5,134.2 221.0,139.2 220.3,140.7 221.4,145.6 220.6,147.1 222.4,152.1 221.6,153.5 223.9,158.5 222.3,160.0 223.3,164.9 221.9,166.4 223.7,171.4 220.0,170.4 216.9,170.4 213.6,171.4 214.8,166.4 213.6,164.9 214.8,160.0 212.8,158.5 215.2,153.5 214.6,152.1 216.3,147.1 215.1,145.6 216.7,140.7 216.4,139.2 217.4,134.2 217.4,132.8 218.2,127.8" fill="#175828"/>
<polygon points="227.7,131.9 228.0,132.1 228.8,137.3 228.9,138.9 229.9,144.0 229.6,145.6 231.4,150.7 229.9,152.3 231.8,157.4 231.0,159.1 232.2,164.2 231.4,165.8 233.4,170.9 231.1,172.5 233.2,177.6 229.3,176.7 226.2,176.7 222.0,177.6 224.4,172.5 222.9,170.9 224.4,165.8 223.0,164.2 224.7,159.1 223.2,157.4 225.6,152.3 224.4,150.7 226.0,145.6 225.2,144.0 226.8,138.9 226.7,137.3 227.5,132.1" fill="#1f6a30"/>
<polygon points="342.3,124.2 342.5,124.4 343.4,129.4 343.3,130.9 344.1,135.9 344.1,137.4 345.0,142.5 344.4,144.0 345.7,149.0 344.5,150.5 346.1,155.5 345.0,157.0 346.7,162.0 343.6,161.1 341.1,161.1 338.4,162.0 339.4,157.0 337.8,155.5 340.2,150.5 338.9,149.0 340.4,144.0 339.5,142.5 340.7,137.4 340.4,135.9 341.4,130.9 341.4,129.4 342.1,124.4" fill="#1b602c"/>
<polygon points="311.5,130.7 311.7,130.9 312.6,135.9 312.6,137.4 314.1,142.4 313.3,143.9 314.5,149.0 313.9,150.5 316.0,155.5 314.2,157.0 316.1,162.0 314.9,163.5 317.2,168.6 315.1,170.1 317.3,175.1 313.1,174.1 309.8,174.1 306.0,175.1 307.7,170.1 306.3,168.6 307.9,163.5 306.8,162.0 308.5,157.0 307.3,155.5 309.0,150.5 308.3,149.0 309.8,143.9 309.3,142.4 310.2,137.4 310.2,135.9 311.2,130.9" fill="#1b602c"/>
<polygon points="330.6,121.4 331.0,121.6 332.5,126.6 332.6,128.2 334.6,133.2 333.4,134.7 335.5,139.8 334.0,141.3 337.1,146.3 335.3,147.8 338.9,152.9 335.5,154.4 337.4,159.4 332.8,158.4 328.4,158.4 322.7,159.4 325.4,154.4 323.9,152.9 325.6,147.8 323.6,146.3 326.5,141.3 325.3,139.8 327.6,134.7 326.6,133.2 328.8,128.2 328.8,126.6 330.3,121.6" fill="#175828"/>
<polygon points="330.6,124.4 331.4,121.6 332.2,126.6 332.3,128.2 333.4,133.2 332.7,134.7 333.9,139.8 333.1,141.3 334.8,146.3 333.8,147.8 335.7,152.9 333.9,154.4 334.9,159.4 332.1,158.4 330.3,158.4 329.7,159.4 330.0,154.4 329.8,152.9 330.0,147.8 329.8,146.3 330.1,141.3 330.0,139.8 330.3,134.7 330.1,133.2 330.4,128.2 330.4,126.6 330.6,121.6" fill="#04140c" opacity="0.28"/>
<polygon points="187.9,113.0 188.2,113.2 189.5,118.4 189.7,120.1 191.6,125.3 190.6,126.9 193.2,132.1 191.4,133.8 194.1,139.0 191.7,140.7 194.3,145.9 189.7,144.9 186.1,144.9 181.6,145.9 183.9,140.7 181.2,139.0 184.9,133.8 182.8,132.1 185.1,126.9 184.8,125.3 186.3,120.1 186.2,118.4 187.6,113.2" fill="#33903c"/>
<polygon points="192.9,116.4 193.1,116.6 193.8,121.6 193.8,123.1 194.6,128.1 194.2,129.6 195.3,134.5 194.6,136.0 196.3,141.0 195.0,142.5 197.3,147.5 195.7,148.9 197.7,153.9 195.8,155.4 197.2,160.4 196.0,161.9 194.2,162.7 191.6,162.7 190.0,161.9 188.5,160.4 189.9,155.4 188.0,153.9 190.5,148.9 188.8,147.5 190.3,142.5 189.2,141.0 191.0,136.0 190.4,134.5 191.3,129.6 190.9,128.1 192.1,123.1 192.0,121.6 192.7,116.6" fill="#1b602c"/>
<polygon points="213.8,136.5 214.1,136.7 215.5,141.6 215.2,143.1 217.2,148.1 216.1,149.5 218.6,154.5 217.0,156.0 219.9,160.9 217.4,162.4 220.8,167.4 217.3,168.8 220.5,173.8 215.7,172.9 212.0,172.9 207.1,173.8 209.4,168.8 206.9,167.4 209.8,162.4 208.4,160.9 210.4,156.0 209.5,154.5 211.3,149.5 210.6,148.1 212.6,143.1 212.1,141.6 213.6,136.7" fill="#1b602c"/>
<polygon points="213.8,139.5 214.5,136.7 215.2,141.6 215.1,143.1 216.2,148.1 215.6,149.5 217.0,154.5 216.0,156.0 217.7,160.9 216.3,162.4 218.2,167.4 216.3,168.8 218.0,173.8 215.1,172.9 213.5,172.9 213.0,173.8 213.3,168.8 213.0,167.4 213.3,162.4 213.2,160.9 213.4,156.0 213.3,154.5 213.5,149.5 213.4,148.1 213.7,143.1 213.6,141.6 213.8,136.7" fill="#04140c" opacity="0.28"/>
<polygon points="305.3,112.3 305.5,112.5 306.7,117.7 306.5,119.3 307.6,124.4 307.1,126.0 308.6,131.1 307.8,132.7 309.5,137.8 308.4,139.4 311.0,144.5 308.9,146.1 311.5,151.2 309.2,152.8 311.7,158.0 307.1,157.0 303.5,157.0 298.7,158.0 301.3,152.8 298.6,151.2 301.4,146.1 299.8,144.5 302.3,139.4 300.5,137.8 302.5,132.7 301.2,131.1 303.1,126.0 302.7,124.4 304.1,119.3 304.0,117.7 305.0,112.5" fill="#33903c"/>
<polygon points="240.7,136.6 241.1,136.8 242.7,141.8 242.6,143.3 244.6,148.3 243.1,149.7 245.8,154.7 244.2,156.2 246.5,161.2 245.5,162.7 248.4,167.7 246.1,169.1 248.6,174.1 245.7,175.6 243.0,176.4 238.5,176.4 235.3,175.6 232.5,174.1 236.3,169.1 233.5,167.7 237.0,162.7 235.1,161.2 237.1,156.2 235.5,154.7 238.2,149.7 237.2,148.3 238.9,143.3 239.2,141.8 240.4,136.8" fill="#1b602c"/>
<polygon points="240.7,139.6 241.5,136.8 242.4,141.8 242.3,143.3 243.5,148.3 242.7,149.7 244.1,154.7 243.3,156.2 244.5,161.2 244.0,162.7 245.6,167.7 244.3,169.1 245.7,174.1 244.1,175.6 242.2,176.4 240.4,176.4 240.1,175.6 239.8,174.1 240.2,169.1 239.9,167.7 240.3,162.7 240.1,161.2 240.3,156.2 240.1,154.7 240.4,149.7 240.3,148.3 240.5,143.3 240.6,141.8 240.7,136.8" fill="#04140c" opacity="0.28"/>
<polygon points="367.6,131.7 367.9,131.9 369.2,137.0 369.4,138.7 371.1,143.9 370.6,145.6 373.3,150.7 370.9,152.4 374.6,157.6 371.3,159.3 373.7,164.5 369.4,163.5 365.7,163.5 360.6,164.5 363.6,159.3 361.7,157.6 364.0,152.4 361.9,150.7 365.0,145.6 364.0,143.9 366.0,138.7 365.9,137.0 367.3,131.9" fill="#1f6a30"/>
<polygon points="367.6,134.7 368.2,131.9 369.0,137.0 369.1,138.7 370.0,143.9 369.7,145.6 371.2,150.7 369.9,152.4 371.9,157.6 370.1,159.3 371.5,164.5 368.8,163.5 367.2,163.5 366.7,164.5 367.1,159.3 366.9,157.6 367.1,152.4 366.9,150.7 367.2,145.6 367.1,143.9 367.4,138.7 367.4,137.0 367.5,131.9" fill="#04140c" opacity="0.28"/>
<polygon points="363.7,116.8 363.9,117.0 365.2,122.3 365.2,124.1 367.3,129.4 366.6,131.2 368.8,136.5 367.8,138.3 369.3,143.6 367.1,145.4 365.4,146.2 361.9,146.2 360.2,145.4 358.5,143.6 359.9,138.3 358.6,136.5 360.7,131.2 360.2,129.4 362.0,124.1 361.9,122.3 363.4,117.0" fill="#2a8038"/>
<polygon points="216.0,118.2 216.2,118.4 217.2,123.5 217.1,125.1 218.1,130.3 217.7,131.9 219.2,137.1 218.1,138.7 220.6,143.9 218.9,145.5 220.3,150.6 218.9,152.3 221.0,157.4 217.4,156.5 214.6,156.5 211.3,157.4 212.8,152.3 211.4,150.6 213.1,145.5 211.4,143.9 213.3,138.7 212.7,137.1 214.4,131.9 213.6,130.3 214.8,125.1 214.7,123.5 215.7,118.4" fill="#1b602c"/>
<polygon points="379.3,117.4 379.5,117.6 380.3,122.7 380.4,124.3 381.4,129.4 381.0,131.0 382.5,136.1 381.6,137.7 383.6,142.8 382.4,144.4 384.6,149.6 382.7,151.1 384.5,156.3 382.4,157.9 384.2,163.0 380.8,162.0 377.7,162.0 374.0,163.0 375.8,157.9 374.1,156.3 376.3,151.1 374.7,149.6 376.1,144.4 375.3,142.8 377.2,137.7 375.6,136.1 377.5,131.0 376.9,129.4 378.0,124.3 378.1,122.7 379.0,117.6" fill="#33903c"/>
<polygon points="350.8,127.0 351.1,127.2 352.9,132.5 353.0,134.3 355.3,139.5 353.7,141.3 356.9,146.6 354.9,148.3 358.3,153.6 354.7,155.3 352.9,156.1 348.7,156.1 346.2,155.3 343.5,153.6 346.8,148.3 345.1,146.6 347.7,141.3 346.5,139.5 348.8,134.3 348.5,132.5 350.5,127.2" fill="#33903c"/>
<polygon points="350.8,130.0 351.6,127.2 352.5,132.5 352.6,134.3 353.9,139.5 353.0,141.3 354.7,146.6 353.6,148.3 355.5,153.6 353.5,155.3 352.2,156.1 350.5,156.1 350.3,155.3 350.0,153.6 350.4,148.3 350.1,146.6 350.5,141.3 350.3,139.5 350.6,134.3 350.6,132.5 350.8,127.2" fill="#04140c" opacity="0.28"/>
<polygon points="283.1,122.3 283.3,122.5 284.3,127.7 284.5,129.4 285.8,134.7 284.8,136.4 286.5,141.6 285.7,143.3 287.1,148.6 286.3,150.3 287.8,155.5 284.4,154.6 281.8,154.6 278.3,155.5 280.5,150.3 278.2,148.6 280.6,143.3 279.8,141.6 281.1,136.4 280.6,134.7 281.9,129.4 281.9,127.7 282.9,122.5" fill="#1f6a30"/>
<polygon points="167.6,136.0 167.9,136.2 169.2,141.2 169.1,142.8 170.4,147.9 169.8,149.4 172.4,154.5 170.3,156.1 173.7,161.1 171.6,162.7 174.0,167.8 171.7,169.3 169.3,170.1 165.9,170.1 163.8,169.3 161.3,167.8 163.8,162.7 162.6,161.1 164.5,156.1 162.8,154.5 165.4,149.4 164.9,147.9 166.0,142.8 166.2,141.2 167.3,136.2" fill="#33903c"/>
<polygon points="352.7,132.1 353.0,132.3 354.4,137.3 354.5,138.8 355.8,143.7 355.4,145.2 357.3,150.2 355.9,151.7 358.9,156.7 357.1,158.1 360.6,163.1 357.9,164.6 360.8,169.6 357.2,171.0 354.9,171.8 350.5,171.8 348.1,171.0 344.3,169.6 348.5,164.6 346.0,163.1 348.3,158.1 346.6,156.7 348.8,151.7 347.2,150.2 349.8,145.2 349.2,143.7 351.1,138.8 351.1,137.3 352.3,132.3" fill="#1f6a30"/>
<polygon points="352.7,135.1 353.5,132.3 354.2,137.3 354.3,138.8 355.0,143.7 354.8,145.2 355.8,150.2 355.0,151.7 356.7,156.7 355.7,158.1 357.6,163.1 356.1,164.6 357.8,169.6 355.8,171.0 354.2,171.8 352.3,171.8 352.1,171.0 351.7,169.6 352.2,164.6 351.9,163.1 352.1,158.1 352.0,156.7 352.2,151.7 352.0,150.2 352.3,145.2 352.3,143.7 352.5,138.8 352.5,137.3 352.6,132.3" fill="#04140c" opacity="0.28"/>
<polygon points="260.8,128.4 261.1,128.6 262.5,133.8 262.3,135.4 264.1,140.6 262.8,142.3 264.7,147.4 263.9,149.1 265.5,154.2 264.2,155.9 266.5,161.0 265.2,162.7 267.8,167.9 265.2,169.5 268.5,174.7 262.8,173.7 258.8,173.7 253.1,174.7 256.8,169.5 253.6,167.9 256.8,162.7 254.3,161.0 257.4,155.9 255.1,154.2 257.5,149.1 256.5,147.4 258.7,142.3 257.9,140.6 259.4,135.4 259.3,133.8 260.5,128.6" fill="#1b602c"/>
<polygon points="260.8,131.4 261.5,128.6 262.2,133.8 262.2,135.4 263.1,140.6 262.4,142.3 263.5,147.4 263.0,149.1 263.9,154.2 263.2,155.9 264.5,161.0 263.8,162.7 265.2,167.9 263.8,169.5 265.6,174.7 262.1,173.7 260.5,173.7 259.9,174.7 260.3,169.5 259.9,167.9 260.3,162.7 260.0,161.0 260.4,155.9 260.1,154.2 260.4,149.1 260.3,147.4 260.5,142.3 260.4,140.6 260.6,135.4 260.6,133.8 260.8,128.6" fill="#04140c" opacity="0.28"/>
<polygon points="364.7,128.2 365.0,128.4 366.2,133.6 366.0,135.2 367.6,140.3 366.7,141.9 368.8,147.0 367.2,148.6 370.5,153.8 367.8,155.4 370.1,160.5 368.2,162.1 366.3,162.9 363.1,162.9 360.9,162.1 359.9,160.5 361.3,155.4 359.1,153.8 361.9,148.6 360.8,147.0 362.6,141.9 362.0,140.3 363.2,135.2 363.3,133.6 364.5,128.4" fill="#175828"/>
<polygon points="228.2,125.2 228.4,125.4 229.1,130.6 229.1,132.2 230.0,137.3 229.6,139.0 230.9,144.1 230.3,145.8 231.5,150.9 230.3,152.5 232.8,157.7 230.7,159.3 232.6,164.5 230.5,166.1 229.4,166.9 227.0,166.9 225.6,166.1 223.8,164.5 225.6,159.3 223.7,157.7 225.8,152.5 224.7,150.9 226.4,145.8 225.8,144.1 226.9,139.0 226.2,137.3 227.4,132.2 227.3,130.6 228.1,125.4" fill="#1b602c"/>
<polygon points="251.3,137.6 251.5,137.8 252.5,142.9 252.2,144.4 253.6,149.5 253.1,151.1 254.4,156.2 253.8,157.7 255.7,162.8 254.0,164.4 255.3,169.4 253.8,171.0 256.3,176.1 252.6,175.1 249.9,175.1 246.6,176.1 248.3,171.0 246.3,169.4 248.3,164.4 247.0,162.8 248.7,157.7 248.1,156.2 249.8,151.1 249.2,149.5 250.3,144.4 250.1,142.9 251.1,137.8" fill="#2a8038"/>
<polygon points="303.7,132.2 304.1,132.4 305.3,137.5 305.4,139.0 306.7,144.1 306.1,145.6 308.7,150.7 307.0,152.2 309.5,157.3 307.3,158.8 311.1,163.9 308.5,165.4 311.4,170.5 307.6,172.0 305.8,172.8 301.6,172.8 299.9,172.0 296.7,170.5 299.6,165.4 296.1,163.9 299.2,158.8 297.3,157.3 300.5,152.2 298.6,150.7 301.5,145.6 300.2,144.1 302.3,139.0 301.9,137.5 303.4,132.4" fill="#175828"/>
<polygon points="303.7,135.2 304.5,132.4 305.2,137.5 305.2,139.0 305.9,144.1 305.6,145.6 307.0,150.7 306.1,152.2 307.5,157.3 306.3,158.8 308.4,163.9 306.9,165.4 308.5,170.5 306.4,172.0 305.1,172.8 303.4,172.8 303.3,172.0 302.9,170.5 303.2,165.4 302.8,163.9 303.2,158.8 303.0,157.3 303.3,152.2 303.1,150.7 303.5,145.6 303.3,144.1 303.5,139.0 303.5,137.5 303.7,132.4" fill="#04140c" opacity="0.28"/>
<polygon points="199.5,130.1 199.7,130.3 201.0,135.6 200.9,137.3 202.5,142.5 201.6,144.2 203.2,149.4 201.9,151.1 204.2,156.3 202.8,158.0 205.4,163.2 203.0,164.9 205.0,170.1 201.1,169.1 197.9,169.1 193.3,170.1 195.9,164.9 194.4,163.2 196.0,158.0 194.6,156.3 196.5,151.1 196.0,149.4 197.4,144.2 196.8,142.5 198.2,137.3 198.2,135.6 199.3,130.3" fill="#2a8038"/>
<polygon points="244.4,132.8 244.7,133.0 246.0,137.9 245.8,139.4 247.0,144.4 246.6,145.8 247.9,150.8 247.1,152.2 249.3,157.2 247.5,158.6 250.6,163.6 247.9,165.0 251.4,170.0 249.1,171.5 251.8,176.4 248.5,177.9 246.4,178.7 242.5,178.7 240.1,177.9 238.0,176.4 239.7,171.5 237.6,170.0 240.9,165.0 238.3,163.6 240.7,158.6 239.9,157.2 241.3,152.2 240.1,150.8 242.7,145.8 241.7,144.4 243.2,139.4 243.0,137.9 244.2,133.0" fill="#33903c"/>
<polygon points="244.4,135.8 245.1,133.0 245.8,137.9 245.7,139.4 246.4,144.4 246.2,145.8 246.8,150.8 246.4,152.2 247.6,157.2 246.6,158.6 248.3,163.6 246.8,165.0 248.8,170.0 247.5,171.5 249.0,176.4 247.2,177.9 245.7,178.7 244.1,178.7 243.9,177.9 243.7,176.4 243.9,171.5 243.6,170.0 244.0,165.0 243.7,163.6 244.0,158.6 243.9,157.2 244.1,152.2 243.9,150.8 244.2,145.8 244.1,144.4 244.3,139.4 244.3,137.9 244.4,133.0" fill="#04140c" opacity="0.28"/>
<polygon points="166.9,122.6 167.2,122.8 168.4,128.0 168.0,129.6 169.8,134.8 169.0,136.5 170.6,141.6 170.0,143.3 172.3,148.4 170.0,150.1 172.3,155.2 170.6,156.9 173.9,162.0 170.6,163.7 172.6,168.8 168.7,167.9 165.1,167.9 160.5,168.8 163.6,163.7 160.0,162.0 162.9,156.9 161.4,155.2 163.2,150.1 161.6,148.4 164.3,143.3 162.6,141.6 164.9,136.5 164.4,134.8 165.5,129.6 165.6,128.0 166.6,122.8" fill="#2a8038"/>
<polygon points="166.9,125.6 167.5,122.8 168.2,128.0 168.0,129.6 169.0,134.8 168.6,136.5 169.4,141.6 169.1,143.3 170.4,148.4 169.1,150.1 170.3,155.2 169.4,156.9 171.2,162.0 169.4,163.7 170.5,168.8 168.1,167.9 166.6,167.9 166.1,168.8 166.5,163.7 166.1,162.0 166.4,156.9 166.2,155.2 166.5,150.1 166.3,148.4 166.6,143.3 166.4,141.6 166.7,136.5 166.6,134.8 166.7,129.6 166.7,128.0 166.9,122.8" fill="#04140c" opacity="0.28"/>
<polygon points="321.1,126.4 321.5,126.6 322.8,131.8 323.1,133.5 325.0,138.7 324.0,140.4 326.9,145.6 325.3,147.3 328.8,152.5 325.2,154.2 328.9,159.4 325.6,161.1 323.2,161.9 319.0,161.9 317.0,161.1 314.0,159.4 315.9,154.2 314.8,152.5 317.5,147.3 315.7,145.6 317.9,140.4 317.5,138.7 319.5,133.5 319.4,131.8 320.8,126.6" fill="#175828"/>
<polygon points="321.1,129.4 321.9,126.6 322.6,131.8 322.8,133.5 323.8,138.7 323.3,140.4 324.9,145.6 324.0,147.3 325.9,152.5 323.9,154.2 326.0,159.4 324.1,161.1 322.5,161.9 320.7,161.9 320.6,161.1 320.3,159.4 320.5,154.2 320.3,152.5 320.7,147.3 320.5,145.6 320.7,140.4 320.7,138.7 320.9,133.5 320.9,131.8 321.1,126.6" fill="#04140c" opacity="0.28"/>
<polygon points="257.3,124.3 257.6,124.5 259.6,129.9 259.7,131.7 261.7,137.1 260.7,138.9 263.6,144.3 261.5,146.1 264.3,151.5 262.3,153.3 259.5,154.1 255.1,154.1 252.3,153.3 250.2,151.5 252.6,146.1 250.8,144.3 253.4,138.9 253.2,137.1 255.0,131.7 254.9,129.9 257.0,124.5" fill="#1f6a30"/>
<polygon points="257.3,127.3 258.1,124.5 259.2,129.9 259.2,131.7 260.3,137.1 259.8,138.9 261.4,144.3 260.2,146.1 261.7,151.5 260.6,153.3 258.8,154.1 256.9,154.1 256.7,153.3 256.5,151.5 256.7,146.1 256.5,144.3 256.8,138.9 256.8,137.1 257.0,131.7 257.0,129.9 257.3,124.5" fill="#04140c" opacity="0.28"/>
<polygon points="360.6,130.8 360.8,131.0 361.8,136.0 361.6,137.5 362.6,142.5 362.4,144.0 363.6,149.0 363.1,150.5 364.5,155.5 363.7,157.0 365.6,162.0 363.9,163.4 365.4,168.5 362.0,167.5 359.3,167.5 356.0,168.5 357.8,163.4 356.0,162.0 357.7,157.0 356.8,155.5 358.2,150.5 357.2,149.0 358.7,144.0 358.5,142.5 359.6,137.5 359.4,136.0 360.4,131.0" fill="#1f6a30"/>
<polygon points="226.9,121.2 227.1,121.4 228.5,126.4 228.6,127.9 230.6,132.9 229.7,134.4 231.6,139.4 230.1,140.9 233.5,145.9 230.4,147.4 233.3,152.4 230.9,153.9 228.7,154.7 225.0,154.7 222.4,153.9 219.9,152.4 222.6,147.4 220.7,145.9 223.1,140.9 222.0,139.4 224.6,134.4 223.5,132.9 225.1,127.9 225.1,126.4 226.5,121.4" fill="#175828"/>
<polygon points="226.9,124.2 227.5,121.4 228.3,126.4 228.3,127.9 229.4,132.9 228.9,134.4 230.0,139.4 229.2,140.9 231.0,145.9 229.3,147.4 230.9,152.4 229.6,153.9 228.1,154.7 226.5,154.7 226.3,153.9 226.0,152.4 226.3,147.4 226.1,145.9 226.4,140.9 226.3,139.4 226.6,134.4 226.4,132.9 226.6,127.9 226.6,126.4 226.8,121.4" fill="#04140c" opacity="0.28"/>
<polygon points="192.3,130.2 192.6,130.4 193.8,135.5 193.8,137.2 195.0,142.3 194.3,143.9 196.7,149.1 195.2,150.7 197.0,155.8 195.9,157.4 199.1,162.6 196.4,164.2 199.0,169.3 196.5,171.0 194.1,171.8 190.5,171.8 188.0,171.0 186.7,169.3 188.6,164.2 186.5,162.6 188.8,157.4 187.6,155.8 189.2,150.7 188.4,149.1 190.0,143.9 189.2,142.3 190.9,137.2 191.0,135.5 192.1,130.4" fill="#1f6a30"/>
<polygon points="192.3,133.2 192.9,130.4 193.6,135.5 193.6,137.2 194.3,142.3 193.9,143.9 195.2,149.1 194.4,150.7 195.4,155.8 194.8,157.4 196.5,162.6 195.1,164.2 196.4,169.3 195.1,171.0 193.5,171.8 192.0,171.8 191.8,171.0 191.6,169.3 191.9,164.2 191.6,162.6 191.9,157.4 191.7,155.8 191.9,150.7 191.8,149.1 192.0,143.9 191.9,142.3 192.1,137.2 192.2,135.5 192.3,130.4" fill="#04140c" opacity="0.28"/>
<polygon points="197.9,135.5 198.1,135.7 199.4,140.7 199.1,142.2 201.1,147.3 200.3,148.8 202.0,153.8 201.0,155.4 203.2,160.4 201.3,161.9 203.1,167.0 199.4,166.0 196.4,166.0 192.7,167.0 194.4,161.9 192.7,160.4 194.8,155.4 193.7,153.8 195.7,148.8 194.9,147.3 196.6,142.2 196.4,140.7 197.7,135.7" fill="#1b602c"/>
<polygon points="255.0,129.6 255.3,129.8 256.6,135.0 256.5,136.8 258.4,142.0 257.7,143.7 259.3,149.0 258.6,150.7 261.4,155.9 258.6,157.7 260.4,162.9 256.8,161.9 253.3,161.9 249.1,162.9 251.7,157.7 248.8,155.9 251.4,150.7 249.8,149.0 252.5,143.7 251.4,142.0 253.4,136.8 253.4,135.0 254.7,129.8" fill="#175828"/>
<polygon points="242.5,129.3 242.8,129.5 244.2,134.6 244.3,136.1 245.4,141.2 245.0,142.7 247.7,147.8 246.1,149.3 247.9,154.4 246.3,155.9 249.4,161.0 247.3,162.5 250.8,167.5 246.8,169.1 250.0,174.1 244.7,173.2 240.2,173.2 235.0,174.1 238.2,169.1 234.5,167.5 237.4,162.5 235.3,161.0 238.7,155.9 236.7,154.4 239.4,149.3 237.6,147.8 240.3,142.7 239.3,141.2 240.8,136.1 240.7,134.6 242.2,129.5" fill="#33903c"/>
<polygon points="242.5,132.3 243.3,129.5 244.0,134.6 244.1,136.1 244.7,141.2 244.4,142.7 246.0,147.8 245.1,149.3 246.0,154.4 245.2,155.9 246.9,161.0 245.7,162.5 247.7,167.5 245.4,169.1 247.2,174.1 244.0,173.2 242.1,173.2 241.6,174.1 242.0,169.1 241.5,167.5 241.9,162.5 241.6,161.0 242.0,155.9 241.8,154.4 242.1,149.3 241.9,147.8 242.2,142.7 242.1,141.2 242.3,136.1 242.3,134.6 242.4,129.5" fill="#04140c" opacity="0.28"/>
<polygon points="232.5,138.3 232.7,138.5 233.6,143.7 233.9,145.4 234.9,150.7 234.5,152.4 236.1,157.6 234.8,159.3 237.7,164.6 235.7,166.3 237.5,171.5 233.9,170.6 231.2,170.6 227.5,171.5 229.5,166.3 227.3,164.6 229.9,159.3 229.1,157.6 230.7,152.4 230.0,150.7 231.2,145.4 231.3,143.7 232.3,138.5" fill="#175828"/>
<polygon points="189.5,120.0 189.7,120.2 190.6,125.3 190.6,126.9 191.7,132.0 191.2,133.6 192.6,138.8 191.9,140.4 193.3,145.5 192.4,147.1 194.3,152.2 190.8,151.3 188.3,151.3 185.4,152.2 186.9,147.1 184.9,145.5 187.2,140.4 185.8,138.8 187.7,133.6 187.0,132.0 188.3,126.9 188.4,125.3 189.3,120.2" fill="#2a8038"/>
<polygon points="361.8,111.4 362.0,111.6 363.1,116.6 363.2,118.1 364.7,123.0 363.7,124.5 366.2,129.4 364.7,130.9 366.9,135.9 364.7,137.3 366.9,142.3 365.4,143.7 363.3,144.5 360.2,144.5 358.7,143.7 356.4,142.3 358.7,137.3 357.1,135.9 358.6,130.9 357.8,129.4 359.5,124.5 358.8,123.0 360.4,118.1 360.5,116.6 361.5,111.6" fill="#33903c"/>
<polygon points="220.9,132.1 221.2,132.3 222.6,137.3 222.8,138.8 224.5,143.8 223.4,145.3 226.0,150.4 225.1,151.9 227.0,156.9 225.5,158.4 228.3,163.4 225.5,164.9 228.1,170.0 223.1,169.0 218.7,169.0 213.1,170.0 216.6,164.9 213.8,163.4 215.9,158.4 214.1,156.9 217.3,151.9 215.8,150.4 218.0,145.3 217.6,143.8 219.3,138.8 219.0,137.3 220.5,132.3" fill="#1f6a30"/>
<polygon points="220.9,135.1 221.7,132.3 222.4,137.3 222.6,138.8 223.5,143.8 222.9,145.3 224.3,150.4 223.8,151.9 224.9,156.9 224.0,158.4 225.6,163.4 224.1,164.9 225.5,170.0 222.4,169.0 220.5,169.0 220.0,170.0 220.4,164.9 220.0,163.4 220.3,158.4 220.1,156.9 220.5,151.9 220.3,150.4 220.6,145.3 220.5,143.8 220.7,138.8 220.7,137.3 220.9,132.3" fill="#04140c" opacity="0.28"/>
<polygon points="328.7,128.3 329.0,128.5 330.3,133.7 330.3,135.3 332.3,140.5 331.3,142.1 333.5,147.3 332.1,149.0 334.2,154.1 332.8,155.8 335.6,160.9 333.8,162.6 336.6,167.8 332.9,169.4 330.8,170.2 326.6,170.2 324.5,169.4 322.1,167.8 324.6,162.6 321.0,160.9 325.0,155.8 322.9,154.1 325.6,149.0 324.5,147.3 326.1,142.1 325.5,140.5 327.3,135.3 327.1,133.7 328.4,128.5" fill="#175828"/>
<polygon points="328.7,131.3 329.4,128.5 330.1,133.7 330.2,135.3 331.3,140.5 330.7,142.1 331.9,147.3 331.1,149.0 332.3,154.1 331.5,155.8 333.1,160.9 332.0,162.6 333.6,167.8 331.6,169.4 330.1,170.2 328.4,170.2 328.2,169.4 327.9,167.8 328.2,162.6 327.8,160.9 328.3,155.8 328.0,154.1 328.3,149.0 328.2,147.3 328.4,142.1 328.3,140.5 328.5,135.3 328.5,133.7 328.7,128.5" fill="#04140c" opacity="0.28"/>
<polygon points="271.9,124.2 272.1,124.4 273.0,129.7 273.2,131.4 274.4,136.7 274.1,138.5 275.8,143.7 274.7,145.5 276.6,150.7 274.6,152.5 276.3,157.7 273.2,156.8 270.5,156.8 267.1,157.7 269.0,152.5 266.9,150.7 268.9,145.5 268.1,143.7 269.9,138.5 269.2,136.7 270.7,131.4 270.5,129.7 271.7,124.4" fill="#2a8038"/>
<polygon points="260.1,134.2 260.4,134.4 261.6,139.7 261.9,141.4 263.5,146.6 262.6,148.3 265.2,153.6 263.1,155.3 265.5,160.5 264.6,162.2 267.5,167.5 264.7,169.2 266.6,174.4 262.1,173.4 258.2,173.4 253.9,174.4 255.8,169.2 254.0,167.5 256.1,162.2 253.5,160.5 256.4,155.3 255.8,153.6 257.8,148.3 256.8,146.6 258.8,141.4 258.6,139.7 259.8,134.4" fill="#175828"/>
<polygon points="260.1,137.2 260.8,134.4 261.5,139.7 261.6,141.4 262.5,146.6 262.0,148.3 263.5,153.6 262.3,155.3 263.6,160.5 263.1,162.2 264.7,167.5 263.2,169.2 264.2,174.4 261.5,173.4 259.8,173.4 259.4,174.4 259.6,169.2 259.4,167.5 259.7,162.2 259.3,160.5 259.7,155.3 259.6,153.6 259.9,148.3 259.7,146.6 260.0,141.4 260.0,139.7 260.1,134.4" fill="#04140c" opacity="0.28"/>
<polygon points="301.4,127.9 301.6,128.1 302.9,133.2 302.9,134.8 304.1,140.0 303.4,141.6 306.2,146.7 304.9,148.3 306.5,153.5 304.3,155.1 306.8,160.2 303.0,159.3 299.8,159.3 295.7,160.2 297.8,155.1 296.5,153.5 298.3,148.3 296.9,146.7 298.9,141.6 298.2,140.0 300.0,134.8 300.1,133.2 301.1,128.1" fill="#1f6a30"/>
<polygon points="294.1,135.7 294.4,135.9 295.9,141.2 295.5,142.9 297.1,148.2 296.6,149.9 298.3,155.1 297.5,156.9 299.9,162.1 297.7,163.8 300.7,169.1 298.2,170.8 295.9,171.6 292.4,171.6 290.2,170.8 287.7,169.1 289.9,163.8 288.4,162.1 291.4,156.9 290.0,155.1 291.9,149.9 290.8,148.2 292.6,142.9 292.7,141.2 293.9,135.9" fill="#33903c"/>
<polygon points="239.7,131.5 239.9,131.7 241.1,136.8 240.8,138.3 242.1,143.4 241.4,145.0 243.2,150.1 242.4,151.6 244.7,156.7 242.6,158.3 245.0,163.3 243.5,164.9 245.3,170.0 243.0,171.5 241.3,172.3 238.1,172.3 236.6,171.5 234.1,170.0 236.5,164.9 233.6,163.3 236.4,158.3 235.0,156.7 236.8,151.6 236.3,150.1 237.8,145.0 237.1,143.4 238.4,138.3 238.5,136.8 239.5,131.7" fill="#1b602c"/>
<polygon points="201.5,129.8 201.9,130.0 203.8,135.1 203.8,136.6 205.8,141.7 205.0,143.2 207.4,148.3 206.3,149.8 208.5,154.9 206.2,156.4 209.1,161.5 203.8,160.5 199.3,160.5 194.1,161.5 196.8,156.4 193.8,154.9 196.8,149.8 194.9,148.3 198.0,143.2 197.4,141.7 199.4,136.6 199.4,135.1 201.2,130.0" fill="#33903c"/>
<polygon points="201.5,132.8 202.3,130.0 203.4,135.1 203.3,136.6 204.5,141.7 204.0,143.2 205.4,148.3 204.7,149.8 206.0,154.9 204.7,156.4 206.3,161.5 203.0,160.5 201.2,160.5 200.6,161.5 201.0,156.4 200.6,154.9 201.0,149.8 200.7,148.3 201.1,143.2 201.0,141.7 201.3,136.6 201.3,135.1 201.5,130.0" fill="#04140c" opacity="0.28"/>
<polygon points="344.9,111.5 345.1,111.7 346.0,116.9 345.8,118.6 347.0,123.8 346.6,125.4 347.6,130.6 346.7,132.3 348.5,137.5 347.3,139.2 349.0,144.4 347.6,146.1 349.4,151.3 347.6,153.0 349.4,158.2 346.3,157.2 343.5,157.2 340.4,158.2 341.7,153.0 340.5,151.3 342.0,146.1 340.0,144.4 342.1,139.2 341.5,137.5 343.0,132.3 342.1,130.6 343.5,125.4 342.8,123.8 344.0,118.6 344.0,116.9 344.7,111.7" fill="#1f6a30"/>
<polygon points="165.0,136.7 165.3,136.9 166.3,141.9 166.2,143.3 167.9,148.3 167.3,149.7 168.6,154.7 167.8,156.1 169.3,161.1 168.1,162.5 169.9,167.5 167.9,168.9 166.5,169.7 163.6,169.7 162.2,168.9 160.1,167.5 162.3,162.5 160.5,161.1 162.7,156.1 161.1,154.7 162.9,149.7 162.3,148.3 163.7,143.3 163.9,141.9 164.8,136.9" fill="#33903c"/>
<polygon points="267.3,116.0 267.7,116.2 269.3,121.2 268.8,122.6 270.5,127.6 269.7,129.0 271.8,134.0 271.0,135.5 273.3,140.4 271.3,141.9 274.9,146.8 272.4,148.3 273.7,153.3 269.5,152.3 265.2,152.3 260.2,153.3 263.3,148.3 260.2,146.8 263.3,141.9 261.4,140.4 263.5,135.5 262.4,134.0 264.8,129.0 263.8,127.6 265.8,122.6 265.7,121.2 267.0,116.2" fill="#33903c"/>
<polygon points="267.3,119.0 268.1,116.2 269.0,121.2 268.7,122.6 269.7,127.6 269.2,129.0 270.4,134.0 269.9,135.5 271.2,140.4 270.1,141.9 272.1,146.8 270.7,148.3 271.4,153.3 268.8,152.3 267.0,152.3 266.5,153.3 266.9,148.3 266.5,146.8 266.9,141.9 266.6,140.4 266.9,135.5 266.7,134.0 267.0,129.0 266.9,127.6 267.2,122.6 267.1,121.2 267.3,116.2" fill="#04140c" opacity="0.28"/>
<polygon points="228.7,121.7 229.0,121.9 230.0,127.1 230.1,128.7 231.6,133.9 230.6,135.5 233.0,140.7 231.3,142.4 233.3,147.5 232.1,149.2 234.1,154.4 232.6,156.0 234.5,161.2 232.7,162.9 230.4,163.7 227.0,163.7 224.9,162.9 222.1,161.2 225.0,156.0 222.9,154.4 225.2,149.2 223.9,147.5 225.6,142.4 225.2,140.7 226.4,135.5 225.9,133.9 227.5,128.7 227.3,127.1 228.4,121.9" fill="#2a8038"/>
<polygon points="373.3,120.0 373.6,120.2 375.0,125.3 374.9,126.8 376.3,131.9 375.7,133.4 378.0,138.5 376.9,140.0 379.7,145.1 377.9,146.6 380.6,151.7 377.4,153.2 380.3,158.3 378.2,159.8 375.4,160.6 371.2,160.6 369.2,159.8 365.5,158.3 369.1,153.2 366.9,151.7 368.8,146.6 367.7,145.1 369.7,140.0 368.8,138.5 370.8,133.4 369.7,131.9 371.8,126.8 371.5,125.3 373.0,120.2" fill="#33903c"/>
<polygon points="373.3,123.0 374.0,120.2 374.8,125.3 374.8,126.8 375.5,131.9 375.2,133.4 376.4,138.5 375.8,140.0 377.3,145.1 376.4,146.6 377.9,151.7 376.1,153.2 377.7,158.3 376.6,159.8 374.7,160.6 372.9,160.6 372.8,159.8 372.4,158.3 372.8,153.2 372.5,151.7 372.8,146.6 372.6,145.1 372.9,140.0 372.8,138.5 373.0,133.4 372.9,131.9 373.1,126.8 373.1,125.3 373.3,120.2" fill="#04140c" opacity="0.28"/>
<polygon points="337.1,122.3 337.3,122.5 338.6,127.7 338.6,129.3 340.5,134.4 340.0,136.0 342.5,141.2 340.4,142.8 344.0,147.9 340.8,149.5 344.4,154.7 342.0,156.3 344.0,161.4 339.1,160.5 335.0,160.5 330.7,161.4 332.4,156.3 329.9,154.7 332.8,149.5 331.1,147.9 333.5,142.8 332.4,141.2 334.5,136.0 333.4,134.4 335.4,129.3 335.5,127.7 336.7,122.5" fill="#33903c"/>
<polygon points="337.1,125.3 337.8,122.5 338.4,127.7 338.5,129.3 339.5,134.4 339.2,136.0 340.6,141.2 339.5,142.8 341.4,147.9 339.6,149.5 341.6,154.7 340.3,156.3 341.4,161.4 338.4,160.5 336.7,160.5 336.3,161.4 336.5,156.3 336.2,154.7 336.5,149.5 336.3,147.9 336.6,142.8 336.5,141.2 336.7,136.0 336.6,134.4 336.9,129.3 336.9,127.7 337.0,122.5" fill="#04140c" opacity="0.28"/>
<polygon points="318.4,136.9 318.7,137.1 320.0,142.1 320.1,143.5 322.0,148.5 320.8,150.0 323.1,155.0 322.0,156.5 325.1,161.5 322.7,163.0 324.8,168.0 322.1,169.5 320.4,170.3 316.4,170.3 314.7,169.5 311.0,168.0 314.0,163.0 312.0,161.5 314.4,156.5 313.4,155.0 315.4,150.0 315.1,148.5 316.8,143.5 316.7,142.1 318.1,137.1" fill="#236f30"/>
<polygon points="318.4,139.9 319.1,137.1 319.8,142.1 319.9,143.5 320.9,148.5 320.3,150.0 321.5,155.0 320.9,156.5 322.6,161.5 321.3,163.0 322.4,168.0 321.0,169.5 319.7,170.3 318.1,170.3 318.0,169.5 317.5,168.0 317.9,163.0 317.6,161.5 317.9,156.5 317.8,155.0 318.0,150.0 318.0,148.5 318.2,143.5 318.2,142.1 318.4,137.1" fill="#04140c" opacity="0.28"/>
<polygon points="378.6,150.0 378.9,150.2 380.3,155.3 380.7,156.8 382.8,161.9 381.5,163.5 384.2,168.5 382.5,170.1 385.7,175.2 382.6,176.8 380.5,177.6 376.7,177.6 374.1,176.8 372.3,175.2 374.1,170.1 372.2,168.5 375.4,163.5 374.8,161.9 376.9,156.8 376.6,155.3 378.3,150.2" fill="#1b602c"/>
<polygon points="378.6,153.0 379.3,150.2 380.1,155.3 380.3,156.8 381.4,161.9 380.7,163.5 382.2,168.5 381.3,170.1 383.0,175.2 381.3,176.8 379.9,177.6 378.3,177.6 378.1,176.8 377.8,175.2 378.1,170.1 377.8,168.5 378.2,163.5 378.1,161.9 378.4,156.8 378.4,155.3 378.6,150.2" fill="#04140c" opacity="0.28"/>
<polygon points="312.1,140.6 312.4,140.8 314.0,145.8 313.8,147.3 315.8,152.4 315.2,153.9 318.0,159.0 315.3,160.5 319.4,165.6 316.2,167.1 319.9,172.2 316.1,173.7 314.2,174.5 310.1,174.5 308.1,173.7 304.7,172.2 307.4,167.1 305.5,165.6 308.7,160.5 306.3,159.0 309.4,153.9 308.6,152.4 310.5,147.3 310.4,145.8 311.8,140.8" fill="#2f8a38"/>
<polygon points="312.1,143.6 312.9,140.8 313.7,145.8 313.6,147.3 314.7,152.4 314.3,153.9 315.9,159.0 314.4,160.5 316.7,165.6 314.9,167.1 317.0,172.2 314.8,173.7 313.5,174.5 311.8,174.5 311.7,173.7 311.2,172.2 311.6,167.1 311.3,165.6 311.7,160.5 311.4,159.0 311.8,153.9 311.7,152.4 311.9,147.3 311.9,145.8 312.1,140.8" fill="#04140c" opacity="0.28"/>
<polygon points="274.5,147.2 274.7,147.4 276.0,152.7 276.2,154.6 277.6,159.9 276.6,161.8 278.6,167.1 277.3,168.9 280.2,174.3 278.1,176.1 276.0,176.9 273.1,176.9 271.2,176.1 269.1,174.3 271.4,168.9 270.1,167.1 272.2,161.8 271.2,159.9 273.0,154.6 273.2,152.7 274.4,147.4" fill="#175828"/>
<polygon points="265.7,149.5 265.8,149.7 266.7,154.9 266.9,156.4 267.8,161.5 267.4,163.1 269.2,168.2 268.3,169.8 270.1,174.9 268.3,176.5 270.8,181.6 268.5,183.2 267.1,184.0 264.3,184.0 262.3,183.2 261.3,181.6 263.1,176.5 260.6,174.9 262.9,169.8 262.0,168.2 263.6,163.1 263.3,161.5 264.6,156.4 264.5,154.9 265.4,149.7" fill="#2f8a38"/>
<polygon points="352.6,145.5 352.9,145.7 354.2,150.8 354.1,152.3 356.4,157.3 355.4,158.8 357.6,163.9 356.8,165.4 359.2,170.4 357.0,171.9 359.9,177.0 354.5,176.0 350.6,176.0 345.6,177.0 347.9,171.9 346.0,170.4 349.0,165.4 347.7,163.9 349.6,158.8 348.7,157.3 350.6,152.3 350.9,150.8 352.3,145.7" fill="#2a8038"/>
<polygon points="352.6,148.5 353.3,145.7 354.0,150.8 353.9,152.3 355.2,157.3 354.7,158.8 355.9,163.9 355.4,165.4 356.7,170.4 355.5,171.9 357.1,177.0 353.9,176.0 352.3,176.0 351.7,177.0 352.0,171.9 351.8,170.4 352.2,165.4 352.0,163.9 352.2,158.8 352.1,157.3 352.3,152.3 352.4,150.8 352.6,145.7" fill="#04140c" opacity="0.28"/>
<polygon points="273.5,137.9 273.7,138.1 275.0,143.4 275.0,145.2 277.1,150.5 276.4,152.3 278.5,157.6 276.6,159.4 279.1,164.7 276.9,166.4 275.1,167.2 271.8,167.2 270.2,166.4 267.1,164.7 269.7,159.4 268.9,157.6 271.1,152.3 270.2,150.5 271.9,145.2 271.9,143.4 273.2,138.1" fill="#2f8a38"/>
<polygon points="261.0,150.5 261.1,150.7 262.2,155.7 262.3,157.1 263.3,162.1 263.1,163.6 264.7,168.5 263.4,170.0 264.8,175.0 263.7,176.4 262.2,177.2 259.7,177.2 258.5,176.4 257.2,175.0 257.9,170.0 257.1,168.5 258.9,163.6 258.6,162.1 259.6,157.1 259.6,155.7 260.8,150.7" fill="#2f8a38"/>
<polygon points="267.9,150.8 268.2,151.0 270.0,156.2 270.1,157.9 272.8,163.1 271.4,164.8 274.3,170.1 272.5,171.8 274.8,177.0 269.9,176.0 265.9,176.0 261.9,177.0 263.8,171.8 260.7,170.1 264.6,164.8 263.7,163.1 265.6,157.9 265.8,156.2 267.6,151.0" fill="#2f8a38"/>
<polygon points="267.9,153.8 268.6,151.0 269.5,156.2 269.6,157.9 271.1,163.1 270.3,164.8 272.0,170.1 271.0,171.8 272.2,177.0 269.2,176.0 267.6,176.0 267.2,177.0 267.4,171.8 267.0,170.1 267.5,164.8 267.4,163.1 267.6,157.9 267.6,156.2 267.9,151.0" fill="#04140c" opacity="0.28"/>
<polygon points="307.7,140.8 307.9,141.0 308.9,146.0 308.7,147.4 309.9,152.4 309.3,153.9 310.9,158.9 310.2,160.3 312.2,165.3 310.4,166.8 312.3,171.8 308.9,170.8 306.5,170.8 303.5,171.8 305.2,166.8 303.7,165.3 305.4,160.3 304.0,158.9 306.1,153.9 305.3,152.4 306.5,147.4 306.4,146.0 307.5,141.0" fill="#236f30"/>
<polygon points="317.6,149.4 317.9,149.6 319.6,154.7 319.4,156.2 322.0,161.3 320.8,162.8 322.8,167.9 321.5,169.4 324.3,174.5 322.5,176.0 325.2,181.1 319.7,180.1 315.5,180.1 310.9,181.1 313.7,176.0 310.0,174.5 313.8,169.4 311.6,167.9 314.2,162.8 313.8,161.3 315.5,156.2 315.6,154.7 317.3,149.6" fill="#1f6a30"/>
<polygon points="317.6,152.4 318.3,149.6 319.3,154.7 319.1,156.2 320.6,161.3 319.9,162.8 321.0,167.9 320.3,169.4 321.9,174.5 320.9,176.0 322.3,181.1 319.0,180.1 317.3,180.1 316.8,181.1 317.1,176.0 316.7,174.5 317.1,169.4 316.9,167.9 317.2,162.8 317.2,161.3 317.4,156.2 317.4,154.7 317.6,149.6" fill="#04140c" opacity="0.28"/>
<polygon points="356.6,146.4 356.9,146.6 358.6,151.8 358.5,153.6 361.0,158.8 359.6,160.5 362.9,165.7 360.8,167.4 364.2,172.6 361.5,174.3 362.8,179.6 358.6,178.6 354.5,178.6 348.9,179.6 351.6,174.3 349.4,172.6 352.3,167.4 350.4,165.7 353.2,160.5 352.2,158.8 354.5,153.6 354.5,151.8 356.3,146.6" fill="#175828"/>
<polygon points="356.6,149.4 357.3,146.6 358.3,151.8 358.2,153.6 359.5,158.8 358.8,160.5 360.6,165.7 359.4,167.4 361.3,172.6 359.8,174.3 360.6,179.6 358.0,178.6 356.2,178.6 355.6,179.6 356.0,174.3 355.7,172.6 356.0,167.4 355.8,165.7 356.2,160.5 356.0,158.8 356.3,153.6 356.3,151.8 356.5,146.6" fill="#04140c" opacity="0.28"/>
<polygon points="356.3,145.3 356.5,145.5 357.8,150.7 357.8,152.5 359.1,157.7 358.3,159.5 360.1,164.7 359.0,166.4 360.8,171.7 359.2,173.4 361.7,178.7 357.8,177.7 354.8,177.7 351.7,178.7 353.4,173.4 351.5,171.7 353.7,166.4 351.9,164.7 353.9,159.5 353.3,157.7 355.0,152.5 355.0,150.7 356.1,145.5" fill="#1f6a30"/>
<polygon points="347.3,144.4 347.7,144.6 349.2,149.6 349.3,151.1 351.0,156.1 350.1,157.5 352.8,162.5 351.5,164.0 353.3,169.0 352.2,170.5 353.6,175.5 351.5,176.9 349.4,177.7 345.2,177.7 342.7,176.9 340.5,175.5 343.4,170.5 340.2,169.0 343.4,164.0 342.5,162.5 344.8,157.5 343.5,156.1 345.5,151.1 345.7,149.6 347.1,144.6" fill="#175828"/>
<polygon points="347.3,147.4 348.1,144.6 348.9,149.6 348.9,151.1 349.9,156.1 349.4,157.5 350.9,162.5 350.2,164.0 351.2,169.0 350.5,170.5 351.3,175.5 350.2,176.9 348.7,177.7 347.0,177.7 346.8,176.9 346.5,175.5 346.9,170.5 346.5,169.0 346.9,164.0 346.7,162.5 347.0,157.5 346.9,156.1 347.1,151.1 347.1,149.6 347.3,144.6" fill="#04140c" opacity="0.28"/>
<polygon points="368.5,145.2 368.7,145.4 369.8,150.4 369.8,151.8 371.6,156.8 370.9,158.2 373.2,163.2 371.6,164.6 373.7,169.6 371.8,171.1 374.6,176.0 371.9,177.5 370.2,178.3 366.8,178.3 364.9,177.5 362.4,176.0 364.6,171.1 363.6,169.6 365.4,164.6 364.0,163.2 365.9,158.2 365.8,156.8 366.9,151.8 366.9,150.4 368.2,145.4" fill="#2f8a38"/>
<polygon points="254.3,139.9 254.5,140.1 255.7,145.3 255.6,146.9 257.4,152.0 256.9,153.6 258.6,158.7 257.4,160.3 259.0,165.5 257.3,167.1 255.8,167.9 252.9,167.9 251.4,167.1 249.5,165.5 251.2,160.3 250.4,158.7 251.8,153.6 251.5,152.0 253.1,146.9 252.9,145.3 254.1,140.1" fill="#236f30"/>
<polygon points="309.6,136.4 309.9,136.6 311.9,141.8 311.6,143.5 314.1,148.7 313.1,150.4 316.8,155.6 313.3,157.3 317.2,162.5 311.6,161.5 307.6,161.5 302.8,162.5 305.8,157.3 303.1,155.6 305.9,150.4 305.3,148.7 307.7,143.5 307.4,141.8 309.3,136.6" fill="#175828"/>
<polygon points="309.6,139.4 310.3,136.6 311.4,141.8 311.3,143.5 312.6,148.7 312.1,150.4 314.1,155.6 312.2,157.3 314.3,162.5 310.9,161.5 309.3,161.5 308.8,162.5 309.2,157.3 308.8,155.6 309.2,150.4 309.1,148.7 309.4,143.5 309.3,141.8 309.6,136.6" fill="#04140c" opacity="0.28"/>
<polygon points="256.0,149.6 256.3,149.8 257.9,154.9 257.6,156.5 259.7,161.7 258.5,163.3 261.7,168.4 260.3,170.0 263.6,175.2 260.6,176.8 263.1,181.9 258.0,181.0 254.0,181.0 249.4,181.9 251.5,176.8 249.0,175.2 252.3,170.0 250.3,168.4 252.7,163.3 251.9,161.7 254.2,156.5 254.3,154.9 255.7,149.8" fill="#2f8a38"/>
<polygon points="256.0,152.6 256.7,149.8 257.6,154.9 257.4,156.5 258.6,161.7 257.9,163.3 259.7,168.4 258.9,170.0 260.7,175.2 259.1,176.8 260.4,181.9 257.3,181.0 255.7,181.0 255.2,181.9 255.5,176.8 255.2,175.2 255.6,170.0 255.3,168.4 255.6,163.3 255.5,161.7 255.8,156.5 255.8,154.9 256.0,149.8" fill="#04140c" opacity="0.28"/>
<polygon points="334.8,141.2 335.0,141.4 336.3,146.7 336.3,148.5 337.9,153.8 336.9,155.5 339.5,160.8 338.3,162.6 340.1,167.9 337.6,169.7 336.3,170.5 333.2,170.5 331.4,169.7 329.7,167.9 331.4,162.6 330.0,160.8 332.1,155.5 331.7,153.8 333.5,148.5 333.2,146.7 334.5,141.4" fill="#2a8038"/>
<polygon points="317.1,136.7 317.3,136.9 318.5,142.2 318.4,143.9 319.8,149.2 319.6,150.9 321.1,156.2 319.9,158.0 321.5,163.2 318.4,162.3 315.7,162.3 312.2,163.2 313.9,158.0 313.0,156.2 314.9,150.9 314.1,149.2 315.6,143.9 315.7,142.2 316.9,136.9" fill="#175828"/>
<polygon points="256.4,138.8 256.6,139.0 257.7,144.3 257.7,146.1 258.9,151.4 258.3,153.2 260.5,158.5 259.0,160.3 261.0,165.6 259.1,167.3 257.7,168.1 255.1,168.1 253.5,167.3 251.8,165.6 253.5,160.3 252.5,158.5 254.1,153.2 253.9,151.4 255.0,146.1 255.0,144.3 256.2,139.0" fill="#1f6a30"/>
<polygon points="263.5,150.5 263.7,150.7 265.1,155.9 265.2,157.6 266.6,162.7 266.0,164.4 268.1,169.6 267.0,171.2 269.3,176.4 267.2,178.0 269.8,183.2 265.1,182.2 261.8,182.2 257.4,183.2 259.8,178.0 257.5,176.4 259.9,171.2 258.9,169.6 261.1,164.4 260.1,162.7 261.9,157.6 261.9,155.9 263.2,150.7" fill="#236f30"/>
<polygon points="247.9,148.6 248.2,148.8 249.6,153.8 249.5,155.4 251.7,160.5 251.0,162.0 252.7,167.1 252.1,168.6 254.6,173.7 251.8,175.2 254.7,180.3 249.8,179.3 246.1,179.3 241.6,180.3 244.2,175.2 241.9,173.7 244.2,168.6 242.5,167.1 245.2,162.0 244.3,160.5 246.1,155.4 246.1,153.8 247.7,148.8" fill="#1b602c"/>
<polygon points="247.9,151.6 248.6,148.8 249.4,153.8 249.3,155.4 250.5,160.5 250.1,162.0 251.1,167.1 250.8,168.6 252.1,173.7 250.6,175.2 252.2,180.3 249.2,179.3 247.6,179.3 247.2,180.3 247.5,175.2 247.2,173.7 247.5,168.6 247.3,167.1 247.6,162.0 247.5,160.5 247.7,155.4 247.7,153.8 247.9,148.8" fill="#04140c" opacity="0.28"/>
<polygon points="332.3,136.7 332.5,136.9 333.7,141.9 333.7,143.4 335.3,148.5 335.0,150.0 337.2,155.0 335.9,156.5 338.1,161.5 336.1,163.0 338.6,168.0 334.1,167.1 330.6,167.1 325.8,168.0 328.8,163.0 326.0,161.5 329.4,156.5 327.7,155.0 329.7,150.0 329.3,148.5 330.7,143.4 330.7,141.9 332.1,136.9" fill="#236f30"/>
<polygon points="333.7,149.6 334.0,149.8 335.4,155.0 335.3,156.6 337.7,161.8 337.0,163.5 338.8,168.7 338.0,170.3 339.3,175.5 337.8,177.2 335.5,178.0 331.9,178.0 329.6,177.2 327.8,175.5 329.6,170.3 327.9,168.7 330.7,163.5 330.5,161.8 331.9,156.6 332.0,155.0 333.4,149.8" fill="#236f30"/>
<polygon points="319.3,141.0 319.5,141.2 320.9,146.4 320.9,148.0 322.5,153.1 321.8,154.8 324.0,159.9 323.2,161.5 324.5,166.7 322.9,168.3 321.0,169.1 317.6,169.1 315.9,168.3 313.5,166.7 315.5,161.5 314.6,159.9 316.4,154.8 315.5,153.1 317.5,148.0 317.6,146.4 319.0,141.2" fill="#236f30"/>
<polygon points="360.0,139.7 360.2,139.9 362.0,145.2 362.0,146.9 363.7,152.2 363.4,154.0 365.3,159.2 363.4,161.0 365.7,166.3 361.8,165.3 358.2,165.3 354.4,166.3 356.3,161.0 353.6,159.2 356.9,154.0 356.3,152.2 357.8,146.9 358.2,145.2 359.7,139.9" fill="#2a8038"/>
<polygon points="346.1,141.5 346.4,141.7 347.5,146.8 347.5,148.3 349.1,153.4 348.2,155.0 349.7,160.1 349.0,161.7 350.7,166.7 349.2,168.3 350.8,173.4 349.3,175.0 347.7,175.8 344.6,175.8 342.6,175.0 341.2,173.4 343.0,168.3 341.7,166.7 343.6,161.7 341.9,160.1 344.2,155.0 343.5,153.4 344.9,148.3 345.0,146.8 345.9,141.7" fill="#2f8a38"/>
<polygon points="278.8,144.3 279.0,144.5 280.0,149.4 280.3,150.9 281.8,155.8 280.7,157.3 283.3,162.2 281.5,163.7 284.2,168.7 281.8,170.1 284.4,175.1 282.4,176.5 280.4,177.3 277.2,177.3 275.6,176.5 273.3,175.1 274.9,170.1 273.2,168.7 275.5,163.7 274.2,162.2 276.6,157.3 275.7,155.8 277.4,150.9 277.4,149.4 278.6,144.5" fill="#175828"/>
<polygon points="240.2,149.6 240.4,149.8 241.4,154.9 241.4,156.5 242.6,161.6 242.2,163.2 243.8,168.3 242.8,169.8 244.4,174.9 242.6,176.5 241.4,177.3 239.0,177.3 237.6,176.5 235.5,174.9 237.7,169.8 236.2,168.3 238.2,163.2 237.5,161.6 238.8,156.5 238.9,154.9 240.0,149.8" fill="#2a8038"/>
<polygon points="361.7,140.3 362.0,140.5 363.6,145.9 363.8,147.7 365.7,153.1 364.9,155.0 368.5,160.4 365.7,162.2 367.7,167.6 363.6,166.7 359.8,166.7 354.5,167.6 357.7,162.2 355.3,160.4 358.4,155.0 357.6,153.1 359.9,147.7 359.5,145.9 361.4,140.5" fill="#2a8038"/>
<polygon points="361.7,143.3 362.4,140.5 363.2,145.9 363.3,147.7 364.4,153.1 363.9,155.0 366.0,160.4 364.4,162.2 365.5,167.6 363.0,166.7 361.4,166.7 360.8,167.6 361.2,162.2 360.9,160.4 361.3,155.0 361.2,153.1 361.5,147.7 361.4,145.9 361.7,140.5" fill="#04140c" opacity="0.28"/>
<polygon points="238.4,138.9 238.6,139.1 239.8,144.3 239.5,145.9 241.0,151.0 240.4,152.7 242.5,157.8 241.2,159.5 242.9,164.6 241.3,166.2 239.7,167.0 237.1,167.0 235.4,166.2 234.4,164.6 235.6,159.5 234.8,157.8 236.5,152.7 235.9,151.0 237.2,145.9 237.1,144.3 238.2,139.1" fill="#2f8a38"/>
<polygon points="366.3,146.2 366.5,146.4 367.6,151.7 367.4,153.5 369.1,158.8 368.3,160.6 370.2,165.9 369.1,167.7 370.7,173.0 369.2,174.8 367.6,175.6 365.0,175.6 363.5,174.8 361.9,173.0 363.2,167.7 362.1,165.9 364.3,160.6 363.5,158.8 365.0,153.5 364.9,151.7 366.1,146.4" fill="#236f30"/>
<polygon points="292.3,140.7 292.6,140.9 294.4,146.1 294.6,147.8 296.7,153.0 296.0,154.7 299.1,160.0 296.2,161.7 299.0,166.9 296.8,168.6 294.4,169.4 290.2,169.4 288.1,168.6 284.5,166.9 288.1,161.7 285.8,160.0 288.7,154.7 288.5,153.0 290.1,147.8 290.4,146.1 292.0,140.9" fill="#1f6a30"/>
<polygon points="292.3,143.7 293.1,140.9 294.0,146.1 294.1,147.8 295.3,153.0 294.9,154.7 296.6,160.0 295.0,161.7 296.5,166.9 295.3,168.6 293.7,169.4 292.0,169.4 291.8,168.6 291.4,166.9 291.8,161.7 291.5,160.0 291.9,154.7 291.9,153.0 292.1,147.8 292.1,146.1 292.3,140.9" fill="#04140c" opacity="0.28"/>
<polygon points="354.9,148.7 355.1,148.9 356.4,154.0 356.2,155.6 357.9,160.6 357.3,162.2 359.2,167.2 357.5,168.8 360.0,173.8 357.9,175.4 359.8,180.4 358.4,182.0 356.5,182.8 353.3,182.8 351.6,182.0 349.3,180.4 351.8,175.4 349.5,173.8 351.6,168.8 351.3,167.2 352.7,162.2 351.7,160.6 353.4,155.6 353.4,154.0 354.6,148.9" fill="#1f6a30"/>
<polygon points="271.9,149.7 272.2,149.9 273.0,155.2 273.0,156.9 274.4,162.1 273.7,163.8 275.9,169.1 274.7,170.8 276.1,176.0 274.5,177.7 276.2,183.0 273.2,182.0 270.6,182.0 267.5,183.0 269.1,177.7 267.0,176.0 269.0,170.8 268.7,169.1 270.3,163.8 269.3,162.1 270.8,156.9 270.6,155.2 271.7,149.9" fill="#2a8038"/>
<polygon points="265.6,148.5 265.7,148.7 266.8,153.8 266.8,155.3 267.9,160.3 267.5,161.8 269.5,166.8 268.4,168.3 269.9,173.3 268.0,174.8 270.0,179.9 266.9,178.9 264.2,178.9 261.4,179.9 263.0,174.8 260.6,173.3 263.1,168.3 262.0,166.8 263.7,161.8 262.9,160.3 264.4,155.3 264.3,153.8 265.3,148.7" fill="#1b602c"/>
<polygon points="243.0,147.9 243.2,148.1 244.3,153.2 244.1,154.8 245.8,160.0 244.9,161.6 246.8,166.7 245.4,168.4 247.8,173.5 246.1,175.1 247.2,180.3 244.3,179.3 241.6,179.3 237.8,180.3 240.3,175.1 238.6,173.5 240.7,168.4 239.6,166.7 241.0,161.6 240.1,160.0 241.6,154.8 241.6,153.2 242.8,148.1" fill="#1b602c"/>
<polygon points="251.7,138.3 251.9,138.5 253.4,143.5 253.2,145.0 255.1,150.0 254.6,151.4 256.9,156.4 255.0,157.9 257.2,162.9 255.4,164.3 257.6,169.3 253.4,168.3 250.0,168.3 245.3,169.3 248.0,164.3 245.2,162.9 247.9,157.9 246.9,156.4 249.2,151.4 248.4,150.0 249.9,145.0 250.0,143.5 251.5,138.5" fill="#175828"/>
<polygon points="358.2,138.5 358.5,138.7 359.8,143.8 359.9,145.5 361.9,150.6 360.6,152.3 362.7,157.4 361.1,159.0 364.5,164.2 362.6,165.8 365.3,171.0 362.6,172.6 360.1,173.4 356.3,173.4 353.9,172.6 351.8,171.0 354.0,165.8 352.7,164.2 354.4,159.0 353.7,157.4 355.7,152.3 354.6,150.6 356.4,145.5 356.4,143.8 357.9,138.7" fill="#2f8a38"/>
<polygon points="358.2,141.5 358.9,138.7 359.6,143.8 359.6,145.5 360.7,150.6 360.0,152.3 361.2,157.4 360.3,159.0 362.2,164.2 361.1,165.8 362.6,171.0 361.1,172.6 359.5,173.4 357.9,173.4 357.7,172.6 357.4,171.0 357.7,165.8 357.5,164.2 357.7,159.0 357.7,157.4 357.9,152.3 357.8,150.6 358.0,145.5 358.0,143.8 358.2,138.7" fill="#04140c" opacity="0.28"/>
<polygon points="326.6,144.8 326.9,145.0 327.9,150.0 327.7,151.5 329.3,156.5 328.7,158.0 330.5,163.0 329.7,164.4 330.9,169.4 329.3,170.9 331.8,175.9 328.0,174.9 325.3,174.9 321.6,175.9 323.6,170.9 322.5,169.4 324.2,164.4 323.3,163.0 324.5,158.0 324.1,156.5 325.3,151.5 325.4,150.0 326.4,145.0" fill="#1f6a30"/>
<polygon points="308.9,135.8 309.2,136.0 310.4,141.1 310.6,142.6 312.1,147.7 311.4,149.2 313.0,154.3 311.8,155.8 315.3,160.8 312.7,162.4 315.1,167.4 313.0,169.0 310.7,169.8 307.2,169.8 304.7,169.0 302.4,167.4 305.4,162.4 302.6,160.8 305.6,155.8 304.1,154.3 306.6,149.2 305.9,147.7 307.4,142.6 307.5,141.1 308.7,136.0" fill="#1b602c"/>
<polygon points="250.0,148.8 250.3,149.0 251.6,154.1 251.7,155.8 253.5,160.9 252.8,162.6 254.9,167.7 253.4,169.4 254.8,174.5 253.2,176.2 251.6,177.0 248.5,177.0 246.5,176.2 244.5,174.5 247.1,169.4 245.5,167.7 247.4,162.6 247.1,160.9 248.7,155.8 248.3,154.1 249.8,149.0" fill="#1b602c"/>
<polygon points="250.6,138.7 250.8,138.9 252.6,144.1 252.7,145.9 255.1,151.1 254.2,152.9 257.3,158.2 254.2,159.9 257.0,165.2 252.4,164.2 248.7,164.2 244.3,165.2 246.1,159.9 245.0,158.2 247.2,152.9 246.0,151.1 248.5,145.9 248.5,144.1 250.3,138.9" fill="#1b602c"/>
<polygon points="250.6,141.7 251.2,138.9 252.2,144.1 252.2,145.9 253.5,151.1 253.0,152.9 254.8,158.2 253.0,159.9 254.6,165.2 251.8,164.2 250.3,164.2 249.8,165.2 250.1,159.9 249.9,158.2 250.2,152.9 250.0,151.1 250.3,145.9 250.3,144.1 250.6,138.9" fill="#04140c" opacity="0.28"/>
<polygon points="313.7,140.4 313.9,140.6 314.9,145.6 314.8,147.2 315.9,152.2 315.7,153.7 316.9,158.8 316.0,160.3 318.1,165.3 316.2,166.9 318.0,171.9 315.0,171.0 312.4,171.0 309.4,171.9 311.3,166.9 309.7,165.3 311.2,160.3 309.9,158.8 311.6,153.7 311.0,152.2 312.6,147.2 312.5,145.6 313.5,140.6" fill="#2a8038"/>
<polygon points="276.0,150.3 276.3,150.5 277.5,155.8 277.8,157.6 279.1,162.9 278.5,164.6 281.2,169.9 279.1,171.7 282.3,177.0 280.4,178.8 282.7,184.1 277.8,183.1 274.2,183.1 269.9,184.1 272.2,178.8 269.5,177.0 272.7,171.7 271.3,169.9 273.4,164.6 272.5,162.9 274.4,157.6 274.2,155.8 275.7,150.5" fill="#175828"/>
<polygon points="276.0,153.3 276.6,150.5 277.3,155.8 277.5,157.6 278.2,162.9 277.9,164.6 279.3,169.9 278.2,171.7 279.9,177.0 278.9,178.8 280.2,184.1 277.2,183.1 275.7,183.1 275.3,184.1 275.6,178.8 275.2,177.0 275.6,171.7 275.4,169.9 275.7,164.6 275.6,162.9 275.8,157.6 275.8,155.8 276.0,150.5" fill="#04140c" opacity="0.28"/>
<polygon points="293.3,143.2 293.6,143.4 295.0,148.6 295.0,150.3 297.1,155.6 295.8,157.3 298.7,162.5 296.8,164.2 299.6,169.4 294.9,168.5 291.6,168.5 287.2,169.4 289.8,164.2 287.8,162.5 290.7,157.3 289.6,155.6 291.6,150.3 291.6,148.6 293.0,143.4" fill="#1f6a30"/>
<polygon points="267.3,140.8 267.6,141.0 269.1,146.2 269.0,148.0 270.3,153.3 270.3,155.0 272.0,160.3 270.8,162.1 272.7,167.3 270.6,169.1 269.0,169.9 265.6,169.9 264.0,169.1 261.5,167.3 263.9,162.1 262.3,160.3 264.5,155.0 264.1,153.3 265.9,148.0 265.4,146.2 267.0,141.0" fill="#236f30"/>
<polygon points="338.9,141.5 339.0,141.7 340.4,147.0 340.5,148.8 342.2,154.2 341.3,156.0 343.3,161.3 342.1,163.2 344.3,168.5 341.7,170.3 340.3,171.1 337.4,171.1 335.6,170.3 333.8,168.5 335.8,163.2 334.6,161.3 336.8,156.0 335.7,154.2 337.4,148.8 337.5,147.0 338.6,141.7" fill="#1f6a30"/>
<polygon points="372.2,148.9 372.5,149.1 374.2,154.3 374.0,155.9 375.8,161.1 375.1,162.8 377.3,167.9 376.4,169.6 378.6,174.8 376.1,176.4 374.0,177.2 370.4,177.2 367.8,176.4 366.2,174.8 368.2,169.6 367.4,167.9 369.0,162.8 367.9,161.1 370.6,155.9 370.6,154.3 371.9,149.1" fill="#175828"/>
<polygon points="372.2,151.9 372.8,149.1 373.8,154.3 373.7,155.9 374.7,161.1 374.3,162.8 375.5,167.9 375.0,169.6 376.2,174.8 374.8,176.4 373.4,177.2 371.9,177.2 371.7,176.4 371.5,174.8 371.7,169.6 371.6,167.9 371.8,162.8 371.7,161.1 372.0,155.9 372.0,154.3 372.2,149.1" fill="#04140c" opacity="0.28"/>
<polygon points="336.3,144.5 336.5,144.7 338.2,150.0 338.1,151.8 339.9,157.1 339.2,158.9 342.1,164.2 340.3,165.9 341.5,171.2 338.0,170.3 334.6,170.3 329.9,171.2 332.8,165.9 331.0,164.2 333.2,158.9 332.0,157.1 334.2,151.8 334.5,150.0 336.0,144.7" fill="#236f30"/>
<polygon points="336.3,139.3 336.5,139.5 337.7,144.9 337.5,146.7 339.4,152.1 338.3,154.0 340.6,159.4 338.8,161.3 341.1,166.7 337.6,165.7 335.0,165.7 332.4,166.7 333.6,161.3 332.4,159.4 334.1,154.0 333.5,152.1 335.1,146.7 335.0,144.9 336.1,139.5" fill="#2f8a38"/>
<polygon points="314.1,148.4 314.4,148.6 316.1,153.9 316.1,155.6 318.5,160.9 317.5,162.7 320.7,167.9 318.0,169.7 319.9,175.0 316.0,174.0 312.2,174.0 306.8,175.0 310.3,169.7 307.7,167.9 310.4,162.7 309.4,160.9 311.9,155.6 311.9,153.9 313.8,148.6" fill="#2f8a38"/>
<polygon points="314.1,151.4 314.8,148.6 315.7,153.9 315.7,155.6 317.1,160.9 316.5,162.7 318.3,167.9 316.8,169.7 317.8,175.0 315.4,174.0 313.8,174.0 313.3,175.0 313.7,169.7 313.4,167.9 313.7,162.7 313.6,160.9 313.9,155.6 313.9,153.9 314.1,148.6" fill="#04140c" opacity="0.28"/>
<polygon points="357.9,138.8 358.0,139.0 359.3,144.2 359.6,146.0 361.1,151.3 360.5,153.0 362.6,158.3 361.0,160.0 362.6,165.3 359.3,164.4 356.4,164.4 352.7,165.3 354.5,160.0 353.3,158.3 355.7,153.0 354.8,151.3 356.4,146.0 356.4,144.2 357.6,139.0" fill="#2a8038"/>
<polygon points="350.7,136.3 350.9,136.5 352.5,141.9 352.4,143.7 354.9,149.0 353.3,150.8 356.0,156.1 354.4,158.0 356.4,163.3 352.4,162.3 348.9,162.3 344.0,163.3 347.3,158.0 345.0,156.1 347.5,150.8 347.1,149.0 349.0,143.7 349.0,141.9 350.4,136.5" fill="#2f8a38"/>
<polygon points="249.7,143.8 249.9,144.0 250.8,149.1 250.7,150.6 252.3,155.7 251.4,157.2 252.9,162.2 251.8,163.8 253.9,168.8 252.4,170.4 254.8,175.4 253.0,177.0 251.1,177.8 248.4,177.8 247.0,177.0 245.0,175.4 246.8,170.4 245.8,168.8 247.2,163.8 246.0,162.2 247.9,157.2 247.4,155.7 248.6,150.6 248.5,149.1 249.5,144.0" fill="#175828"/>
<polygon points="246.3,133.7 246.5,133.9 247.4,139.2 247.6,140.9 248.6,146.2 248.4,148.0 250.3,153.3 248.7,155.1 250.0,160.4 249.2,162.2 247.5,163.0 245.0,163.0 243.8,162.2 241.7,160.4 244.0,155.1 242.3,153.3 244.6,148.0 243.7,146.2 245.0,140.9 245.0,139.2 246.1,133.9" fill="#1b602c"/>
<polygon points="337.8,150.1 338.1,150.3 340.3,155.5 340.0,157.2 342.5,162.5 341.8,164.2 345.0,169.4 342.2,171.1 345.5,176.3 339.9,175.4 335.8,175.4 330.3,176.3 333.4,171.1 330.5,169.4 334.3,164.2 333.0,162.5 335.3,157.2 335.7,155.5 337.6,150.3" fill="#1b602c"/>
<polygon points="337.8,153.1 338.6,150.3 339.7,155.5 339.6,157.2 340.9,162.5 340.6,164.2 342.3,169.4 340.8,171.1 342.6,176.3 339.2,175.4 337.5,175.4 336.9,176.3 337.3,171.1 337.0,169.4 337.4,164.2 337.3,162.5 337.5,157.2 337.6,155.5 337.8,150.3" fill="#04140c" opacity="0.28"/>
<polygon points="303.4,138.2 303.6,138.4 304.5,143.4 304.4,145.0 305.7,150.0 305.2,151.5 306.2,156.6 305.4,158.1 307.1,163.2 306.3,164.7 307.1,169.8 306.1,171.3 304.6,172.1 302.2,172.1 301.2,171.3 299.5,169.8 301.1,164.7 299.5,163.2 301.4,158.1 300.7,156.6 301.9,151.5 301.1,150.0 302.3,145.0 302.5,143.4 303.3,138.4" fill="#1f6a30"/>
<polygon points="347.0,147.4 347.3,147.6 349.1,152.7 349.0,154.3 351.5,159.3 350.1,160.9 353.5,165.9 350.9,167.5 354.6,172.6 351.6,174.1 354.5,179.2 349.1,178.2 345.0,178.2 339.5,179.2 342.4,174.1 339.9,172.6 343.0,167.5 341.8,165.9 343.6,160.9 343.2,159.3 345.0,154.3 345.3,152.7 346.8,147.6" fill="#236f30"/>
<polygon points="347.0,150.4 347.7,147.6 348.7,152.7 348.7,154.3 350.0,159.3 349.3,160.9 351.1,165.9 349.7,167.5 351.8,172.6 350.1,174.1 351.7,179.2 348.4,178.2 346.7,178.2 346.1,179.2 346.5,174.1 346.2,172.6 346.6,167.5 346.4,165.9 346.6,160.9 346.6,159.3 346.8,154.3 346.8,152.7 347.0,147.6" fill="#04140c" opacity="0.28"/>
<polygon points="231.0,129.3 231.3,129.5 232.6,134.9 232.9,136.7 234.8,142.1 233.7,143.9 236.5,149.3 234.6,151.1 237.1,156.5 235.0,158.3 232.8,159.1 229.3,159.1 227.2,158.3 225.4,156.5 227.6,151.1 226.2,149.3 228.4,143.9 227.8,142.1 229.2,136.7 229.4,134.9 230.7,129.5" fill="#2a8038"/>
<polygon points="171.9,137.1 172.1,137.3 173.9,142.4 173.9,144.1 176.2,149.2 174.8,150.8 177.6,156.0 175.7,157.6 178.7,162.7 175.4,164.4 173.8,165.2 170.0,165.2 167.3,164.4 165.3,162.7 168.0,157.6 165.8,156.0 169.0,150.8 168.2,149.2 169.9,144.1 170.0,142.4 171.6,137.3" fill="#2a8038"/>
<polygon points="171.9,140.1 172.5,137.3 173.5,142.4 173.5,144.1 174.8,149.2 174.0,150.8 175.6,156.0 174.5,157.6 176.2,162.7 174.3,164.4 173.2,165.2 171.6,165.2 171.3,164.4 171.1,162.7 171.4,157.6 171.2,156.0 171.5,150.8 171.4,149.2 171.6,144.1 171.7,142.4 171.9,137.3" fill="#04140c" opacity="0.28"/>
<polygon points="218.8,134.0 219.0,134.2 220.0,139.5 220.1,141.4 221.4,146.7 220.9,148.5 222.2,153.9 221.4,155.7 222.7,161.1 221.3,162.9 220.1,163.7 217.4,163.7 215.7,162.9 214.3,161.1 216.2,155.7 215.0,153.9 216.6,148.5 216.2,146.7 217.3,141.4 217.5,139.5 218.5,134.2" fill="#2a8038"/>
<polygon points="196.6,127.9 196.9,128.1 198.2,133.4 198.4,135.2 200.5,140.5 199.5,142.4 201.7,147.7 200.2,149.5 203.6,154.8 200.6,156.6 198.4,157.4 194.7,157.4 192.2,156.6 190.5,154.8 192.7,149.5 190.8,147.7 193.9,142.4 193.0,140.5 194.6,135.2 194.5,133.4 196.3,128.1" fill="#1f6a30"/>
<polygon points="196.6,130.9 197.2,128.1 198.0,133.4 198.1,135.2 199.3,140.5 198.7,142.4 199.9,147.7 199.1,149.5 200.9,154.8 199.3,156.6 197.8,157.4 196.3,157.4 196.0,156.6 195.8,154.8 196.1,149.5 195.9,147.7 196.3,142.4 196.2,140.5 196.3,135.2 196.3,133.4 196.5,128.1" fill="#04140c" opacity="0.28"/>
<polygon points="169.3,132.9 169.6,133.1 170.9,138.2 171.1,139.7 172.8,144.8 172.3,146.3 174.0,151.4 173.4,152.9 176.1,158.0 173.3,159.5 175.3,164.6 171.2,163.6 167.4,163.6 162.1,164.6 165.8,159.5 162.4,158.0 165.7,152.9 163.6,151.4 166.5,146.3 165.8,144.8 167.5,139.7 167.6,138.2 169.0,133.1" fill="#236f30"/>
<polygon points="169.3,135.9 170.0,133.1 170.7,138.2 170.8,139.7 171.7,144.8 171.5,146.3 172.4,151.4 172.0,152.9 173.5,158.0 172.0,159.5 173.1,164.6 170.6,163.6 169.0,163.6 168.4,164.6 168.9,159.5 168.5,158.0 168.9,152.9 168.6,151.4 169.0,146.3 168.9,144.8 169.1,139.7 169.1,138.2 169.3,133.1" fill="#04140c" opacity="0.28"/>
<polygon points="174.8,130.5 175.1,130.7 176.5,135.6 176.7,137.1 178.4,142.1 177.8,143.5 179.6,148.5 178.4,150.0 181.3,155.0 178.5,156.4 176.5,157.2 173.1,157.2 171.0,156.4 169.1,155.0 171.2,150.0 169.3,148.5 172.1,143.5 171.6,142.1 173.1,137.1 173.2,135.6 174.5,130.7" fill="#2f8a38"/>
<polygon points="203.2,136.8 203.5,137.0 204.9,142.0 204.9,143.6 206.4,148.7 205.8,150.2 208.3,155.3 206.2,156.9 209.7,162.0 206.8,163.5 209.9,168.6 205.0,167.7 201.4,167.7 197.2,168.6 199.2,163.5 196.4,162.0 200.0,156.9 198.4,155.3 200.8,150.2 199.6,148.7 201.6,143.6 201.7,142.0 203.0,137.0" fill="#1f6a30"/>
<polygon points="195.8,130.0 196.0,130.2 197.8,135.7 197.4,137.6 199.5,143.1 198.7,145.0 201.2,150.5 199.2,152.4 197.3,153.2 194.2,153.2 192.1,152.4 190.5,150.5 192.6,145.0 191.8,143.1 193.9,137.6 194.1,135.7 195.5,130.2" fill="#2f8a38"/>
<polygon points="172.0,135.9 172.2,136.1 173.5,141.4 173.8,143.1 175.5,148.4 175.0,150.1 177.4,155.4 175.1,157.2 176.7,162.4 173.5,161.5 170.5,161.5 166.6,162.4 168.6,157.2 166.9,155.4 169.4,150.1 168.5,148.4 170.3,143.1 170.2,141.4 171.8,136.1" fill="#1f6a30"/>
<polygon points="240.0,132.9 240.2,133.1 241.3,138.1 241.1,139.6 242.6,144.6 241.8,146.1 243.6,151.1 243.1,152.6 245.2,157.6 242.8,159.1 245.3,164.1 241.4,163.1 238.6,163.1 235.6,164.1 237.1,159.1 235.2,157.6 237.4,152.6 236.4,151.1 237.9,146.1 237.5,144.6 238.6,139.6 238.5,138.1 239.8,133.1" fill="#236f30"/>
<polygon points="188.6,136.4 188.8,136.6 190.3,141.6 190.3,143.0 192.4,148.0 191.7,149.5 193.5,154.5 192.3,155.9 194.5,160.9 192.8,162.4 190.4,163.2 186.7,163.2 185.0,162.4 181.8,160.9 184.5,155.9 183.3,154.5 185.7,149.5 185.0,148.0 186.9,143.0 186.5,141.6 188.3,136.6" fill="#236f30"/>
<polygon points="188.6,139.4 189.2,136.6 190.0,141.6 190.0,143.0 191.2,148.0 190.8,149.5 191.8,154.5 191.1,155.9 192.3,160.9 191.4,162.4 189.8,163.2 188.2,163.2 188.1,162.4 187.8,160.9 188.1,155.9 187.9,154.5 188.2,149.5 188.1,148.0 188.4,143.0 188.3,141.6 188.5,136.6" fill="#04140c" opacity="0.28"/>
<polygon points="168.5,129.1 168.7,129.3 169.9,134.2 169.9,135.7 171.0,140.6 170.6,142.1 172.7,147.1 171.4,148.5 172.9,153.5 171.7,154.9 173.7,159.9 169.9,158.9 167.1,158.9 163.4,159.9 165.3,154.9 163.8,153.5 165.4,148.5 164.9,147.1 166.6,142.1 166.2,140.6 167.4,135.7 167.2,134.2 168.3,129.3" fill="#2a8038"/>
<polygon points="169.1,128.5 169.3,128.7 170.3,133.7 170.4,135.3 171.6,140.3 171.1,141.9 172.4,147.0 172.0,148.5 173.3,153.6 172.1,155.1 174.0,160.2 170.4,159.2 167.7,159.2 164.2,160.2 166.0,155.1 164.1,153.6 166.8,148.5 165.7,147.0 167.2,141.9 166.2,140.3 167.7,135.3 167.9,133.7 168.9,128.7" fill="#236f30"/>
<polygon points="237.2,132.3 237.5,132.5 239.0,137.5 238.9,139.0 240.7,144.0 240.6,145.5 243.1,150.5 240.4,152.0 242.5,157.0 238.9,156.1 235.5,156.1 230.8,157.0 234.0,152.0 231.8,150.5 233.8,145.5 233.1,144.0 235.3,139.0 235.3,137.5 236.9,132.5" fill="#2a8038"/>
<polygon points="223.4,135.7 223.7,135.9 225.3,140.9 225.1,142.3 226.9,147.3 226.6,148.8 229.7,153.7 227.2,155.2 230.1,160.2 228.1,161.7 225.3,162.5 221.4,162.5 219.3,161.7 216.1,160.2 218.7,155.2 217.9,153.7 220.7,148.8 219.8,147.3 221.5,142.3 221.6,140.9 223.0,135.9" fill="#236f30"/>
<polygon points="223.4,138.7 224.0,135.9 225.0,140.9 224.8,142.3 225.8,147.3 225.7,148.8 227.4,153.7 226.0,155.2 227.6,160.2 226.5,161.7 224.7,162.5 223.0,162.5 222.9,161.7 222.5,160.2 222.8,155.2 222.7,153.7 223.0,148.8 222.9,147.3 223.1,142.3 223.1,140.9 223.3,135.9" fill="#04140c" opacity="0.28"/>
<polygon points="208.5,133.6 208.8,133.8 210.2,139.1 210.0,140.8 211.7,146.1 211.4,147.9 212.8,153.2 212.3,154.9 213.9,160.2 211.8,162.0 210.1,162.8 206.9,162.8 205.0,162.0 202.9,160.2 205.1,154.9 203.3,153.2 206.0,147.9 205.3,146.1 206.9,140.8 207.1,139.1 208.3,133.8" fill="#1f6a30"/>
<polygon points="193.8,125.7 194.1,125.9 195.4,131.3 195.3,133.1 197.3,138.5 196.6,140.3 198.8,145.6 197.1,147.5 199.2,152.8 197.0,154.7 195.5,155.5 192.2,155.5 190.1,154.7 188.2,152.8 190.1,147.5 188.9,145.6 191.1,140.3 190.5,138.5 192.3,133.1 192.2,131.3 193.6,125.9" fill="#1f6a30"/>
<polygon points="232.2,138.1 232.3,138.3 233.6,143.5 233.6,145.2 234.8,150.4 234.4,152.0 235.9,157.2 234.6,158.9 236.6,164.1 233.4,163.1 230.9,163.1 228.1,164.1 229.5,158.9 227.7,157.2 229.7,152.0 229.4,150.4 230.7,145.2 230.9,143.5 232.0,138.3" fill="#1f6a30"/>
<polygon points="199.1,131.8 199.4,132.0 200.8,137.2 200.8,138.9 202.0,144.1 201.5,145.8 204.1,151.0 202.7,152.7 204.6,157.9 202.2,159.6 200.6,160.4 197.6,160.4 196.0,159.6 194.5,157.9 196.1,152.7 194.6,151.0 196.8,145.8 196.1,144.1 197.6,138.9 197.6,137.2 198.9,132.0" fill="#1f6a30"/>
<polygon points="200.0,125.5 200.3,125.7 201.9,130.7 201.7,132.1 204.1,137.1 202.7,138.5 205.4,143.5 204.1,144.9 206.8,149.9 204.5,151.3 201.9,152.1 198.2,152.1 196.4,151.3 194.3,149.9 196.5,144.9 195.1,143.5 197.3,138.5 195.9,137.1 198.1,132.1 198.0,130.7 199.7,125.7" fill="#2a8038"/>
<polygon points="200.0,128.5 200.7,125.7 201.5,130.7 201.4,132.1 202.8,137.1 202.0,138.5 203.5,143.5 202.8,144.9 204.3,149.9 203.0,151.3 201.3,152.1 199.7,152.1 199.6,151.3 199.3,149.9 199.6,144.9 199.4,143.5 199.7,138.5 199.5,137.1 199.8,132.1 199.8,130.7 200.0,125.7" fill="#04140c" opacity="0.28"/>
<polygon points="165.1,132.8 165.3,133.0 166.8,138.1 166.5,139.6 168.5,144.6 167.8,146.2 170.0,151.2 168.5,152.8 171.4,157.8 168.2,159.3 171.2,164.4 166.8,163.4 163.4,163.4 159.0,164.4 161.4,159.3 159.6,157.8 161.9,152.8 161.0,151.2 162.5,146.2 161.6,144.6 163.8,139.6 163.4,138.1 164.8,133.0" fill="#1f6a30"/>
<polygon points="218.4,127.0 218.6,127.2 219.8,132.3 219.9,133.8 221.3,138.8 220.9,140.4 223.1,145.4 221.2,146.9 222.7,152.0 221.1,153.5 219.8,154.3 217.0,154.3 215.5,153.5 213.9,152.0 215.3,146.9 214.5,145.4 216.3,140.4 215.8,138.8 217.2,133.8 217.1,132.3 218.2,127.2" fill="#2f8a38"/>
<ellipse cx="122.8" cy="116.1" rx="6.5" ry="4.6" fill="#58b844"/>
<ellipse cx="126.6" cy="123.2" rx="5.9" ry="3.1" fill="#58b844"/>
<ellipse cx="20.4" cy="127.6" rx="7.3" ry="5.0" fill="#2a7a2c"/>
<ellipse cx="131.9" cy="134.5" rx="3.6" ry="3.0" fill="#43a238"/>
<ellipse cx="3.5" cy="129.5" rx="3.2" ry="2.7" fill="#3a9a34"/>
<ellipse cx="103.3" cy="121.0" rx="7.3" ry="4.3" fill="#3a9a34"/>
<ellipse cx="102.9" cy="140.6" rx="6.7" ry="3.9" fill="#2a7a2c"/>
<ellipse cx="131.8" cy="151.2" rx="4.1" ry="2.0" fill="#2f8a30"/>
<ellipse cx="57.1" cy="117.4" rx="7.4" ry="5.4" fill="#58b844"/>
<ellipse cx="68.8" cy="136.5" rx="5.2" ry="2.7" fill="#3a9a34"/>
<ellipse cx="108.4" cy="137.5" rx="5.5" ry="3.2" fill="#4aaa3a"/>
<ellipse cx="126.8" cy="116.7" rx="3.1" ry="2.2" fill="#43a238"/>
<ellipse cx="153.3" cy="126.2" rx="5.6" ry="2.9" fill="#2f8a30"/>
<ellipse cx="45.9" cy="137.8" rx="3.6" ry="2.4" fill="#4aaa3a"/>
<ellipse cx="57.5" cy="126.2" rx="7.7" ry="3.9" fill="#2a7a2c"/>
<ellipse cx="135.2" cy="117.0" rx="7.8" ry="5.6" fill="#58b844"/>
<ellipse cx="155.9" cy="127.7" rx="4.8" ry="3.7" fill="#2f8a30"/>
<ellipse cx="141.4" cy="128.4" rx="3.0" ry="2.3" fill="#43a238"/>
<ellipse cx="115.1" cy="139.6" rx="5.5" ry="3.0" fill="#43a238"/>
<ellipse cx="57.5" cy="134.8" rx="7.9" ry="4.4" fill="#43a238"/>
<ellipse cx="32.8" cy="128.0" rx="5.6" ry="3.7" fill="#4aaa3a"/>
<ellipse cx="120.0" cy="156.6" rx="7.1" ry="5.5" fill="#2f8a30"/>
<ellipse cx="113.2" cy="138.1" rx="7.1" ry="5.5" fill="#43a238"/>
<ellipse cx="124.9" cy="138.5" rx="7.3" ry="3.8" fill="#58b844"/>
<ellipse cx="135.7" cy="148.4" rx="4.5" ry="3.7" fill="#3a9a34"/>
<ellipse cx="8.3" cy="134.4" rx="6.6" ry="4.6" fill="#4aaa3a"/>
<ellipse cx="56.7" cy="131.1" rx="7.3" ry="4.9" fill="#43a238"/>
<ellipse cx="140.3" cy="138.1" rx="7.1" ry="4.8" fill="#43a238"/>
<ellipse cx="83.0" cy="135.1" rx="3.7" ry="2.0" fill="#2a7a2c"/>
<ellipse cx="13.5" cy="131.9" rx="3.2" ry="2.0" fill="#4aaa3a"/>
<ellipse cx="135.4" cy="145.0" rx="7.9" ry="5.4" fill="#2f8a30"/>
<ellipse cx="79.4" cy="118.8" rx="5.3" ry="3.9" fill="#2f8a30"/>
<ellipse cx="63.6" cy="136.9" rx="4.4" ry="3.6" fill="#4aaa3a"/>
<ellipse cx="111.2" cy="148.4" rx="7.6" ry="4.2" fill="#2f8a30"/>
<ellipse cx="6.2" cy="143.8" rx="4.8" ry="3.9" fill="#2f8a30"/>
<ellipse cx="145.1" cy="123.5" rx="5.7" ry="3.0" fill="#43a238"/>
<ellipse cx="77.7" cy="142.0" rx="4.7" ry="2.6" fill="#2a7a2c"/>
<ellipse cx="88.0" cy="145.6" rx="6.3" ry="4.0" fill="#3a9a34"/>
<ellipse cx="46.7" cy="135.2" rx="4.7" ry="3.3" fill="#43a238"/>
<ellipse cx="119.1" cy="124.3" rx="7.2" ry="5.5" fill="#4aaa3a"/>
<ellipse cx="73.2" cy="144.8" rx="6.7" ry="5.1" fill="#3a9a34"/>
<ellipse cx="128.0" cy="143.7" rx="5.1" ry="3.6" fill="#43a238"/>
<ellipse cx="85.9" cy="146.6" rx="7.2" ry="4.8" fill="#2f8a30"/>
<ellipse cx="18.5" cy="117.3" rx="5.0" ry="2.6" fill="#2f8a30"/>
<ellipse cx="49.1" cy="157.7" rx="8.0" ry="4.0" fill="#4aaa3a"/>
<ellipse cx="10.2" cy="152.9" rx="4.2" ry="2.6" fill="#58b844"/>
<ellipse cx="149.2" cy="150.9" rx="3.1" ry="1.7" fill="#2f8a30"/>
<ellipse cx="138.1" cy="141.1" rx="6.1" ry="3.9" fill="#58b844"/>
<ellipse cx="91.8" cy="143.4" rx="5.5" ry="3.1" fill="#2f8a30"/>
<ellipse cx="137.5" cy="139.3" rx="7.4" ry="4.4" fill="#2a7a2c"/>
<ellipse cx="103.0" cy="115.8" rx="3.4" ry="2.6" fill="#4aaa3a"/>
<ellipse cx="87.7" cy="128.3" rx="3.4" ry="2.2" fill="#2a7a2c"/>
<ellipse cx="119.8" cy="142.7" rx="4.9" ry="3.3" fill="#4aaa3a"/>
<ellipse cx="126.8" cy="124.2" rx="6.2" ry="3.1" fill="#3a9a34"/>
<ellipse cx="154.9" cy="137.9" rx="4.8" ry="3.2" fill="#2f8a30"/>
<ellipse cx="148.6" cy="131.2" rx="5.8" ry="3.7" fill="#2a7a2c"/>
<ellipse cx="87.1" cy="131.0" rx="6.5" ry="5.2" fill="#3a9a34"/>
<ellipse cx="44.9" cy="122.2" rx="7.7" ry="6.0" fill="#58b844"/>
<ellipse cx="147.0" cy="116.4" rx="6.3" ry="4.3" fill="#4aaa3a"/>
<ellipse cx="116.2" cy="121.2" rx="5.8" ry="2.9" fill="#3a9a34"/>
<ellipse cx="131.6" cy="123.8" rx="7.8" ry="4.1" fill="#2a7a2c"/>
<ellipse cx="104.3" cy="137.0" rx="3.1" ry="2.5" fill="#58b844"/>
<ellipse cx="137.4" cy="157.2" rx="4.1" ry="3.3" fill="#3a9a34"/>
<ellipse cx="34.3" cy="131.9" rx="3.4" ry="2.3" fill="#4aaa3a"/>
<ellipse cx="6.7" cy="134.0" rx="5.0" ry="3.3" fill="#3a9a34"/>
<ellipse cx="112.5" cy="155.8" rx="4.5" ry="3.3" fill="#58b844"/>
<ellipse cx="58.3" cy="136.0" rx="5.9" ry="4.1" fill="#4aaa3a"/>
<ellipse cx="41.3" cy="153.9" rx="7.8" ry="6.5" fill="#2f8a30"/>
<ellipse cx="83.9" cy="114.7" rx="5.4" ry="3.8" fill="#2a7a2c"/>
<ellipse cx="71.8" cy="131.4" rx="7.0" ry="5.0" fill="#2a7a2c"/>
<ellipse cx="98.1" cy="123.5" rx="7.9" ry="4.5" fill="#2a7a2c"/>
<ellipse cx="15.4" cy="151.1" rx="3.4" ry="2.7" fill="#4aaa3a"/>
<ellipse cx="14.6" cy="130.5" rx="6.8" ry="5.5" fill="#2a7a2c"/>
<ellipse cx="4.1" cy="129.8" rx="6.7" ry="3.5" fill="#58b844"/>
<ellipse cx="73.0" cy="132.1" rx="6.5" ry="3.4" fill="#43a238"/>
<ellipse cx="70.0" cy="141.6" rx="3.5" ry="2.3" fill="#2f8a30"/>
<ellipse cx="15.4" cy="118.1" rx="5.7" ry="4.5" fill="#2a7a2c"/>
<ellipse cx="29.0" cy="147.0" rx="7.0" ry="4.6" fill="#58b844"/>
<ellipse cx="29.5" cy="128.8" rx="5.6" ry="4.1" fill="#58b844"/>
<ellipse cx="65.6" cy="150.5" rx="5.5" ry="2.7" fill="#58b844"/>
<ellipse cx="35.3" cy="135.3" rx="6.5" ry="4.0" fill="#43a238"/>
<ellipse cx="118.4" cy="147.9" rx="4.1" ry="2.5" fill="#2a7a2c"/>
<ellipse cx="45.6" cy="121.3" rx="7.7" ry="4.0" fill="#2f8a30"/>
<ellipse cx="24.2" cy="151.5" rx="5.6" ry="2.8" fill="#2f8a30"/>
<ellipse cx="145.0" cy="128.3" rx="6.3" ry="3.5" fill="#58b844"/>
<ellipse cx="88.3" cy="150.7" rx="3.6" ry="2.6" fill="#3a9a34"/>
<ellipse cx="102.4" cy="117.9" rx="5.7" ry="3.4" fill="#43a238"/>
<ellipse cx="140.9" cy="122.0" rx="6.9" ry="4.6" fill="#58b844"/>
<ellipse cx="29.3" cy="145.0" rx="7.1" ry="3.6" fill="#58b844"/>
<ellipse cx="6.0" cy="157.1" rx="6.8" ry="4.6" fill="#43a238"/>
<ellipse cx="3.3" cy="137.2" rx="3.3" ry="2.6" fill="#2f8a30"/>
<ellipse cx="74.9" cy="137.3" rx="6.3" ry="3.5" fill="#4aaa3a"/>
<ellipse cx="1.8" cy="146.1" rx="6.6" ry="4.7" fill="#2a7a2c"/>
<ellipse cx="5.9" cy="156.0" rx="4.0" ry="2.0" fill="#3a9a34"/>
<ellipse cx="25.5" cy="147.1" rx="3.0" ry="1.6" fill="#2f8a30"/>
<ellipse cx="49.6" cy="136.2" rx="3.6" ry="2.4" fill="#3a9a34"/>
<ellipse cx="77.9" cy="156.5" rx="7.2" ry="4.0" fill="#3a9a34"/>
<ellipse cx="141.4" cy="138.9" rx="5.6" ry="3.1" fill="#2f8a30"/>
<ellipse cx="19.5" cy="145.7" rx="4.7" ry="2.3" fill="#3a9a34"/>
<ellipse cx="121.3" cy="139.2" rx="7.1" ry="3.7" fill="#2f8a30"/>
<ellipse cx="80.2" cy="141.8" rx="4.2" ry="3.1" fill="#58b844"/>
<ellipse cx="93.6" cy="156.1" rx="4.3" ry="2.5" fill="#3a9a34"/>
<ellipse cx="23.6" cy="149.9" rx="4.3" ry="2.2" fill="#3a9a34"/>
<ellipse cx="75.4" cy="135.0" rx="6.7" ry="3.5" fill="#2a7a2c"/>
<ellipse cx="24.6" cy="154.1" rx="6.5" ry="4.3" fill="#4aaa3a"/>
<ellipse cx="36.6" cy="153.4" rx="4.8" ry="3.8" fill="#43a238"/>
<ellipse cx="152.8" cy="125.7" rx="6.8" ry="5.6" fill="#43a238"/>
<ellipse cx="99.7" cy="119.0" rx="5.6" ry="3.7" fill="#43a238"/>
<ellipse cx="120.3" cy="136.4" rx="5.8" ry="3.7" fill="#4aaa3a"/>
<ellipse cx="129.4" cy="152.9" rx="4.5" ry="3.3" fill="#58b844"/>
<polygon points="97.0,31.0 97.8,31.0 99.6,37.3 99.4,39.1 102.6,45.4 100.3,47.3 104.2,53.6 101.8,55.4 105.9,61.7 103.6,63.6 108.6,69.9 103.8,71.7 109.4,78.0 104.8,79.9 110.7,86.2 107.0,88.0 110.9,94.3 106.2,96.2 114.6,102.5 106.2,104.3 115.1,110.6 107.4,112.5 113.6,118.8 108.4,120.6 112.5,126.9 106.3,128.8 115.2,135.1 108.1,136.9 112.7,143.2 101.8,142.0 92.2,142.0 79.8,143.2 87.3,136.9 81.6,135.1 85.6,128.8 82.6,126.9 87.3,120.6 78.8,118.8 86.4,112.5 81.6,110.6 87.6,104.3 82.5,102.5 86.2,96.2 81.6,94.3 89.0,88.0 84.7,86.2 89.0,79.9 84.1,78.0 90.5,71.7 86.9,69.9 90.9,63.6 88.3,61.7 92.3,55.4 89.1,53.6 93.5,47.3 91.9,45.4 94.7,39.1 94.0,37.3 96.4,31.0" fill="#1f6332"/>
<polygon points="97.0,34.0 98.7,31.0 99.7,37.3 99.6,39.1 101.4,45.4 100.1,47.3 102.3,53.6 100.9,55.4 103.2,61.7 101.9,63.6 104.6,69.9 102.0,71.7 105.1,78.0 102.6,79.9 105.8,86.2 103.8,88.0 105.9,94.3 103.4,96.2 108.0,102.5 103.3,104.3 108.2,110.6 104.0,112.5 107.4,118.8 104.5,120.6 106.8,126.9 103.4,128.8 108.3,135.1 104.4,136.9 106.9,143.2 100.2,142.0 96.2,142.0 94.9,143.2 95.8,136.9 95.2,135.1 95.6,128.8 95.3,126.9 95.8,120.6 94.8,118.8 95.7,112.5 95.1,110.6 95.9,104.3 95.3,102.5 95.7,96.2 95.2,94.3 96.0,88.0 95.5,86.2 96.0,79.9 95.5,78.0 96.2,71.7 95.8,69.9 96.3,63.6 96.0,61.7 96.4,55.4 96.1,53.6 96.6,47.3 96.4,45.4 96.7,39.1 96.6,37.3 96.9,31.0" fill="#04140c" opacity="0.28"/>
<polygon points="120.0,43.0 120.8,43.0 122.9,49.2 122.3,51.0 124.5,57.2 123.4,59.0 126.2,65.2 124.9,67.0 127.7,73.2 126.5,75.0 129.4,81.2 126.4,83.0 132.0,89.2 127.6,91.0 135.0,97.2 127.7,99.0 134.6,105.2 129.2,107.0 136.1,113.2 128.3,115.0 135.4,121.2 130.7,123.0 136.4,129.2 129.1,131.0 135.3,137.2 129.3,139.0 135.2,145.2 129.4,147.0 124.5,148.0 115.5,148.0 110.5,147.0 105.0,145.2 109.8,139.0 106.3,137.2 111.1,131.0 104.3,129.2 111.3,123.0 103.8,121.2 109.5,115.0 103.2,113.2 109.9,107.0 105.8,105.2 110.5,99.0 106.9,97.2 113.2,91.0 108.6,89.2 113.6,83.0 108.7,81.2 114.0,75.0 112.4,73.2 114.8,67.0 113.1,65.2 116.1,59.0 115.3,57.2 117.7,51.0 117.1,49.2 119.3,43.0" fill="#226a35"/>
<polygon points="120.0,46.0 121.6,43.0 122.8,49.2 122.4,51.0 123.7,57.2 123.1,59.0 124.6,65.2 123.9,67.0 125.4,73.2 124.8,75.0 126.3,81.2 124.7,83.0 127.8,89.2 125.4,91.0 129.4,97.2 125.4,99.0 129.3,105.2 126.3,107.0 130.0,113.2 125.8,115.0 129.7,121.2 127.1,123.0 130.2,129.2 126.2,131.0 129.6,137.2 126.3,139.0 129.6,145.2 126.3,147.0 123.0,148.0 119.2,148.0 118.9,147.0 118.2,145.2 118.8,139.0 118.4,137.2 118.9,131.0 118.1,129.2 119.0,123.0 118.1,121.2 118.7,115.0 118.0,113.2 118.8,107.0 118.3,105.2 118.9,99.0 118.4,97.2 119.2,91.0 118.6,89.2 119.2,83.0 118.6,81.2 119.3,75.0 119.1,73.2 119.4,67.0 119.2,65.2 119.5,59.0 119.4,57.2 119.7,51.0 119.7,49.2 119.9,43.0" fill="#04140c" opacity="0.28"/>
<polygon points="138.0,69.0 138.5,69.1 139.6,74.6 139.4,76.2 140.9,81.7 140.1,83.3 142.9,88.8 141.3,90.4 143.2,95.9 142.3,97.5 144.5,103.0 142.9,104.6 145.3,110.0 143.6,111.7 147.2,117.1 144.4,118.8 148.4,124.2 144.6,125.9 147.2,131.3 143.6,132.9 149.3,138.4 145.2,140.0 148.6,145.5 144.1,147.1 141.0,148.0 135.0,148.0 131.0,147.1 128.8,145.5 132.1,140.0 128.4,138.4 130.8,132.9 126.9,131.3 132.0,125.9 127.7,124.2 132.9,118.8 130.2,117.1 132.4,111.7 131.1,110.0 133.8,104.6 131.8,103.0 134.2,97.5 133.1,95.9 135.3,90.4 133.2,88.8 135.5,83.3 134.5,81.7 136.3,76.2 136.4,74.6 137.6,69.1" fill="#236c34"/>
<polygon points="138.0,72.0 139.1,69.1 139.7,74.6 139.6,76.2 140.4,81.7 140.0,83.3 141.5,88.8 140.6,90.4 141.6,95.9 141.2,97.5 142.4,103.0 141.5,104.6 142.8,110.0 141.9,111.7 143.9,117.1 142.3,118.8 144.5,124.2 142.4,125.9 143.9,131.3 141.9,132.9 145.0,138.4 142.8,140.0 144.6,145.5 142.2,147.1 140.0,148.0 137.5,148.0 137.2,147.1 136.9,145.5 137.3,140.0 136.9,138.4 137.1,132.9 136.7,131.3 137.3,125.9 136.8,124.2 137.4,118.8 137.1,117.1 137.3,111.7 137.2,110.0 137.5,104.6 137.3,103.0 137.5,97.5 137.4,95.9 137.7,90.4 137.4,88.8 137.7,83.3 137.6,81.7 137.8,76.2 137.8,74.6 138.0,69.1" fill="#04140c" opacity="0.28"/>
<polygon points="84.0,57.0 84.4,57.2 85.4,62.3 85.3,63.8 86.8,69.0 85.8,70.5 87.7,75.7 86.6,77.2 88.7,82.3 87.2,83.8 88.9,89.0 87.4,90.5 90.0,95.7 88.2,97.2 91.2,102.3 88.5,103.8 92.1,109.0 89.0,110.5 92.3,115.7 90.0,117.2 92.8,122.3 89.4,123.8 93.7,129.0 90.3,130.5 94.3,135.7 89.1,137.2 86.7,138.0 81.3,138.0 78.0,137.2 74.5,135.7 78.9,130.5 75.1,129.0 79.0,123.8 74.8,122.3 77.9,117.2 76.0,115.7 79.1,110.5 75.2,109.0 79.2,103.8 76.6,102.3 79.7,97.2 77.2,95.7 80.3,90.5 78.8,89.0 80.6,83.8 79.0,82.3 81.4,77.2 80.0,75.7 81.7,70.5 81.2,69.0 82.8,63.8 82.5,62.3 83.6,57.2" fill="#256f36"/>
<polygon points="84.0,60.0 85.0,57.2 85.5,62.3 85.4,63.8 86.2,69.0 85.7,70.5 86.8,75.7 86.2,77.2 87.3,82.3 86.5,83.8 87.4,89.0 86.6,90.5 88.0,95.7 87.0,97.2 88.7,102.3 87.2,103.8 89.2,109.0 87.5,110.5 89.3,115.7 88.0,117.2 89.5,122.3 87.7,123.8 90.0,129.0 88.2,130.5 90.4,135.7 87.6,137.2 85.8,138.0 83.5,138.0 83.3,137.2 82.9,135.7 83.4,130.5 82.9,129.0 83.4,123.8 82.9,122.3 83.3,117.2 83.0,115.7 83.4,110.5 82.9,109.0 83.4,103.8 83.1,102.3 83.5,97.2 83.2,95.7 83.6,90.5 83.4,89.0 83.6,83.8 83.4,82.3 83.7,77.2 83.5,75.7 83.7,70.5 83.7,69.0 83.9,63.8 83.8,62.3 84.0,57.2" fill="#04140c" opacity="0.28"/>
<polygon points="108.0,81.0 108.5,81.2 109.9,86.5 109.7,88.2 111.5,93.5 110.2,95.2 112.3,100.5 111.8,102.2 113.7,107.5 112.1,109.2 115.3,114.5 113.1,116.2 115.8,121.5 112.9,123.2 118.1,128.5 114.5,130.2 117.4,135.5 114.1,137.2 117.1,142.5 114.5,144.2 117.4,149.5 115.2,151.2 111.0,152.0 105.0,152.0 101.8,151.2 96.5,149.5 101.2,144.2 97.6,142.5 102.4,137.2 97.3,135.5 101.6,130.2 98.2,128.5 101.8,123.2 99.5,121.5 103.1,116.2 101.6,114.5 103.6,109.2 102.5,107.5 104.6,102.2 103.0,100.5 105.8,95.2 104.7,93.5 106.3,88.2 106.3,86.5 107.6,81.2" fill="#2b7c3a"/>
<polygon points="108.0,84.0 109.1,81.2 109.9,86.5 109.7,88.2 110.7,93.5 110.0,95.2 111.2,100.5 110.9,102.2 111.9,107.5 111.0,109.2 112.8,114.5 111.6,116.2 113.1,121.5 111.5,123.2 114.3,128.5 112.4,130.2 114.0,135.5 112.2,137.2 113.8,142.5 112.4,144.2 113.9,149.5 112.7,151.2 110.0,152.0 107.5,152.0 107.3,151.2 106.6,149.5 107.2,144.2 106.8,142.5 107.3,137.2 106.7,135.5 107.2,130.2 106.8,128.5 107.3,123.2 107.0,121.5 107.4,116.2 107.2,114.5 107.5,109.2 107.3,107.5 107.6,102.2 107.4,100.5 107.7,95.2 107.6,93.5 107.8,88.2 107.8,86.5 108.0,81.2" fill="#04140c" opacity="0.28"/>
<polygon points="72.0,83.0 72.3,83.2 73.7,88.5 73.6,90.2 75.1,95.5 74.5,97.2 76.8,102.5 75.3,104.2 77.1,109.5 75.9,111.2 78.0,116.5 76.4,118.2 79.4,123.5 77.7,125.2 80.2,130.5 77.6,132.2 79.6,137.5 76.8,139.2 74.4,140.0 69.6,140.0 67.4,139.2 64.2,137.5 67.3,132.2 63.4,130.5 66.2,125.2 63.8,123.5 67.9,118.2 64.9,116.5 67.8,111.2 65.8,109.5 69.2,104.2 68.0,102.5 69.4,97.2 69.3,95.5 70.4,90.2 70.3,88.5 71.7,83.2" fill="#2a7a3a"/>
<polygon points="72.0,86.0 72.8,83.2 73.6,88.5 73.5,90.2 74.4,95.5 74.0,97.2 75.3,102.5 74.4,104.2 75.4,109.5 74.8,111.2 75.9,116.5 75.1,118.2 76.7,123.5 75.8,125.2 77.2,130.5 75.7,132.2 76.8,137.5 75.3,139.2 73.6,140.0 71.6,140.0 71.4,139.2 71.1,137.5 71.4,132.2 71.0,130.5 71.3,125.2 71.0,123.5 71.5,118.2 71.1,116.5 71.5,111.2 71.3,109.5 71.7,104.2 71.5,102.5 71.7,97.2 71.7,95.5 71.8,90.2 71.8,88.5 72.0,83.2" fill="#04140c" opacity="0.28"/>
<polygon points="42.0,91.0 42.3,91.2 43.3,95.9 43.1,97.2 44.6,101.9 44.1,103.2 45.7,107.9 44.3,109.2 46.3,113.9 44.9,115.2 47.5,119.9 45.3,121.2 47.5,125.9 46.2,127.2 48.8,131.9 46.7,133.2 49.8,137.9 46.0,139.2 49.2,143.9 46.1,145.2 44.1,146.0 39.9,146.0 37.8,145.2 35.5,143.9 37.5,139.2 34.4,137.9 37.2,133.2 35.3,131.9 37.9,127.2 35.8,125.9 38.4,121.2 36.1,119.9 39.0,115.2 37.1,113.9 39.2,109.2 38.4,107.9 40.0,103.2 39.4,101.9 40.7,97.2 40.8,95.9 41.7,91.2" fill="#2a7a3a"/>
<polygon points="42.0,94.0 42.7,91.2 43.3,95.9 43.2,97.2 44.0,101.9 43.7,103.2 44.6,107.9 43.8,109.2 44.9,113.9 44.2,115.2 45.6,119.9 44.4,121.2 45.6,125.9 44.9,127.2 46.3,131.9 45.2,133.2 46.9,137.9 44.8,139.2 46.5,143.9 44.8,145.2 43.4,146.0 41.6,146.0 41.5,145.2 41.2,143.9 41.5,139.2 41.1,137.9 41.4,133.2 41.2,131.9 41.5,127.2 41.3,125.9 41.6,121.2 41.3,119.9 41.6,115.2 41.4,113.9 41.7,109.2 41.6,107.9 41.8,103.2 41.7,101.9 41.8,97.2 41.9,95.9 42.0,91.2" fill="#04140c" opacity="0.28"/>
<polygon points="24.0,103.0 24.3,103.2 25.5,107.9 25.4,109.2 26.9,113.9 25.9,115.2 28.3,119.9 26.6,121.2 29.7,125.9 27.4,127.2 29.5,131.9 27.6,133.2 29.8,137.9 27.6,139.2 25.8,140.0 22.2,140.0 20.1,139.2 17.6,137.9 20.4,133.2 18.3,131.9 20.6,127.2 19.3,125.9 21.2,121.2 19.8,119.9 21.8,115.2 21.5,113.9 22.7,109.2 22.4,107.9 23.7,103.2" fill="#2d7f3c"/>
<polygon points="24.0,106.0 24.6,103.2 25.3,107.9 25.2,109.2 26.0,113.9 25.5,115.2 26.8,119.9 25.9,121.2 27.6,125.9 26.4,127.2 27.5,131.9 26.5,133.2 27.7,137.9 26.4,139.2 25.2,140.0 23.7,140.0 23.5,139.2 23.2,137.9 23.6,133.2 23.3,131.9 23.6,127.2 23.4,125.9 23.7,121.2 23.5,119.9 23.7,115.2 23.7,113.9 23.8,109.2 23.8,107.9 24.0,103.2" fill="#04140c" opacity="0.28"/>
<polygon points="152.0,87.0 152.4,87.2 153.8,92.4 153.5,93.9 154.8,99.1 154.2,100.6 155.9,105.8 154.8,107.4 158.0,112.6 155.9,114.1 158.0,119.3 156.5,120.9 160.4,126.0 156.4,127.6 160.9,132.8 157.8,134.3 160.4,139.5 158.4,141.1 161.3,146.3 158.5,147.8 161.6,153.0 154.7,152.0 149.3,152.0 143.7,153.0 146.3,147.8 143.2,146.3 146.7,141.1 143.8,139.5 145.5,134.3 143.5,132.8 147.0,127.6 144.0,126.0 147.2,120.9 145.9,119.3 148.7,114.1 147.0,112.6 148.9,107.4 147.3,105.8 149.6,100.6 148.9,99.1 150.3,93.9 150.5,92.4 151.6,87.2" fill="#2f8540"/>
<polygon points="152.0,90.0 152.9,87.2 153.7,92.4 153.5,93.9 154.3,99.1 153.9,100.6 154.9,105.8 154.3,107.4 156.0,112.6 154.9,114.1 156.0,119.3 155.2,120.9 157.4,126.0 155.2,127.6 157.6,132.8 155.9,134.3 157.3,139.5 156.2,141.1 157.8,146.3 156.3,147.8 158.0,153.0 153.8,152.0 151.6,152.0 151.0,153.0 151.3,147.8 150.9,146.3 151.4,141.1 151.0,139.5 151.2,134.3 151.0,132.8 151.4,127.6 151.0,126.0 151.4,120.9 151.3,119.3 151.6,114.1 151.4,112.6 151.6,107.4 151.4,105.8 151.7,100.6 151.6,99.1 151.8,93.9 151.8,92.4 152.0,87.2" fill="#04140c" opacity="0.28"/>
<polygon points="60.0,95.0 60.3,95.2 61.5,100.2 61.6,101.8 62.6,106.8 61.9,108.3 63.8,113.4 63.1,114.9 65.6,120.0 63.9,121.5 66.4,126.5 64.2,128.1 67.0,133.1 64.6,134.6 67.6,139.7 64.2,141.2 62.1,142.0 57.9,142.0 55.9,141.2 52.8,139.7 56.1,134.6 53.5,133.1 55.5,128.1 53.7,126.5 56.4,121.5 54.1,120.0 57.1,114.9 55.5,113.4 57.8,108.3 57.3,106.8 58.8,101.8 58.5,100.2 59.7,95.2" fill="#26733a"/>
<polygon points="60.0,98.0 60.8,95.2 61.4,100.2 61.4,101.8 62.0,106.8 61.6,108.3 62.6,113.4 62.3,114.9 63.6,120.0 62.7,121.5 64.1,126.5 62.9,128.1 64.4,133.1 63.1,134.6 64.8,139.7 62.9,141.2 61.4,142.0 59.6,142.0 59.5,141.2 59.1,139.7 59.5,134.6 59.2,133.1 59.5,128.1 59.2,126.5 59.6,121.5 59.3,120.0 59.6,114.9 59.5,113.4 59.7,108.3 59.7,106.8 59.9,101.8 59.8,100.2 60.0,95.2" fill="#04140c" opacity="0.28"/>
<polygon points="4.0,133.0 40.0,131.0 70.0,134.0 60.0,137.0 20.0,137.0" fill="#c9d1c0" opacity="0.8"/>
<polygon points="0.0,158.0 10.0,157.0 20.0,156.0 30.0,155.0 40.0,154.0 50.0,153.0 60.0,152.0 70.0,152.4 80.0,152.8 90.0,153.2 100.0,153.6 110.0,154.0 120.0,155.2 130.0,156.4 140.0,157.6 150.0,158.8 160.0,160.0 170.0,162.0 180.0,164.0 190.0,166.0 200.0,168.0 210.0,169.6 220.0,171.2 230.0,172.8 240.0,174.4 250.0,176.0 260.0,176.2 270.0,176.5 280.0,176.8 290.0,177.0 300.0,177.2 310.0,177.5 320.0,177.8 330.0,178.0 340.0,177.6 350.0,177.2 360.0,176.8 370.0,176.4 380.0,176.0 390.0,176.0 400.0,176.0 410.0,176.0 420.0,176.0 430.0,176.0 440.0,176.0 450.0,176.0 460.0,176.0 470.0,176.0 480.0,176.0 490.0,176.0 498.0,212.0 0.0,212.0" fill="#3a9a30"/>
<ellipse cx="170.6" cy="196.9" rx="4.2" ry="3.0" fill="#38962e"/>
<ellipse cx="224.5" cy="209.5" rx="4.9" ry="4.0" fill="#4aaa38"/>
<ellipse cx="66.0" cy="203.7" rx="3.6" ry="2.9" fill="#4aaa38"/>
<ellipse cx="332.9" cy="192.7" rx="8.1" ry="4.1" fill="#44a234"/>
<ellipse cx="285.2" cy="182.0" rx="3.5" ry="2.4" fill="#6cc246"/>
<ellipse cx="111.9" cy="186.5" rx="8.8" ry="5.1" fill="#44a234"/>
<ellipse cx="338.6" cy="200.1" rx="5.6" ry="3.6" fill="#3a9a30"/>
<ellipse cx="240.7" cy="183.1" rx="6.4" ry="4.9" fill="#3a9a30"/>
<ellipse cx="165.0" cy="204.8" rx="6.4" ry="5.1" fill="#3a9a30"/>
<ellipse cx="202.9" cy="168.7" rx="8.4" ry="4.7" fill="#38962e"/>
<ellipse cx="176.3" cy="208.7" rx="4.6" ry="3.4" fill="#2c8428"/>
<ellipse cx="344.9" cy="210.8" rx="5.1" ry="4.2" fill="#2c8428"/>
<ellipse cx="212.6" cy="193.1" rx="4.2" ry="3.2" fill="#3a9a30"/>
<ellipse cx="157.0" cy="198.4" rx="5.5" ry="3.3" fill="#38962e"/>
<ellipse cx="219.2" cy="176.3" rx="5.8" ry="2.9" fill="#2c8428"/>
<ellipse cx="328.8" cy="208.7" rx="7.3" ry="5.7" fill="#44a234"/>
<ellipse cx="77.4" cy="188.1" rx="4.4" ry="2.5" fill="#44a234"/>
<ellipse cx="328.4" cy="178.4" rx="7.3" ry="5.1" fill="#3a9a30"/>
<ellipse cx="280.1" cy="188.2" rx="7.2" ry="4.5" fill="#3a9a30"/>
<ellipse cx="157.3" cy="210.7" rx="5.0" ry="4.0" fill="#5cb840"/>
<ellipse cx="290.4" cy="193.7" rx="6.0" ry="4.7" fill="#4aaa38"/>
<ellipse cx="181.4" cy="202.6" rx="7.1" ry="3.8" fill="#6cc246"/>
<ellipse cx="221.3" cy="174.3" rx="7.2" ry="4.4" fill="#2c8428"/>
<ellipse cx="238.4" cy="208.6" rx="5.6" ry="3.3" fill="#44a234"/>
<ellipse cx="349.1" cy="181.9" rx="4.6" ry="3.5" fill="#44a234"/>
<ellipse cx="233.7" cy="185.8" rx="8.9" ry="4.6" fill="#44a234"/>
<ellipse cx="89.6" cy="192.1" rx="8.3" ry="6.9" fill="#38962e"/>
<ellipse cx="280.7" cy="191.2" rx="4.1" ry="2.6" fill="#6cc246"/>
<ellipse cx="273.2" cy="196.4" rx="3.8" ry="2.2" fill="#4aaa38"/>
<ellipse cx="269.4" cy="209.4" rx="7.8" ry="3.9" fill="#2c8428"/>
<ellipse cx="343.6" cy="184.4" rx="4.5" ry="2.5" fill="#3a9a30"/>
<ellipse cx="232.5" cy="192.8" rx="7.6" ry="5.2" fill="#44a234"/>
<ellipse cx="331.6" cy="209.2" rx="3.0" ry="2.4" fill="#4aaa38"/>
<ellipse cx="100.5" cy="196.5" rx="5.6" ry="4.4" fill="#246e22"/>
<ellipse cx="338.2" cy="197.0" rx="6.6" ry="5.5" fill="#44a234"/>
<ellipse cx="160.2" cy="174.0" rx="5.0" ry="3.4" fill="#38962e"/>
<ellipse cx="251.9" cy="209.2" rx="6.6" ry="5.0" fill="#44a234"/>
<ellipse cx="124.5" cy="160.1" rx="7.5" ry="4.8" fill="#4aaa38"/>
<ellipse cx="62.7" cy="158.7" rx="5.7" ry="3.5" fill="#44a234"/>
<ellipse cx="239.3" cy="201.8" rx="7.9" ry="5.1" fill="#3a9a30"/>
<ellipse cx="266.0" cy="184.4" rx="5.0" ry="2.6" fill="#6cc246"/>
<ellipse cx="146.4" cy="195.8" rx="4.3" ry="2.1" fill="#246e22"/>
<ellipse cx="285.1" cy="188.1" rx="9.0" ry="6.7" fill="#44a234"/>
<ellipse cx="248.2" cy="201.2" rx="8.7" ry="5.8" fill="#2c8428"/>
<ellipse cx="186.0" cy="177.8" rx="5.3" ry="3.6" fill="#246e22"/>
<ellipse cx="89.5" cy="197.1" rx="6.4" ry="5.1" fill="#4aaa38"/>
<ellipse cx="175.0" cy="204.2" rx="3.1" ry="1.7" fill="#38962e"/>
<ellipse cx="132.5" cy="171.4" rx="4.0" ry="3.3" fill="#3a9a30"/>
<ellipse cx="61.0" cy="154.2" rx="8.8" ry="7.0" fill="#4aaa38"/>
<ellipse cx="176.0" cy="189.7" rx="5.0" ry="2.9" fill="#2c8428"/>
<ellipse cx="257.7" cy="208.0" rx="3.7" ry="2.9" fill="#44a234"/>
<ellipse cx="137.7" cy="179.6" rx="8.9" ry="6.5" fill="#6cc246"/>
<ellipse cx="76.0" cy="165.6" rx="6.8" ry="4.1" fill="#38962e"/>
<ellipse cx="268.2" cy="188.3" rx="6.6" ry="5.0" fill="#6cc246"/>
<ellipse cx="147.0" cy="194.6" rx="3.1" ry="1.7" fill="#3a9a30"/>
<ellipse cx="170.7" cy="199.8" rx="7.5" ry="4.7" fill="#3a9a30"/>
<ellipse cx="104.8" cy="209.8" rx="6.0" ry="4.5" fill="#6cc246"/>
<ellipse cx="332.7" cy="186.7" rx="6.8" ry="5.3" fill="#246e22"/>
<ellipse cx="344.2" cy="197.1" rx="5.8" ry="2.9" fill="#5cb840"/>
<ellipse cx="259.5" cy="209.0" rx="3.9" ry="2.2" fill="#2c8428"/>
<ellipse cx="138.5" cy="187.7" rx="7.1" ry="4.8" fill="#246e22"/>
<ellipse cx="240.6" cy="177.5" rx="6.9" ry="4.6" fill="#246e22"/>
<ellipse cx="331.8" cy="189.6" rx="8.1" ry="4.6" fill="#38962e"/>
<ellipse cx="203.9" cy="175.6" rx="6.5" ry="4.8" fill="#44a234"/>
<ellipse cx="92.1" cy="180.0" rx="4.3" ry="2.6" fill="#246e22"/>
<ellipse cx="138.4" cy="207.3" rx="4.7" ry="2.8" fill="#38962e"/>
<ellipse cx="168.1" cy="208.4" rx="8.9" ry="4.8" fill="#5cb840"/>
<ellipse cx="169.7" cy="186.6" rx="8.0" ry="5.6" fill="#4aaa38"/>
<ellipse cx="256.6" cy="176.8" rx="5.6" ry="3.7" fill="#2c8428"/>
<ellipse cx="185.2" cy="181.8" rx="7.4" ry="6.1" fill="#4aaa38"/>
<ellipse cx="182.0" cy="194.4" rx="3.8" ry="2.7" fill="#38962e"/>
<ellipse cx="316.7" cy="182.3" rx="4.0" ry="3.2" fill="#38962e"/>
<ellipse cx="281.1" cy="179.1" rx="6.7" ry="3.3" fill="#246e22"/>
<ellipse cx="290.4" cy="188.0" rx="3.0" ry="2.3" fill="#246e22"/>
<ellipse cx="166.1" cy="177.6" rx="7.9" ry="6.5" fill="#44a234"/>
<ellipse cx="289.5" cy="183.8" rx="7.3" ry="5.1" fill="#3a9a30"/>
<ellipse cx="150.1" cy="196.6" rx="8.9" ry="5.8" fill="#4aaa38"/>
<ellipse cx="176.1" cy="183.4" rx="7.8" ry="6.5" fill="#44a234"/>
<ellipse cx="264.4" cy="205.0" rx="8.5" ry="7.0" fill="#6cc246"/>
<ellipse cx="112.3" cy="173.7" rx="4.9" ry="3.7" fill="#2c8428"/>
<ellipse cx="348.0" cy="187.6" rx="8.6" ry="4.3" fill="#44a234"/>
<ellipse cx="289.3" cy="177.3" rx="7.8" ry="4.7" fill="#4aaa38"/>
<ellipse cx="105.1" cy="186.3" rx="7.1" ry="5.4" fill="#2c8428"/>
<ellipse cx="293.1" cy="193.8" rx="5.9" ry="3.9" fill="#3a9a30"/>
<ellipse cx="157.1" cy="199.5" rx="5.3" ry="3.8" fill="#6cc246"/>
<ellipse cx="61.7" cy="193.0" rx="7.5" ry="3.9" fill="#44a234"/>
<ellipse cx="309.1" cy="207.4" rx="6.4" ry="4.8" fill="#246e22"/>
<ellipse cx="329.2" cy="180.1" rx="8.3" ry="5.8" fill="#44a234"/>
<ellipse cx="269.7" cy="201.3" rx="7.5" ry="4.8" fill="#4aaa38"/>
<ellipse cx="116.5" cy="185.4" rx="3.9" ry="3.1" fill="#3a9a30"/>
<ellipse cx="194.1" cy="209.9" rx="7.7" ry="6.0" fill="#6cc246"/>
<ellipse cx="344.4" cy="198.5" rx="8.9" ry="7.2" fill="#2c8428"/>
<ellipse cx="129.1" cy="158.6" rx="6.7" ry="5.1" fill="#44a234"/>
<ellipse cx="147.2" cy="194.1" rx="5.2" ry="4.0" fill="#3a9a30"/>
<ellipse cx="229.8" cy="201.2" rx="3.6" ry="2.1" fill="#246e22"/>
<ellipse cx="319.7" cy="195.2" rx="6.9" ry="5.4" fill="#6cc246"/>
<ellipse cx="201.4" cy="184.9" rx="5.7" ry="4.7" fill="#5cb840"/>
<ellipse cx="165.2" cy="182.0" rx="5.2" ry="3.2" fill="#6cc246"/>
<ellipse cx="119.3" cy="192.4" rx="4.1" ry="2.1" fill="#246e22"/>
<ellipse cx="332.7" cy="182.4" rx="7.9" ry="6.3" fill="#5cb840"/>
<ellipse cx="281.6" cy="181.0" rx="6.2" ry="4.1" fill="#2c8428"/>
<ellipse cx="343.6" cy="202.9" rx="7.2" ry="4.2" fill="#38962e"/>
<ellipse cx="217.1" cy="183.8" rx="4.6" ry="3.4" fill="#44a234"/>
<ellipse cx="333.4" cy="184.2" rx="6.9" ry="3.8" fill="#4aaa38"/>
<ellipse cx="219.9" cy="194.3" rx="7.1" ry="4.9" fill="#6cc246"/>
<ellipse cx="62.5" cy="209.1" rx="6.7" ry="4.2" fill="#5cb840"/>
<ellipse cx="319.7" cy="197.6" rx="3.1" ry="2.2" fill="#6cc246"/>
<ellipse cx="348.6" cy="203.9" rx="8.1" ry="5.3" fill="#5cb840"/>
<ellipse cx="150.1" cy="171.9" rx="3.2" ry="1.7" fill="#246e22"/>
<ellipse cx="151.9" cy="204.0" rx="7.1" ry="4.6" fill="#4aaa38"/>
<ellipse cx="168.2" cy="193.2" rx="5.1" ry="3.7" fill="#2c8428"/>
<ellipse cx="144.5" cy="180.6" rx="6.0" ry="3.2" fill="#38962e"/>
<ellipse cx="152.8" cy="176.5" rx="4.6" ry="2.5" fill="#4aaa38"/>
<ellipse cx="106.5" cy="177.3" rx="3.3" ry="1.7" fill="#44a234"/>
<ellipse cx="314.5" cy="178.8" rx="8.6" ry="7.2" fill="#3a9a30"/>
<ellipse cx="229.4" cy="192.3" rx="6.9" ry="4.6" fill="#6cc246"/>
<ellipse cx="329.3" cy="204.2" rx="8.4" ry="5.7" fill="#44a234"/>
<ellipse cx="159.9" cy="182.1" rx="5.4" ry="3.0" fill="#44a234"/>
<ellipse cx="325.5" cy="201.9" rx="6.9" ry="3.9" fill="#4aaa38"/>
<ellipse cx="227.7" cy="202.3" rx="3.7" ry="2.4" fill="#5cb840"/>
<ellipse cx="129.4" cy="191.0" rx="8.1" ry="5.3" fill="#246e22"/>
<ellipse cx="329.5" cy="209.6" rx="8.1" ry="6.6" fill="#246e22"/>
<ellipse cx="174.2" cy="184.9" rx="4.2" ry="2.7" fill="#3a9a30"/>
<ellipse cx="86.5" cy="175.9" rx="4.2" ry="3.3" fill="#246e22"/>
<ellipse cx="212.0" cy="193.7" rx="4.1" ry="2.9" fill="#6cc246"/>
<ellipse cx="292.3" cy="201.5" rx="7.5" ry="4.3" fill="#246e22"/>
<ellipse cx="142.4" cy="197.0" rx="8.8" ry="7.3" fill="#5cb840"/>
<ellipse cx="203.1" cy="183.9" rx="3.5" ry="2.4" fill="#4aaa38"/>
<ellipse cx="94.1" cy="159.1" rx="7.1" ry="4.7" fill="#3a9a30"/>
<ellipse cx="179.3" cy="210.2" rx="8.2" ry="5.0" fill="#4aaa38"/>
<ellipse cx="190.6" cy="202.8" rx="7.2" ry="5.6" fill="#246e22"/>
<ellipse cx="189.9" cy="168.3" rx="7.0" ry="5.5" fill="#5cb840"/>
<ellipse cx="295.5" cy="192.3" rx="4.0" ry="3.1" fill="#4aaa38"/>
<ellipse cx="274.6" cy="198.0" rx="8.5" ry="4.3" fill="#44a234"/>
<ellipse cx="326.6" cy="200.6" rx="5.3" ry="4.0" fill="#4aaa38"/>
<ellipse cx="99.5" cy="163.6" rx="6.2" ry="4.1" fill="#3a9a30"/>
<ellipse cx="206.8" cy="205.1" rx="7.5" ry="4.7" fill="#38962e"/>
<ellipse cx="61.4" cy="202.0" rx="8.7" ry="7.3" fill="#2c8428"/>
<ellipse cx="93.4" cy="183.0" rx="9.0" ry="6.3" fill="#4aaa38"/>
<ellipse cx="100.7" cy="201.6" rx="7.1" ry="5.8" fill="#2c8428"/>
<ellipse cx="234.0" cy="194.2" rx="3.7" ry="2.2" fill="#6cc246"/>
<ellipse cx="69.6" cy="181.1" rx="3.8" ry="1.9" fill="#4aaa38"/>
<ellipse cx="69.1" cy="164.3" rx="3.8" ry="3.1" fill="#246e22"/>
<ellipse cx="120.8" cy="191.9" rx="4.4" ry="2.3" fill="#4aaa38"/>
<ellipse cx="275.7" cy="186.4" rx="7.5" ry="4.1" fill="#246e22"/>
<ellipse cx="232.9" cy="197.0" rx="4.8" ry="3.5" fill="#2c8428"/>
<ellipse cx="232.7" cy="183.9" rx="8.0" ry="5.1" fill="#44a234"/>
<ellipse cx="221.8" cy="208.8" rx="8.6" ry="5.3" fill="#4aaa38"/>
<ellipse cx="271.1" cy="199.1" rx="3.1" ry="2.3" fill="#2c8428"/>
<ellipse cx="116.2" cy="160.1" rx="3.4" ry="2.3" fill="#4aaa38"/>
<ellipse cx="151.3" cy="178.8" rx="4.3" ry="3.2" fill="#6cc246"/>
<ellipse cx="66.0" cy="205.9" rx="8.5" ry="5.9" fill="#44a234"/>
<ellipse cx="318.7" cy="188.5" rx="3.1" ry="2.3" fill="#38962e"/>
<ellipse cx="247.7" cy="204.0" rx="7.9" ry="5.6" fill="#246e22"/>
<ellipse cx="96.3" cy="207.9" rx="7.0" ry="3.7" fill="#2c8428"/>
<ellipse cx="310.1" cy="180.6" rx="8.4" ry="5.9" fill="#6cc246"/>
<ellipse cx="200.9" cy="189.7" rx="8.6" ry="5.2" fill="#3a9a30"/>
<ellipse cx="225.0" cy="208.9" rx="8.3" ry="6.2" fill="#38962e"/>
<ellipse cx="327.4" cy="179.0" rx="5.6" ry="3.0" fill="#44a234"/>
<ellipse cx="106.1" cy="154.6" rx="5.4" ry="4.2" fill="#4aaa38"/>
<ellipse cx="189.5" cy="190.1" rx="8.9" ry="7.3" fill="#4aaa38"/>
<ellipse cx="223.8" cy="201.6" rx="7.4" ry="5.5" fill="#44a234"/>
<ellipse cx="116.9" cy="197.2" rx="7.1" ry="3.9" fill="#246e22"/>
<ellipse cx="197.2" cy="203.4" rx="8.6" ry="6.3" fill="#4aaa38"/>
<ellipse cx="206.9" cy="186.2" rx="3.8" ry="2.0" fill="#3a9a30"/>
<ellipse cx="336.3" cy="196.0" rx="6.3" ry="3.8" fill="#38962e"/>
<ellipse cx="121.8" cy="207.4" rx="3.6" ry="2.6" fill="#5cb840"/>
<ellipse cx="117.7" cy="190.1" rx="6.3" ry="4.4" fill="#2c8428"/>
<ellipse cx="239.7" cy="188.9" rx="8.2" ry="6.0" fill="#44a234"/>
<ellipse cx="172.9" cy="204.3" rx="6.5" ry="4.4" fill="#6cc246"/>
<ellipse cx="346.8" cy="208.6" rx="6.7" ry="5.1" fill="#246e22"/>
<ellipse cx="176.8" cy="186.8" rx="5.5" ry="4.4" fill="#6cc246"/>
<ellipse cx="280.3" cy="183.5" rx="4.9" ry="2.5" fill="#44a234"/>
<ellipse cx="160.8" cy="211.0" rx="6.1" ry="3.4" fill="#44a234"/>
<ellipse cx="349.5" cy="196.4" rx="3.3" ry="1.8" fill="#3a9a30"/>
<ellipse cx="97.8" cy="205.2" rx="3.3" ry="1.7" fill="#246e22"/>
<ellipse cx="177.9" cy="189.9" rx="6.6" ry="3.5" fill="#44a234"/>
<ellipse cx="81.2" cy="177.1" rx="5.0" ry="3.1" fill="#4aaa38"/>
<ellipse cx="112.4" cy="180.5" rx="8.5" ry="4.7" fill="#44a234"/>
<ellipse cx="341.5" cy="208.3" rx="7.2" ry="4.5" fill="#3a9a30"/>
<ellipse cx="199.4" cy="208.4" rx="9.9" ry="5.6" fill="#80d248"/>
<ellipse cx="230.7" cy="204.1" rx="8.3" ry="3.8" fill="#6cc640"/>
<ellipse cx="302.0" cy="208.9" rx="8.1" ry="3.2" fill="#58b83a"/>
<ellipse cx="331.8" cy="193.6" rx="8.1" ry="4.5" fill="#80d248"/>
<ellipse cx="297.7" cy="205.5" rx="8.0" ry="4.5" fill="#6cc640"/>
<ellipse cx="335.6" cy="208.3" rx="8.7" ry="3.8" fill="#80d248"/>
<ellipse cx="232.8" cy="190.5" rx="9.5" ry="3.6" fill="#6cc640"/>
<ellipse cx="214.7" cy="196.3" rx="4.9" ry="1.9" fill="#80d248"/>
<ellipse cx="182.2" cy="203.8" rx="9.0" ry="4.3" fill="#58b83a"/>
<ellipse cx="307.6" cy="200.3" rx="8.1" ry="3.0" fill="#80d248"/>
<ellipse cx="330.6" cy="205.8" rx="7.3" ry="3.2" fill="#6cc640"/>
<ellipse cx="275.4" cy="195.8" rx="8.0" ry="4.6" fill="#6cc640"/>
<ellipse cx="334.4" cy="210.2" rx="6.4" ry="3.8" fill="#80d248"/>
<ellipse cx="224.5" cy="191.5" rx="7.1" ry="4.0" fill="#6cc640"/>
<ellipse cx="220.4" cy="199.0" rx="4.7" ry="1.6" fill="#58b83a"/>
<ellipse cx="241.1" cy="195.3" rx="8.3" ry="3.8" fill="#58b83a"/>
<ellipse cx="312.4" cy="201.0" rx="9.7" ry="4.2" fill="#80d248"/>
<ellipse cx="210.9" cy="205.2" rx="6.4" ry="2.6" fill="#6cc640"/>
<ellipse cx="216.5" cy="187.2" rx="9.9" ry="3.8" fill="#58b83a"/>
<ellipse cx="226.0" cy="207.6" rx="8.5" ry="3.5" fill="#80d248"/>
<ellipse cx="207.6" cy="197.9" rx="5.1" ry="2.6" fill="#80d248"/>
<ellipse cx="260.6" cy="192.1" rx="6.6" ry="3.5" fill="#58b83a"/>
<ellipse cx="209.3" cy="185.1" rx="9.5" ry="3.4" fill="#80d248"/>
<ellipse cx="255.0" cy="187.0" rx="4.7" ry="2.5" fill="#6cc640"/>
<ellipse cx="190.5" cy="207.7" rx="4.6" ry="2.2" fill="#58b83a"/>
<ellipse cx="211.1" cy="205.1" rx="5.2" ry="2.8" fill="#6cc640"/>
<ellipse cx="161.9" cy="169.7" rx="5.0" ry="2.6" fill="#1b5e1e"/>
<ellipse cx="181.3" cy="183.4" rx="4.1" ry="2.0" fill="#1b5e1e"/>
<ellipse cx="121.8" cy="178.4" rx="4.1" ry="2.3" fill="#1b5e1e"/>
<ellipse cx="211.9" cy="191.8" rx="4.5" ry="2.4" fill="#1b5e1e"/>
<ellipse cx="260.3" cy="190.8" rx="2.6" ry="1.1" fill="#0f4214"/>
<ellipse cx="183.9" cy="190.1" rx="3.3" ry="1.7" fill="#1b5e1e"/>
<ellipse cx="290.3" cy="190.2" rx="4.2" ry="2.0" fill="#1b5e1e"/>
<ellipse cx="303.2" cy="209.4" rx="2.1" ry="0.9" fill="#1b5e1e"/>
<ellipse cx="309.2" cy="205.7" rx="3.6" ry="2.1" fill="#145018"/>
<ellipse cx="159.7" cy="191.5" rx="3.3" ry="1.2" fill="#145018"/>
<ellipse cx="118.9" cy="190.0" rx="2.8" ry="1.3" fill="#1b5e1e"/>
<ellipse cx="300.3" cy="195.5" rx="3.3" ry="1.9" fill="#145018"/>
<ellipse cx="83.3" cy="181.0" rx="4.8" ry="1.7" fill="#145018"/>
<ellipse cx="174.8" cy="189.6" rx="4.7" ry="1.8" fill="#0f4214"/>
<ellipse cx="104.2" cy="201.6" rx="3.6" ry="1.3" fill="#1b5e1e"/>
<ellipse cx="310.6" cy="204.9" rx="3.4" ry="1.3" fill="#1b5e1e"/>
<ellipse cx="137.0" cy="176.8" rx="4.3" ry="2.3" fill="#145018"/>
<ellipse cx="90.5" cy="192.8" rx="4.1" ry="1.5" fill="#1b5e1e"/>
<ellipse cx="253.8" cy="191.5" rx="2.1" ry="0.9" fill="#0f4214"/>
<ellipse cx="223.7" cy="190.8" rx="3.0" ry="1.8" fill="#0f4214"/>
<ellipse cx="306.0" cy="195.6" rx="2.5" ry="1.2" fill="#0f4214"/>
<ellipse cx="305.4" cy="193.5" rx="4.0" ry="1.6" fill="#0f4214"/>
<ellipse cx="195.8" cy="210.8" rx="4.3" ry="2.1" fill="#145018"/>
<ellipse cx="227.3" cy="189.5" rx="3.7" ry="2.1" fill="#0f4214"/>
<ellipse cx="137.9" cy="174.0" rx="3.2" ry="1.2" fill="#145018"/>
<ellipse cx="296.3" cy="201.0" rx="3.9" ry="1.7" fill="#145018"/>
<ellipse cx="217.1" cy="187.7" rx="5.0" ry="2.7" fill="#0f4214"/>
<ellipse cx="111.7" cy="199.5" rx="2.1" ry="0.9" fill="#145018"/>
<ellipse cx="315.5" cy="202.0" rx="3.3" ry="1.6" fill="#145018"/>
<ellipse cx="175.8" cy="177.8" rx="3.0" ry="1.5" fill="#1b5e1e"/>
<ellipse cx="289.0" cy="183.6" rx="3.2" ry="1.3" fill="#0f4214"/>
<ellipse cx="240.5" cy="189.5" rx="4.0" ry="1.8" fill="#145018"/>
<ellipse cx="109.9" cy="160.7" rx="4.5" ry="2.1" fill="#1b5e1e"/>
<ellipse cx="156.0" cy="207.7" rx="4.1" ry="2.0" fill="#145018"/>
<ellipse cx="207.4" cy="200.4" rx="2.2" ry="1.0" fill="#0f4214"/>
<ellipse cx="247.9" cy="200.4" rx="5.0" ry="1.8" fill="#1b5e1e"/>
<ellipse cx="273.3" cy="195.0" rx="2.7" ry="1.5" fill="#0f4214"/>
<ellipse cx="289.9" cy="190.7" rx="4.2" ry="2.3" fill="#145018"/>
<ellipse cx="253.4" cy="183.6" rx="3.4" ry="2.0" fill="#0f4214"/>
<ellipse cx="190.6" cy="204.1" rx="3.6" ry="1.6" fill="#1b5e1e"/>
<ellipse cx="281.0" cy="199.6" rx="4.7" ry="1.7" fill="#1b5e1e"/>
<ellipse cx="250.0" cy="182.3" rx="3.2" ry="1.7" fill="#145018"/>
<ellipse cx="297.3" cy="196.0" rx="4.5" ry="2.0" fill="#145018"/>
<ellipse cx="84.4" cy="195.6" rx="2.5" ry="1.3" fill="#0f4214"/>
<ellipse cx="155.3" cy="194.2" rx="3.5" ry="1.3" fill="#1b5e1e"/>
<ellipse cx="306.9" cy="188.5" rx="4.2" ry="1.8" fill="#0f4214"/>
<ellipse cx="104.5" cy="171.5" rx="4.5" ry="2.5" fill="#145018"/>
<ellipse cx="201.4" cy="200.5" rx="2.5" ry="1.4" fill="#1b5e1e"/>
<ellipse cx="266.6" cy="188.7" rx="2.8" ry="1.5" fill="#1b5e1e"/>
<ellipse cx="142.6" cy="184.6" rx="2.6" ry="1.4" fill="#0f4214"/>
<ellipse cx="280.7" cy="180.5" rx="2.7" ry="1.4" fill="#44a634"/>
<ellipse cx="83.6" cy="190.8" rx="3.6" ry="3.0" fill="#62c042"/>
<ellipse cx="250.0" cy="200.3" rx="3.5" ry="2.1" fill="#4eb038"/>
<ellipse cx="191.5" cy="196.1" rx="4.3" ry="3.1" fill="#4eb038"/>
<ellipse cx="192.0" cy="202.0" rx="3.1" ry="1.7" fill="#44a634"/>
<ellipse cx="319.9" cy="204.6" rx="3.3" ry="1.8" fill="#62c042"/>
<ellipse cx="110.4" cy="195.0" rx="4.8" ry="2.8" fill="#62c042"/>
<ellipse cx="341.4" cy="184.9" rx="2.9" ry="2.2" fill="#4eb038"/>
<ellipse cx="149.5" cy="201.9" rx="3.5" ry="2.2" fill="#4eb038"/>
<ellipse cx="153.5" cy="191.4" rx="3.1" ry="1.8" fill="#62c042"/>
<ellipse cx="67.5" cy="176.6" rx="4.2" ry="2.9" fill="#44a634"/>
<ellipse cx="346.4" cy="196.9" rx="2.8" ry="1.8" fill="#4eb038"/>
<ellipse cx="328.5" cy="190.3" rx="3.0" ry="2.5" fill="#44a634"/>
<ellipse cx="195.8" cy="203.5" rx="5.0" ry="3.5" fill="#62c042"/>
<ellipse cx="126.4" cy="196.2" rx="3.3" ry="2.1" fill="#4eb038"/>
<ellipse cx="146.1" cy="180.4" rx="4.9" ry="3.0" fill="#44a634"/>
<ellipse cx="70.0" cy="192.3" rx="2.4" ry="1.5" fill="#62c042"/>
<ellipse cx="301.0" cy="193.6" rx="4.2" ry="2.9" fill="#44a634"/>
<ellipse cx="311.5" cy="184.4" rx="2.9" ry="1.9" fill="#44a634"/>
<ellipse cx="64.2" cy="193.3" rx="3.6" ry="2.4" fill="#44a634"/>
<ellipse cx="66.0" cy="182.4" rx="3.7" ry="2.5" fill="#44a634"/>
<ellipse cx="312.0" cy="192.5" rx="4.9" ry="3.9" fill="#62c042"/>
<ellipse cx="182.0" cy="186.8" rx="3.1" ry="1.8" fill="#44a634"/>
<ellipse cx="268.8" cy="204.8" rx="4.2" ry="2.8" fill="#44a634"/>
<ellipse cx="215.8" cy="203.3" rx="2.7" ry="1.7" fill="#44a634"/>
<ellipse cx="250.4" cy="192.1" rx="4.2" ry="3.0" fill="#4eb038"/>
<ellipse cx="280.9" cy="184.9" rx="4.0" ry="3.2" fill="#62c042"/>
<ellipse cx="232.7" cy="198.3" rx="2.1" ry="1.6" fill="#44a634"/>
<ellipse cx="233.7" cy="184.6" rx="4.5" ry="2.5" fill="#44a634"/>
<ellipse cx="111.6" cy="159.6" rx="2.7" ry="1.9" fill="#62c042"/>
<ellipse cx="85.6" cy="169.8" rx="4.3" ry="3.1" fill="#4eb038"/>
<ellipse cx="102.3" cy="185.7" rx="3.9" ry="2.3" fill="#44a634"/>
<ellipse cx="129.4" cy="159.0" rx="3.7" ry="2.0" fill="#44a634"/>
<ellipse cx="253.9" cy="183.9" rx="4.2" ry="3.0" fill="#62c042"/>
<ellipse cx="90.1" cy="198.5" rx="3.7" ry="2.6" fill="#44a634"/>
<ellipse cx="340.0" cy="202.7" rx="3.3" ry="2.7" fill="#44a634"/>
<ellipse cx="159.9" cy="170.2" rx="2.7" ry="1.8" fill="#4eb038"/>
<ellipse cx="143.4" cy="161.3" rx="4.1" ry="2.6" fill="#4eb038"/>
<ellipse cx="178.3" cy="193.6" rx="2.8" ry="1.8" fill="#4eb038"/>
<ellipse cx="101.4" cy="160.7" rx="3.0" ry="2.3" fill="#62c042"/>
<ellipse cx="167.3" cy="185.9" rx="2.4" ry="1.5" fill="#44a634"/>
<ellipse cx="299.1" cy="200.3" rx="4.7" ry="2.7" fill="#4eb038"/>
<ellipse cx="125.5" cy="176.7" rx="4.2" ry="2.9" fill="#4eb038"/>
<ellipse cx="266.5" cy="184.3" rx="3.8" ry="2.4" fill="#4eb038"/>
<ellipse cx="245.0" cy="181.9" rx="4.0" ry="2.2" fill="#44a634"/>
<ellipse cx="186.7" cy="184.4" rx="2.6" ry="1.4" fill="#44a634"/>
<ellipse cx="192.6" cy="169.6" rx="2.1" ry="1.7" fill="#62c042"/>
<ellipse cx="107.3" cy="193.3" rx="3.3" ry="1.8" fill="#4eb038"/>
<ellipse cx="160.3" cy="172.6" rx="4.5" ry="3.0" fill="#4eb038"/>
<ellipse cx="69.0" cy="201.2" rx="4.1" ry="3.2" fill="#62c042"/>
<ellipse cx="275.1" cy="187.4" rx="2.5" ry="1.8" fill="#4eb038"/>
<ellipse cx="142.7" cy="200.5" rx="4.5" ry="3.7" fill="#4eb038"/>
<ellipse cx="310.9" cy="184.1" rx="4.3" ry="2.5" fill="#44a634"/>
<ellipse cx="66.0" cy="181.3" rx="3.7" ry="2.1" fill="#62c042"/>
<ellipse cx="291.9" cy="185.6" rx="2.2" ry="1.4" fill="#62c042"/>
<ellipse cx="181.8" cy="171.4" rx="3.7" ry="2.2" fill="#4eb038"/>
<ellipse cx="84.2" cy="188.3" rx="3.2" ry="2.1" fill="#44a634"/>
<ellipse cx="269.9" cy="202.8" rx="3.1" ry="2.1" fill="#4eb038"/>
<ellipse cx="338.0" cy="203.8" rx="2.1" ry="1.5" fill="#4eb038"/>
<ellipse cx="217.2" cy="174.1" rx="2.4" ry="1.5" fill="#4eb038"/>
<polygon points="0.0,192.0 14.0,188.0 36.0,183.0 62.0,176.0 68.0,168.0 62.0,160.0 58.0,154.0 72.0,154.0 82.0,160.0 90.0,165.0 100.0,172.0 96.0,178.0 84.0,186.0 78.0,196.0 82.0,203.0 84.0,212.0 0.0,212.0" fill="#bfceb0"/>
<polygon points="58.0,154.0 72.0,154.0 82.0,160.0 74.0,162.0 64.0,158.0" fill="#c9c2a4"/>
<polygon points="0.0,200.0 30.0,192.0 60.0,186.0 76.0,194.0 78.0,212.0 0.0,212.0" fill="#b4c4a8" opacity="0.8"/>
<ellipse cx="44.5" cy="172.9" rx="6.6" ry="3.9" fill="#2f8a34"/>
<ellipse cx="37.7" cy="182.2" rx="3.5" ry="2.8" fill="#2a7a30"/>
<ellipse cx="36.7" cy="184.1" rx="5.2" ry="3.3" fill="#55b840"/>
<ellipse cx="37.4" cy="159.7" rx="6.7" ry="4.3" fill="#2a7a30"/>
<ellipse cx="32.1" cy="188.1" rx="4.5" ry="2.2" fill="#66c24a"/>
<ellipse cx="38.3" cy="170.1" rx="6.2" ry="4.2" fill="#66c24a"/>
<ellipse cx="44.8" cy="162.5" rx="6.4" ry="4.4" fill="#55b840"/>
<ellipse cx="19.7" cy="174.3" rx="7.0" ry="5.6" fill="#66c24a"/>
<ellipse cx="3.5" cy="161.0" rx="5.4" ry="3.9" fill="#2a7a30"/>
<ellipse cx="11.1" cy="182.8" rx="5.9" ry="3.6" fill="#2f8a34"/>
<ellipse cx="40.0" cy="176.1" rx="6.8" ry="4.2" fill="#2a7a30"/>
<ellipse cx="42.9" cy="175.3" rx="4.1" ry="3.3" fill="#2f8a34"/>
<ellipse cx="29.2" cy="157.0" rx="4.8" ry="3.9" fill="#3fa23a"/>
<ellipse cx="22.6" cy="160.0" rx="5.4" ry="3.3" fill="#2a7a30"/>
<ellipse cx="3.3" cy="181.2" rx="3.5" ry="2.1" fill="#2f8a34"/>
<ellipse cx="53.8" cy="159.0" rx="3.9" ry="2.5" fill="#3fa23a"/>
<ellipse cx="19.2" cy="188.5" rx="3.4" ry="2.7" fill="#3fa23a"/>
<ellipse cx="56.5" cy="179.0" rx="4.8" ry="3.2" fill="#2f8a34"/>
<ellipse cx="21.8" cy="188.5" rx="6.6" ry="3.9" fill="#2a7a30"/>
<ellipse cx="56.9" cy="163.3" rx="4.6" ry="3.5" fill="#2a7a30"/>
<ellipse cx="21.2" cy="189.8" rx="4.4" ry="2.6" fill="#2f8a34"/>
<ellipse cx="17.0" cy="185.7" rx="4.0" ry="3.3" fill="#3fa23a"/>
<ellipse cx="35.4" cy="166.3" rx="3.0" ry="1.6" fill="#66c24a"/>
<ellipse cx="59.4" cy="188.7" rx="4.1" ry="3.4" fill="#66c24a"/>
<ellipse cx="32.3" cy="179.0" rx="4.2" ry="3.1" fill="#2f8a34"/>
<ellipse cx="17.7" cy="159.6" rx="3.7" ry="2.2" fill="#55b840"/>
<ellipse cx="59.2" cy="169.7" rx="6.7" ry="5.4" fill="#2f8a34"/>
<ellipse cx="33.7" cy="183.4" rx="5.5" ry="4.4" fill="#55b840"/>
<ellipse cx="34.6" cy="156.9" rx="4.9" ry="3.4" fill="#2a7a30"/>
<ellipse cx="29.3" cy="172.7" rx="4.8" ry="2.6" fill="#3fa23a"/>
<ellipse cx="57.8" cy="189.0" rx="4.5" ry="3.0" fill="#66c24a"/>
<ellipse cx="46.9" cy="158.9" rx="5.7" ry="3.4" fill="#2a7a30"/>
<ellipse cx="11.8" cy="185.4" rx="4.3" ry="3.6" fill="#3fa23a"/>
<ellipse cx="47.9" cy="163.2" rx="6.7" ry="3.9" fill="#2a7a30"/>
<ellipse cx="37.7" cy="188.4" rx="6.9" ry="4.7" fill="#2f8a34"/>
<ellipse cx="49.7" cy="166.8" rx="4.4" ry="2.8" fill="#55b840"/>
<ellipse cx="23.9" cy="180.3" rx="4.4" ry="2.5" fill="#3fa23a"/>
<ellipse cx="4.4" cy="157.4" rx="4.3" ry="2.5" fill="#3fa23a"/>
<ellipse cx="23.1" cy="170.2" rx="6.9" ry="4.7" fill="#2a7a30"/>
<ellipse cx="34.9" cy="156.4" rx="4.9" ry="3.6" fill="#2a7a30"/>
<ellipse cx="37.6" cy="159.3" rx="5.8" ry="3.1" fill="#3fa23a"/>
<ellipse cx="17.6" cy="157.4" rx="4.7" ry="3.2" fill="#3fa23a"/>
<ellipse cx="15.0" cy="173.1" rx="4.2" ry="2.1" fill="#2f8a34"/>
<ellipse cx="42.1" cy="160.1" rx="5.2" ry="3.0" fill="#66c24a"/>
<ellipse cx="23.0" cy="163.6" rx="3.1" ry="2.6" fill="#3fa23a"/>
<ellipse cx="46.8" cy="178.6" rx="4.5" ry="3.6" fill="#2f8a34"/>
<ellipse cx="26.8" cy="179.1" rx="6.1" ry="5.1" fill="#2f8a34"/>
<ellipse cx="46.6" cy="163.7" rx="4.3" ry="2.9" fill="#2a7a30"/>
<ellipse cx="38.5" cy="186.4" rx="3.4" ry="2.0" fill="#2a7a30"/>
<ellipse cx="25.6" cy="174.9" rx="3.7" ry="2.7" fill="#2a7a30"/>
<ellipse cx="36.5" cy="183.5" rx="5.4" ry="3.8" fill="#2f8a34"/>
<ellipse cx="17.8" cy="170.1" rx="5.4" ry="4.1" fill="#66c24a"/>
<ellipse cx="26.9" cy="167.5" rx="5.5" ry="3.6" fill="#2a7a30"/>
<ellipse cx="32.8" cy="175.9" rx="5.7" ry="3.7" fill="#66c24a"/>
<ellipse cx="52.9" cy="183.0" rx="3.9" ry="3.1" fill="#2f8a34"/>
<ellipse cx="30.7" cy="189.1" rx="6.3" ry="4.3" fill="#2f8a34"/>
<ellipse cx="18.4" cy="177.9" rx="6.7" ry="3.7" fill="#55b840"/>
<ellipse cx="15.9" cy="172.3" rx="5.3" ry="2.8" fill="#55b840"/>
<ellipse cx="47.4" cy="157.9" rx="3.7" ry="1.9" fill="#2a7a30"/>
<ellipse cx="25.5" cy="176.0" rx="5.4" ry="2.7" fill="#3fa23a"/>
<ellipse cx="50.0" cy="175.2" rx="4.4" ry="3.0" fill="#2f8a34"/>
<ellipse cx="21.0" cy="173.9" rx="5.8" ry="4.0" fill="#2f8a34"/>
<ellipse cx="5.3" cy="165.4" rx="5.8" ry="4.4" fill="#66c24a"/>
<ellipse cx="14.8" cy="164.9" rx="3.7" ry="1.9" fill="#66c24a"/>
<ellipse cx="55.2" cy="180.0" rx="3.3" ry="2.0" fill="#66c24a"/>
<ellipse cx="55.2" cy="167.7" rx="3.2" ry="1.7" fill="#66c24a"/>
<ellipse cx="16.4" cy="157.1" rx="5.3" ry="4.3" fill="#2a7a30"/>
<ellipse cx="54.2" cy="178.6" rx="3.2" ry="1.9" fill="#2a7a30"/>
<ellipse cx="43.6" cy="177.1" rx="4.4" ry="2.4" fill="#2f8a34"/>
<ellipse cx="41.4" cy="166.2" rx="4.9" ry="3.9" fill="#55b840"/>
<ellipse cx="0.3" cy="179.9" rx="5.2" ry="3.9" fill="#3fa23a"/>
<ellipse cx="28.4" cy="184.1" rx="4.5" ry="2.7" fill="#2f8a34"/>
<ellipse cx="28.4" cy="185.0" rx="5.7" ry="3.8" fill="#55b840"/>
<ellipse cx="14.7" cy="188.6" rx="5.7" ry="3.7" fill="#2f8a34"/>
<ellipse cx="23.9" cy="182.5" rx="4.1" ry="3.0" fill="#3fa23a"/>
<ellipse cx="6.5" cy="190.4" rx="3.2" ry="2.3" fill="#2f8a34"/>
<ellipse cx="29.9" cy="191.1" rx="4.5" ry="3.4" fill="#55b840"/>
<ellipse cx="25.3" cy="185.9" rx="4.5" ry="2.8" fill="#2f8a34"/>
<ellipse cx="4.0" cy="192.0" rx="3.9" ry="2.2" fill="#2f8a34"/>
<ellipse cx="26.2" cy="190.5" rx="5.8" ry="4.4" fill="#3fa23a"/>
<ellipse cx="6.5" cy="191.7" rx="3.3" ry="1.7" fill="#2f8a34"/>
<ellipse cx="21.9" cy="192.3" rx="4.5" ry="2.9" fill="#55b840"/>
<ellipse cx="20.0" cy="185.2" rx="4.7" ry="3.2" fill="#2f8a34"/>
<ellipse cx="6.6" cy="178.6" rx="4.3" ry="2.5" fill="#55b840"/>
<ellipse cx="49.7" cy="165.4" rx="1.5" ry="2.0" fill="#7f86dc"/>
<ellipse cx="14.5" cy="165.2" rx="1.7" ry="1.7" fill="#7f86dc"/>
<ellipse cx="55.2" cy="166.6" rx="1.5" ry="1.4" fill="#6a6fd0"/>
<ellipse cx="25.3" cy="157.1" rx="1.6" ry="1.8" fill="#9aa0ea"/>
<ellipse cx="28.3" cy="165.1" rx="1.6" ry="1.6" fill="#7f86dc"/>
<ellipse cx="49.5" cy="162.2" rx="1.8" ry="1.8" fill="#8a78d8"/>
<ellipse cx="29.4" cy="167.8" rx="1.7" ry="1.2" fill="#7f86dc"/>
<ellipse cx="61.8" cy="163.3" rx="1.3" ry="1.5" fill="#6a6fd0"/>
<ellipse cx="60.5" cy="164.2" rx="1.2" ry="1.3" fill="#7f86dc"/>
<ellipse cx="58.7" cy="158.0" rx="0.8" ry="1.2" fill="#8a78d8"/>
<ellipse cx="60.0" cy="153.3" rx="0.9" ry="1.4" fill="#8a78d8"/>
<ellipse cx="38.9" cy="156.7" rx="1.5" ry="1.7" fill="#8a78d8"/>
<ellipse cx="24.0" cy="166.6" rx="1.4" ry="1.4" fill="#8a78d8"/>
<ellipse cx="11.5" cy="155.8" rx="1.7" ry="1.6" fill="#6a6fd0"/>
<ellipse cx="41.3" cy="166.1" rx="1.6" ry="1.5" fill="#8a78d8"/>
<ellipse cx="42.4" cy="161.7" rx="1.3" ry="1.3" fill="#6a6fd0"/>
<ellipse cx="21.4" cy="154.6" rx="1.2" ry="1.5" fill="#8a78d8"/>
<ellipse cx="25.9" cy="159.0" rx="1.8" ry="1.9" fill="#8a78d8"/>
<ellipse cx="56.5" cy="156.3" rx="1.5" ry="1.6" fill="#6a6fd0"/>
<ellipse cx="41.7" cy="154.6" rx="1.3" ry="1.2" fill="#9aa0ea"/>
<ellipse cx="18.1" cy="154.3" rx="1.4" ry="1.4" fill="#7f86dc"/>
<ellipse cx="29.8" cy="166.9" rx="1.1" ry="1.8" fill="#8a78d8"/>
<ellipse cx="58.7" cy="158.5" rx="1.3" ry="1.8" fill="#9aa0ea"/>
<ellipse cx="43.5" cy="167.3" rx="1.3" ry="1.7" fill="#8a78d8"/>
<ellipse cx="36.9" cy="154.7" rx="1.3" ry="1.4" fill="#6a6fd0"/>
<ellipse cx="6.9" cy="163.0" rx="1.3" ry="2.2" fill="#8a78d8"/>
<ellipse cx="43.5" cy="159.3" rx="1.8" ry="1.3" fill="#7f86dc"/>
<ellipse cx="46.6" cy="167.5" rx="1.3" ry="1.4" fill="#8a78d8"/>
<ellipse cx="23.3" cy="156.6" rx="1.6" ry="2.0" fill="#9aa0ea"/>
<ellipse cx="26.8" cy="159.5" rx="0.8" ry="1.6" fill="#9aa0ea"/>
<ellipse cx="63.4" cy="166.6" rx="1.7" ry="1.3" fill="#7f86dc"/>
<ellipse cx="22.2" cy="154.3" rx="1.6" ry="1.7" fill="#8a78d8"/>
<ellipse cx="45.7" cy="153.8" rx="0.9" ry="2.0" fill="#6a6fd0"/>
<ellipse cx="29.9" cy="167.6" rx="1.6" ry="1.3" fill="#7f86dc"/>
<ellipse cx="25.9" cy="160.0" rx="1.1" ry="1.3" fill="#9aa0ea"/>
<ellipse cx="23.7" cy="167.0" rx="1.1" ry="1.4" fill="#7f86dc"/>
<ellipse cx="52.3" cy="163.2" rx="1.0" ry="2.1" fill="#8a78d8"/>
<ellipse cx="22.4" cy="165.5" rx="1.4" ry="1.0" fill="#8a78d8"/>
<ellipse cx="41.6" cy="155.2" rx="1.5" ry="2.0" fill="#7f86dc"/>
<ellipse cx="53.9" cy="167.7" rx="1.1" ry="2.1" fill="#7f86dc"/>
<ellipse cx="56.2" cy="155.2" rx="0.9" ry="2.2" fill="#7f86dc"/>
<ellipse cx="63.3" cy="159.6" rx="1.2" ry="1.1" fill="#8a78d8"/>
<ellipse cx="3.1" cy="157.6" rx="1.7" ry="1.3" fill="#9aa0ea"/>
<ellipse cx="20.2" cy="162.1" rx="1.5" ry="1.5" fill="#9aa0ea"/>
<ellipse cx="43.3" cy="153.4" rx="0.9" ry="1.4" fill="#8a78d8"/>
<ellipse cx="10.7" cy="153.6" rx="1.7" ry="1.2" fill="#7f86dc"/>
<ellipse cx="12.5" cy="156.7" rx="1.7" ry="1.7" fill="#9aa0ea"/>
<ellipse cx="42.7" cy="157.3" rx="1.3" ry="1.4" fill="#8a78d8"/>
<ellipse cx="8.8" cy="162.4" rx="0.8" ry="2.1" fill="#6a6fd0"/>
<ellipse cx="25.9" cy="156.9" rx="1.3" ry="1.0" fill="#6a6fd0"/>
<ellipse cx="50.3" cy="165.7" rx="1.8" ry="1.5" fill="#8a78d8"/>
<ellipse cx="23.8" cy="157.3" rx="1.3" ry="2.2" fill="#7f86dc"/>
<ellipse cx="34.0" cy="158.8" rx="0.9" ry="1.5" fill="#7f86dc"/>
<ellipse cx="32.8" cy="157.7" rx="1.2" ry="1.0" fill="#7f86dc"/>
<ellipse cx="7.3" cy="156.5" rx="1.7" ry="2.1" fill="#7f86dc"/>
<ellipse cx="4.2" cy="167.0" rx="1.0" ry="2.2" fill="#8a78d8"/>
<ellipse cx="39.7" cy="159.4" rx="1.0" ry="2.1" fill="#9aa0ea"/>
<ellipse cx="51.0" cy="164.0" rx="1.5" ry="1.2" fill="#8a78d8"/>
<ellipse cx="16.4" cy="164.7" rx="0.9" ry="1.1" fill="#7f86dc"/>
<ellipse cx="18.6" cy="155.4" rx="1.8" ry="1.7" fill="#9aa0ea"/>
<ellipse cx="56.1" cy="153.9" rx="1.2" ry="1.3" fill="#8a78d8"/>
<ellipse cx="44.1" cy="162.6" rx="1.5" ry="1.2" fill="#8a78d8"/>
<ellipse cx="48.8" cy="153.8" rx="1.5" ry="1.6" fill="#6a6fd0"/>
<ellipse cx="16.1" cy="165.1" rx="0.9" ry="2.1" fill="#9aa0ea"/>
<ellipse cx="3.5" cy="155.4" rx="1.7" ry="2.0" fill="#9aa0ea"/>
<ellipse cx="10.0" cy="159.5" rx="1.0" ry="1.3" fill="#8a78d8"/>
<ellipse cx="16.6" cy="159.4" rx="1.4" ry="1.7" fill="#6a6fd0"/>
<ellipse cx="28.5" cy="163.2" rx="1.2" ry="1.3" fill="#6a6fd0"/>
<ellipse cx="7.9" cy="156.8" rx="1.3" ry="2.2" fill="#7f86dc"/>
<ellipse cx="9.4" cy="153.6" rx="1.7" ry="1.7" fill="#8a78d8"/>
<ellipse cx="111.8" cy="167.8" rx="1.2" ry="1.6" fill="#8a90e0"/>
<ellipse cx="98.3" cy="169.7" rx="1.2" ry="1.6" fill="#8a90e0"/>
<ellipse cx="119.1" cy="172.4" rx="1.2" ry="1.6" fill="#8a90e0"/>
<ellipse cx="121.0" cy="166.8" rx="1.2" ry="1.6" fill="#8a90e0"/>
<ellipse cx="116.9" cy="174.9" rx="1.2" ry="1.6" fill="#8a90e0"/>
<ellipse cx="121.5" cy="175.1" rx="1.2" ry="1.6" fill="#8a90e0"/>
<ellipse cx="114.6" cy="175.6" rx="1.2" ry="1.6" fill="#8a90e0"/>
<ellipse cx="105.0" cy="171.4" rx="1.2" ry="1.6" fill="#8a90e0"/>
<ellipse cx="121.3" cy="175.0" rx="1.2" ry="1.6" fill="#8a90e0"/>
<ellipse cx="109.7" cy="169.0" rx="1.2" ry="1.6" fill="#8a90e0"/>
<polygon points="350.0,140.0 372.0,112.0 400.0,104.0 440.0,106.0 498.0,102.0 498.0,212.0 340.0,212.0" fill="#2a8a30"/>
<ellipse cx="420.3" cy="131.7" rx="6.3" ry="5.0" fill="#0e3414"/>
<ellipse cx="399.7" cy="157.8" rx="8.1" ry="4.7" fill="#12401a"/>
<ellipse cx="430.1" cy="191.4" rx="5.2" ry="3.7" fill="#0e3414"/>
<ellipse cx="463.0" cy="153.1" rx="5.2" ry="3.2" fill="#1a5a22"/>
<ellipse cx="352.3" cy="136.4" rx="6.2" ry="5.1" fill="#1a5a22"/>
<ellipse cx="453.7" cy="137.1" rx="7.8" ry="6.5" fill="#1f7026"/>
<ellipse cx="372.1" cy="128.9" rx="5.4" ry="3.8" fill="#0e3414"/>
<ellipse cx="398.9" cy="133.5" rx="6.3" ry="4.2" fill="#38a83a"/>
<ellipse cx="427.7" cy="146.6" rx="6.5" ry="3.4" fill="#12401a"/>
<ellipse cx="435.4" cy="133.6" rx="4.0" ry="2.5" fill="#2f9a34"/>
<ellipse cx="437.3" cy="124.8" rx="7.2" ry="3.7" fill="#1a5a22"/>
<ellipse cx="486.1" cy="142.6" rx="6.1" ry="3.7" fill="#38a83a"/>
<ellipse cx="367.8" cy="200.6" rx="4.7" ry="3.4" fill="#2f9a34"/>
<ellipse cx="386.3" cy="118.5" rx="4.5" ry="2.8" fill="#38a83a"/>
<ellipse cx="361.5" cy="181.7" rx="4.7" ry="3.1" fill="#1a5a22"/>
<ellipse cx="460.7" cy="163.7" rx="7.2" ry="5.6" fill="#0e3414"/>
<ellipse cx="358.1" cy="156.6" rx="8.6" ry="5.9" fill="#1f7026"/>
<ellipse cx="408.0" cy="127.2" rx="8.1" ry="4.5" fill="#0e3414"/>
<ellipse cx="459.3" cy="191.9" rx="4.7" ry="2.7" fill="#38a83a"/>
<ellipse cx="491.6" cy="162.3" rx="8.9" ry="6.6" fill="#1a5a22"/>
<ellipse cx="350.1" cy="164.4" rx="6.7" ry="4.5" fill="#2f9a34"/>
<ellipse cx="463.7" cy="209.1" rx="4.6" ry="2.5" fill="#1f7026"/>
<ellipse cx="482.3" cy="181.8" rx="8.5" ry="6.0" fill="#38a83a"/>
<ellipse cx="490.2" cy="115.4" rx="8.0" ry="4.2" fill="#0e3414"/>
<ellipse cx="363.4" cy="166.5" rx="8.7" ry="4.4" fill="#2f9a34"/>
<ellipse cx="384.3" cy="148.9" rx="5.3" ry="2.8" fill="#38a83a"/>
<ellipse cx="380.8" cy="185.8" rx="5.3" ry="4.2" fill="#2f9a34"/>
<ellipse cx="402.8" cy="170.1" rx="6.2" ry="3.9" fill="#1f7026"/>
<ellipse cx="353.4" cy="153.3" rx="5.9" ry="3.0" fill="#1a5a22"/>
<ellipse cx="435.5" cy="184.3" rx="5.4" ry="2.7" fill="#1a5a22"/>
<ellipse cx="476.9" cy="183.9" rx="6.8" ry="4.6" fill="#38a83a"/>
<ellipse cx="352.0" cy="199.3" rx="7.0" ry="5.2" fill="#1a5a22"/>
<ellipse cx="461.8" cy="155.8" rx="8.2" ry="4.9" fill="#2f9a34"/>
<ellipse cx="424.4" cy="145.9" rx="8.6" ry="4.7" fill="#2f9a34"/>
<ellipse cx="447.3" cy="203.1" rx="5.5" ry="4.0" fill="#12401a"/>
<ellipse cx="480.8" cy="181.1" rx="8.2" ry="5.8" fill="#1f7026"/>
<ellipse cx="466.9" cy="187.4" rx="5.6" ry="3.3" fill="#12401a"/>
<ellipse cx="356.2" cy="142.1" rx="5.2" ry="4.1" fill="#1a5a22"/>
<ellipse cx="420.9" cy="151.6" rx="7.5" ry="5.7" fill="#12401a"/>
<ellipse cx="368.6" cy="169.6" rx="5.4" ry="4.1" fill="#0e3414"/>
<ellipse cx="384.3" cy="201.8" rx="8.7" ry="7.1" fill="#1f7026"/>
<ellipse cx="449.1" cy="114.8" rx="8.7" ry="6.2" fill="#38a83a"/>
<ellipse cx="447.5" cy="163.0" rx="6.2" ry="4.6" fill="#0e3414"/>
<ellipse cx="481.8" cy="177.7" rx="5.7" ry="3.0" fill="#38a83a"/>
<ellipse cx="411.5" cy="197.5" rx="5.4" ry="4.5" fill="#1a5a22"/>
<ellipse cx="460.7" cy="138.5" rx="8.9" ry="5.2" fill="#38a83a"/>
<ellipse cx="458.9" cy="175.7" rx="7.0" ry="3.8" fill="#1f7026"/>
<ellipse cx="486.5" cy="164.6" rx="4.9" ry="2.6" fill="#12401a"/>
<ellipse cx="459.6" cy="115.9" rx="6.8" ry="5.5" fill="#0e3414"/>
<ellipse cx="457.1" cy="183.1" rx="5.7" ry="3.7" fill="#2f9a34"/>
<ellipse cx="483.2" cy="192.1" rx="7.8" ry="4.4" fill="#0e3414"/>
<ellipse cx="444.8" cy="115.1" rx="8.9" ry="6.5" fill="#1a5a22"/>
<ellipse cx="399.2" cy="209.3" rx="8.6" ry="4.3" fill="#38a83a"/>
<ellipse cx="381.6" cy="190.4" rx="4.1" ry="2.3" fill="#0e3414"/>
<ellipse cx="369.1" cy="196.4" rx="6.7" ry="5.1" fill="#0e3414"/>
<ellipse cx="465.8" cy="202.4" rx="8.9" ry="4.9" fill="#12401a"/>
<ellipse cx="421.2" cy="127.2" rx="8.4" ry="4.4" fill="#38a83a"/>
<ellipse cx="442.8" cy="137.3" rx="7.6" ry="4.5" fill="#2f9a34"/>
<ellipse cx="439.5" cy="122.4" rx="8.3" ry="6.1" fill="#1a5a22"/>
<ellipse cx="435.3" cy="170.9" rx="6.9" ry="5.5" fill="#0e3414"/>
<ellipse cx="384.6" cy="161.2" rx="4.0" ry="2.5" fill="#1f7026"/>
<ellipse cx="485.0" cy="178.8" rx="5.7" ry="3.6" fill="#12401a"/>
<ellipse cx="451.2" cy="133.9" rx="7.3" ry="4.6" fill="#0e3414"/>
<ellipse cx="465.9" cy="125.9" rx="4.6" ry="2.4" fill="#0e3414"/>
<ellipse cx="448.5" cy="189.1" rx="8.2" ry="5.7" fill="#1f7026"/>
<ellipse cx="489.3" cy="144.1" rx="7.0" ry="4.8" fill="#1f7026"/>
<ellipse cx="408.0" cy="140.9" rx="6.8" ry="5.3" fill="#12401a"/>
<ellipse cx="471.0" cy="174.8" rx="5.4" ry="4.3" fill="#0e3414"/>
<ellipse cx="379.2" cy="118.4" rx="5.1" ry="2.9" fill="#0e3414"/>
<ellipse cx="423.6" cy="169.6" rx="5.8" ry="4.4" fill="#38a83a"/>
<ellipse cx="360.9" cy="114.3" rx="8.3" ry="5.1" fill="#12401a"/>
<ellipse cx="361.7" cy="133.2" rx="4.5" ry="2.2" fill="#12401a"/>
<ellipse cx="367.0" cy="182.5" rx="8.5" ry="4.3" fill="#1a5a22"/>
<ellipse cx="441.4" cy="144.5" rx="4.2" ry="2.6" fill="#2f9a34"/>
<ellipse cx="389.0" cy="123.6" rx="6.1" ry="4.7" fill="#1a5a22"/>
<ellipse cx="431.0" cy="164.8" rx="8.5" ry="6.3" fill="#0e3414"/>
<ellipse cx="487.4" cy="189.4" rx="9.0" ry="5.3" fill="#2f9a34"/>
<ellipse cx="426.3" cy="164.4" rx="5.6" ry="3.9" fill="#1f7026"/>
<ellipse cx="383.2" cy="161.8" rx="6.3" ry="4.1" fill="#1a5a22"/>
<ellipse cx="456.2" cy="181.2" rx="6.0" ry="3.5" fill="#2f9a34"/>
<path d="M418.0 40.0L471.0 11.8" stroke="#9bbf4a" stroke-width="1" fill="none"/>
<ellipse cx="423.5" cy="30.9" rx="6.3" ry="2.6" fill="#2fa533" transform="rotate(-88 423.5 30.9)"/>
<ellipse cx="429.0" cy="39.9" rx="6.3" ry="2.6" fill="#7de862" transform="rotate(26 429.0 39.9)"/>
<ellipse cx="430.0" cy="26.7" rx="6.5" ry="2.6" fill="#6be055" transform="rotate(-98 430.0 26.7)"/>
<ellipse cx="436.3" cy="36.8" rx="6.5" ry="2.6" fill="#58d44a" transform="rotate(33 436.3 36.8)"/>
<ellipse cx="437.9" cy="22.4" rx="6.8" ry="2.6" fill="#4ccc44" transform="rotate(-94 437.9 22.4)"/>
<ellipse cx="443.7" cy="33.4" rx="6.8" ry="2.6" fill="#43c63f" transform="rotate(39 443.7 33.4)"/>
<ellipse cx="446.2" cy="18.2" rx="7.0" ry="2.6" fill="#6be055" transform="rotate(-89 446.2 18.2)"/>
<ellipse cx="451.7" cy="29.1" rx="7.0" ry="2.6" fill="#2fa533" transform="rotate(35 451.7 29.1)"/>
<ellipse cx="453.9" cy="14.4" rx="6.7" ry="2.6" fill="#58d44a" transform="rotate(-87 453.9 14.4)"/>
<ellipse cx="459.5" cy="24.3" rx="6.7" ry="2.6" fill="#43c63f" transform="rotate(29 459.5 24.3)"/>
<ellipse cx="461.7" cy="10.6" rx="6.5" ry="2.6" fill="#37b338" transform="rotate(-85 461.7 10.6)"/>
<ellipse cx="466.9" cy="19.9" rx="6.5" ry="2.6" fill="#2fa533" transform="rotate(26 466.9 19.9)"/>
<ellipse cx="469.2" cy="6.9" rx="6.2" ry="2.6" fill="#7de862" transform="rotate(-86 469.2 6.9)"/>
<ellipse cx="473.6" cy="16.9" rx="6.2" ry="2.6" fill="#43c63f" transform="rotate(38 473.6 16.9)"/>
<ellipse cx="475.9" cy="9.2" rx="7.0" ry="2.6" fill="#43c63f" transform="rotate(-28 475.9 9.2)"/>
<path d="M408.0 72.0L474.6 50.4" stroke="#9bbf4a" stroke-width="1" fill="none"/>
<ellipse cx="413.9" cy="63.8" rx="6.3" ry="2.6" fill="#58d44a" transform="rotate(-89 413.9 63.8)"/>
<ellipse cx="417.9" cy="74.8" rx="6.3" ry="2.6" fill="#7de862" transform="rotate(49 417.9 74.8)"/>
<ellipse cx="424.6" cy="61.4" rx="6.5" ry="2.6" fill="#4ccc44" transform="rotate(-68 424.6 61.4)"/>
<ellipse cx="427.4" cy="71.2" rx="6.5" ry="2.6" fill="#2fa533" transform="rotate(36 427.4 71.2)"/>
<ellipse cx="433.0" cy="58.5" rx="6.7" ry="2.6" fill="#37b338" transform="rotate(-68 433.0 58.5)"/>
<ellipse cx="434.9" cy="69.8" rx="6.7" ry="2.6" fill="#2fa533" transform="rotate(49 434.9 69.8)"/>
<ellipse cx="439.6" cy="55.1" rx="6.9" ry="2.6" fill="#58d44a" transform="rotate(-84 439.6 55.1)"/>
<ellipse cx="444.0" cy="66.6" rx="6.9" ry="2.6" fill="#58d44a" transform="rotate(42 444.0 66.6)"/>
<ellipse cx="447.5" cy="52.5" rx="6.8" ry="2.6" fill="#43c63f" transform="rotate(-87 447.5 52.5)"/>
<ellipse cx="452.5" cy="63.5" rx="6.8" ry="2.6" fill="#58d44a" transform="rotate(38 452.5 63.5)"/>
<ellipse cx="456.9" cy="50.1" rx="6.6" ry="2.6" fill="#7de862" transform="rotate(-77 456.9 50.1)"/>
<ellipse cx="459.9" cy="61.5" rx="6.6" ry="2.6" fill="#37b338" transform="rotate(48 459.9 61.5)"/>
<ellipse cx="464.1" cy="47.5" rx="6.4" ry="2.6" fill="#43c63f" transform="rotate(-87 464.1 47.5)"/>
<ellipse cx="468.8" cy="57.8" rx="6.4" ry="2.6" fill="#58d44a" transform="rotate(38 468.8 57.8)"/>
<ellipse cx="473.0" cy="45.1" rx="6.2" ry="2.6" fill="#6be055" transform="rotate(-82 473.0 45.1)"/>
<ellipse cx="476.9" cy="55.1" rx="6.2" ry="2.6" fill="#43c63f" transform="rotate(39 476.9 55.1)"/>
<ellipse cx="479.9" cy="48.6" rx="7.0" ry="2.6" fill="#43c63f" transform="rotate(-18 479.9 48.6)"/>
<path d="M420.0 98.0L488.5 83.4" stroke="#9bbf4a" stroke-width="1" fill="none"/>
<ellipse cx="426.7" cy="90.5" rx="6.3" ry="2.6" fill="#2fa533" transform="rotate(-83 426.7 90.5)"/>
<ellipse cx="430.7" cy="100.8" rx="6.3" ry="2.6" fill="#58d44a" transform="rotate(41 430.7 100.8)"/>
<ellipse cx="437.5" cy="89.1" rx="6.5" ry="2.6" fill="#37b338" transform="rotate(-63 437.5 89.1)"/>
<ellipse cx="439.3" cy="99.4" rx="6.5" ry="2.6" fill="#4ccc44" transform="rotate(43 439.3 99.4)"/>
<ellipse cx="444.0" cy="86.4" rx="6.7" ry="2.6" fill="#7de862" transform="rotate(-83 444.0 86.4)"/>
<ellipse cx="447.9" cy="97.7" rx="6.7" ry="2.6" fill="#58d44a" transform="rotate(44 447.9 97.7)"/>
<ellipse cx="454.1" cy="84.8" rx="6.9" ry="2.6" fill="#37b338" transform="rotate(-69 454.1 84.8)"/>
<ellipse cx="456.6" cy="96.1" rx="6.9" ry="2.6" fill="#2fa533" transform="rotate(44 456.6 96.1)"/>
<ellipse cx="462.8" cy="83.1" rx="6.8" ry="2.6" fill="#4ccc44" transform="rotate(-68 462.8 83.1)"/>
<ellipse cx="465.2" cy="94.1" rx="6.8" ry="2.6" fill="#58d44a" transform="rotate(43 465.2 94.1)"/>
<ellipse cx="471.5" cy="81.6" rx="6.6" ry="2.6" fill="#6be055" transform="rotate(-66 471.5 81.6)"/>
<ellipse cx="472.3" cy="93.3" rx="6.6" ry="2.6" fill="#37b338" transform="rotate(58 472.3 93.3)"/>
<ellipse cx="478.3" cy="79.5" rx="6.4" ry="2.6" fill="#2fa533" transform="rotate(-81 478.3 79.5)"/>
<ellipse cx="482.2" cy="90.0" rx="6.4" ry="2.6" fill="#7de862" transform="rotate(41 482.2 90.0)"/>
<ellipse cx="488.7" cy="78.5" rx="6.2" ry="2.6" fill="#4ccc44" transform="rotate(-63 488.7 78.5)"/>
<ellipse cx="489.6" cy="88.9" rx="6.2" ry="2.6" fill="#7de862" transform="rotate(53 489.6 88.9)"/>
<ellipse cx="493.9" cy="82.3" rx="7.0" ry="2.6" fill="#2fa533" transform="rotate(-12 493.9 82.3)"/>
<path d="M440.0 20.0L478.3 -12.1" stroke="#9bbf4a" stroke-width="1" fill="none"/>
<ellipse cx="443.4" cy="10.9" rx="5.4" ry="2.4" fill="#58d44a" transform="rotate(-101 443.4 10.9)"/>
<ellipse cx="449.8" cy="17.4" rx="5.4" ry="2.4" fill="#2fa533" transform="rotate(13 449.8 17.4)"/>
<ellipse cx="448.9" cy="5.6" rx="5.7" ry="2.4" fill="#6be055" transform="rotate(-110 448.9 5.6)"/>
<ellipse cx="456.3" cy="12.4" rx="5.7" ry="2.4" fill="#6be055" transform="rotate(16 456.3 12.4)"/>
<ellipse cx="455.2" cy="-0.0" rx="5.9" ry="2.4" fill="#2fa533" transform="rotate(-110 455.2 -0.0)"/>
<ellipse cx="462.8" cy="7.5" rx="5.9" ry="2.4" fill="#4ccc44" transform="rotate(19 462.8 7.5)"/>
<ellipse cx="463.6" cy="-5.6" rx="5.8" ry="2.4" fill="#7de862" transform="rotate(-90 463.6 -5.6)"/>
<ellipse cx="469.0" cy="2.5" rx="5.8" ry="2.4" fill="#37b338" transform="rotate(23 469.0 2.5)"/>
<ellipse cx="470.0" cy="-10.8" rx="5.6" ry="2.4" fill="#6be055" transform="rotate(-90 470.0 -10.8)"/>
<ellipse cx="475.3" cy="-3.6" rx="5.6" ry="2.4" fill="#6be055" transform="rotate(17 475.3 -3.6)"/>
<ellipse cx="474.9" cy="-15.6" rx="5.3" ry="2.4" fill="#6be055" transform="rotate(-107 474.9 -15.6)"/>
<ellipse cx="481.4" cy="-8.8" rx="5.3" ry="2.4" fill="#4ccc44" transform="rotate(19 481.4 -8.8)"/>
<ellipse cx="482.0" cy="-15.2" rx="6.0" ry="2.4" fill="#58d44a" transform="rotate(-40 482.0 -15.2)"/>
<path d="M455.0 120.0L495.8 101.0" stroke="#9bbf4a" stroke-width="1" fill="none"/>
<ellipse cx="462.4" cy="111.2" rx="6.4" ry="2.6" fill="#7de862" transform="rotate(-75 462.4 111.2)"/>
<ellipse cx="466.0" cy="121.0" rx="6.4" ry="2.6" fill="#4ccc44" transform="rotate(35 466.0 121.0)"/>
<ellipse cx="469.3" cy="106.8" rx="6.7" ry="2.6" fill="#7de862" transform="rotate(-87 469.3 106.8)"/>
<ellipse cx="474.6" cy="117.0" rx="6.7" ry="2.6" fill="#7de862" transform="rotate(31 474.6 117.0)"/>
<ellipse cx="477.1" cy="102.8" rx="6.9" ry="2.6" fill="#7de862" transform="rotate(-89 477.1 102.8)"/>
<ellipse cx="481.9" cy="114.7" rx="6.9" ry="2.6" fill="#43c63f" transform="rotate(46 481.9 114.7)"/>
<ellipse cx="485.1" cy="99.3" rx="6.6" ry="2.6" fill="#58d44a" transform="rotate(-91 485.1 99.3)"/>
<ellipse cx="490.1" cy="110.3" rx="6.6" ry="2.6" fill="#43c63f" transform="rotate(41 490.1 110.3)"/>
<ellipse cx="494.1" cy="95.9" rx="6.2" ry="2.6" fill="#37b338" transform="rotate(-83 494.1 95.9)"/>
<ellipse cx="498.4" cy="105.7" rx="6.2" ry="2.6" fill="#37b338" transform="rotate(35 498.4 105.7)"/>
<ellipse cx="500.9" cy="98.6" rx="7.0" ry="2.6" fill="#4ccc44" transform="rotate(-25 500.9 98.6)"/>
<path d="M400.0 120.0L459.4 111.6" stroke="#9bbf4a" stroke-width="1" fill="none"/>
<ellipse cx="408.1" cy="112.8" rx="6.3" ry="2.8" fill="#43c63f" transform="rotate(-80 408.1 112.8)"/>
<ellipse cx="410.9" cy="124.0" rx="6.3" ry="2.8" fill="#6be055" transform="rotate(52 410.9 124.0)"/>
<ellipse cx="418.6" cy="111.2" rx="6.6" ry="2.8" fill="#4ccc44" transform="rotate(-75 418.6 111.2)"/>
<ellipse cx="421.4" cy="122.4" rx="6.6" ry="2.8" fill="#58d44a" transform="rotate(46 421.4 122.4)"/>
<ellipse cx="429.8" cy="110.1" rx="6.9" ry="2.8" fill="#37b338" transform="rotate(-63 429.8 110.1)"/>
<ellipse cx="431.3" cy="121.4" rx="6.9" ry="2.8" fill="#6be055" transform="rotate(49 431.3 121.4)"/>
<ellipse cx="438.9" cy="108.5" rx="6.8" ry="2.8" fill="#4ccc44" transform="rotate(-70 438.9 108.5)"/>
<ellipse cx="440.8" cy="120.2" rx="6.8" ry="2.8" fill="#43c63f" transform="rotate(52 440.8 120.2)"/>
<ellipse cx="448.1" cy="107.1" rx="6.5" ry="2.8" fill="#37b338" transform="rotate(-76 448.1 107.1)"/>
<ellipse cx="450.4" cy="118.7" rx="6.5" ry="2.8" fill="#43c63f" transform="rotate(53 450.4 118.7)"/>
<ellipse cx="458.8" cy="106.3" rx="6.2" ry="2.8" fill="#7de862" transform="rotate(-68 458.8 106.3)"/>
<ellipse cx="459.4" cy="117.5" rx="6.2" ry="2.8" fill="#7de862" transform="rotate(62 459.4 117.5)"/>
<ellipse cx="465.0" cy="110.9" rx="7.0" ry="2.8" fill="#4ccc44" transform="rotate(-8 465.0 110.9)"/>
<path d="M452.0 150.0L358.0 115.8" stroke="#9bbf4a" stroke-width="1" fill="none"/>
<ellipse cx="434.4" cy="153.6" rx="10.8" ry="4.5" fill="#2fa533" transform="rotate(139 434.4 153.6)"/>
<ellipse cx="439.0" cy="136.4" rx="10.8" ry="4.5" fill="#43c63f" transform="rotate(250 439.0 136.4)"/>
<ellipse cx="421.2" cy="149.6" rx="11.2" ry="4.5" fill="#37b338" transform="rotate(135 421.2 149.6)"/>
<ellipse cx="428.9" cy="130.5" rx="11.2" ry="4.5" fill="#37b338" transform="rotate(269 428.9 130.5)"/>
<ellipse cx="406.3" cy="143.7" rx="11.7" ry="4.5" fill="#6be055" transform="rotate(144 406.3 143.7)"/>
<ellipse cx="415.1" cy="125.2" rx="11.7" ry="4.5" fill="#2fa533" transform="rotate(267 415.1 125.2)"/>
<ellipse cx="392.6" cy="138.8" rx="11.9" ry="4.5" fill="#4ccc44" transform="rotate(144 392.6 138.8)"/>
<ellipse cx="398.8" cy="120.5" rx="11.9" ry="4.5" fill="#2fa533" transform="rotate(253 398.8 120.5)"/>
<ellipse cx="379.3" cy="133.4" rx="11.5" ry="4.5" fill="#7de862" transform="rotate(146 379.3 133.4)"/>
<ellipse cx="388.0" cy="115.6" rx="11.5" ry="4.5" fill="#2fa533" transform="rotate(266 388.0 115.6)"/>
<ellipse cx="366.1" cy="128.0" rx="11.1" ry="4.5" fill="#4ccc44" transform="rotate(148 366.1 128.0)"/>
<ellipse cx="374.9" cy="111.1" rx="11.1" ry="4.5" fill="#4ccc44" transform="rotate(267 374.9 111.1)"/>
<ellipse cx="353.8" cy="124.0" rx="10.6" ry="4.5" fill="#37b338" transform="rotate(141 353.8 124.0)"/>
<ellipse cx="362.0" cy="106.6" rx="10.6" ry="4.5" fill="#37b338" transform="rotate(270 362.0 106.6)"/>
<ellipse cx="349.0" cy="112.5" rx="12.0" ry="4.5" fill="#6be055" transform="rotate(200 349.0 112.5)"/>
<path d="M470.0 205.0L424.1 139.5" stroke="#9bbf4a" stroke-width="1" fill="none"/>
<ellipse cx="450.9" cy="196.9" rx="12.7" ry="5.5" fill="#4ccc44" transform="rotate(175 450.9 196.9)"/>
<ellipse cx="469.0" cy="184.3" rx="12.7" ry="5.5" fill="#58d44a" transform="rotate(295 469.0 184.3)"/>
<ellipse cx="441.0" cy="182.3" rx="13.4" ry="5.5" fill="#2fa533" transform="rotate(182 441.0 182.3)"/>
<ellipse cx="458.1" cy="169.8" rx="13.4" ry="5.5" fill="#6be055" transform="rotate(286 458.1 169.8)"/>
<ellipse cx="431.4" cy="168.9" rx="13.9" ry="5.5" fill="#4ccc44" transform="rotate(183 431.4 168.9)"/>
<ellipse cx="448.8" cy="156.2" rx="13.9" ry="5.5" fill="#58d44a" transform="rotate(285 448.8 156.2)"/>
<ellipse cx="423.4" cy="160.0" rx="13.2" ry="5.5" fill="#2fa533" transform="rotate(165 423.4 160.0)"/>
<ellipse cx="441.0" cy="144.3" rx="13.2" ry="5.5" fill="#7de862" transform="rotate(292 441.0 144.3)"/>
<ellipse cx="414.5" cy="144.9" rx="12.5" ry="5.5" fill="#37b338" transform="rotate(173 414.5 144.9)"/>
<ellipse cx="433.1" cy="132.6" rx="12.5" ry="5.5" fill="#6be055" transform="rotate(300 433.1 132.6)"/>
<ellipse cx="417.7" cy="130.3" rx="14.0" ry="5.5" fill="#4ccc44" transform="rotate(235 417.7 130.3)"/>
<path d="M498.0 170.0L434.6 140.4" stroke="#9bbf4a" stroke-width="1" fill="none"/>
<ellipse cx="478.5" cy="171.1" rx="11.8" ry="5.0" fill="#58d44a" transform="rotate(154 478.5 171.1)"/>
<ellipse cx="490.1" cy="154.1" rx="11.8" ry="5.0" fill="#2fa533" transform="rotate(275 490.1 154.1)"/>
<ellipse cx="466.8" cy="167.9" rx="12.5" ry="5.0" fill="#37b338" transform="rotate(140 466.8 167.9)"/>
<ellipse cx="474.2" cy="147.7" rx="12.5" ry="5.0" fill="#6be055" transform="rotate(259 474.2 147.7)"/>
<ellipse cx="453.8" cy="162.1" rx="12.9" ry="5.0" fill="#4ccc44" transform="rotate(141 453.8 162.1)"/>
<ellipse cx="461.6" cy="141.3" rx="12.9" ry="5.0" fill="#2fa533" transform="rotate(260 461.6 141.3)"/>
<ellipse cx="440.4" cy="154.2" rx="12.2" ry="5.0" fill="#58d44a" transform="rotate(150 440.4 154.2)"/>
<ellipse cx="451.1" cy="135.9" rx="12.2" ry="5.0" fill="#2fa533" transform="rotate(270 451.1 135.9)"/>
<ellipse cx="430.2" cy="150.4" rx="11.6" ry="5.0" fill="#58d44a" transform="rotate(135 430.2 150.4)"/>
<ellipse cx="439.6" cy="130.7" rx="11.6" ry="5.0" fill="#2fa533" transform="rotate(276 439.6 130.7)"/>
<ellipse cx="425.1" cy="136.0" rx="13.0" ry="5.0" fill="#58d44a" transform="rotate(205 425.1 136.0)"/>
<path d="M498.0 205.0L409.4 189.4" stroke="#9bbf4a" stroke-width="1" fill="none"/>
<ellipse cx="478.1" cy="213.1" rx="12.7" ry="6.0" fill="#58d44a" transform="rotate(126 478.1 213.1)"/>
<ellipse cx="480.2" cy="191.3" rx="12.7" ry="6.0" fill="#6be055" transform="rotate(245 480.2 191.3)"/>
<ellipse cx="457.7" cy="208.5" rx="13.4" ry="6.0" fill="#6be055" transform="rotate(139 457.7 208.5)"/>
<ellipse cx="464.3" cy="186.7" rx="13.4" ry="6.0" fill="#58d44a" transform="rotate(255 464.3 186.7)"/>
<ellipse cx="441.3" cy="207.3" rx="13.9" ry="6.0" fill="#6be055" transform="rotate(129 441.3 207.3)"/>
<ellipse cx="445.2" cy="183.6" rx="13.9" ry="6.0" fill="#58d44a" transform="rotate(249 445.2 183.6)"/>
<ellipse cx="423.5" cy="203.2" rx="13.2" ry="6.0" fill="#37b338" transform="rotate(132 423.5 203.2)"/>
<ellipse cx="426.2" cy="181.8" rx="13.2" ry="6.0" fill="#43c63f" transform="rotate(242 426.2 181.8)"/>
<ellipse cx="405.8" cy="199.1" rx="12.5" ry="6.0" fill="#37b338" transform="rotate(135 405.8 199.1)"/>
<ellipse cx="408.7" cy="179.4" rx="12.5" ry="6.0" fill="#6be055" transform="rotate(241 408.7 179.4)"/>
<ellipse cx="398.3" cy="187.4" rx="14.0" ry="6.0" fill="#58d44a" transform="rotate(190 398.3 187.4)"/>
<path d="M420.0 211.0L402.9 164.0" stroke="#9bbf4a" stroke-width="1" fill="none"/>
<ellipse cx="405.1" cy="202.7" rx="11.9" ry="5.5" fill="#2fa533" transform="rotate(180 405.1 202.7)"/>
<ellipse cx="425.6" cy="194.5" rx="11.9" ry="5.5" fill="#4ccc44" transform="rotate(316 425.6 194.5)"/>
<ellipse cx="400.2" cy="188.6" rx="12.8" ry="5.5" fill="#6be055" transform="rotate(191 400.2 188.6)"/>
<ellipse cx="421.4" cy="181.7" rx="12.8" ry="5.5" fill="#2fa533" transform="rotate(313 421.4 181.7)"/>
<ellipse cx="396.7" cy="175.3" rx="12.4" ry="5.5" fill="#58d44a" transform="rotate(199 396.7 175.3)"/>
<ellipse cx="415.4" cy="169.0" rx="12.4" ry="5.5" fill="#2fa533" transform="rotate(304 415.4 169.0)"/>
<ellipse cx="393.0" cy="164.4" rx="11.6" ry="5.5" fill="#37b338" transform="rotate(195 393.0 164.4)"/>
<ellipse cx="411.4" cy="158.5" rx="11.6" ry="5.5" fill="#2fa533" transform="rotate(309 411.4 158.5)"/>
<ellipse cx="399.3" cy="154.2" rx="13.0" ry="5.5" fill="#58d44a" transform="rotate(250 399.3 154.2)"/>
<path d="M498.0 140.0L438.9 150.4" stroke="#9bbf4a" stroke-width="1" fill="none"/>
<ellipse cx="485.4" cy="150.5" rx="10.0" ry="4.5" fill="#2fa533" transform="rotate(116 485.4 150.5)"/>
<ellipse cx="483.4" cy="133.7" rx="10.0" ry="4.5" fill="#4ccc44" transform="rotate(231 483.4 133.7)"/>
<ellipse cx="474.5" cy="153.5" rx="10.6" ry="4.5" fill="#7de862" transform="rotate(109 474.5 153.5)"/>
<ellipse cx="471.5" cy="135.1" rx="10.6" ry="4.5" fill="#37b338" transform="rotate(233 471.5 135.1)"/>
<ellipse cx="462.3" cy="155.8" rx="10.9" ry="4.5" fill="#58d44a" transform="rotate(110 462.3 155.8)"/>
<ellipse cx="458.5" cy="137.8" rx="10.9" ry="4.5" fill="#58d44a" transform="rotate(226 458.5 137.8)"/>
<ellipse cx="451.6" cy="157.7" rx="10.3" ry="4.5" fill="#37b338" transform="rotate(105 451.6 157.7)"/>
<ellipse cx="448.4" cy="139.2" rx="10.3" ry="4.5" fill="#37b338" transform="rotate(236 448.4 139.2)"/>
<ellipse cx="437.8" cy="158.4" rx="9.8" ry="4.5" fill="#58d44a" transform="rotate(118 437.8 158.4)"/>
<ellipse cx="436.6" cy="142.0" rx="9.8" ry="4.5" fill="#37b338" transform="rotate(233 436.6 142.0)"/>
<ellipse cx="430.2" cy="151.9" rx="11.0" ry="4.5" fill="#6be055" transform="rotate(170 430.2 151.9)"/>
<ellipse cx="366.0" cy="128.0" rx="16.0" ry="5.0" fill="#58d44a" transform="rotate(-12 366.0 128.0)"/>
<ellipse cx="382.0" cy="104.0" rx="12.0" ry="4.5" fill="#4ccc44" transform="rotate(-80 382.0 104.0)"/>
<ellipse cx="398.0" cy="112.0" rx="10.0" ry="4.0" fill="#43c63f" transform="rotate(-70 398.0 112.0)"/>
<ellipse cx="350.0" cy="140.0" rx="14.0" ry="4.0" fill="#4ccc44" transform="rotate(10 350.0 140.0)"/>
<ellipse cx="400.0" cy="150.0" rx="14.0" ry="5.0" fill="#6be055" transform="rotate(-20 400.0 150.0)"/>
<ellipse cx="430.0" cy="170.0" rx="16.0" ry="7.0" fill="#58d44a" transform="rotate(-35 430.0 170.0)"/>
<ellipse cx="410.0" cy="190.0" rx="14.0" ry="7.0" fill="#58d44a" transform="rotate(20 410.0 190.0)"/>
<ellipse cx="455.0" cy="190.0" rx="16.0" ry="7.0" fill="#58d44a" transform="rotate(-50 455.0 190.0)"/>
<ellipse cx="480.0" cy="160.0" rx="15.0" ry="6.0" fill="#58d44a" transform="rotate(-30 480.0 160.0)"/>
<ellipse cx="440.0" cy="135.0" rx="13.0" ry="5.0" fill="#4ccc44" transform="rotate(-15 440.0 135.0)"/>
<ellipse cx="470.0" cy="128.0" rx="12.0" ry="5.0" fill="#58d44a" transform="rotate(20 470.0 128.0)"/>
<ellipse cx="395.0" cy="205.0" rx="16.0" ry="6.0" fill="#43c63f" transform="rotate(-10 395.0 205.0)"/>
<ellipse cx="350.0" cy="205.0" rx="14.0" ry="4.0" fill="#2fa533" transform="rotate(-25 350.0 205.0)"/>
<ellipse cx="488.0" cy="60.0" rx="9.0" ry="3.5" fill="#4ccc44" transform="rotate(-60 488.0 60.0)"/>
<ellipse cx="478.0" cy="30.0" rx="9.0" ry="3.0" fill="#6be055" transform="rotate(-40 478.0 30.0)"/>
<ellipse cx="460.0" cy="14.0" rx="10.0" ry="3.5" fill="#37b338" transform="rotate(-25 460.0 14.0)"/>
<ellipse cx="430.0" cy="8.0" rx="10.0" ry="3.5" fill="#6be055" transform="rotate(-20 430.0 8.0)"/>
<ellipse cx="352.0" cy="168.0" rx="13.0" ry="6.0" fill="#43c63f" transform="rotate(-20 352.0 168.0)"/>
<ellipse cx="366.0" cy="186.0" rx="14.0" ry="7.0" fill="#6be055" transform="rotate(15 366.0 186.0)"/>
<ellipse cx="380.0" cy="170.0" rx="12.0" ry="6.0" fill="#4ccc44" transform="rotate(-40 380.0 170.0)"/>
<ellipse cx="392.0" cy="188.0" rx="14.0" ry="7.0" fill="#7de862" transform="rotate(-15 392.0 188.0)"/>
<ellipse cx="360.0" cy="204.0" rx="14.0" ry="6.0" fill="#7de862" transform="rotate(-8 360.0 204.0)"/>
<ellipse cx="384.0" cy="204.0" rx="13.0" ry="6.0" fill="#37b338" transform="rotate(20 384.0 204.0)"/>
<ellipse cx="372.0" cy="152.0" rx="12.0" ry="5.0" fill="#58d44a" transform="rotate(-30 372.0 152.0)"/>
<ellipse cx="346.0" cy="190.0" rx="10.0" ry="4.0" fill="#7de862" transform="rotate(-50 346.0 190.0)"/>
<ellipse cx="404.0" cy="168.0" rx="13.0" ry="6.0" fill="#43c63f" transform="rotate(30 404.0 168.0)"/>
<ellipse cx="378.0" cy="104.0" rx="8.0" ry="4.5" fill="#f3efd2"/>
<ellipse cx="377.0" cy="103.0" rx="4.8" ry="2.7" fill="#fffbe8"/>
<ellipse cx="452.0" cy="61.0" rx="6.0" ry="4.0" fill="#f3efd2"/>
<ellipse cx="451.0" cy="60.0" rx="3.6" ry="2.4" fill="#fffbe8"/>
<ellipse cx="492.0" cy="91.0" rx="5.0" ry="10.0" fill="#f3efd2"/>
<ellipse cx="491.0" cy="90.0" rx="3.0" ry="6.0" fill="#fffbe8"/>
<ellipse cx="466.0" cy="134.0" rx="6.0" ry="4.0" fill="#f3efd2"/>
<ellipse cx="465.0" cy="133.0" rx="3.6" ry="2.4" fill="#fffbe8"/>
<ellipse cx="444.0" cy="140.0" rx="7.0" ry="3.5" fill="#f3efd2"/>
<ellipse cx="443.0" cy="139.0" rx="4.2" ry="2.1" fill="#fffbe8"/>
<ellipse cx="475.0" cy="75.0" rx="5.0" ry="3.0" fill="#f3efd2"/>
<ellipse cx="474.0" cy="74.0" rx="3.0" ry="1.8" fill="#fffbe8"/>
<ellipse cx="479.0" cy="122.0" rx="4.0" ry="3.0" fill="#f3efd2"/>
<ellipse cx="478.0" cy="121.0" rx="2.4" ry="1.8" fill="#fffbe8"/>
<ellipse cx="420.0" cy="128.0" rx="4.0" ry="2.5" fill="#f3efd2"/>
<ellipse cx="419.0" cy="127.0" rx="2.4" ry="1.5" fill="#fffbe8"/>
</g>
</svg>
<div class="a dl" id="d7" style="left:78.0px;top:479.9px;font-size:23.2px;line-height:40px;color:#2e74b5;font-family:'DejaVu Sans Light','DejaVu Sans',sans-serif;font-weight:200;transform-origin:0 50%;transform:scaleX(0.9799);letter-spacing:-0.6px;">Take a Hike</div>
<div class="a dl" id="d8" style="left:76.3px;top:512.2px;font-size:10.6px;line-height:20px;color:#262626;font-family:'DejaVu Sans Light','DejaVu Sans',sans-serif;font-weight:200;word-spacing:1.519px;">If you’re planning a day hike in the park, you won’t need a hiking permit; however, you will</div>
<div class="a dl" id="d9" style="left:76.3px;top:527.2px;font-size:10.6px;line-height:20px;color:#262626;font-family:'DejaVu Sans Light','DejaVu Sans',sans-serif;font-weight:200;word-spacing:0.782px;">need one for overnight hikes. In the summer, simply pick up a permit at any ranger station in</div>
<div class="a dl" id="d10" style="left:76.3px;top:541.5px;font-size:10.6px;line-height:20px;color:#262626;font-family:'DejaVu Sans Light','DejaVu Sans',sans-serif;font-weight:200;word-spacing:0.921px;">the park. In the winter, you’ll need to get a permit at the Longmire Ranger Station. You’ll find</div>
<div class="a dl" id="d11" style="left:76.3px;top:556.2px;font-size:10.6px;line-height:20px;color:#262626;font-family:'DejaVu Sans Light','DejaVu Sans',sans-serif;font-weight:200;word-spacing:1.964px;">more than 260 miles of trails for day hiking. Trails lead through peaceful old growth forest,</div>
<div class="a dl" id="d12" style="left:76.3px;top:570.6px;font-size:10.6px;line-height:20px;color:#262626;font-family:'DejaVu Sans Light','DejaVu Sans',sans-serif;font-weight:200;word-spacing:-0.300px;">colorful meadows (late summer) and river valleys. Check out the most popular day hikes at both</div>
<div class="a dl" id="d13" style="left:76.3px;top:585.0px;font-size:10.6px;line-height:20px;color:#262626;font-family:'DejaVu Sans Light','DejaVu Sans',sans-serif;font-weight:200;transform-origin:0 50%;transform:scaleX(1.0244);">Paradise and Longmire.</div>
<div class="b" style="left:77.0px;top:609.0px;width:498.5px;height:23.0px;background:#5b9bd5"></div>
<div class="b" style="left:77.0px;top:632.0px;width:498.5px;height:33.5px;background:#deeaf6"></div>
<div class="b" style="left:77.0px;top:699.5px;width:498.5px;height:36.5px;background:#deeaf6"></div>
<div class="b" style="left:77.0px;top:665.0px;width:498.5px;height:1.0px;background:#9dc3e6"></div>
<div class="b" style="left:77.0px;top:698.9px;width:498.5px;height:1.0px;background:#9dc3e6"></div>
<div class="b" style="left:77.0px;top:735.5px;width:498.5px;height:1.0px;background:#9dc3e6"></div>
<div class="b" style="left:76.5px;top:632.0px;width:1.0px;height:104.5px;background:#9dc3e6"></div>
<div class="b" style="left:149.8px;top:632.0px;width:1.0px;height:104.5px;background:#9dc3e6"></div>
<div class="b" style="left:325.0px;top:632.0px;width:1.0px;height:104.5px;background:#9dc3e6"></div>
<div class="b" style="left:428.1px;top:632.0px;width:1.0px;height:104.5px;background:#9dc3e6"></div>
<div class="b" style="left:501.2px;top:632.0px;width:1.0px;height:104.5px;background:#9dc3e6"></div>
<div class="b" style="left:574.5px;top:632.0px;width:1.0px;height:104.5px;background:#9dc3e6"></div>
<div class="a dl" id="d14" style="left:83.0px;top:607.0px;font-size:10.9px;line-height:20px;color:#fff;font-family:'DejaVu Sans',sans-serif;font-weight:400;transform-origin:0 50%;transform:scaleX(0.9656);">Trail</div>
<div class="a dl" id="d15" style="left:156.9px;top:607.0px;font-size:10.9px;line-height:20px;color:#fff;font-family:'DejaVu Sans',sans-serif;font-weight:400;transform-origin:0 50%;transform:scaleX(0.9837);">Description of Hike</div>
<div class="a dl" id="d16" style="left:332.3px;top:607.0px;font-size:10.9px;line-height:20px;color:#fff;font-family:'DejaVu Sans',sans-serif;font-weight:400;transform-origin:0 50%;transform:scaleX(1.0030);">Trailhead</div>
<div class="a dl" id="d17" style="left:434.8px;top:607.0px;font-size:10.9px;line-height:20px;color:#fff;font-family:'DejaVu Sans',sans-serif;font-weight:400;transform-origin:0 50%;transform:scaleX(0.9869);">Distance</div>
<div class="a dl" id="d18" style="left:507.5px;top:607.0px;font-size:10.9px;line-height:20px;color:#fff;font-family:'DejaVu Sans',sans-serif;font-weight:400;transform-origin:0 50%;transform:scaleX(1.0402);">Round Trip</div>
<div class="a dl" id="d19" style="left:104.3px;top:604.4px;font-size:6px;line-height:20px;color:#fff;font-family:'DejaVu Sans',sans-serif;font-weight:400;transform-origin:0 50%;transform:scaleX(0.9665);font-style:italic;">1</div>
<div class="a dl" id="d20" style="left:82.8px;top:628.7px;font-size:9.8px;line-height:20px;color:#333;font-family:'DejaVu Sans',sans-serif;font-weight:400;transform-origin:0 50%;transform:scaleX(1.0239);">Nisqually</div>
<div class="a dl" id="d21" style="left:82.8px;top:641.8px;font-size:9.8px;line-height:20px;color:#333;font-family:'DejaVu Sans',sans-serif;font-weight:400;transform-origin:0 50%;transform:scaleX(0.9958);">Vista Trail</div>
<div class="a dl" id="d22" style="left:82.8px;top:663.1px;font-size:9.8px;line-height:20px;color:#333;font-family:'DejaVu Sans',sans-serif;font-weight:400;transform-origin:0 50%;transform:scaleX(1.0530);">Bench &amp;</div>
<div class="a dl" id="d23" style="left:82.8px;top:676.2px;font-size:9.8px;line-height:20px;color:#333;font-family:'DejaVu Sans',sans-serif;font-weight:400;transform-origin:0 50%;transform:scaleX(1.0266);">Snow Lakes</div>
<div class="a dl" id="d24" style="left:82.8px;top:697.4px;font-size:9.8px;line-height:20px;color:#333;font-family:'DejaVu Sans',sans-serif;font-weight:400;transform-origin:0 50%;transform:scaleX(1.1674);">Twin Firs</div>
<div class="a dl" id="d25" style="left:82.8px;top:712.2px;font-size:9.8px;line-height:20px;color:#333;font-family:'DejaVu Sans',sans-serif;font-weight:400;transform-origin:0 50%;transform:scaleX(1.1428);">Loop Trail</div>
<div class="a dl" id="d26" style="left:156.6px;top:628.7px;font-size:9.8px;line-height:20px;color:#262626;font-family:'DejaVu Sans Light','DejaVu Sans',sans-serif;font-weight:200;transform-origin:0 50%;transform:scaleX(1.0039);">Enjoy excellent views of Mount</div>
<div class="a dl" id="d27" style="left:156.6px;top:641.8px;font-size:9.8px;line-height:20px;color:#262626;font-family:'DejaVu Sans Light','DejaVu Sans',sans-serif;font-weight:200;transform-origin:0 50%;transform:scaleX(0.9877);">Rainier and the Nisqually Glacier.</div>
<div class="a dl" id="d28" style="left:156.6px;top:663.1px;font-size:9.8px;line-height:20px;color:#262626;font-family:'DejaVu Sans Light','DejaVu Sans',sans-serif;font-weight:200;transform-origin:0 50%;transform:scaleX(0.9788);">Enjoy two lakes along this trail.</div>
<div class="a dl" id="d29" style="left:156.6px;top:676.2px;font-size:9.8px;line-height:20px;color:#262626;font-family:'DejaVu Sans Light','DejaVu Sans',sans-serif;font-weight:200;transform-origin:0 50%;transform:scaleX(0.9711);">See bear grass &amp; flowers.</div>
<div class="a dl" id="d30" style="left:156.6px;top:697.9px;font-size:9.8px;line-height:20px;color:#262626;font-family:'DejaVu Sans Light','DejaVu Sans',sans-serif;font-weight:200;transform-origin:0 50%;transform:scaleX(0.9614);">This short loop trail passes</div>
<div class="a dl" id="d31" style="left:156.6px;top:710.5px;font-size:9.8px;line-height:20px;color:#262626;font-family:'DejaVu Sans Light','DejaVu Sans',sans-serif;font-weight:200;transform-origin:0 50%;transform:scaleX(1.0416);">through old growth forest</div>
<div class="a dl" id="d32" style="left:332.3px;top:628.7px;font-size:9.8px;line-height:20px;color:#262626;font-family:'DejaVu Sans Light','DejaVu Sans',sans-serif;font-weight:200;transform-origin:0 50%;transform:scaleX(1.0283);">West end of the</div>
<div class="a dl" id="d33" style="left:332.3px;top:641.8px;font-size:9.8px;line-height:20px;color:#262626;font-family:'DejaVu Sans Light','DejaVu Sans',sans-serif;font-weight:200;transform-origin:0 50%;transform:scaleX(0.9962);">lower parking lot.</div>
<div class="a dl" id="d34" style="left:332.3px;top:663.1px;font-size:9.8px;line-height:20px;color:#262626;font-family:'DejaVu Sans Light','DejaVu Sans',sans-serif;font-weight:200;transform-origin:0 50%;transform:scaleX(0.9861);">Stevens Canyon</div>
<div class="a dl" id="d35" style="left:332.3px;top:676.2px;font-size:9.8px;line-height:20px;color:#262626;font-family:'DejaVu Sans Light','DejaVu Sans',sans-serif;font-weight:200;transform-origin:0 50%;transform:scaleX(0.9638);">Road,</div>
<div class="a dl" id="d36" style="left:332.3px;top:698.3px;font-size:9.8px;line-height:20px;color:#262626;font-family:'DejaVu Sans Light','DejaVu Sans',sans-serif;font-weight:200;transform-origin:0 50%;transform:scaleX(0.9835);">2 miles west of</div>
<div class="a dl" id="d37" style="left:332.3px;top:710.5px;font-size:9.8px;line-height:20px;color:#262626;font-family:'DejaVu Sans Light','DejaVu Sans',sans-serif;font-weight:200;transform-origin:0 50%;transform:scaleX(1.0042);">Longmire.</div>
<div class="a dl" id="d38" style="left:434.8px;top:628.7px;font-size:9.8px;line-height:20px;color:#262626;font-family:'DejaVu Sans Light','DejaVu Sans',sans-serif;font-weight:200;transform-origin:0 50%;transform:scaleX(0.9220);">1.2 miles,</div>
<div class="a dl" id="d39" style="left:434.8px;top:641.8px;font-size:9.8px;line-height:20px;color:#262626;font-family:'DejaVu Sans Light','DejaVu Sans',sans-serif;font-weight:200;transform-origin:0 50%;transform:scaleX(0.9802);">loop trail</div>
<div class="a dl" id="d40" style="left:434.8px;top:663.1px;font-size:9.8px;line-height:20px;color:#262626;font-family:'DejaVu Sans Light','DejaVu Sans',sans-serif;font-weight:200;transform-origin:0 50%;transform:scaleX(0.9458);">2.5 miles</div>
<div class="a dl" id="d41" style="left:434.8px;top:676.2px;font-size:9.8px;line-height:20px;color:#262626;font-family:'DejaVu Sans Light','DejaVu Sans',sans-serif;font-weight:200;transform-origin:0 50%;transform:scaleX(1.0206);">roundtrip</div>
<div class="a dl" id="d42" style="left:434.8px;top:704.5px;font-size:9.8px;line-height:20px;color:#262626;font-family:'DejaVu Sans Light','DejaVu Sans',sans-serif;font-weight:200;transform-origin:0 50%;transform:scaleX(0.9458);">0.4 miles</div>
<div class="a dl" id="d43" style="left:507.5px;top:635.2px;font-size:9.8px;line-height:20px;color:#262626;font-family:'DejaVu Sans Light','DejaVu Sans',sans-serif;font-weight:200;transform-origin:0 50%;transform:scaleX(0.9864);">45 minutes</div>
<div class="a dl" id="d44" style="left:507.5px;top:673.4px;font-size:9.8px;line-height:20px;color:#262626;font-family:'DejaVu Sans Light','DejaVu Sans',sans-serif;font-weight:200;transform-origin:0 50%;transform:scaleX(1.0107);">2 hours</div>
<div class="a dl" id="d45" style="left:507.5px;top:707.7px;font-size:9.8px;line-height:20px;color:#262626;font-family:'DejaVu Sans Light','DejaVu Sans',sans-serif;font-weight:200;transform-origin:0 50%;transform:scaleX(0.9864);">20 minutes</div>
<div class="b" style="left:77.5px;top:760.0px;width:156.0px;height:1.0px;background:#444"></div>
<div class="a dl" id="d46" style="left:76.8px;top:761.6px;font-size:5.5px;line-height:20px;color:#262626;font-family:'DejaVu Sans Light','DejaVu Sans',sans-serif;font-weight:200;transform-origin:0 50%;transform:scaleX(1.0571);">1</div>
<div class="a dl" id="d47" style="left:82.8px;top:763.7px;font-size:8.8px;line-height:20px;color:#262626;font-family:'DejaVu Sans Light','DejaVu Sans',sans-serif;font-weight:200;transform-origin:0 50%;transform:scaleX(1.0197);">Check out this site for other great hikes. www.nps.gov/mora/planyourvisit/day-hiking-at-mount-rainier.htm</div>
</div>
<div id="vscroll">
  <div class="b" style="left:0;top:1px;width:15px;height:18px;background:#fff"></div>
  <div class="b" style="left:3px;top:7px;width:0;height:0;border-left:4.500px solid transparent;border-right:4.500px solid transparent;border-bottom:5px solid #6a6a6a"></div>
  <div class="b" style="left:0;top:173.500px;width:15px;height:139px;background:#fff;border:1px solid #ababab;border-right:none;box-sizing:border-box"></div>
  <div class="b" style="left:0;top:784px;width:15px;height:19px;background:#fff"></div>
  <div class="b" style="left:3px;top:791px;width:0;height:0;border-left:4.500px solid transparent;border-right:4.500px solid transparent;border-top:5px solid #6a6a6a"></div>
</div>
<div id="status">
  <div class="a" id="pg5" style="left:11px;top:8px;font-size:11.600px">Page 5 of 6</div>
  <svg style="left:120px;top:9px" width="18" height="16" viewBox="0 0 18 16" fill="none" stroke="#666" stroke-width="1">
    <path d="M8.500 3.500V13.500H1.500V2.500h7M8.500 13.500h4v-3"/><path d="M8.500 13.500v1.500" />
    <path d="M14.500 1.500l1.800 1.800-5.600 5.600-2.400.6.600-2.400z" fill="#666" stroke="none"/>
  </svg>
  <!-- read mode -->
  <svg style="left:1325px;top:8px" width="23" height="20" viewBox="0 0 23 20" fill="none" stroke="#777" stroke-width="1">
    <path d="M11.500 3c-3-1.500-6.500-1.500-10-.8v15c3.500-.7 7-.7 10 .8 3-1.500 6.500-1.500 10-.8v-15c-3.500-.7-7-.7-10 .8z"/>
    <path d="M11.500 3v16" stroke-dasharray="1.500 1"/>
    <path d="M3.500 5h6M3.500 7.500h6M3.500 10h6M3.500 12.500h6M3.500 15h6M13.500 5h6M13.500 7.500h6M13.500 10h6M13.500 12.500h6M13.500 15h6" stroke="#999"/>
  </svg>
  <!-- print layout selected -->
  <div class="b" style="left:1358px;top:0;width:43px;height:33px;background:#c8c8c8"></div>
  <svg style="left:1369px;top:9px" width="21" height="20" viewBox="0 0 21 20" fill="none" stroke="#6a6a6a" stroke-width="1">
    <rect x="0.500" y="0.500" width="19.500" height="18.500"/>
    <path d="M3 3.500h14.500M3 6h14.500M3 8.500h14.500M3 11h14.500M3 13.500h14.500M3 16h14.500" stroke-width="1.200"/>
  </svg>
  <!-- web layout -->
  <svg style="left:1412px;top:8px" width="23" height="22" viewBox="0 0 23 22" fill="none" stroke="#777" stroke-width="1">
    <path d="M8 16.500H0.500V0.500h17V8"/>
    <path d="M3 3.500h12M3 6h12M3 8.500h9M3 11h6" stroke="#999"/>
    <circle cx="15.500" cy="15" r="5.500" fill="#6a6a6a" stroke="#555"/>
    <path d="M12 12.500c1.500.5 2 1.500 1.500 3s.5 2.500 1.500 3M17 10.500c-1 1-.5 2 .5 2.500s2 1.500 2.500 3" stroke="#eee" stroke-width="1"/>
  </svg>
  <div class="b" style="left:1448px;top:16px;width:9px;height:2px;background:#6a6a6a"></div>
  <div class="b" style="left:1461px;top:16.500px;width:114px;height:1px;background:#7a7a7a"></div>
  <div class="b" style="left:1498px;top:10px;width:4px;height:14px;background:#555"></div>
  <div class="b" style="left:1518px;top:14px;width:1px;height:6px;background:#8a8a8a"></div>
  <div class="b" style="left:1579px;top:16px;width:11px;height:2px;background:#555"></div>
  <div class="b" style="left:1583.500px;top:11.500px;width:2px;height:11px;background:#555"></div>
  <div class="a" id="z71" style="left:1607px;top:8px;font-size:12px">71%</div>
</div>
</body>
</html>
